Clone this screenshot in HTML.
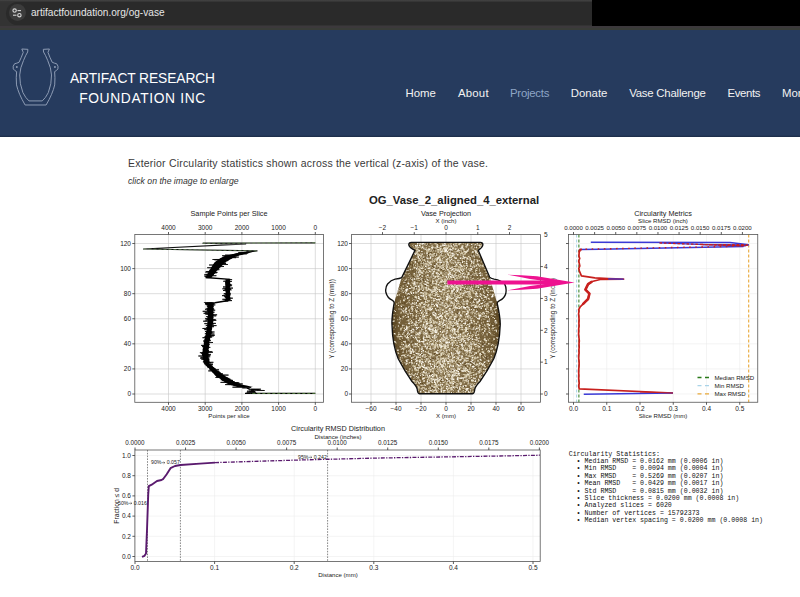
<!DOCTYPE html>
<html><head><meta charset="utf-8">
<style>
*{margin:0;padding:0;box-sizing:border-box}
html,body{width:800px;height:597px;overflow:hidden;background:#fff;font-family:"Liberation Sans",sans-serif}
.abs{position:absolute}
#bar{left:0;top:0;width:800px;height:30px;background:#3c393c}
#bar .top{left:0;top:0;width:592px;height:25.5px;background:linear-gradient(#444 0,#363636 1.5px,#333 3px)}
#bar .grn{left:0;top:27.5px;width:800px;height:2.5px;background:#393c37}
#bar .blk{left:592px;top:0;width:208px;height:25.5px;background:#000}
#bar .pill{left:6px;top:2px;width:600px;height:23px;border-radius:11.5px;background:#2a2a2a}
#bar .ic{left:8.5px;top:3.8px;width:17.2px;height:17.2px;border-radius:50%;background:#3c3c3c}
#bar .url{left:31px;top:7px;font-size:10.1px;color:#e6e6e6;letter-spacing:0px}
#hdr{left:0;top:30px;width:800px;height:107px;background:#263b5e}
#hdr .shade{left:0;top:104.5px;width:800px;height:2.5px;background:linear-gradient(#263b5e,#1b2a45)}
.nav{top:86.8px;font-size:11.4px;color:#f2f2f2;white-space:nowrap}
.brand{left:40px;width:205px;text-align:center;color:#fff;font-size:13.8px;line-height:20.2px;top:69px}
.intro{left:128px;top:157px;font-size:10.5px;letter-spacing:0.2px;color:#3a3a3a;white-space:nowrap}
.click{left:128px;top:176px;font-size:8.7px;color:#333;font-style:italic;white-space:nowrap}
.fig{position:absolute;left:0;top:0}
</style></head><body>
<div id="bar" class="abs">
 <div class="abs top"></div>
 <div class="abs grn"></div>
 <div class="abs pill"></div>
 <div class="abs blk"></div>
 <div class="abs ic"></div>
 <svg class="abs" style="left:10px;top:6.3px" width="14" height="14" viewBox="0 0 14 14">
  <circle cx="4.6" cy="4.6" r="1.7" fill="none" stroke="#d8d8d8" stroke-width="1.1"/>
  <line x1="7.5" y1="4.6" x2="11" y2="4.6" stroke="#d8d8d8" stroke-width="1.1"/>
  <circle cx="9.4" cy="9.2" r="1.7" fill="none" stroke="#d8d8d8" stroke-width="1.1"/>
  <line x1="3" y1="9.2" x2="6.5" y2="9.2" stroke="#d8d8d8" stroke-width="1.1"/>
 </svg>
 <div class="abs url">artifactfoundation.org/og-vase</div>
</div>
<div id="hdr" class="abs">
 <div class="abs shade"></div>
</div>
<svg class="abs" style="left:8px;top:44px" width="55" height="66" viewBox="0 0 498 597">
 <g fill="none" stroke="#8e9cb4" stroke-width="9" stroke-linejoin="round">
 <path d="M125,45 L180,48 L178,72 Q160,100 140,150 Q110,215 106,280 Q104,360 135,440 Q160,490 190,515 L310,515 Q340,490 365,440 Q396,360 394,280 Q390,215 360,150 Q340,100 322,72 L320,48 L375,45 L362,75 Q378,120 400,165 Q420,175 440,178 Q460,200 452,225 Q440,242 422,250 Q428,300 423,370 Q405,450 345,552 L155,552 Q95,450 77,370 Q72,300 78,250 Q60,242 48,225 Q40,200 60,178 Q80,175 100,165 Q122,120 138,75 Z"/>
 </g>
 <circle cx="80" cy="208" r="9" fill="#8e9cb4"/>
 <circle cx="425" cy="208" r="9" fill="#8e9cb4"/>
</svg>
<div class="abs brand"><span style="letter-spacing:-0.1px">ARTIFACT RESEARCH</span><br><span style="letter-spacing:0.64px">FOUNDATION INC</span></div>
<div class="abs nav" style="left:405.5px">Home</div>
<div class="abs nav" style="left:458px;letter-spacing:0.2px">About</div>
<div class="abs nav" style="left:510px;color:#8ea6c6;letter-spacing:-0.25px">Projects</div>
<div class="abs nav" style="left:570.7px">Donate</div>
<div class="abs nav" style="left:629.2px;letter-spacing:-0.22px">Vase Challenge</div>
<div class="abs nav" style="left:727.5px;letter-spacing:-0.38px">Events</div>
<div class="abs nav" style="left:782px">More</div>
<div class="abs intro">Exterior Circularity statistics shown across the vertical (z-axis) of the vase.</div>
<div class="abs click">click on the image to enlarge</div>
<svg class="fig" width="800" height="597" viewBox="0 0 800 597" font-family="Liberation Sans, sans-serif"><line x1="315.30" y1="234.5" x2="315.30" y2="402.3" stroke="#c6c6c6" stroke-width="0.6"/><line x1="278.60" y1="234.5" x2="278.60" y2="402.3" stroke="#c6c6c6" stroke-width="0.6"/><line x1="241.90" y1="234.5" x2="241.90" y2="402.3" stroke="#c6c6c6" stroke-width="0.6"/><line x1="205.20" y1="234.5" x2="205.20" y2="402.3" stroke="#c6c6c6" stroke-width="0.6"/><line x1="168.50" y1="234.5" x2="168.50" y2="402.3" stroke="#c6c6c6" stroke-width="0.6"/><line x1="134.8" y1="394.00" x2="323.5" y2="394.00" stroke="#c6c6c6" stroke-width="0.6"/><line x1="134.8" y1="368.92" x2="323.5" y2="368.92" stroke="#c6c6c6" stroke-width="0.6"/><line x1="134.8" y1="343.84" x2="323.5" y2="343.84" stroke="#c6c6c6" stroke-width="0.6"/><line x1="134.8" y1="318.76" x2="323.5" y2="318.76" stroke="#c6c6c6" stroke-width="0.6"/><line x1="134.8" y1="293.68" x2="323.5" y2="293.68" stroke="#c6c6c6" stroke-width="0.6"/><line x1="134.8" y1="268.60" x2="323.5" y2="268.60" stroke="#c6c6c6" stroke-width="0.6"/><line x1="134.8" y1="243.52" x2="323.5" y2="243.52" stroke="#c6c6c6" stroke-width="0.6"/><polyline points="203.9,302.5 208.3,302.7 212.3,302.9 205.0,303.2 214.5,303.4 211.3,303.6 212.2,303.8 205.0,304.0 213.4,304.3 209.0,304.5 206.0,304.7 215.3,304.9 211.6,305.1 209.2,305.4 211.1,305.6 211.9,305.8 206.8,306.0 210.1,306.2 207.4,306.5 212.1,306.7 208.2,306.9 208.9,307.1 213.1,307.3 209.6,307.6 210.4,307.8 212.7,308.0 211.6,308.2 206.5,308.4 207.8,308.7 214.1,308.9 206.9,309.1 205.0,309.3 213.2,309.5 207.8,309.8 208.9,310.0 215.2,310.2 206.8,310.4 210.4,310.6 207.9,310.9 210.7,311.1 202.7,311.3 208.1,311.5 209.8,311.7 210.2,312.0 214.5,312.2 208.3,312.4 205.5,312.6 204.9,312.8 210.6,313.1 203.6,313.3 212.7,313.5 210.9,313.7 212.3,313.9 205.4,314.2 213.0,314.4 211.2,314.6 217.1,314.8 212.3,315.0 212.7,315.3 211.3,315.5 214.5,315.7 216.2,315.9 211.0,316.1 210.2,316.4 206.2,316.6 210.2,316.8 212.4,317.0 209.0,317.2 208.4,317.5 207.3,317.7 210.6,317.9 212.0,318.1 211.2,318.3 205.2,318.6 208.7,318.8 211.2,319.0 211.7,319.2 206.6,319.4 215.6,319.7 210.4,319.9 205.4,320.1 216.3,320.3 207.9,320.5 209.8,320.8 211.4,321.0 203.2,321.2 213.3,321.4 208.8,321.6 209.7,321.9 210.2,322.1 207.6,322.3 213.0,322.5 212.0,322.7 208.2,323.0 210.8,323.2 215.9,323.4 204.4,323.6 207.8,323.8 213.7,324.1 211.9,324.3 207.7,324.5 211.7,324.7 210.8,324.9 210.7,325.2 205.8,325.4 216.5,325.6 209.3,325.8 206.9,326.0 210.3,326.3 207.8,326.5 214.0,326.7 208.4,326.9 209.1,327.1 211.3,327.4 206.2,327.6 211.2,327.8 210.0,328.0 208.5,328.2 202.5,328.5 211.5,328.7 209.7,328.9 208.7,329.1 208.0,329.3 204.3,329.6 208.9,329.8 210.6,330.0 207.2,330.2 210.1,330.4 209.8,330.7 210.3,330.9 210.6,331.1 207.2,331.3 205.0,331.5 209.7,331.8 214.5,332.0 206.2,332.2 212.3,332.4 207.1,332.6 206.6,332.9 212.2,333.1 209.6,333.3 207.0,333.5 204.9,333.7 214.4,334.0 210.7,334.2 206.7,334.4 206.8,334.6 209.2,334.8 209.6,335.1 214.8,335.3 208.7,335.5 206.1,335.7 213.9,335.9 208.1,336.2 209.7,336.4 211.4,336.6 204.5,336.8 212.2,337.0 210.8,337.3 209.0,337.5 202.5,337.7 208.9,337.9 205.7,338.1 205.9,338.4 209.4,338.6 207.3,338.8 207.2,339.0 206.4,339.2 206.6,339.5 205.8,339.7 207.8,339.9 207.1,340.1 208.2,340.3 210.8,340.6 205.4,340.8 203.1,341.0 206.0,341.2 209.0,341.4 204.8,341.7 204.3,341.9 207.6,342.1 210.1,342.3 213.0,342.5 206.6,342.8 207.8,343.0 207.1,343.2 207.7,343.4 205.1,343.6 204.5,343.9 208.8,344.1 209.3,344.3 209.6,344.5 206.1,344.7 207.9,345.0 206.4,345.2 201.1,345.4 207.7,345.6 207.8,345.8 207.8,346.1 202.0,346.3 203.2,346.5 204.1,346.7 202.6,346.9 208.6,347.2 210.3,347.4 205.2,347.6 208.1,347.8 207.0,348.0 208.4,348.3 204.2,348.5 204.8,348.7 208.3,348.9 206.4,349.1 206.8,349.4 205.6,349.6 205.4,349.8 202.8,350.0 203.7,350.2 204.4,350.5 207.1,350.7 206.1,350.9 203.1,351.1 207.1,351.3 206.5,351.6 211.9,351.8 207.4,352.0 213.0,352.2 204.0,352.4 199.9,352.7 204.5,352.9 203.1,353.1 203.4,353.3 201.3,353.5 205.9,353.8 202.2,354.0 203.1,354.2 210.9,354.4 205.0,354.6 204.6,354.9 205.3,355.1 210.1,355.3 210.4,355.5 207.7,355.7 198.4,356.0 205.8,356.2 206.3,356.4 203.0,356.6 210.2,356.8 204.8,357.1 200.6,357.3 205.5,357.5 205.8,357.7 203.9,357.9 200.2,358.2 201.1,358.4 207.0,358.6 204.0,358.8 209.4,359.0 201.4,359.3 205.4,359.5 206.9,359.7 204.9,359.9 207.0,360.1 208.6,360.4 205.4,360.6 208.4,360.8 205.9,361.0 209.6,361.2 205.2,361.5 207.2,361.7 202.9,361.9 203.9,362.1 213.4,362.3 206.9,362.6 211.0,362.8 208.0,363.0 206.1,363.2 206.3,363.4 204.7,363.7 204.6,363.9 212.9,364.1 206.7,364.3 209.0,364.5 212.8,364.8 211.0,365.0 206.4,365.2 208.1,365.4 205.9,365.6 208.5,365.9 207.2,366.1 207.9,366.3 212.7,366.5 211.6,366.7 209.4,367.0 211.1,367.2 207.7,367.4 208.8,367.6 211.5,367.8 212.5,368.1 214.6,368.3 213.7,368.5 215.5,368.7 209.2,368.9 209.7,369.2 212.0,369.4 214.8,369.6 219.0,369.8 213.9,370.0 212.7,370.3 216.0,370.5 211.3,370.7 208.3,370.9 217.4,371.1 219.4,371.4 212.9,371.6 216.3,371.8 216.3,372.0 213.8,372.2 217.7,372.5 214.8,372.7 214.6,372.9 221.0,373.1 214.8,373.3 214.3,373.6 222.9,373.8 216.2,374.0 215.1,374.2 219.6,374.4 219.0,374.7 220.4,374.9 228.5,375.1 217.1,375.3 218.4,375.5 220.1,375.8 221.5,376.0 216.1,376.2 221.2,376.4 222.1,376.6 223.6,376.9 224.4,377.1 216.8,377.3 215.5,377.5 227.7,377.7 226.2,378.0 221.6,378.2 229.2,378.4 222.2,378.6 227.5,378.8 230.3,379.1 229.6,379.3 221.2,379.5 220.8,379.7 227.3,379.9 226.6,380.2 233.0,380.4 227.8,380.6 228.9,380.8 227.0,381.0 224.8,381.3 230.6,381.5 234.4,381.7 231.1,381.9 228.4,382.1 220.5,382.4 238.6,382.6 229.9,382.8 234.1,383.0 239.6,383.2 235.4,383.5 228.1,383.7 242.7,383.9 233.9,384.1 236.2,384.3 225.1,384.6 232.0,384.8 239.3,385.0 236.6,385.2 236.8,385.4 239.3,385.7 241.6,385.9 237.3,386.1 237.3,386.3 237.8,386.5 245.3,386.8 245.0,387.0 232.5,387.2 251.2,387.4 248.5,387.6 242.3,387.9 247.6,388.1 249.4,388.3 246.9,388.5 249.2,388.7 248.2,389.0 260.9,389.2 251.2,389.4 259.5,389.6 249.0,389.8 257.9,390.1 257.5,390.3 264.6,390.5 250.9,390.7 254.1,390.9 247.0,391.2 252.1,391.4 255.2,391.6 249.5,391.8 255.2,392.0 246.7,392.3 256.2,392.5" fill="none" stroke="#000" stroke-width="0.75"/><polygon points="207.0,302.5 206.9,303.0 207.6,303.5 207.3,304.0 207.0,304.5 207.1,305.0 207.6,305.5 207.6,306.0 207.7,306.5 207.7,307.0 207.5,307.5 207.0,308.0 207.9,308.5 207.4,309.0 207.0,309.5 207.9,310.0 207.9,310.5 207.5,311.0 207.4,311.5 208.0,312.0 207.8,312.5 207.6,313.0 207.9,313.5 207.6,314.0 207.4,314.5 208.0,315.0 207.7,315.5 208.3,316.0 208.1,316.5 207.7,317.0 208.4,317.5 208.0,318.0 208.1,318.5 207.9,319.0 208.2,319.5 208.0,320.0 208.1,320.5 207.8,321.0 208.0,321.5 207.8,322.0 207.5,322.5 207.5,323.0 207.8,323.5 207.5,324.0 207.1,324.5 207.8,325.0 207.0,325.5 207.5,326.0 207.6,326.5 206.6,327.0 207.1,327.5 207.2,328.0 206.7,328.5 207.2,329.0 206.8,329.5 206.9,330.0 206.2,330.5 206.6,331.0 206.5,331.5 206.2,332.0 205.9,332.5 206.2,333.0 205.7,333.5 206.1,334.0 205.7,334.5 205.6,335.0 205.4,335.5 204.9,336.0 204.9,336.5 205.0,337.0 204.7,337.5 205.0,338.0 204.5,338.5 205.1,339.0 204.1,339.5 204.0,340.0 204.3,340.5 204.3,341.0 204.2,341.5 203.5,342.0 203.8,342.5 204.2,343.0 203.5,343.5 203.9,344.0 203.7,344.5 203.8,345.0 203.6,345.5 203.0,346.0 202.8,346.5 203.6,347.0 203.1,347.5 202.8,348.0 203.1,348.5 202.3,349.0 202.8,349.5 202.9,350.0 202.8,350.5 202.4,351.0 202.7,351.5 202.2,352.0 202.4,352.5 201.7,353.0 202.3,353.5 201.8,354.0 202.0,354.5 201.8,355.0 202.2,355.5 202.2,356.0 202.6,356.5 202.9,357.0 203.1,357.5 203.1,358.0 202.7,358.5 202.6,359.0 203.3,359.5 202.9,360.0 203.8,360.5 203.1,361.0 203.3,361.5 203.6,362.0 203.9,362.5 204.0,363.0 203.7,363.5 204.7,364.0 204.4,364.5 205.8,365.0 205.4,365.5 206.4,366.0 207.0,366.5 206.9,367.0 208.0,367.5 208.7,368.0 209.2,368.5 209.5,369.0 209.8,369.5 210.4,370.0 210.2,370.5 211.5,371.0 211.5,371.5 212.0,372.0 212.3,372.5 212.9,373.0 213.4,373.5 214.1,374.0 214.3,374.5 214.6,375.0 215.2,375.5 215.6,376.0 216.6,376.5 216.9,377.0 217.4,377.5 218.9,378.0 219.7,378.5 220.5,379.0 221.1,379.5 221.4,380.0 221.8,380.5 222.5,381.0 224.0,381.5 224.5,382.0 225.0,382.5 225.9,383.0 227.0,383.5 227.8,384.0 228.9,384.5 230.5,385.0 232.7,385.5 233.9,386.0 236.0,386.5 237.0,387.0 253.2,387.0 250.5,386.5 248.6,386.0 246.6,385.5 243.8,385.0 241.9,384.5 239.8,384.0 237.2,383.5 236.6,383.0 235.9,382.5 234.8,382.0 234.7,381.5 232.9,381.0 232.8,380.5 232.1,380.0 231.0,379.5 229.7,379.0 228.6,378.5 227.8,378.0 227.0,377.5 226.8,377.0 225.7,376.5 225.3,376.0 224.6,375.5 223.7,375.0 222.7,374.5 222.3,374.0 221.4,373.5 220.8,373.0 220.1,372.5 219.6,372.0 218.6,371.5 218.2,371.0 217.4,370.5 216.5,370.0 215.8,369.5 215.8,369.0 214.7,368.5 214.2,368.0 214.2,367.5 213.6,367.0 212.4,366.5 212.4,366.0 211.9,365.5 211.4,365.0 210.5,364.5 209.7,364.0 209.2,363.5 209.3,363.0 209.3,362.5 209.1,362.0 209.2,361.5 209.3,361.0 209.3,360.5 209.0,360.0 209.5,359.5 209.1,359.0 208.8,358.5 208.5,358.0 208.9,357.5 208.5,357.0 208.7,356.5 208.6,356.0 208.5,355.5 208.7,355.0 208.8,354.5 208.4,354.0 208.5,353.5 208.9,353.0 208.6,352.5 209.0,352.0 208.6,351.5 208.9,351.0 209.2,350.5 208.7,350.0 208.6,349.5 208.4,349.0 208.8,348.5 208.8,348.0 208.7,347.5 209.0,347.0 209.0,346.5 209.3,346.0 209.4,345.5 208.8,345.0 209.5,344.5 209.2,344.0 209.3,343.5 209.4,343.0 209.6,342.5 209.7,342.0 209.4,341.5 209.2,341.0 210.0,340.5 210.2,340.0 210.2,339.5 210.2,339.0 210.2,338.5 210.1,338.0 210.4,337.5 210.8,337.0 210.4,336.5 211.1,336.0 210.8,335.5 211.3,335.0 210.6,334.5 211.4,334.0 211.3,333.5 210.9,333.0 211.0,332.5 211.5,332.0 211.9,331.5 211.9,331.0 211.3,330.5 212.2,330.0 211.9,329.5 211.9,329.0 212.1,328.5 212.4,328.0 211.7,327.5 212.7,327.0 212.4,326.5 211.8,326.0 212.2,325.5 212.2,325.0 212.9,324.5 212.3,324.0 213.1,323.5 213.2,323.0 213.2,322.5 212.6,322.0 212.8,321.5 213.1,321.0 212.8,320.5 213.3,320.0 213.2,319.5 213.5,319.0 213.2,318.5 213.4,318.0 213.7,317.5 213.5,317.0 213.5,316.5 213.2,316.0 213.7,315.5 213.4,315.0 213.7,314.5 214.0,314.0 213.0,313.5 213.5,313.0 213.4,312.5 213.8,312.0 213.1,311.5 213.2,311.0 213.3,310.5 213.4,310.0 213.9,309.5 213.1,309.0 213.9,308.5 213.0,308.0 213.4,307.5 213.7,307.0 213.8,306.5 213.9,306.0 213.4,305.5 213.7,305.0 213.6,304.5 213.8,304.0 213.4,303.5 213.1,303.0 213.7,302.5" fill="#000"/><polyline points="227.9,279.3 230.3,279.5 232.1,279.7 227.2,280.0 230.1,280.2 227.7,280.4 227.0,280.6 226.8,280.8 224.4,281.1 223.3,281.3 231.8,281.5 228.5,281.7 230.1,281.9 225.5,282.2 228.5,282.4 225.6,282.6 228.7,282.8 228.4,283.0 225.1,283.3 228.9,283.5 226.3,283.7 229.0,283.9 230.3,284.1 226.0,284.4 230.8,284.6 227.6,284.8 232.1,285.0 226.8,285.2 228.7,285.5 231.5,285.7 231.5,285.9 229.3,286.1 228.4,286.3 225.7,286.6 223.1,286.8 223.6,287.0 223.3,287.2 226.3,287.4 228.0,287.7 227.8,287.9 233.0,288.1 226.0,288.3 225.6,288.5 222.4,288.8 230.4,289.0 230.9,289.2 224.6,289.4 230.5,289.6 231.5,289.9 227.1,290.1 226.7,290.3 223.0,290.5 227.1,290.7 229.5,291.0 227.0,291.2 229.6,291.4 226.5,291.6 226.4,291.8 226.5,292.1 226.7,292.3 228.2,292.5 227.6,292.7 226.9,292.9 230.4,293.2 228.0,293.4 223.8,293.6 230.7,293.8 230.1,294.0 229.4,294.3 229.5,294.5 226.3,294.7 230.5,294.9 223.7,295.1 224.8,295.4 222.0,295.6 222.9,295.8 227.9,296.0 228.8,296.2 229.1,296.5 224.1,296.7 228.8,296.9 225.0,297.1 228.9,297.3 229.0,297.6 226.5,297.8 229.5,298.0 232.8,298.2 227.2,298.4 227.6,298.7 227.2,298.9 227.7,299.1 222.4,299.3 230.4,299.5 224.6,299.8 227.8,300.0 228.1,300.2 228.5,300.4 232.0,300.6 227.5,300.9 227.8,301.1 222.8,301.3" fill="none" stroke="#000" stroke-width="0.75"/><polygon points="225.6,279.3 225.3,279.8 225.7,280.3 225.7,280.8 225.2,281.3 225.4,281.8 225.6,282.3 225.1,282.8 225.8,283.3 225.7,283.8 225.2,284.3 225.1,284.8 225.0,285.3 225.6,285.8 225.4,286.3 225.3,286.8 225.5,287.3 225.5,287.8 225.1,288.3 225.0,288.8 225.4,289.3 225.7,289.8 225.4,290.3 225.6,290.8 225.6,291.3 225.3,291.8 225.7,292.3 225.6,292.8 225.6,293.3 225.7,293.8 225.0,294.3 225.2,294.8 225.8,295.3 225.2,295.8 225.3,296.3 225.5,296.8 225.1,297.3 225.6,297.8 225.5,298.3 225.7,298.8 225.3,299.3 225.6,299.8 225.1,300.3 225.0,300.8 224.7,301.3 227.8,301.3 228.9,300.8 229.7,300.3 230.2,299.8 230.3,299.3 230.5,298.8 230.3,298.3 230.4,297.8 230.3,297.3 230.4,296.8 229.8,296.3 230.4,295.8 229.8,295.3 230.4,294.8 230.0,294.3 230.2,293.8 230.0,293.3 229.9,292.8 230.1,292.3 230.0,291.8 230.1,291.3 230.1,290.8 229.8,290.3 230.2,289.8 230.3,289.3 230.3,288.8 230.3,288.3 229.8,287.8 230.0,287.3 230.0,286.8 230.3,286.3 230.4,285.8 230.3,285.3 230.3,284.8 230.3,284.3 230.4,283.8 229.9,283.3 230.2,282.8 230.0,282.3 229.9,281.8 229.8,281.3 229.9,280.8 229.9,280.3 230.4,279.8 230.2,279.3" fill="#000"/><polyline points="254.1,251.0 254.0,251.2 254.2,251.4 251.9,251.5 249.9,251.7 246.4,251.9 248.3,252.1 247.9,252.3 248.6,252.4 238.4,252.6 241.8,252.8 248.2,253.0 243.6,253.2 240.5,253.3 238.5,253.5 240.1,253.7 246.8,253.9 235.6,254.1 242.4,254.2 234.6,254.4 232.5,254.6 235.7,254.8 237.0,255.0 225.1,255.1 238.7,255.3 233.0,255.5 222.1,255.7 236.5,255.9 232.7,256.0 234.2,256.2 230.7,256.4 232.6,256.6 228.0,256.8 233.9,256.9 238.8,257.1 226.7,257.3 234.0,257.5 236.1,257.7 230.4,257.8 231.6,258.0 225.8,258.2 224.8,258.4 225.1,258.6 228.5,258.7 222.0,258.9 223.4,259.1 229.2,259.3 212.5,259.5 226.4,259.6 214.4,259.8 228.6,260.0 222.3,260.2 222.5,260.4 223.5,260.5 227.8,260.7 221.9,260.9 217.7,261.1 223.0,261.3 218.8,261.4 217.7,261.6 223.2,261.8 220.9,262.0 217.6,262.2 221.3,262.3 219.1,262.5 221.3,262.7 215.4,262.9 226.1,263.1 220.9,263.2 226.0,263.4 216.3,263.6 223.1,263.8 220.3,264.0 214.6,264.1 217.4,264.3 227.9,264.5 217.5,264.7 217.0,264.9 209.1,265.0 216.6,265.2 214.1,265.4 217.9,265.6 217.6,265.8 218.8,265.9 212.4,266.1 220.1,266.3 224.0,266.5 219.0,266.7 218.0,266.8 212.4,267.0 214.8,267.2 216.3,267.4 213.4,267.6 207.2,267.7 214.9,267.9 215.2,268.1 218.4,268.3 216.9,268.5 213.9,268.6 216.7,268.8 215.7,269.0 215.2,269.2 211.0,269.4 213.8,269.5 219.4,269.7 216.2,269.9 215.2,270.1 210.9,270.3 214.6,270.4 211.9,270.6 211.1,270.8 215.9,271.0 215.2,271.2 212.7,271.3 206.2,271.5 209.3,271.7 212.5,271.9 205.3,272.1 209.7,272.2 217.5,272.4 209.9,272.6 216.8,272.8 210.2,273.0 211.9,273.1 210.5,273.3 210.0,273.5 211.7,273.7 209.4,273.9 208.7,274.0 209.6,274.2 205.6,274.4 213.9,274.6 204.2,274.8 212.1,274.9 212.1,275.1 211.2,275.3 212.9,275.5 216.4,275.7 214.6,275.8 212.1,276.0 204.4,276.2 210.0,276.4 206.8,276.6 205.4,276.7 209.2,276.9 211.5,277.1 208.8,277.3 206.2,277.5 209.5,277.6 206.4,277.8" fill="none" stroke="#000" stroke-width="0.7"/><polygon points="251.4,251.0 247.1,251.5 243.3,252.0 239.1,252.5 237.3,253.0 235.2,253.5 233.3,254.0 230.8,254.5 229.1,255.0 226.8,255.5 224.8,256.0 223.3,256.5 222.5,257.0 221.8,257.5 220.5,258.0 219.8,258.5 219.2,259.0 218.4,259.5 217.7,260.0 217.2,260.5 216.1,261.0 215.7,261.5 215.0,262.0 214.5,262.5 214.0,263.0 213.9,263.5 213.3,264.0 213.1,264.5 212.8,265.0 212.5,265.5 212.2,266.0 211.8,266.5 211.5,267.0 211.0,267.5 211.1,268.0 210.4,268.5 210.5,269.0 209.6,269.5 209.6,270.0 209.0,270.5 209.0,271.0 208.6,271.5 208.5,272.0 208.4,272.5 207.5,273.0 207.7,273.5 207.4,274.0 207.3,274.5 206.9,275.0 206.2,275.5 206.4,276.0 205.9,276.5 206.0,277.0 206.2,277.5 205.9,278.0 211.0,278.0 211.4,277.5 211.7,277.0 212.2,276.5 212.9,276.0 213.1,275.5 213.4,275.0 213.8,274.5 214.3,274.0 215.1,273.5 215.3,273.0 215.5,272.5 215.9,272.0 216.4,271.5 216.6,271.0 217.1,270.5 217.8,270.0 218.2,269.5 218.9,269.0 219.3,268.5 219.5,268.0 220.5,267.5 220.6,267.0 221.0,266.5 221.7,266.0 222.2,265.5 222.8,265.0 222.9,264.5 223.4,264.0 223.9,263.5 224.4,263.0 224.9,262.5 225.8,262.0 226.5,261.5 227.4,261.0 228.1,260.5 229.3,260.0 229.9,259.5 231.3,259.0 231.9,258.5 232.8,258.0 233.6,257.5 234.6,257.0 235.7,256.5 237.4,256.0 239.1,255.5 241.4,255.0 243.0,254.5 244.9,254.0 247.1,253.5 249.0,253.0 250.9,252.5 252.7,252.0 255.1,251.5 256.9,251.0" fill="#000"/><polyline points="205.6,277.5 230.2,279.3" fill="none" stroke="#000" stroke-width="1.3"/><polyline points="228.5,300.5 215,302.8 205,303.5" fill="none" stroke="#000" stroke-width="1.5"/><polyline points="315.3,393.4 245,393.4" fill="none" stroke="#000" stroke-width="1.4"/><polyline points="315.3,393.4 250,393.4" fill="none" stroke="#6aa84f" stroke-width="0.7" stroke-dasharray="3,2"/><polyline points="315.3,242.8 203,243.2 245.6,243.9 143.5,249 257.5,250.9" fill="none" stroke="#111" stroke-width="1.2" stroke-linejoin="round"/><polyline points="315.3,242.8 203,243.2" fill="none" stroke="#7fb86a" stroke-width="0.6" stroke-dasharray="3,2"/><polyline points="143.5,249 257.5,250.9" fill="none" stroke="#7fb86a" stroke-width="0.5" stroke-dasharray="3,2"/><rect x="134.8" y="234.5" width="188.7" height="167.8" fill="none" stroke="#555" stroke-width="0.8"/><line x1="315.30" y1="234.5" x2="315.30" y2="232.0" stroke="#333" stroke-width="0.8"/><line x1="278.60" y1="234.5" x2="278.60" y2="232.0" stroke="#333" stroke-width="0.8"/><line x1="241.90" y1="234.5" x2="241.90" y2="232.0" stroke="#333" stroke-width="0.8"/><line x1="205.20" y1="234.5" x2="205.20" y2="232.0" stroke="#333" stroke-width="0.8"/><line x1="168.50" y1="234.5" x2="168.50" y2="232.0" stroke="#333" stroke-width="0.8"/><line x1="315.30" y1="402.3" x2="315.30" y2="404.8" stroke="#333" stroke-width="0.8"/><line x1="278.60" y1="402.3" x2="278.60" y2="404.8" stroke="#333" stroke-width="0.8"/><line x1="241.90" y1="402.3" x2="241.90" y2="404.8" stroke="#333" stroke-width="0.8"/><line x1="205.20" y1="402.3" x2="205.20" y2="404.8" stroke="#333" stroke-width="0.8"/><line x1="168.50" y1="402.3" x2="168.50" y2="404.8" stroke="#333" stroke-width="0.8"/><line x1="134.8" y1="394.00" x2="132.3" y2="394.00" stroke="#333" stroke-width="0.8"/><line x1="134.8" y1="368.92" x2="132.3" y2="368.92" stroke="#333" stroke-width="0.8"/><line x1="134.8" y1="343.84" x2="132.3" y2="343.84" stroke="#333" stroke-width="0.8"/><line x1="134.8" y1="318.76" x2="132.3" y2="318.76" stroke="#333" stroke-width="0.8"/><line x1="134.8" y1="293.68" x2="132.3" y2="293.68" stroke="#333" stroke-width="0.8"/><line x1="134.8" y1="268.60" x2="132.3" y2="268.60" stroke="#333" stroke-width="0.8"/><line x1="134.8" y1="243.52" x2="132.3" y2="243.52" stroke="#333" stroke-width="0.8"/><text x="315.30" y="229.70" font-size="6.5" text-anchor="middle" fill="#222" >0</text><text x="315.30" y="411.00" font-size="6.5" text-anchor="middle" fill="#222" >0</text><text x="278.60" y="229.70" font-size="6.5" text-anchor="middle" fill="#222" >1000</text><text x="278.60" y="411.00" font-size="6.5" text-anchor="middle" fill="#222" >1000</text><text x="241.90" y="229.70" font-size="6.5" text-anchor="middle" fill="#222" >2000</text><text x="241.90" y="411.00" font-size="6.5" text-anchor="middle" fill="#222" >2000</text><text x="205.20" y="229.70" font-size="6.5" text-anchor="middle" fill="#222" >3000</text><text x="205.20" y="411.00" font-size="6.5" text-anchor="middle" fill="#222" >3000</text><text x="168.50" y="229.70" font-size="6.5" text-anchor="middle" fill="#222" >4000</text><text x="168.50" y="411.00" font-size="6.5" text-anchor="middle" fill="#222" >4000</text><text x="131.00" y="396.20" font-size="6.5" text-anchor="end" fill="#222" >0</text><text x="131.00" y="371.12" font-size="6.5" text-anchor="end" fill="#222" >20</text><text x="131.00" y="346.04" font-size="6.5" text-anchor="end" fill="#222" >40</text><text x="131.00" y="320.96" font-size="6.5" text-anchor="end" fill="#222" >60</text><text x="131.00" y="295.88" font-size="6.5" text-anchor="end" fill="#222" >80</text><text x="131.00" y="270.80" font-size="6.5" text-anchor="end" fill="#222" >100</text><text x="131.00" y="245.72" font-size="6.5" text-anchor="end" fill="#222" >120</text><text x="229.00" y="216.00" font-size="7.25" text-anchor="middle" fill="#222" >Sample Points per Slice</text><text x="229.00" y="417.60" font-size="6.1" text-anchor="middle" fill="#222" >Points per slice</text><line x1="371.00" y1="234.6" x2="371.00" y2="402.25" stroke="#c6c6c6" stroke-width="0.6"/><line x1="396.00" y1="234.6" x2="396.00" y2="402.25" stroke="#c6c6c6" stroke-width="0.6"/><line x1="421.00" y1="234.6" x2="421.00" y2="402.25" stroke="#c6c6c6" stroke-width="0.6"/><line x1="446.00" y1="234.6" x2="446.00" y2="402.25" stroke="#c6c6c6" stroke-width="0.6"/><line x1="471.00" y1="234.6" x2="471.00" y2="402.25" stroke="#c6c6c6" stroke-width="0.6"/><line x1="496.00" y1="234.6" x2="496.00" y2="402.25" stroke="#c6c6c6" stroke-width="0.6"/><line x1="521.00" y1="234.6" x2="521.00" y2="402.25" stroke="#c6c6c6" stroke-width="0.6"/><line x1="351.5" y1="394.00" x2="540.4" y2="394.00" stroke="#c6c6c6" stroke-width="0.6"/><line x1="351.5" y1="368.92" x2="540.4" y2="368.92" stroke="#c6c6c6" stroke-width="0.6"/><line x1="351.5" y1="343.84" x2="540.4" y2="343.84" stroke="#c6c6c6" stroke-width="0.6"/><line x1="351.5" y1="318.76" x2="540.4" y2="318.76" stroke="#c6c6c6" stroke-width="0.6"/><line x1="351.5" y1="293.68" x2="540.4" y2="293.68" stroke="#c6c6c6" stroke-width="0.6"/><line x1="351.5" y1="268.60" x2="540.4" y2="268.60" stroke="#c6c6c6" stroke-width="0.6"/><line x1="351.5" y1="243.52" x2="540.4" y2="243.52" stroke="#c6c6c6" stroke-width="0.6"/><defs><clipPath id="vc"><path d="M446,242.3 L480.3,242.3 Q482.9,242.3 482.9,244.8 Q482.6,247.6 478.3,250.4 L489.6,277.1 L497.2,303.3 Q500.5,318 500.2,325 Q499.5,345 493.8,358.8 Q487.5,371 480,381.5 Q475.5,386 474.8,389 Q474.5,393.7 472.5,393.7 L419.5,393.7 Q417.5,393.7 417.2,389 Q416.5,386 412,381.5 Q404.5,371 398.2,358.8 Q392.5,345 392,325 Q391.5,318 394.1,303.3 L401.7,277.6 L415,250.4 Q409.2,247.6 408.8,244.8 Q408.8,242.3 411.4,242.3 Z"/></clipPath><linearGradient id="vg" x1="0" x2="1" y1="0" y2="0"><stop offset="0" stop-color="#56421f"/><stop offset="0.07" stop-color="#735e38"/><stop offset="0.5" stop-color="#8a7650"/><stop offset="0.93" stop-color="#735e38"/><stop offset="1" stop-color="#56421f"/></linearGradient></defs><path d="M446,242.3 L480.3,242.3 Q482.9,242.3 482.9,244.8 Q482.6,247.6 478.3,250.4 L489.6,277.1 L497.2,303.3 Q500.5,318 500.2,325 Q499.5,345 493.8,358.8 Q487.5,371 480,381.5 Q475.5,386 474.8,389 Q474.5,393.7 472.5,393.7 L419.5,393.7 Q417.5,393.7 417.2,389 Q416.5,386 412,381.5 Q404.5,371 398.2,358.8 Q392.5,345 392,325 Q391.5,318 394.1,303.3 L401.7,277.6 L415,250.4 Q409.2,247.6 408.8,244.8 Q408.8,242.3 411.4,242.3 Z" fill="url(#vg)"/><g clip-path="url(#vc)"><path fill="#faf7ee" d="M478.8 256.3h1.1v1.1h-1.1zM440.7 354.3h1.3v1.3h-1.3zM446.0 342.7h1.0v1.0h-1.0zM451.7 383.6h0.9v0.9h-0.9zM415.7 285.9h1.0v1.0h-1.0zM403.2 279.5h1.0v1.0h-1.0zM418.9 359.4h0.9v0.9h-0.9zM437.2 257.8h0.8v0.8h-0.8zM393.8 333.0h1.3v1.3h-1.3zM425.7 393.9h1.3v1.3h-1.3zM454.2 337.0h1.1v1.1h-1.1zM439.3 369.4h0.9v0.9h-0.9zM425.4 262.7h1.2v1.2h-1.2zM425.9 368.0h1.2v1.2h-1.2zM461.8 303.6h0.8v0.8h-0.8zM441.9 341.0h0.8v0.8h-0.8zM424.1 263.5h1.1v1.1h-1.1zM445.9 318.0h1.2v1.2h-1.2zM430.0 366.8h1.1v1.1h-1.1zM466.8 270.7h0.6v0.6h-0.6zM411.4 330.9h0.9v0.9h-0.9zM435.4 351.8h0.9v0.9h-0.9zM414.2 303.7h1.0v1.0h-1.0zM450.5 305.2h1.2v1.2h-1.2zM445.4 285.2h0.9v0.9h-0.9zM443.5 389.9h1.4v1.4h-1.4zM486.4 296.2h1.0v1.0h-1.0zM473.3 365.9h1.3v1.3h-1.3zM459.8 257.6h1.3v1.3h-1.3zM492.2 266.5h1.0v1.0h-1.0zM476.1 274.4h1.0v1.0h-1.0zM444.3 346.2h0.7v0.7h-0.7zM413.9 342.6h1.0v1.0h-1.0zM433.6 322.4h1.0v1.0h-1.0zM474.4 244.6h0.9v0.9h-0.9zM442.9 319.3h1.0v1.0h-1.0zM433.1 322.2h1.3v1.3h-1.3zM407.6 265.9h1.4v1.4h-1.4zM483.2 289.3h1.1v1.1h-1.1zM501.7 343.4h1.2v1.2h-1.2zM443.2 286.6h1.4v1.4h-1.4zM400.1 276.4h1.0v1.0h-1.0zM425.6 361.9h0.8v0.8h-0.8zM412.9 292.6h1.2v1.2h-1.2zM440.7 352.9h1.1v1.1h-1.1zM410.8 325.3h1.0v1.0h-1.0zM453.6 292.5h1.2v1.2h-1.2zM435.8 308.0h1.1v1.1h-1.1zM438.4 379.5h0.9v0.9h-0.9zM459.0 307.8h1.3v1.3h-1.3zM424.1 332.2h1.4v1.4h-1.4zM429.9 331.0h1.0v1.0h-1.0zM470.7 318.2h0.9v0.9h-0.9zM449.5 248.9h1.1v1.1h-1.1zM494.1 318.0h0.9v0.9h-0.9zM450.9 371.6h0.6v0.6h-0.6zM471.0 372.2h1.4v1.4h-1.4zM406.4 289.3h1.3v1.3h-1.3zM493.4 275.2h1.3v1.3h-1.3zM412.9 300.2h0.9v0.9h-0.9zM420.7 244.8h1.1v1.1h-1.1zM453.5 340.7h0.9v0.9h-0.9zM437.5 324.7h0.9v0.9h-0.9zM449.9 310.3h0.8v0.8h-0.8zM422.7 294.4h1.4v1.4h-1.4zM473.7 315.4h1.2v1.2h-1.2zM432.9 291.9h0.8v0.8h-0.8zM480.1 314.7h1.2v1.2h-1.2zM432.2 370.7h1.4v1.4h-1.4zM467.4 363.1h1.4v1.4h-1.4zM445.0 327.7h0.9v0.9h-0.9zM433.9 350.8h0.8v0.8h-0.8zM466.1 263.1h1.4v1.4h-1.4zM421.7 373.7h1.1v1.1h-1.1zM453.7 283.6h0.8v0.8h-0.8zM444.0 297.6h0.7v0.7h-0.7zM436.4 364.7h0.8v0.8h-0.8zM465.6 283.2h0.7v0.7h-0.7zM442.2 376.7h0.6v0.6h-0.6zM430.8 339.0h0.7v0.7h-0.7zM409.9 258.1h0.8v0.8h-0.8zM392.5 302.8h0.9v0.9h-0.9zM426.1 269.9h0.7v0.7h-0.7zM447.3 393.0h1.2v1.2h-1.2zM418.1 364.7h1.4v1.4h-1.4zM407.0 297.6h1.4v1.4h-1.4zM444.8 255.4h1.4v1.4h-1.4zM455.0 248.3h1.4v1.4h-1.4zM458.3 296.3h1.2v1.2h-1.2zM421.3 262.3h0.9v0.9h-0.9zM440.2 251.8h1.1v1.1h-1.1zM478.5 244.5h1.5v1.5h-1.5zM414.4 392.4h1.3v1.3h-1.3zM407.4 298.4h0.7v0.7h-0.7zM409.1 257.9h1.3v1.3h-1.3zM469.8 265.8h1.0v1.0h-1.0zM445.3 380.6h1.0v1.0h-1.0zM423.5 354.4h0.7v0.7h-0.7zM434.8 275.8h0.6v0.6h-0.6zM431.8 332.2h1.5v1.5h-1.5zM431.0 332.9h0.8v0.8h-0.8zM475.4 250.5h1.1v1.1h-1.1zM474.4 250.1h1.1v1.1h-1.1zM500.2 381.3h1.0v1.0h-1.0zM402.8 373.9h1.1v1.1h-1.1zM415.9 356.5h1.1v1.1h-1.1zM471.4 282.2h0.8v0.8h-0.8zM398.6 322.1h1.2v1.2h-1.2zM452.9 262.5h0.8v0.8h-0.8zM475.9 344.0h0.7v0.7h-0.7zM455.6 322.0h1.0v1.0h-1.0zM454.3 329.2h0.8v0.8h-0.8zM395.0 326.7h0.7v0.7h-0.7zM471.4 386.3h1.3v1.3h-1.3zM471.3 344.8h0.8v0.8h-0.8zM408.6 389.7h1.2v1.2h-1.2zM421.4 309.3h0.8v0.8h-0.8zM482.9 363.3h1.0v1.0h-1.0zM462.1 344.7h1.5v1.5h-1.5zM461.6 316.8h0.6v0.6h-0.6zM466.8 357.9h1.1v1.1h-1.1zM470.6 352.5h1.2v1.2h-1.2zM472.8 374.2h1.3v1.3h-1.3zM438.7 274.1h1.2v1.2h-1.2zM451.0 392.0h1.3v1.3h-1.3zM482.8 299.8h1.1v1.1h-1.1zM409.9 259.9h1.3v1.3h-1.3zM439.5 365.5h0.8v0.8h-0.8zM414.9 336.2h1.3v1.3h-1.3zM395.3 347.7h0.7v0.7h-0.7zM486.6 251.5h1.4v1.4h-1.4zM426.1 313.1h0.9v0.9h-0.9zM430.3 279.8h0.6v0.6h-0.6zM480.0 370.4h0.9v0.9h-0.9zM437.8 326.5h1.1v1.1h-1.1zM473.1 290.6h1.4v1.4h-1.4zM410.9 278.1h1.5v1.5h-1.5zM465.0 337.4h1.0v1.0h-1.0zM453.3 278.3h0.7v0.7h-0.7zM438.8 299.1h1.3v1.3h-1.3zM432.4 355.6h1.0v1.0h-1.0zM488.7 382.5h0.8v0.8h-0.8zM486.9 293.9h1.3v1.3h-1.3zM465.5 389.1h1.4v1.4h-1.4zM405.6 344.8h1.1v1.1h-1.1zM485.9 298.6h1.0v1.0h-1.0zM457.6 367.3h0.9v0.9h-0.9zM465.8 390.2h1.2v1.2h-1.2zM442.5 243.6h1.0v1.0h-1.0zM430.3 297.5h0.7v0.7h-0.7zM466.4 371.9h0.6v0.6h-0.6zM401.0 277.0h0.9v0.9h-0.9zM406.1 360.6h1.5v1.5h-1.5zM451.8 290.3h1.3v1.3h-1.3zM462.6 298.9h0.7v0.7h-0.7zM467.1 265.4h0.8v0.8h-0.8zM417.1 313.0h0.6v0.6h-0.6zM425.5 287.0h1.3v1.3h-1.3zM482.4 256.0h1.4v1.4h-1.4zM448.3 272.9h0.7v0.7h-0.7zM403.5 267.0h1.4v1.4h-1.4zM432.8 268.8h1.0v1.0h-1.0zM444.8 255.5h1.4v1.4h-1.4zM476.8 288.7h1.0v1.0h-1.0zM453.3 286.2h0.9v0.9h-0.9zM445.0 299.4h0.6v0.6h-0.6zM441.7 323.1h1.3v1.3h-1.3zM441.7 383.4h0.6v0.6h-0.6zM403.9 309.7h0.8v0.8h-0.8zM429.2 392.7h0.7v0.7h-0.7zM463.7 257.2h1.4v1.4h-1.4zM447.0 283.2h1.3v1.3h-1.3zM458.6 297.2h1.2v1.2h-1.2zM473.3 255.9h1.3v1.3h-1.3zM428.0 390.6h0.8v0.8h-0.8zM444.7 321.6h0.7v0.7h-0.7zM459.9 333.9h1.1v1.1h-1.1zM420.1 391.1h1.3v1.3h-1.3zM447.4 346.7h1.3v1.3h-1.3zM462.8 242.6h0.9v0.9h-0.9zM469.1 292.8h0.8v0.8h-0.8zM431.3 380.3h1.2v1.2h-1.2zM412.3 315.2h1.1v1.1h-1.1zM428.5 372.8h1.4v1.4h-1.4zM479.7 367.7h1.0v1.0h-1.0zM482.9 364.5h0.8v0.8h-0.8zM488.8 382.4h1.5v1.5h-1.5zM435.7 264.1h0.7v0.7h-0.7zM447.0 341.4h1.3v1.3h-1.3zM451.0 245.4h1.4v1.4h-1.4zM494.2 273.4h1.0v1.0h-1.0zM418.8 340.3h1.3v1.3h-1.3zM405.9 356.7h1.4v1.4h-1.4zM455.2 291.2h0.8v0.8h-0.8zM451.3 320.7h1.2v1.2h-1.2zM452.5 326.0h1.1v1.1h-1.1zM420.2 356.6h0.9v0.9h-0.9zM483.8 344.1h0.7v0.7h-0.7zM433.9 336.3h1.4v1.4h-1.4zM496.4 354.9h0.6v0.6h-0.6zM492.0 344.3h0.9v0.9h-0.9zM445.1 364.4h0.7v0.7h-0.7zM447.1 269.0h1.4v1.4h-1.4zM402.3 248.6h1.3v1.3h-1.3zM415.0 336.9h1.4v1.4h-1.4zM476.1 316.8h1.0v1.0h-1.0zM476.5 291.6h1.1v1.1h-1.1zM450.6 321.1h1.0v1.0h-1.0zM484.7 356.0h0.9v0.9h-0.9zM425.1 310.1h1.3v1.3h-1.3zM440.0 341.0h1.0v1.0h-1.0zM452.4 321.0h1.3v1.3h-1.3zM453.7 374.8h1.3v1.3h-1.3zM448.0 262.6h0.8v0.8h-0.8zM435.1 379.1h0.9v0.9h-0.9zM430.5 266.4h0.9v0.9h-0.9zM436.3 332.1h1.1v1.1h-1.1zM465.0 385.0h1.2v1.2h-1.2zM422.1 360.8h0.9v0.9h-0.9zM479.1 337.4h1.0v1.0h-1.0zM419.9 270.3h1.4v1.4h-1.4zM483.7 361.5h1.5v1.5h-1.5zM430.2 308.3h1.0v1.0h-1.0zM446.6 299.2h1.3v1.3h-1.3zM417.1 299.9h1.0v1.0h-1.0zM424.4 326.9h0.9v0.9h-0.9zM442.1 267.8h0.7v0.7h-0.7zM453.4 268.0h1.0v1.0h-1.0zM456.6 330.9h1.3v1.3h-1.3zM459.6 271.9h1.3v1.3h-1.3zM456.8 263.9h0.7v0.7h-0.7zM485.8 274.3h1.1v1.1h-1.1zM416.2 278.2h0.9v0.9h-0.9zM442.3 340.3h0.7v0.7h-0.7zM429.4 268.3h0.9v0.9h-0.9zM456.6 342.4h1.4v1.4h-1.4zM423.6 270.9h0.8v0.8h-0.8zM434.4 345.4h1.4v1.4h-1.4zM490.1 382.4h0.9v0.9h-0.9zM458.8 356.5h0.9v0.9h-0.9zM424.2 283.8h0.9v0.9h-0.9zM449.9 365.2h0.7v0.7h-0.7zM457.1 254.1h1.4v1.4h-1.4zM440.1 371.5h1.1v1.1h-1.1zM416.8 361.7h0.8v0.8h-0.8zM455.1 280.8h0.7v0.7h-0.7zM440.9 280.4h0.6v0.6h-0.6zM428.5 300.2h1.2v1.2h-1.2zM486.3 244.6h0.8v0.8h-0.8zM461.2 276.5h1.0v1.0h-1.0zM455.7 271.8h1.0v1.0h-1.0zM439.9 384.1h0.9v0.9h-0.9zM405.3 289.3h1.4v1.4h-1.4zM474.3 380.9h0.8v0.8h-0.8zM461.0 307.4h0.7v0.7h-0.7zM491.5 250.4h1.3v1.3h-1.3zM460.6 294.1h0.7v0.7h-0.7zM457.2 384.8h1.4v1.4h-1.4zM420.8 286.3h0.7v0.7h-0.7zM464.9 354.7h0.6v0.6h-0.6zM448.2 246.9h0.6v0.6h-0.6zM468.6 374.2h1.0v1.0h-1.0zM485.0 243.9h0.8v0.8h-0.8zM482.2 348.9h0.7v0.7h-0.7zM439.7 304.6h0.9v0.9h-0.9zM466.3 271.4h0.8v0.8h-0.8zM476.4 302.9h0.7v0.7h-0.7zM432.5 330.8h0.9v0.9h-0.9zM420.1 382.1h1.0v1.0h-1.0zM465.8 308.7h1.1v1.1h-1.1zM421.1 272.1h1.4v1.4h-1.4zM501.0 289.5h0.7v0.7h-0.7zM431.4 386.9h0.7v0.7h-0.7zM454.3 274.2h1.2v1.2h-1.2zM410.6 333.9h0.7v0.7h-0.7zM472.2 380.2h1.1v1.1h-1.1zM447.0 287.9h0.7v0.7h-0.7zM449.9 297.2h1.4v1.4h-1.4zM490.3 357.8h1.3v1.3h-1.3zM433.1 332.1h1.2v1.2h-1.2zM419.5 339.7h0.8v0.8h-0.8zM453.8 251.5h0.8v0.8h-0.8zM427.7 376.6h1.1v1.1h-1.1zM481.2 391.7h1.3v1.3h-1.3zM440.7 346.4h0.8v0.8h-0.8zM472.9 347.7h1.0v1.0h-1.0zM492.4 266.5h1.3v1.3h-1.3zM419.9 245.6h0.9v0.9h-0.9zM431.8 290.7h0.8v0.8h-0.8zM403.1 344.0h0.9v0.9h-0.9zM407.8 339.5h1.1v1.1h-1.1zM426.9 255.2h1.1v1.1h-1.1zM427.5 264.8h0.8v0.8h-0.8zM446.7 251.1h0.7v0.7h-0.7zM443.7 361.2h1.3v1.3h-1.3zM407.3 268.9h1.1v1.1h-1.1zM435.8 272.2h1.2v1.2h-1.2zM414.5 368.4h0.8v0.8h-0.8zM413.6 345.7h1.1v1.1h-1.1zM442.4 322.9h1.0v1.0h-1.0zM442.8 321.2h1.5v1.5h-1.5zM496.8 337.4h1.4v1.4h-1.4zM417.9 381.5h1.0v1.0h-1.0zM415.9 353.4h0.8v0.8h-0.8zM449.7 322.0h1.5v1.5h-1.5zM439.0 339.8h1.3v1.3h-1.3zM427.1 274.4h1.5v1.5h-1.5zM406.2 258.9h0.9v0.9h-0.9zM410.2 375.9h1.3v1.3h-1.3zM404.7 391.5h0.6v0.6h-0.6zM422.3 315.9h1.2v1.2h-1.2zM436.9 258.4h1.1v1.1h-1.1zM429.7 319.4h1.3v1.3h-1.3zM425.3 290.3h0.9v0.9h-0.9zM424.6 327.5h1.5v1.5h-1.5zM423.5 305.0h0.7v0.7h-0.7zM421.1 348.8h1.2v1.2h-1.2zM477.2 326.2h0.8v0.8h-0.8zM469.9 374.7h1.0v1.0h-1.0zM481.1 248.7h1.2v1.2h-1.2zM427.6 352.1h0.9v0.9h-0.9zM479.4 325.1h1.2v1.2h-1.2zM390.0 260.3h0.7v0.7h-0.7zM444.3 282.3h1.4v1.4h-1.4zM423.8 387.2h0.8v0.8h-0.8zM434.8 339.8h1.2v1.2h-1.2zM440.8 279.1h0.7v0.7h-0.7zM420.2 252.9h0.7v0.7h-0.7zM465.1 326.9h1.2v1.2h-1.2zM472.4 378.4h1.1v1.1h-1.1zM451.8 274.5h0.6v0.6h-0.6zM463.8 297.6h0.9v0.9h-0.9zM453.1 337.0h1.4v1.4h-1.4zM478.5 380.3h1.4v1.4h-1.4zM409.5 355.3h1.2v1.2h-1.2zM409.8 313.0h1.1v1.1h-1.1zM464.5 324.2h0.8v0.8h-0.8zM446.0 386.0h0.8v0.8h-0.8zM421.1 351.1h1.0v1.0h-1.0zM483.2 388.2h1.0v1.0h-1.0zM483.1 372.9h1.0v1.0h-1.0zM415.1 253.9h1.1v1.1h-1.1zM458.6 283.2h1.4v1.4h-1.4zM426.4 270.9h0.8v0.8h-0.8zM450.1 335.3h1.2v1.2h-1.2zM412.6 356.5h1.2v1.2h-1.2zM425.8 371.7h1.0v1.0h-1.0zM415.9 338.4h1.3v1.3h-1.3zM416.4 248.4h0.9v0.9h-0.9zM427.2 355.0h0.6v0.6h-0.6zM448.8 312.0h0.7v0.7h-0.7zM492.7 390.4h0.8v0.8h-0.8zM476.3 302.3h1.1v1.1h-1.1zM495.8 272.8h1.1v1.1h-1.1zM473.1 305.0h0.9v0.9h-0.9zM418.5 368.0h1.1v1.1h-1.1zM439.3 251.2h1.2v1.2h-1.2zM451.8 293.7h0.7v0.7h-0.7zM475.3 339.3h1.2v1.2h-1.2zM436.2 330.4h1.4v1.4h-1.4zM407.5 282.4h1.5v1.5h-1.5zM453.6 270.6h1.3v1.3h-1.3zM421.1 256.5h0.7v0.7h-0.7zM488.2 284.6h1.5v1.5h-1.5zM476.4 314.0h0.8v0.8h-0.8zM442.8 328.6h1.2v1.2h-1.2zM458.8 268.7h1.3v1.3h-1.3zM476.4 383.7h1.1v1.1h-1.1zM465.5 357.4h1.4v1.4h-1.4zM473.5 386.5h1.0v1.0h-1.0zM411.4 322.4h1.4v1.4h-1.4zM436.0 242.2h0.8v0.8h-0.8zM457.1 384.7h0.8v0.8h-0.8zM426.1 297.3h1.2v1.2h-1.2zM419.3 331.6h1.3v1.3h-1.3zM453.9 388.2h0.7v0.7h-0.7zM475.7 336.8h1.2v1.2h-1.2zM467.9 370.9h1.3v1.3h-1.3zM445.0 347.8h1.1v1.1h-1.1zM419.4 271.6h0.8v0.8h-0.8zM423.5 283.2h0.9v0.9h-0.9zM423.2 336.3h1.5v1.5h-1.5zM452.5 336.5h1.2v1.2h-1.2zM449.0 283.0h1.3v1.3h-1.3zM479.3 315.6h1.0v1.0h-1.0zM466.7 344.7h0.7v0.7h-0.7zM491.1 301.2h1.2v1.2h-1.2zM439.4 258.2h1.0v1.0h-1.0zM440.5 369.6h0.9v0.9h-0.9zM446.2 260.6h0.7v0.7h-0.7zM475.3 282.6h0.9v0.9h-0.9zM470.4 332.9h1.0v1.0h-1.0zM475.1 334.7h1.4v1.4h-1.4zM474.2 306.8h1.1v1.1h-1.1zM451.7 374.4h1.5v1.5h-1.5zM460.3 358.9h1.3v1.3h-1.3zM428.7 255.3h0.9v0.9h-0.9zM443.9 319.7h1.2v1.2h-1.2zM436.5 379.0h1.0v1.0h-1.0zM462.1 246.4h1.2v1.2h-1.2zM418.2 341.8h0.7v0.7h-0.7zM458.8 269.2h1.2v1.2h-1.2zM427.9 391.8h1.3v1.3h-1.3zM405.1 308.5h1.4v1.4h-1.4zM413.2 351.7h1.4v1.4h-1.4zM416.2 369.7h1.3v1.3h-1.3zM481.8 274.9h0.8v0.8h-0.8zM467.4 296.5h1.1v1.1h-1.1zM468.3 294.9h0.9v0.9h-0.9zM476.8 297.2h1.2v1.2h-1.2zM488.8 331.6h1.5v1.5h-1.5zM439.5 252.2h0.7v0.7h-0.7zM447.1 380.9h1.4v1.4h-1.4zM471.0 311.8h0.6v0.6h-0.6zM394.3 289.3h0.7v0.7h-0.7zM433.8 365.0h1.3v1.3h-1.3zM433.3 271.3h0.7v0.7h-0.7zM447.8 339.0h0.7v0.7h-0.7zM493.2 304.1h0.6v0.6h-0.6zM416.3 305.2h0.8v0.8h-0.8zM419.0 357.3h0.8v0.8h-0.8zM435.4 280.1h1.1v1.1h-1.1zM432.7 270.8h0.9v0.9h-0.9zM431.8 307.9h1.1v1.1h-1.1zM442.7 267.1h1.1v1.1h-1.1zM459.4 250.5h0.8v0.8h-0.8zM445.8 307.1h1.3v1.3h-1.3zM466.2 314.1h1.2v1.2h-1.2zM445.3 333.4h1.2v1.2h-1.2zM463.5 361.4h1.2v1.2h-1.2zM447.1 253.2h1.3v1.3h-1.3zM402.2 324.8h1.3v1.3h-1.3zM458.7 318.6h1.3v1.3h-1.3zM412.1 268.7h0.8v0.8h-0.8zM428.4 259.8h0.8v0.8h-0.8zM422.3 318.3h0.9v0.9h-0.9zM434.9 347.6h0.9v0.9h-0.9zM425.3 248.8h1.2v1.2h-1.2zM444.2 242.8h1.4v1.4h-1.4zM416.8 291.4h0.8v0.8h-0.8zM486.7 320.6h1.3v1.3h-1.3zM447.8 283.9h0.8v0.8h-0.8zM408.6 320.5h0.9v0.9h-0.9zM453.8 253.8h1.2v1.2h-1.2zM466.6 307.2h1.1v1.1h-1.1zM446.2 268.0h0.9v0.9h-0.9zM432.9 385.8h0.7v0.7h-0.7zM430.0 258.2h0.9v0.9h-0.9zM439.5 296.1h0.8v0.8h-0.8zM462.9 284.8h1.2v1.2h-1.2zM442.7 325.1h1.2v1.2h-1.2zM482.4 325.9h0.9v0.9h-0.9zM493.2 314.2h0.7v0.7h-0.7zM440.3 358.7h1.3v1.3h-1.3zM451.3 376.4h1.4v1.4h-1.4zM459.5 385.9h1.1v1.1h-1.1zM464.9 342.0h1.3v1.3h-1.3zM414.7 358.8h1.0v1.0h-1.0zM409.0 311.6h0.9v0.9h-0.9zM435.1 307.9h1.5v1.5h-1.5zM451.6 361.5h1.2v1.2h-1.2zM451.9 371.4h0.8v0.8h-0.8zM441.1 262.0h0.9v0.9h-0.9zM457.6 371.1h1.4v1.4h-1.4zM454.2 382.3h0.8v0.8h-0.8zM459.0 368.9h1.1v1.1h-1.1zM454.8 265.7h1.0v1.0h-1.0zM438.7 370.4h0.6v0.6h-0.6zM490.5 256.6h1.4v1.4h-1.4zM434.7 334.6h1.0v1.0h-1.0zM442.1 360.6h1.0v1.0h-1.0zM457.0 368.5h1.3v1.3h-1.3zM434.8 294.8h0.9v0.9h-0.9zM468.9 259.5h0.6v0.6h-0.6zM491.6 245.4h1.5v1.5h-1.5zM424.3 311.6h1.1v1.1h-1.1zM439.2 282.3h1.2v1.2h-1.2zM398.2 377.8h0.8v0.8h-0.8zM449.8 272.2h1.3v1.3h-1.3zM443.1 393.7h0.8v0.8h-0.8zM454.1 292.4h1.0v1.0h-1.0zM427.7 267.3h1.5v1.5h-1.5zM422.8 262.0h1.1v1.1h-1.1zM441.9 309.4h1.4v1.4h-1.4zM445.7 249.6h1.4v1.4h-1.4zM404.1 375.5h0.8v0.8h-0.8zM457.5 249.3h1.2v1.2h-1.2zM407.3 293.3h1.4v1.4h-1.4zM485.7 263.7h1.2v1.2h-1.2zM405.3 291.9h1.3v1.3h-1.3zM394.0 387.4h0.9v0.9h-0.9zM446.2 352.0h0.7v0.7h-0.7zM462.9 368.1h1.2v1.2h-1.2zM456.0 320.9h1.2v1.2h-1.2zM409.8 251.0h1.2v1.2h-1.2zM460.0 296.3h1.1v1.1h-1.1zM465.3 328.5h1.5v1.5h-1.5zM432.7 391.7h0.8v0.8h-0.8zM466.7 244.3h1.4v1.4h-1.4zM458.8 372.8h1.1v1.1h-1.1zM457.8 379.6h0.9v0.9h-0.9zM476.1 268.3h0.7v0.7h-0.7zM458.7 354.7h1.0v1.0h-1.0zM492.3 329.7h0.9v0.9h-0.9zM448.8 376.2h1.0v1.0h-1.0zM486.6 258.9h1.3v1.3h-1.3zM448.7 251.5h0.8v0.8h-0.8zM425.3 391.8h1.2v1.2h-1.2zM472.7 360.4h0.7v0.7h-0.7zM428.7 248.6h1.4v1.4h-1.4zM421.4 244.6h0.7v0.7h-0.7zM454.2 331.9h0.8v0.8h-0.8zM430.7 355.5h0.8v0.8h-0.8zM409.6 386.4h1.0v1.0h-1.0zM405.8 345.8h1.4v1.4h-1.4zM445.3 342.1h1.4v1.4h-1.4zM469.7 383.1h0.7v0.7h-0.7zM475.7 332.3h1.1v1.1h-1.1zM488.4 249.8h0.7v0.7h-0.7zM443.0 354.1h0.7v0.7h-0.7zM463.4 322.9h1.2v1.2h-1.2zM446.7 247.5h1.4v1.4h-1.4zM456.9 308.3h0.8v0.8h-0.8zM463.1 307.0h1.5v1.5h-1.5zM414.2 297.8h1.5v1.5h-1.5zM476.1 293.1h1.4v1.4h-1.4zM463.1 349.2h0.7v0.7h-0.7zM436.7 306.1h1.3v1.3h-1.3zM463.4 303.7h1.3v1.3h-1.3zM466.5 251.0h0.7v0.7h-0.7zM450.4 247.7h1.0v1.0h-1.0zM455.6 297.8h1.4v1.4h-1.4zM418.5 332.3h0.9v0.9h-0.9zM451.3 347.3h1.3v1.3h-1.3zM405.4 263.7h0.7v0.7h-0.7zM458.6 327.0h1.2v1.2h-1.2zM417.7 385.7h0.6v0.6h-0.6zM486.2 246.5h0.8v0.8h-0.8zM440.8 390.5h0.9v0.9h-0.9zM478.4 251.0h1.2v1.2h-1.2zM476.0 327.8h1.3v1.3h-1.3zM450.9 258.9h1.1v1.1h-1.1zM415.5 361.1h1.0v1.0h-1.0zM437.9 249.0h1.3v1.3h-1.3zM465.1 250.9h1.3v1.3h-1.3zM429.1 327.8h1.4v1.4h-1.4zM425.8 391.9h0.9v0.9h-0.9zM428.7 344.2h1.1v1.1h-1.1zM435.5 289.6h1.1v1.1h-1.1zM474.8 381.0h1.3v1.3h-1.3zM487.6 295.2h0.9v0.9h-0.9zM413.5 286.9h1.2v1.2h-1.2zM437.6 381.2h0.9v0.9h-0.9zM468.4 337.1h1.4v1.4h-1.4zM447.9 323.1h0.7v0.7h-0.7zM456.3 285.0h1.1v1.1h-1.1zM425.0 265.6h1.5v1.5h-1.5zM457.0 291.0h0.9v0.9h-0.9zM476.1 374.6h0.7v0.7h-0.7zM474.1 302.3h0.7v0.7h-0.7zM465.4 354.7h0.9v0.9h-0.9zM435.7 272.8h1.1v1.1h-1.1zM435.7 331.5h0.9v0.9h-0.9zM496.9 359.4h1.3v1.3h-1.3zM495.5 306.0h1.0v1.0h-1.0zM449.3 283.9h1.5v1.5h-1.5zM408.7 371.2h1.0v1.0h-1.0zM457.7 302.8h0.9v0.9h-0.9zM426.0 372.6h0.6v0.6h-0.6zM402.6 316.1h1.2v1.2h-1.2zM409.6 352.6h1.2v1.2h-1.2zM421.2 251.1h0.8v0.8h-0.8zM447.1 330.1h1.1v1.1h-1.1zM472.1 333.9h0.7v0.7h-0.7zM429.8 242.3h1.3v1.3h-1.3zM455.5 370.3h1.3v1.3h-1.3zM480.0 285.4h0.7v0.7h-0.7zM465.8 262.5h1.5v1.5h-1.5zM417.3 334.5h0.7v0.7h-0.7zM451.1 269.8h1.1v1.1h-1.1zM407.8 374.9h1.1v1.1h-1.1zM452.5 374.0h0.9v0.9h-0.9zM456.8 297.2h1.4v1.4h-1.4zM458.4 268.8h0.8v0.8h-0.8zM441.3 364.3h1.5v1.5h-1.5zM481.8 251.2h1.4v1.4h-1.4zM484.8 264.1h0.8v0.8h-0.8zM430.4 392.9h1.1v1.1h-1.1zM461.2 344.3h1.4v1.4h-1.4zM456.3 276.8h0.8v0.8h-0.8zM433.6 311.9h0.6v0.6h-0.6zM404.5 371.9h0.9v0.9h-0.9zM469.9 288.3h0.8v0.8h-0.8zM447.9 355.6h1.4v1.4h-1.4zM484.9 328.6h1.4v1.4h-1.4zM424.5 384.7h1.3v1.3h-1.3zM431.5 385.4h1.3v1.3h-1.3zM425.7 358.6h0.8v0.8h-0.8zM467.7 249.6h1.0v1.0h-1.0zM461.0 350.0h1.2v1.2h-1.2zM441.0 390.1h0.7v0.7h-0.7zM472.6 334.6h0.9v0.9h-0.9zM413.4 346.6h0.8v0.8h-0.8zM497.5 285.5h1.1v1.1h-1.1zM436.7 246.6h1.3v1.3h-1.3zM472.6 291.1h0.7v0.7h-0.7zM461.1 301.6h0.6v0.6h-0.6zM500.3 303.8h1.4v1.4h-1.4zM451.8 282.0h1.3v1.3h-1.3zM454.5 316.4h1.0v1.0h-1.0zM395.1 389.7h1.1v1.1h-1.1zM411.6 290.4h0.8v0.8h-0.8zM421.3 242.3h1.4v1.4h-1.4zM401.8 296.4h0.8v0.8h-0.8zM415.4 292.1h1.1v1.1h-1.1zM440.9 280.5h0.9v0.9h-0.9zM482.6 283.0h0.9v0.9h-0.9zM425.7 326.9h1.0v1.0h-1.0zM415.2 286.2h1.0v1.0h-1.0zM449.5 360.7h1.2v1.2h-1.2zM467.0 268.1h1.5v1.5h-1.5zM480.4 288.0h0.9v0.9h-0.9zM485.9 274.0h1.2v1.2h-1.2zM448.5 248.9h0.8v0.8h-0.8zM471.6 257.4h0.9v0.9h-0.9zM478.6 264.8h0.9v0.9h-0.9zM409.0 293.9h1.1v1.1h-1.1zM476.6 253.1h1.3v1.3h-1.3zM443.1 281.1h0.8v0.8h-0.8zM407.4 359.0h1.3v1.3h-1.3zM414.8 377.5h0.7v0.7h-0.7zM450.8 312.4h1.1v1.1h-1.1zM425.7 394.0h0.8v0.8h-0.8zM476.1 327.7h1.5v1.5h-1.5zM416.6 306.8h1.4v1.4h-1.4zM445.5 361.0h0.7v0.7h-0.7zM488.5 360.4h1.1v1.1h-1.1zM448.6 386.8h0.8v0.8h-0.8zM500.3 334.3h1.3v1.3h-1.3zM426.7 242.2h0.8v0.8h-0.8zM399.6 320.7h0.9v0.9h-0.9zM460.8 382.5h1.3v1.3h-1.3zM412.1 386.6h1.3v1.3h-1.3zM436.6 389.8h0.8v0.8h-0.8zM448.5 286.0h1.1v1.1h-1.1zM391.2 296.9h1.2v1.2h-1.2zM394.7 387.4h1.1v1.1h-1.1zM493.8 267.1h1.4v1.4h-1.4zM485.4 316.5h1.3v1.3h-1.3zM471.2 304.3h1.1v1.1h-1.1zM467.1 312.9h1.2v1.2h-1.2zM410.3 383.5h1.1v1.1h-1.1zM455.2 273.1h0.7v0.7h-0.7zM475.3 283.0h1.2v1.2h-1.2zM413.3 388.6h1.0v1.0h-1.0zM449.1 374.0h1.4v1.4h-1.4zM469.5 389.2h1.4v1.4h-1.4zM410.3 374.3h0.9v0.9h-0.9zM458.3 345.9h1.0v1.0h-1.0zM460.1 347.9h0.7v0.7h-0.7zM476.5 382.8h0.9v0.9h-0.9zM476.1 383.7h1.3v1.3h-1.3zM435.0 327.0h1.0v1.0h-1.0zM434.5 287.8h0.9v0.9h-0.9zM437.2 349.8h1.2v1.2h-1.2zM430.6 253.9h0.9v0.9h-0.9zM444.8 344.6h1.2v1.2h-1.2zM466.4 257.9h1.5v1.5h-1.5zM421.1 288.4h1.0v1.0h-1.0zM418.3 271.2h1.0v1.0h-1.0zM411.4 312.8h1.2v1.2h-1.2zM408.0 345.1h1.2v1.2h-1.2zM421.0 244.8h1.1v1.1h-1.1zM449.1 273.1h1.3v1.3h-1.3zM498.4 248.6h1.4v1.4h-1.4zM460.5 363.7h1.0v1.0h-1.0zM473.0 300.7h1.1v1.1h-1.1zM422.7 375.0h1.2v1.2h-1.2zM462.1 283.5h1.4v1.4h-1.4zM408.0 378.5h0.7v0.7h-0.7zM405.4 293.0h0.7v0.7h-0.7zM441.2 346.8h1.3v1.3h-1.3zM459.5 335.8h1.3v1.3h-1.3zM456.2 323.6h1.2v1.2h-1.2zM420.4 295.1h1.2v1.2h-1.2zM421.9 267.1h0.9v0.9h-0.9zM432.4 355.0h1.1v1.1h-1.1zM459.9 382.0h0.8v0.8h-0.8zM391.7 327.0h1.2v1.2h-1.2zM431.1 302.5h0.8v0.8h-0.8zM429.5 370.6h0.7v0.7h-0.7zM396.0 295.4h1.1v1.1h-1.1zM414.2 324.2h1.1v1.1h-1.1zM451.8 385.4h1.2v1.2h-1.2zM408.4 279.4h0.9v0.9h-0.9zM431.6 381.5h1.1v1.1h-1.1zM497.6 281.5h1.2v1.2h-1.2zM462.7 249.6h0.7v0.7h-0.7zM432.7 245.7h1.0v1.0h-1.0zM425.3 284.3h1.3v1.3h-1.3zM467.3 291.0h1.0v1.0h-1.0zM472.4 282.6h1.2v1.2h-1.2zM466.0 310.3h0.8v0.8h-0.8zM492.4 273.5h0.9v0.9h-0.9zM436.3 269.0h0.9v0.9h-0.9zM431.2 303.8h1.3v1.3h-1.3zM495.8 388.4h0.7v0.7h-0.7zM461.4 246.5h1.4v1.4h-1.4zM448.6 384.9h1.2v1.2h-1.2zM430.5 377.9h1.5v1.5h-1.5zM485.0 315.0h1.1v1.1h-1.1zM481.6 273.5h0.9v0.9h-0.9zM461.4 377.3h1.4v1.4h-1.4zM454.9 305.7h0.8v0.8h-0.8zM473.7 266.3h1.3v1.3h-1.3zM434.9 329.7h1.4v1.4h-1.4zM445.1 339.3h0.8v0.8h-0.8zM405.2 272.7h0.7v0.7h-0.7zM451.9 371.2h0.8v0.8h-0.8zM446.1 310.8h1.5v1.5h-1.5zM429.1 329.2h1.4v1.4h-1.4zM416.5 357.5h0.8v0.8h-0.8zM451.4 302.3h1.0v1.0h-1.0zM391.0 340.8h0.8v0.8h-0.8zM443.3 261.8h1.2v1.2h-1.2zM479.7 327.5h0.8v0.8h-0.8zM451.4 370.0h1.2v1.2h-1.2zM423.8 315.5h1.4v1.4h-1.4zM407.3 313.2h1.4v1.4h-1.4zM482.0 288.2h1.2v1.2h-1.2zM426.3 266.8h0.7v0.7h-0.7zM451.7 271.9h0.7v0.7h-0.7zM480.9 281.2h0.6v0.6h-0.6zM456.7 352.4h1.2v1.2h-1.2zM439.4 361.5h1.1v1.1h-1.1zM438.2 323.7h1.0v1.0h-1.0zM446.4 368.4h0.7v0.7h-0.7zM436.8 259.6h1.2v1.2h-1.2zM445.8 371.0h0.9v0.9h-0.9zM428.5 327.8h1.2v1.2h-1.2zM456.3 350.7h1.5v1.5h-1.5zM444.4 280.3h1.4v1.4h-1.4zM480.8 261.4h0.6v0.6h-0.6zM420.3 320.7h1.5v1.5h-1.5zM446.9 304.5h1.2v1.2h-1.2zM401.4 389.3h1.4v1.4h-1.4zM408.2 293.0h1.2v1.2h-1.2zM438.1 384.3h1.2v1.2h-1.2zM477.7 286.9h1.4v1.4h-1.4zM471.7 303.5h0.7v0.7h-0.7zM459.5 290.4h1.4v1.4h-1.4zM419.7 354.0h1.3v1.3h-1.3zM494.7 289.2h0.6v0.6h-0.6zM487.7 265.5h0.8v0.8h-0.8zM482.2 379.6h1.4v1.4h-1.4zM441.1 264.9h0.9v0.9h-0.9zM401.0 375.3h1.3v1.3h-1.3zM405.8 326.3h1.4v1.4h-1.4zM427.8 339.3h1.4v1.4h-1.4zM464.6 307.3h0.9v0.9h-0.9zM481.9 364.7h1.0v1.0h-1.0zM468.9 350.1h0.9v0.9h-0.9zM495.5 257.8h0.8v0.8h-0.8zM500.7 376.8h0.8v0.8h-0.8zM452.5 319.1h0.7v0.7h-0.7zM403.5 304.7h0.7v0.7h-0.7zM423.4 380.8h1.0v1.0h-1.0zM431.0 324.1h1.0v1.0h-1.0zM479.2 268.8h0.8v0.8h-0.8zM415.9 349.3h0.7v0.7h-0.7zM452.0 291.2h1.1v1.1h-1.1zM421.9 353.6h0.7v0.7h-0.7zM420.3 315.1h0.8v0.8h-0.8zM451.3 305.4h0.8v0.8h-0.8zM481.7 305.5h1.3v1.3h-1.3zM480.5 302.9h1.4v1.4h-1.4zM464.7 285.9h1.3v1.3h-1.3zM453.1 372.7h0.9v0.9h-0.9zM446.8 296.3h1.2v1.2h-1.2zM484.5 296.0h1.3v1.3h-1.3zM399.6 263.9h1.2v1.2h-1.2zM427.5 252.8h1.2v1.2h-1.2zM461.7 325.6h1.0v1.0h-1.0zM406.3 381.8h1.2v1.2h-1.2zM489.8 383.3h0.9v0.9h-0.9zM435.4 328.0h0.8v0.8h-0.8zM436.7 305.1h1.0v1.0h-1.0zM416.5 287.8h0.8v0.8h-0.8zM449.0 304.7h0.9v0.9h-0.9zM489.7 377.3h1.2v1.2h-1.2zM488.2 374.6h1.1v1.1h-1.1zM411.3 257.8h0.9v0.9h-0.9zM407.3 332.8h0.9v0.9h-0.9zM411.6 309.3h1.2v1.2h-1.2zM456.2 358.2h0.8v0.8h-0.8zM464.1 340.1h1.4v1.4h-1.4zM498.7 283.0h1.4v1.4h-1.4zM440.0 358.4h0.6v0.6h-0.6zM443.4 331.5h0.8v0.8h-0.8zM484.6 387.4h0.9v0.9h-0.9zM450.9 393.5h1.5v1.5h-1.5zM454.7 394.0h0.8v0.8h-0.8zM417.8 290.7h1.3v1.3h-1.3zM422.9 341.1h1.1v1.1h-1.1zM462.2 392.9h1.2v1.2h-1.2zM455.4 386.4h1.4v1.4h-1.4zM466.9 334.0h1.3v1.3h-1.3zM427.0 380.3h0.8v0.8h-0.8zM481.5 251.5h0.9v0.9h-0.9zM419.0 244.8h1.1v1.1h-1.1zM435.8 263.3h1.5v1.5h-1.5zM449.4 317.8h0.8v0.8h-0.8zM487.4 357.3h0.9v0.9h-0.9zM479.8 375.8h0.6v0.6h-0.6zM445.3 365.4h0.8v0.8h-0.8zM407.6 316.1h1.3v1.3h-1.3zM423.1 304.3h0.9v0.9h-0.9zM470.7 274.7h0.7v0.7h-0.7zM405.6 359.4h1.3v1.3h-1.3zM433.9 305.0h1.0v1.0h-1.0zM465.8 360.6h1.0v1.0h-1.0zM441.8 360.9h1.5v1.5h-1.5zM468.9 309.1h1.0v1.0h-1.0zM455.0 334.1h0.7v0.7h-0.7zM498.6 385.5h1.0v1.0h-1.0zM484.0 313.1h1.1v1.1h-1.1zM415.3 321.3h1.3v1.3h-1.3zM457.4 288.6h1.3v1.3h-1.3zM407.0 288.4h1.3v1.3h-1.3zM427.0 242.7h0.8v0.8h-0.8zM475.8 379.5h1.2v1.2h-1.2zM444.9 310.6h0.8v0.8h-0.8zM435.1 316.5h1.1v1.1h-1.1zM495.2 271.9h1.0v1.0h-1.0zM446.7 278.8h1.0v1.0h-1.0zM483.0 248.6h1.2v1.2h-1.2zM458.1 295.1h1.4v1.4h-1.4zM487.5 316.2h1.3v1.3h-1.3zM414.4 374.4h0.8v0.8h-0.8zM414.9 358.3h1.5v1.5h-1.5zM433.0 311.8h1.0v1.0h-1.0zM403.1 299.4h1.5v1.5h-1.5zM442.0 250.0h0.8v0.8h-0.8zM454.3 245.4h1.0v1.0h-1.0zM413.9 383.0h1.4v1.4h-1.4zM460.3 286.3h0.7v0.7h-0.7zM461.8 352.6h0.6v0.6h-0.6zM484.7 301.0h0.8v0.8h-0.8zM437.1 247.6h0.7v0.7h-0.7zM464.7 322.3h1.0v1.0h-1.0zM406.2 360.7h1.2v1.2h-1.2zM432.7 267.2h1.0v1.0h-1.0zM483.1 281.9h1.5v1.5h-1.5zM477.9 283.3h1.2v1.2h-1.2zM402.6 291.4h1.4v1.4h-1.4zM438.6 299.3h0.9v0.9h-0.9zM478.7 388.4h1.5v1.5h-1.5zM439.4 342.5h0.7v0.7h-0.7zM495.5 329.8h1.4v1.4h-1.4zM420.1 375.3h0.8v0.8h-0.8zM397.4 252.7h1.4v1.4h-1.4zM423.0 289.3h1.0v1.0h-1.0zM462.9 276.2h1.0v1.0h-1.0zM480.4 359.6h1.2v1.2h-1.2zM401.2 250.0h0.8v0.8h-0.8zM466.0 262.9h1.3v1.3h-1.3zM423.2 270.8h0.9v0.9h-0.9zM439.0 321.1h1.2v1.2h-1.2zM434.5 247.3h1.2v1.2h-1.2zM488.8 273.2h0.7v0.7h-0.7zM410.8 329.8h1.2v1.2h-1.2zM494.2 295.2h1.1v1.1h-1.1zM415.2 367.3h1.2v1.2h-1.2zM428.2 272.0h0.7v0.7h-0.7zM466.1 313.0h0.9v0.9h-0.9zM453.5 256.7h0.9v0.9h-0.9zM414.1 282.6h1.4v1.4h-1.4zM480.4 320.2h0.6v0.6h-0.6zM425.5 326.1h0.7v0.7h-0.7zM498.0 377.0h0.9v0.9h-0.9zM454.8 275.1h1.3v1.3h-1.3zM424.9 367.9h0.8v0.8h-0.8zM477.1 295.8h0.8v0.8h-0.8zM472.6 354.8h0.9v0.9h-0.9zM447.3 391.9h0.9v0.9h-0.9zM484.7 370.5h1.0v1.0h-1.0zM456.3 251.2h0.9v0.9h-0.9zM455.0 332.5h0.7v0.7h-0.7zM418.7 274.6h1.2v1.2h-1.2zM427.1 346.3h0.7v0.7h-0.7zM475.4 344.1h0.9v0.9h-0.9zM436.6 259.6h0.7v0.7h-0.7zM432.6 256.1h0.9v0.9h-0.9zM406.3 289.9h1.0v1.0h-1.0zM440.3 373.7h0.9v0.9h-0.9zM429.4 375.8h1.1v1.1h-1.1zM439.3 360.3h1.4v1.4h-1.4zM439.6 327.4h0.6v0.6h-0.6zM418.0 297.7h1.2v1.2h-1.2zM478.1 378.8h1.1v1.1h-1.1zM437.1 261.5h1.5v1.5h-1.5zM484.8 343.8h1.1v1.1h-1.1zM482.4 348.7h0.6v0.6h-0.6zM453.9 287.8h1.1v1.1h-1.1zM438.3 334.0h0.7v0.7h-0.7zM435.7 351.2h1.5v1.5h-1.5zM444.7 305.2h1.1v1.1h-1.1zM449.3 390.4h0.9v0.9h-0.9zM450.4 387.3h1.0v1.0h-1.0zM409.6 252.0h1.4v1.4h-1.4zM444.4 312.0h0.8v0.8h-0.8zM493.0 337.6h0.7v0.7h-0.7zM450.4 244.0h1.4v1.4h-1.4zM476.1 292.3h1.0v1.0h-1.0zM437.5 352.6h1.1v1.1h-1.1zM478.6 298.7h1.4v1.4h-1.4zM488.3 261.8h0.9v0.9h-0.9zM454.3 245.8h1.0v1.0h-1.0zM487.8 308.3h1.2v1.2h-1.2zM431.0 260.2h0.9v0.9h-0.9zM459.0 243.4h1.2v1.2h-1.2zM459.1 337.4h1.0v1.0h-1.0zM428.2 264.4h1.4v1.4h-1.4zM455.8 300.7h1.4v1.4h-1.4zM496.8 378.3h1.1v1.1h-1.1zM410.9 362.3h1.4v1.4h-1.4zM461.6 245.4h1.1v1.1h-1.1zM458.8 262.0h1.5v1.5h-1.5zM419.6 298.5h1.3v1.3h-1.3zM424.4 244.0h0.9v0.9h-0.9zM452.5 392.4h0.9v0.9h-0.9zM443.9 351.5h1.2v1.2h-1.2zM411.9 316.7h0.7v0.7h-0.7zM445.9 332.3h0.9v0.9h-0.9zM462.0 285.0h1.1v1.1h-1.1zM481.7 391.9h0.9v0.9h-0.9zM445.9 330.6h1.0v1.0h-1.0zM483.4 375.0h0.7v0.7h-0.7zM439.4 261.5h1.4v1.4h-1.4zM413.5 374.4h1.1v1.1h-1.1zM439.5 355.2h0.8v0.8h-0.8zM487.8 381.1h0.9v0.9h-0.9zM416.6 327.7h1.3v1.3h-1.3zM440.7 390.2h1.1v1.1h-1.1zM422.8 337.8h1.4v1.4h-1.4zM436.8 286.5h0.6v0.6h-0.6zM409.5 346.6h1.2v1.2h-1.2zM488.0 312.4h0.9v0.9h-0.9zM429.2 295.2h1.2v1.2h-1.2zM476.9 295.8h1.4v1.4h-1.4zM417.1 356.2h1.1v1.1h-1.1zM473.2 362.5h1.5v1.5h-1.5zM440.1 376.7h0.8v0.8h-0.8zM418.9 287.4h0.7v0.7h-0.7zM424.1 249.4h0.7v0.7h-0.7zM450.0 355.4h1.0v1.0h-1.0zM435.9 299.0h0.7v0.7h-0.7zM431.5 328.3h1.5v1.5h-1.5zM479.4 299.9h1.0v1.0h-1.0zM480.3 393.3h0.9v0.9h-0.9zM413.0 264.4h1.0v1.0h-1.0zM434.5 386.7h1.0v1.0h-1.0zM447.5 267.3h0.7v0.7h-0.7zM449.9 270.2h0.6v0.6h-0.6zM418.9 340.8h0.7v0.7h-0.7zM404.4 309.5h1.1v1.1h-1.1zM472.7 384.7h1.1v1.1h-1.1zM458.7 243.1h0.8v0.8h-0.8zM450.4 336.5h1.2v1.2h-1.2zM423.1 354.1h1.5v1.5h-1.5zM454.0 266.3h0.7v0.7h-0.7zM465.7 367.4h1.0v1.0h-1.0zM434.0 283.5h0.6v0.6h-0.6zM452.1 378.1h0.7v0.7h-0.7zM400.8 336.1h0.7v0.7h-0.7zM478.5 382.0h0.7v0.7h-0.7zM450.7 277.1h1.2v1.2h-1.2zM455.8 263.8h1.3v1.3h-1.3zM438.4 319.0h1.2v1.2h-1.2zM448.1 297.3h0.7v0.7h-0.7zM405.0 315.1h0.8v0.8h-0.8zM454.1 329.6h1.3v1.3h-1.3zM411.2 340.7h1.3v1.3h-1.3zM410.6 337.2h1.2v1.2h-1.2zM442.4 269.0h0.7v0.7h-0.7zM457.0 323.1h1.5v1.5h-1.5zM480.5 356.2h0.6v0.6h-0.6zM445.0 251.0h1.2v1.2h-1.2zM465.5 309.6h0.7v0.7h-0.7zM400.9 273.7h0.8v0.8h-0.8zM436.4 293.9h1.2v1.2h-1.2zM415.0 281.0h1.1v1.1h-1.1zM475.6 374.0h1.1v1.1h-1.1zM423.0 306.5h0.9v0.9h-0.9zM439.5 265.8h1.3v1.3h-1.3zM403.3 341.0h1.1v1.1h-1.1zM451.5 326.6h1.0v1.0h-1.0zM397.5 352.7h1.2v1.2h-1.2zM474.8 385.0h0.9v0.9h-0.9zM453.1 287.8h1.3v1.3h-1.3zM398.4 290.1h1.0v1.0h-1.0zM470.5 268.1h1.3v1.3h-1.3zM431.7 368.4h0.9v0.9h-0.9zM432.2 389.3h0.9v0.9h-0.9zM403.1 275.3h1.4v1.4h-1.4zM432.2 337.2h0.9v0.9h-0.9zM446.6 326.5h1.5v1.5h-1.5zM441.5 371.4h1.0v1.0h-1.0zM430.2 363.1h0.7v0.7h-0.7zM413.8 342.6h1.0v1.0h-1.0zM423.1 385.5h0.7v0.7h-0.7zM488.6 327.7h1.2v1.2h-1.2zM434.3 288.5h1.2v1.2h-1.2zM462.3 270.3h0.7v0.7h-0.7zM460.2 242.7h1.0v1.0h-1.0zM439.0 268.6h1.2v1.2h-1.2zM417.1 366.9h1.3v1.3h-1.3zM406.7 286.0h1.3v1.3h-1.3zM474.9 293.3h1.4v1.4h-1.4zM452.7 378.5h1.0v1.0h-1.0zM435.5 243.3h1.0v1.0h-1.0zM465.9 374.6h1.4v1.4h-1.4zM465.3 331.5h1.0v1.0h-1.0zM458.7 262.3h0.8v0.8h-0.8zM470.3 302.1h0.7v0.7h-0.7zM436.1 301.5h0.7v0.7h-0.7zM445.1 376.7h0.9v0.9h-0.9zM427.0 300.2h1.0v1.0h-1.0zM464.8 307.5h1.4v1.4h-1.4zM451.8 355.3h1.3v1.3h-1.3zM413.4 329.3h1.3v1.3h-1.3zM418.3 386.4h1.3v1.3h-1.3zM436.6 335.3h1.0v1.0h-1.0zM491.7 390.7h0.6v0.6h-0.6zM458.6 337.9h1.3v1.3h-1.3zM437.3 356.0h0.6v0.6h-0.6zM422.7 295.7h1.3v1.3h-1.3zM436.9 245.2h1.3v1.3h-1.3zM443.5 359.9h1.4v1.4h-1.4zM435.9 379.0h0.8v0.8h-0.8zM453.3 256.2h0.7v0.7h-0.7zM420.0 310.0h1.2v1.2h-1.2zM433.2 314.8h0.6v0.6h-0.6zM474.2 377.7h1.5v1.5h-1.5zM411.1 351.1h1.4v1.4h-1.4zM442.4 245.0h1.0v1.0h-1.0zM459.3 351.3h1.2v1.2h-1.2zM432.1 246.7h1.3v1.3h-1.3zM488.7 350.8h1.3v1.3h-1.3zM482.9 368.7h1.4v1.4h-1.4zM417.1 300.6h1.4v1.4h-1.4zM453.2 348.1h1.5v1.5h-1.5zM446.0 320.4h1.1v1.1h-1.1zM435.3 265.2h1.0v1.0h-1.0zM454.4 328.7h1.2v1.2h-1.2zM456.9 387.9h0.9v0.9h-0.9zM446.6 313.1h1.4v1.4h-1.4zM403.6 370.4h0.9v0.9h-0.9zM420.4 254.9h1.3v1.3h-1.3zM448.4 309.5h0.8v0.8h-0.8zM463.2 338.9h0.9v0.9h-0.9zM460.7 247.5h0.8v0.8h-0.8zM416.6 267.2h1.0v1.0h-1.0zM430.9 289.5h0.8v0.8h-0.8zM475.7 305.6h1.3v1.3h-1.3zM413.7 278.3h1.4v1.4h-1.4zM394.8 248.7h1.4v1.4h-1.4zM423.8 388.2h0.8v0.8h-0.8zM411.1 372.9h1.2v1.2h-1.2zM442.1 289.3h1.4v1.4h-1.4zM454.6 284.0h1.2v1.2h-1.2zM419.7 310.3h0.7v0.7h-0.7zM449.4 356.9h0.9v0.9h-0.9zM463.4 380.3h1.0v1.0h-1.0zM406.9 289.5h0.7v0.7h-0.7zM447.7 274.0h1.4v1.4h-1.4zM421.8 302.2h1.2v1.2h-1.2zM486.7 384.4h0.8v0.8h-0.8zM476.8 371.5h1.2v1.2h-1.2zM420.5 278.7h1.0v1.0h-1.0zM447.3 305.4h1.5v1.5h-1.5zM392.9 383.4h1.1v1.1h-1.1zM446.5 333.0h0.7v0.7h-0.7zM439.1 362.1h1.3v1.3h-1.3zM442.1 312.8h1.2v1.2h-1.2zM406.7 326.1h0.6v0.6h-0.6zM438.8 256.3h1.2v1.2h-1.2zM436.1 269.1h1.3v1.3h-1.3zM444.6 273.8h0.6v0.6h-0.6zM442.6 386.5h0.9v0.9h-0.9zM435.7 279.3h0.7v0.7h-0.7zM435.5 382.6h0.6v0.6h-0.6zM439.6 328.3h1.2v1.2h-1.2zM445.7 250.0h1.4v1.4h-1.4zM400.2 386.6h1.1v1.1h-1.1zM435.0 277.2h0.7v0.7h-0.7zM473.6 266.2h1.3v1.3h-1.3zM452.5 349.2h0.7v0.7h-0.7zM418.4 258.0h1.3v1.3h-1.3zM396.7 279.2h0.7v0.7h-0.7zM480.4 249.0h1.2v1.2h-1.2zM411.8 369.4h1.0v1.0h-1.0zM407.2 336.8h1.1v1.1h-1.1zM448.7 284.4h1.4v1.4h-1.4zM456.6 245.4h1.0v1.0h-1.0zM491.2 296.1h1.5v1.5h-1.5zM424.9 310.1h1.4v1.4h-1.4zM489.6 378.3h1.1v1.1h-1.1zM422.1 365.6h0.9v0.9h-0.9zM459.1 393.2h0.9v0.9h-0.9zM424.7 300.9h1.3v1.3h-1.3zM463.7 370.2h0.7v0.7h-0.7zM428.4 285.2h0.9v0.9h-0.9zM470.3 268.0h1.3v1.3h-1.3zM422.7 372.0h1.0v1.0h-1.0zM464.9 392.4h0.6v0.6h-0.6zM440.7 371.9h1.2v1.2h-1.2zM413.2 379.9h1.4v1.4h-1.4zM397.7 263.9h0.7v0.7h-0.7zM461.2 320.7h1.4v1.4h-1.4zM432.0 282.8h1.5v1.5h-1.5zM454.5 278.5h1.2v1.2h-1.2zM479.6 352.9h1.3v1.3h-1.3zM454.4 373.1h1.3v1.3h-1.3zM427.1 392.8h1.4v1.4h-1.4zM477.1 318.1h0.8v0.8h-0.8zM444.0 336.0h0.9v0.9h-0.9zM492.2 295.9h1.2v1.2h-1.2zM457.2 376.9h1.4v1.4h-1.4zM453.4 260.4h0.7v0.7h-0.7zM440.4 314.4h1.4v1.4h-1.4zM492.4 311.7h1.1v1.1h-1.1zM459.6 342.0h1.1v1.1h-1.1zM429.5 368.3h0.9v0.9h-0.9zM447.2 313.0h1.3v1.3h-1.3zM457.0 329.6h0.9v0.9h-0.9zM455.9 363.5h1.0v1.0h-1.0zM456.9 330.7h0.6v0.6h-0.6zM420.9 352.7h1.2v1.2h-1.2zM470.0 331.8h0.9v0.9h-0.9zM433.1 301.3h0.7v0.7h-0.7zM463.0 393.9h1.0v1.0h-1.0zM401.5 261.5h1.2v1.2h-1.2zM449.3 334.8h1.5v1.5h-1.5zM455.4 328.7h0.7v0.7h-0.7zM441.3 281.4h0.9v0.9h-0.9zM478.7 304.0h1.3v1.3h-1.3zM464.0 290.4h1.5v1.5h-1.5zM422.3 359.2h0.8v0.8h-0.8zM469.0 298.7h0.7v0.7h-0.7zM473.3 261.2h1.2v1.2h-1.2zM479.2 270.4h0.8v0.8h-0.8zM439.3 344.4h1.5v1.5h-1.5zM437.0 256.6h0.8v0.8h-0.8zM467.3 347.8h0.9v0.9h-0.9zM476.8 301.6h1.5v1.5h-1.5zM445.5 337.6h1.1v1.1h-1.1zM429.0 375.0h1.2v1.2h-1.2zM454.1 317.8h1.1v1.1h-1.1zM425.1 345.4h1.1v1.1h-1.1zM462.9 300.8h0.8v0.8h-0.8zM456.3 345.0h1.1v1.1h-1.1zM434.8 314.9h1.4v1.4h-1.4zM421.3 280.3h0.9v0.9h-0.9zM483.3 291.6h0.9v0.9h-0.9zM418.8 319.2h1.1v1.1h-1.1zM451.2 291.9h1.3v1.3h-1.3zM402.4 262.6h1.4v1.4h-1.4zM425.7 313.0h1.2v1.2h-1.2zM479.6 293.3h1.3v1.3h-1.3zM456.4 268.5h1.2v1.2h-1.2zM448.9 371.7h0.7v0.7h-0.7zM458.0 388.5h0.9v0.9h-0.9zM452.4 366.1h1.2v1.2h-1.2zM468.4 349.6h0.6v0.6h-0.6zM430.9 321.6h1.3v1.3h-1.3zM468.7 371.5h0.9v0.9h-0.9zM469.9 384.9h0.7v0.7h-0.7zM407.4 269.6h1.5v1.5h-1.5zM417.8 353.3h1.3v1.3h-1.3zM432.0 313.3h0.7v0.7h-0.7zM419.6 360.2h1.2v1.2h-1.2zM417.0 266.6h0.9v0.9h-0.9zM481.3 297.7h1.2v1.2h-1.2zM485.3 371.3h1.5v1.5h-1.5zM413.4 329.2h0.7v0.7h-0.7zM442.2 379.5h1.4v1.4h-1.4zM499.1 382.4h1.5v1.5h-1.5zM458.6 327.8h1.0v1.0h-1.0zM428.5 378.3h0.6v0.6h-0.6zM418.5 296.9h0.8v0.8h-0.8zM478.5 361.6h0.9v0.9h-0.9zM458.4 295.6h0.8v0.8h-0.8zM406.1 288.6h1.1v1.1h-1.1zM497.6 377.8h1.4v1.4h-1.4zM476.5 391.6h1.2v1.2h-1.2zM471.6 242.4h0.8v0.8h-0.8zM419.7 361.9h0.8v0.8h-0.8zM482.3 323.9h0.7v0.7h-0.7zM482.3 345.6h1.3v1.3h-1.3zM494.5 242.2h1.1v1.1h-1.1zM397.5 264.8h1.2v1.2h-1.2zM475.9 286.3h0.8v0.8h-0.8zM413.6 273.1h1.3v1.3h-1.3zM465.8 376.2h1.4v1.4h-1.4zM479.6 274.5h1.2v1.2h-1.2zM460.2 341.9h0.6v0.6h-0.6zM469.4 364.0h0.7v0.7h-0.7zM463.8 292.2h1.2v1.2h-1.2zM429.5 323.6h1.3v1.3h-1.3zM409.3 376.6h1.0v1.0h-1.0zM412.8 336.9h1.1v1.1h-1.1zM422.6 346.2h0.7v0.7h-0.7zM431.0 352.8h0.6v0.6h-0.6zM454.0 355.2h1.3v1.3h-1.3zM400.4 244.6h1.1v1.1h-1.1zM466.0 388.1h0.8v0.8h-0.8zM494.6 260.8h1.0v1.0h-1.0zM447.6 345.1h1.1v1.1h-1.1zM444.5 311.5h0.6v0.6h-0.6zM446.1 359.4h1.0v1.0h-1.0zM480.6 380.4h0.7v0.7h-0.7zM428.1 279.9h1.0v1.0h-1.0zM479.4 353.3h1.2v1.2h-1.2zM443.9 292.5h0.9v0.9h-0.9zM485.1 368.8h1.1v1.1h-1.1zM469.3 373.2h0.8v0.8h-0.8zM449.3 246.1h0.6v0.6h-0.6zM452.8 288.8h0.6v0.6h-0.6zM466.3 349.2h1.5v1.5h-1.5zM447.5 287.4h1.1v1.1h-1.1zM455.9 315.9h0.8v0.8h-0.8zM404.2 342.0h1.2v1.2h-1.2zM496.9 294.5h1.4v1.4h-1.4zM408.6 296.4h1.0v1.0h-1.0zM417.2 388.6h0.8v0.8h-0.8zM418.7 358.7h0.9v0.9h-0.9zM434.6 325.0h1.1v1.1h-1.1zM471.1 319.8h1.1v1.1h-1.1zM454.1 280.6h0.8v0.8h-0.8zM479.6 358.8h1.2v1.2h-1.2zM454.1 332.9h0.9v0.9h-0.9zM477.7 390.6h1.3v1.3h-1.3zM470.7 283.3h1.2v1.2h-1.2zM461.9 274.2h1.0v1.0h-1.0zM463.3 311.5h0.6v0.6h-0.6zM465.8 349.9h1.5v1.5h-1.5zM459.2 280.7h1.0v1.0h-1.0zM473.5 255.4h0.9v0.9h-0.9zM418.1 382.4h0.8v0.8h-0.8zM399.7 273.5h1.0v1.0h-1.0zM427.8 351.4h0.8v0.8h-0.8zM407.8 332.1h1.2v1.2h-1.2zM466.9 388.1h1.4v1.4h-1.4zM442.5 365.7h1.0v1.0h-1.0zM424.5 243.9h1.4v1.4h-1.4zM440.5 276.2h1.1v1.1h-1.1zM472.0 310.8h0.7v0.7h-0.7zM421.2 311.9h1.3v1.3h-1.3zM493.2 325.2h0.7v0.7h-0.7zM461.9 343.4h0.9v0.9h-0.9zM436.5 340.9h1.0v1.0h-1.0zM432.4 280.3h0.7v0.7h-0.7zM483.6 372.9h0.8v0.8h-0.8zM473.1 331.8h1.0v1.0h-1.0zM439.4 346.6h0.9v0.9h-0.9zM490.4 278.9h0.8v0.8h-0.8zM468.4 333.2h0.6v0.6h-0.6zM447.0 334.6h1.2v1.2h-1.2zM446.2 345.4h1.1v1.1h-1.1zM468.3 306.9h0.9v0.9h-0.9zM489.5 301.2h1.3v1.3h-1.3zM430.0 262.2h1.1v1.1h-1.1zM434.8 290.3h1.3v1.3h-1.3zM401.6 347.7h0.8v0.8h-0.8zM412.4 365.8h0.7v0.7h-0.7zM459.4 292.2h0.8v0.8h-0.8zM446.8 285.1h1.0v1.0h-1.0zM426.3 331.7h0.8v0.8h-0.8zM422.6 319.1h0.6v0.6h-0.6zM432.0 292.4h0.9v0.9h-0.9zM446.9 242.2h0.7v0.7h-0.7zM439.9 280.9h0.7v0.7h-0.7zM466.3 327.8h1.0v1.0h-1.0zM406.9 355.3h1.3v1.3h-1.3zM453.3 328.0h1.4v1.4h-1.4zM461.7 373.9h0.7v0.7h-0.7zM443.5 257.1h1.0v1.0h-1.0zM429.6 387.5h1.2v1.2h-1.2zM439.3 346.8h1.4v1.4h-1.4zM427.5 366.4h1.0v1.0h-1.0zM464.2 349.9h1.4v1.4h-1.4zM463.7 276.2h1.5v1.5h-1.5zM436.0 386.0h1.3v1.3h-1.3zM498.1 374.1h0.8v0.8h-0.8zM480.5 242.1h1.0v1.0h-1.0zM440.0 280.8h1.4v1.4h-1.4zM448.9 313.9h0.6v0.6h-0.6zM496.1 242.3h1.5v1.5h-1.5zM442.5 330.5h0.7v0.7h-0.7zM412.2 374.6h0.7v0.7h-0.7zM436.4 304.3h1.0v1.0h-1.0zM404.1 296.3h1.0v1.0h-1.0zM415.8 288.5h1.0v1.0h-1.0zM445.4 295.6h1.0v1.0h-1.0zM478.3 361.5h1.0v1.0h-1.0zM452.3 368.6h1.4v1.4h-1.4zM489.6 391.1h0.9v0.9h-0.9zM417.7 327.0h1.1v1.1h-1.1zM414.0 297.2h0.7v0.7h-0.7zM478.9 325.3h1.1v1.1h-1.1zM406.9 249.8h0.7v0.7h-0.7zM412.1 280.2h1.1v1.1h-1.1zM428.5 250.0h0.7v0.7h-0.7zM490.4 276.8h1.0v1.0h-1.0zM491.9 294.4h1.5v1.5h-1.5zM431.2 255.5h1.1v1.1h-1.1zM446.7 378.9h1.3v1.3h-1.3zM424.5 325.5h1.4v1.4h-1.4zM439.3 318.4h0.9v0.9h-0.9zM401.3 365.5h0.9v0.9h-0.9zM435.2 295.2h1.0v1.0h-1.0zM419.1 383.8h0.7v0.7h-0.7zM410.7 247.2h0.6v0.6h-0.6zM480.0 275.0h1.2v1.2h-1.2zM421.5 341.1h1.0v1.0h-1.0zM432.6 281.0h1.1v1.1h-1.1zM418.9 254.9h1.2v1.2h-1.2zM483.4 373.2h1.3v1.3h-1.3zM450.8 249.3h1.1v1.1h-1.1zM422.7 255.8h0.8v0.8h-0.8zM497.0 250.1h1.1v1.1h-1.1zM457.4 387.7h0.6v0.6h-0.6zM441.2 253.0h1.2v1.2h-1.2zM466.2 329.2h1.4v1.4h-1.4zM482.4 334.6h0.6v0.6h-0.6zM415.5 245.5h1.2v1.2h-1.2zM439.8 315.2h0.9v0.9h-0.9zM470.1 386.5h1.3v1.3h-1.3zM420.2 282.8h1.0v1.0h-1.0zM411.2 306.8h1.2v1.2h-1.2zM417.6 272.1h1.4v1.4h-1.4zM451.1 316.2h0.9v0.9h-0.9zM411.4 305.7h1.3v1.3h-1.3zM462.9 378.3h1.1v1.1h-1.1zM446.5 342.2h1.2v1.2h-1.2zM418.8 355.2h0.9v0.9h-0.9zM419.4 332.5h1.3v1.3h-1.3zM454.0 284.4h1.2v1.2h-1.2zM415.4 299.4h1.0v1.0h-1.0zM471.5 247.0h0.6v0.6h-0.6zM468.3 291.6h1.0v1.0h-1.0zM468.8 314.9h0.8v0.8h-0.8zM468.4 392.4h0.8v0.8h-0.8zM391.4 390.3h1.1v1.1h-1.1zM446.5 323.4h0.7v0.7h-0.7zM408.0 264.9h0.9v0.9h-0.9zM479.1 272.8h1.1v1.1h-1.1zM450.4 274.1h1.0v1.0h-1.0zM436.8 246.8h1.1v1.1h-1.1zM495.5 367.1h0.7v0.7h-0.7zM429.4 347.9h1.5v1.5h-1.5zM412.1 258.9h1.2v1.2h-1.2zM418.5 250.0h1.5v1.5h-1.5zM472.0 307.2h1.1v1.1h-1.1zM430.5 348.7h1.1v1.1h-1.1zM466.3 319.9h1.4v1.4h-1.4zM440.6 353.3h1.5v1.5h-1.5zM464.4 259.2h0.8v0.8h-0.8zM487.3 291.5h1.1v1.1h-1.1zM464.8 256.8h1.1v1.1h-1.1zM425.7 295.7h1.2v1.2h-1.2zM424.4 339.0h1.3v1.3h-1.3zM492.5 251.4h0.6v0.6h-0.6zM468.2 311.6h1.0v1.0h-1.0zM417.7 372.2h0.9v0.9h-0.9zM457.1 368.6h0.7v0.7h-0.7zM458.8 270.9h1.4v1.4h-1.4zM476.1 310.4h1.5v1.5h-1.5zM455.0 361.5h0.9v0.9h-0.9zM456.1 290.3h0.8v0.8h-0.8zM436.2 292.6h0.6v0.6h-0.6zM423.9 252.7h0.8v0.8h-0.8zM398.0 289.4h0.7v0.7h-0.7zM438.3 268.7h0.7v0.7h-0.7zM449.4 370.8h1.2v1.2h-1.2zM447.2 262.4h1.0v1.0h-1.0zM478.1 285.7h0.9v0.9h-0.9zM475.6 265.1h1.3v1.3h-1.3zM390.5 282.3h1.4v1.4h-1.4zM447.9 358.5h0.8v0.8h-0.8zM452.9 378.6h1.5v1.5h-1.5zM451.1 352.7h1.3v1.3h-1.3zM425.9 287.7h1.0v1.0h-1.0zM465.0 265.0h1.3v1.3h-1.3zM393.2 283.2h0.8v0.8h-0.8zM423.2 366.3h1.4v1.4h-1.4zM402.5 289.5h1.2v1.2h-1.2zM444.1 371.5h1.2v1.2h-1.2zM451.9 379.2h1.0v1.0h-1.0zM470.5 385.6h1.3v1.3h-1.3zM428.9 353.2h1.2v1.2h-1.2zM490.0 242.6h1.4v1.4h-1.4zM479.3 251.1h1.1v1.1h-1.1zM417.9 294.3h0.7v0.7h-0.7zM419.2 273.8h1.5v1.5h-1.5zM492.0 348.3h1.0v1.0h-1.0zM451.5 338.8h1.4v1.4h-1.4zM474.6 328.6h1.0v1.0h-1.0zM482.2 242.2h1.2v1.2h-1.2zM474.8 356.6h1.0v1.0h-1.0zM448.0 263.9h0.9v0.9h-0.9zM436.0 389.8h1.0v1.0h-1.0zM484.6 350.4h1.1v1.1h-1.1zM453.3 253.1h0.7v0.7h-0.7zM404.1 371.8h1.4v1.4h-1.4zM418.3 322.6h0.9v0.9h-0.9zM435.4 258.7h1.1v1.1h-1.1zM426.4 315.0h1.0v1.0h-1.0zM447.2 281.7h0.8v0.8h-0.8zM475.0 369.6h1.3v1.3h-1.3zM462.7 367.6h0.8v0.8h-0.8zM498.0 264.9h1.0v1.0h-1.0zM431.6 343.1h1.4v1.4h-1.4zM415.7 252.5h1.5v1.5h-1.5zM491.4 347.6h0.6v0.6h-0.6zM439.8 259.4h1.4v1.4h-1.4zM431.1 247.0h1.0v1.0h-1.0zM461.6 365.2h0.7v0.7h-0.7zM471.3 322.2h1.3v1.3h-1.3zM487.9 361.1h0.9v0.9h-0.9zM425.4 272.7h0.8v0.8h-0.8zM428.3 260.2h1.1v1.1h-1.1zM476.0 353.1h0.8v0.8h-0.8zM475.7 284.1h1.3v1.3h-1.3zM472.2 253.9h1.2v1.2h-1.2zM465.4 335.9h0.7v0.7h-0.7zM465.7 314.0h1.3v1.3h-1.3zM457.4 357.7h1.5v1.5h-1.5zM465.9 368.1h0.8v0.8h-0.8zM496.9 378.1h1.3v1.3h-1.3zM466.3 265.0h1.1v1.1h-1.1zM471.7 357.0h1.4v1.4h-1.4zM407.0 335.6h1.3v1.3h-1.3zM480.0 277.9h0.7v0.7h-0.7zM441.2 379.9h0.8v0.8h-0.8zM483.9 259.1h1.4v1.4h-1.4zM470.6 346.7h1.2v1.2h-1.2zM446.5 252.2h1.0v1.0h-1.0zM456.8 296.6h0.7v0.7h-0.7zM459.7 293.1h1.1v1.1h-1.1zM472.7 284.2h1.3v1.3h-1.3zM424.8 304.8h1.0v1.0h-1.0zM413.6 308.8h1.3v1.3h-1.3zM457.4 247.7h0.6v0.6h-0.6zM455.3 349.7h1.0v1.0h-1.0zM438.1 266.6h1.3v1.3h-1.3zM465.3 306.3h1.4v1.4h-1.4zM428.9 391.6h0.9v0.9h-0.9zM476.9 331.2h1.0v1.0h-1.0zM495.7 351.5h0.7v0.7h-0.7zM452.0 311.5h1.1v1.1h-1.1zM460.0 288.5h1.5v1.5h-1.5zM485.2 246.1h1.1v1.1h-1.1zM402.5 310.1h1.3v1.3h-1.3zM488.0 324.2h1.0v1.0h-1.0zM409.6 387.4h1.4v1.4h-1.4zM451.7 331.3h1.2v1.2h-1.2zM481.9 278.3h0.7v0.7h-0.7zM451.6 378.9h1.4v1.4h-1.4zM429.8 271.1h0.9v0.9h-0.9zM443.9 282.8h1.3v1.3h-1.3zM410.1 349.6h0.7v0.7h-0.7zM406.0 350.1h0.6v0.6h-0.6zM430.4 329.2h1.1v1.1h-1.1zM483.3 373.2h0.9v0.9h-0.9zM461.1 315.2h1.3v1.3h-1.3zM439.4 307.3h1.1v1.1h-1.1zM416.6 373.4h1.4v1.4h-1.4zM424.8 375.3h0.9v0.9h-0.9zM463.5 306.5h1.2v1.2h-1.2zM453.2 305.0h1.2v1.2h-1.2zM448.1 317.9h1.5v1.5h-1.5zM460.0 294.0h0.7v0.7h-0.7zM408.7 287.9h1.1v1.1h-1.1zM400.1 300.7h0.9v0.9h-0.9zM390.1 354.5h0.6v0.6h-0.6zM420.4 389.1h1.2v1.2h-1.2zM456.5 263.5h0.7v0.7h-0.7zM493.7 358.8h0.7v0.7h-0.7zM421.1 346.6h0.7v0.7h-0.7zM404.8 383.7h1.0v1.0h-1.0zM483.8 391.6h1.5v1.5h-1.5zM452.1 354.5h0.7v0.7h-0.7zM471.0 305.2h1.3v1.3h-1.3zM415.7 268.1h1.3v1.3h-1.3zM488.5 247.8h1.4v1.4h-1.4zM441.5 251.2h1.0v1.0h-1.0zM457.3 356.6h1.2v1.2h-1.2zM472.5 273.8h1.2v1.2h-1.2zM446.0 359.7h1.4v1.4h-1.4zM427.1 257.7h1.5v1.5h-1.5zM462.6 385.6h1.3v1.3h-1.3zM464.1 250.9h1.4v1.4h-1.4zM469.2 347.3h0.8v0.8h-0.8zM458.2 250.1h1.2v1.2h-1.2zM427.8 328.1h1.5v1.5h-1.5zM407.0 255.9h0.7v0.7h-0.7zM470.3 312.6h0.6v0.6h-0.6zM431.8 374.0h1.2v1.2h-1.2zM421.5 347.4h1.3v1.3h-1.3zM460.0 384.1h1.4v1.4h-1.4zM461.4 355.6h1.5v1.5h-1.5zM449.0 392.9h1.2v1.2h-1.2zM433.0 299.7h1.0v1.0h-1.0zM464.7 342.3h1.2v1.2h-1.2zM424.4 368.3h1.3v1.3h-1.3zM423.0 341.5h1.1v1.1h-1.1zM409.4 335.9h0.9v0.9h-0.9zM402.8 344.8h0.7v0.7h-0.7zM464.3 354.7h0.8v0.8h-0.8zM404.4 377.3h1.5v1.5h-1.5zM414.0 266.8h1.5v1.5h-1.5zM396.3 254.1h0.7v0.7h-0.7zM434.6 331.8h1.1v1.1h-1.1zM423.4 381.4h0.9v0.9h-0.9zM404.1 362.3h1.1v1.1h-1.1zM439.9 265.9h0.9v0.9h-0.9zM475.8 369.1h0.7v0.7h-0.7zM433.4 275.2h1.4v1.4h-1.4zM468.4 273.9h1.1v1.1h-1.1zM405.7 289.7h1.0v1.0h-1.0zM450.9 342.8h0.7v0.7h-0.7zM470.8 254.7h0.7v0.7h-0.7zM447.2 257.4h1.3v1.3h-1.3zM460.8 344.3h1.3v1.3h-1.3zM456.4 289.3h0.6v0.6h-0.6zM472.4 328.7h1.0v1.0h-1.0zM430.2 354.2h0.8v0.8h-0.8zM468.4 293.3h1.1v1.1h-1.1zM472.3 351.1h1.1v1.1h-1.1zM479.0 370.3h1.3v1.3h-1.3zM417.4 254.7h0.9v0.9h-0.9zM428.6 324.9h1.0v1.0h-1.0zM449.1 382.0h1.0v1.0h-1.0zM480.1 295.8h1.3v1.3h-1.3zM455.2 322.2h1.3v1.3h-1.3zM487.3 287.7h1.3v1.3h-1.3zM458.0 336.4h0.9v0.9h-0.9zM443.1 361.6h0.7v0.7h-0.7zM426.5 374.0h0.6v0.6h-0.6zM424.3 356.5h1.3v1.3h-1.3zM485.2 380.3h1.0v1.0h-1.0zM488.2 370.2h0.7v0.7h-0.7zM487.8 297.9h1.1v1.1h-1.1zM453.8 309.5h1.2v1.2h-1.2zM430.8 374.7h1.2v1.2h-1.2zM494.4 388.4h1.2v1.2h-1.2zM425.0 268.3h0.6v0.6h-0.6zM425.1 301.6h1.1v1.1h-1.1zM480.0 272.3h1.1v1.1h-1.1zM464.6 280.8h1.0v1.0h-1.0zM397.0 388.4h1.0v1.0h-1.0zM401.7 273.9h1.4v1.4h-1.4zM454.0 302.2h0.7v0.7h-0.7zM453.6 370.0h1.4v1.4h-1.4zM410.8 379.9h0.7v0.7h-0.7zM439.6 369.5h0.7v0.7h-0.7zM416.6 360.2h1.1v1.1h-1.1zM446.5 261.1h1.4v1.4h-1.4zM500.5 291.6h1.0v1.0h-1.0zM452.5 324.7h1.3v1.3h-1.3zM444.8 303.2h1.0v1.0h-1.0zM448.0 341.9h0.7v0.7h-0.7zM414.5 297.8h1.0v1.0h-1.0zM483.1 368.5h0.6v0.6h-0.6zM456.6 298.0h1.2v1.2h-1.2zM415.2 324.6h1.3v1.3h-1.3zM402.1 243.4h1.2v1.2h-1.2zM422.6 366.5h1.4v1.4h-1.4zM436.7 376.9h0.8v0.8h-0.8zM460.1 262.9h0.7v0.7h-0.7zM442.8 349.8h1.1v1.1h-1.1zM430.4 316.6h0.7v0.7h-0.7zM461.8 344.9h1.2v1.2h-1.2zM453.5 386.3h1.1v1.1h-1.1zM417.6 299.9h0.9v0.9h-0.9zM415.7 259.0h0.7v0.7h-0.7zM446.0 264.4h1.1v1.1h-1.1zM403.1 386.0h1.0v1.0h-1.0zM422.4 362.2h1.1v1.1h-1.1zM451.7 360.3h1.3v1.3h-1.3zM431.9 377.7h0.9v0.9h-0.9zM499.8 267.6h1.2v1.2h-1.2zM444.7 324.0h1.4v1.4h-1.4zM432.7 303.7h1.1v1.1h-1.1zM434.8 316.3h0.6v0.6h-0.6zM436.9 279.9h0.7v0.7h-0.7zM466.9 330.8h1.2v1.2h-1.2zM437.6 346.7h1.1v1.1h-1.1zM473.0 328.7h0.9v0.9h-0.9zM422.5 290.2h0.8v0.8h-0.8zM415.4 303.0h1.3v1.3h-1.3zM483.2 250.7h1.0v1.0h-1.0zM416.0 271.4h1.0v1.0h-1.0zM433.4 286.6h1.5v1.5h-1.5zM460.1 275.8h0.9v0.9h-0.9zM468.8 245.1h0.6v0.6h-0.6zM427.7 268.2h1.0v1.0h-1.0zM394.8 353.6h1.2v1.2h-1.2zM457.9 328.6h1.1v1.1h-1.1zM438.1 309.4h1.4v1.4h-1.4zM425.0 332.9h1.3v1.3h-1.3zM478.3 340.3h0.9v0.9h-0.9zM493.8 337.9h0.7v0.7h-0.7zM471.3 358.9h0.8v0.8h-0.8zM477.0 357.0h1.3v1.3h-1.3zM408.9 288.4h0.7v0.7h-0.7zM406.7 264.4h1.0v1.0h-1.0zM451.7 342.0h1.3v1.3h-1.3zM470.6 348.0h1.3v1.3h-1.3zM430.2 368.9h1.1v1.1h-1.1zM401.9 348.0h1.0v1.0h-1.0zM473.4 264.7h1.1v1.1h-1.1zM495.3 344.5h1.2v1.2h-1.2zM425.6 257.3h1.3v1.3h-1.3zM424.7 344.2h0.7v0.7h-0.7zM440.5 350.0h1.1v1.1h-1.1zM474.8 316.1h0.7v0.7h-0.7zM466.8 353.2h0.7v0.7h-0.7zM440.6 338.8h1.2v1.2h-1.2zM434.4 287.9h1.2v1.2h-1.2zM423.6 380.2h1.3v1.3h-1.3zM443.7 304.7h0.9v0.9h-0.9zM444.0 287.6h0.7v0.7h-0.7zM438.5 289.1h1.4v1.4h-1.4zM407.3 379.5h1.1v1.1h-1.1zM447.2 326.4h0.8v0.8h-0.8zM416.9 389.4h1.5v1.5h-1.5zM451.6 256.0h1.3v1.3h-1.3zM456.3 340.6h0.8v0.8h-0.8zM444.2 269.9h0.7v0.7h-0.7zM435.0 314.8h1.3v1.3h-1.3zM431.5 345.0h0.8v0.8h-0.8zM446.8 306.9h0.8v0.8h-0.8zM428.4 393.6h1.0v1.0h-1.0zM437.1 295.6h1.3v1.3h-1.3zM421.0 267.9h1.1v1.1h-1.1zM456.5 287.1h1.3v1.3h-1.3zM440.7 391.3h1.3v1.3h-1.3zM454.6 295.9h1.3v1.3h-1.3zM412.7 335.1h0.6v0.6h-0.6zM462.9 294.3h0.8v0.8h-0.8zM449.9 258.9h1.3v1.3h-1.3zM445.7 245.2h1.1v1.1h-1.1zM449.9 251.6h0.8v0.8h-0.8zM459.2 374.9h1.1v1.1h-1.1zM413.7 362.5h1.2v1.2h-1.2zM443.5 352.7h1.0v1.0h-1.0zM439.3 284.8h1.2v1.2h-1.2zM440.7 389.3h1.1v1.1h-1.1zM476.4 301.1h0.7v0.7h-0.7zM440.5 301.1h0.7v0.7h-0.7zM443.8 244.7h1.4v1.4h-1.4zM472.6 364.7h0.8v0.8h-0.8zM437.8 372.4h1.2v1.2h-1.2zM404.5 311.7h1.2v1.2h-1.2zM448.3 393.6h1.3v1.3h-1.3zM422.0 290.0h0.9v0.9h-0.9zM470.4 277.2h0.8v0.8h-0.8zM472.0 338.9h1.2v1.2h-1.2zM450.5 317.1h0.8v0.8h-0.8zM434.0 382.0h1.1v1.1h-1.1zM440.3 298.2h1.0v1.0h-1.0zM451.1 351.9h1.0v1.0h-1.0zM477.1 263.6h1.0v1.0h-1.0zM496.4 299.0h1.2v1.2h-1.2zM421.2 286.9h1.2v1.2h-1.2zM427.1 323.6h1.0v1.0h-1.0zM436.2 281.1h1.2v1.2h-1.2zM480.8 328.9h0.6v0.6h-0.6zM411.4 367.0h1.3v1.3h-1.3zM434.3 365.7h1.2v1.2h-1.2zM447.5 295.3h1.2v1.2h-1.2zM405.7 369.6h1.2v1.2h-1.2zM410.9 292.8h1.2v1.2h-1.2zM416.8 244.7h1.3v1.3h-1.3zM416.9 324.4h1.1v1.1h-1.1zM419.7 260.0h1.0v1.0h-1.0zM484.3 339.4h0.7v0.7h-0.7zM469.0 286.6h0.9v0.9h-0.9zM431.3 291.6h0.7v0.7h-0.7zM457.6 283.1h1.4v1.4h-1.4zM438.7 388.4h0.8v0.8h-0.8zM445.9 387.7h1.3v1.3h-1.3zM478.8 256.5h0.7v0.7h-0.7zM421.8 285.8h1.4v1.4h-1.4zM399.1 317.5h0.8v0.8h-0.8zM459.5 337.4h0.7v0.7h-0.7zM453.2 380.7h1.3v1.3h-1.3zM427.2 333.4h1.2v1.2h-1.2zM448.1 318.6h1.2v1.2h-1.2zM441.5 266.7h0.8v0.8h-0.8zM420.4 302.1h1.3v1.3h-1.3zM447.8 355.2h0.9v0.9h-0.9zM435.5 383.7h1.2v1.2h-1.2zM484.0 305.5h1.3v1.3h-1.3zM433.9 277.8h0.7v0.7h-0.7zM430.7 291.4h0.7v0.7h-0.7zM424.7 319.2h1.3v1.3h-1.3zM451.0 247.0h0.8v0.8h-0.8zM421.0 275.3h1.0v1.0h-1.0zM424.1 279.0h0.8v0.8h-0.8zM434.7 344.2h0.8v0.8h-0.8zM393.6 305.5h1.0v1.0h-1.0zM431.7 324.8h1.0v1.0h-1.0zM443.2 363.1h1.2v1.2h-1.2zM468.1 248.5h1.0v1.0h-1.0zM416.5 352.9h1.2v1.2h-1.2zM476.6 340.1h0.7v0.7h-0.7zM442.6 281.1h1.0v1.0h-1.0zM436.4 358.2h1.4v1.4h-1.4zM434.3 258.7h1.0v1.0h-1.0zM423.1 389.9h1.2v1.2h-1.2zM433.7 254.5h1.1v1.1h-1.1zM478.7 300.1h1.5v1.5h-1.5zM469.5 353.9h0.8v0.8h-0.8zM469.6 257.9h0.7v0.7h-0.7zM415.3 346.1h1.1v1.1h-1.1zM427.7 305.5h0.9v0.9h-0.9zM412.8 292.0h1.0v1.0h-1.0zM426.2 285.5h1.1v1.1h-1.1zM441.2 320.0h0.6v0.6h-0.6zM451.8 284.7h1.1v1.1h-1.1zM449.1 271.8h1.0v1.0h-1.0zM449.2 329.5h0.7v0.7h-0.7zM433.0 390.6h0.8v0.8h-0.8zM434.2 280.5h0.8v0.8h-0.8zM463.9 278.6h0.7v0.7h-0.7zM416.1 329.1h0.7v0.7h-0.7zM481.2 392.0h0.6v0.6h-0.6zM402.7 354.6h1.1v1.1h-1.1zM445.6 248.9h1.4v1.4h-1.4zM460.0 363.0h1.3v1.3h-1.3zM442.7 381.9h1.0v1.0h-1.0zM414.2 286.7h0.7v0.7h-0.7zM433.5 289.5h1.2v1.2h-1.2zM448.9 371.8h1.3v1.3h-1.3zM399.3 368.7h1.3v1.3h-1.3zM443.0 369.1h0.7v0.7h-0.7zM487.9 326.7h0.9v0.9h-0.9zM478.2 342.9h0.6v0.6h-0.6zM486.1 379.5h1.2v1.2h-1.2zM475.9 251.5h1.1v1.1h-1.1zM490.1 249.5h0.7v0.7h-0.7zM470.9 296.8h1.2v1.2h-1.2zM423.9 305.8h1.2v1.2h-1.2zM502.0 352.3h1.2v1.2h-1.2zM447.8 380.5h1.5v1.5h-1.5zM492.5 338.9h1.5v1.5h-1.5zM399.3 316.2h1.0v1.0h-1.0zM457.0 290.1h1.4v1.4h-1.4zM437.8 303.3h0.9v0.9h-0.9zM466.2 276.8h1.2v1.2h-1.2zM483.7 301.8h0.9v0.9h-0.9zM453.9 298.9h0.9v0.9h-0.9zM440.3 298.2h1.4v1.4h-1.4zM444.7 315.3h1.3v1.3h-1.3zM492.8 303.8h0.8v0.8h-0.8zM460.5 324.7h1.3v1.3h-1.3zM455.5 365.6h1.0v1.0h-1.0zM410.9 331.9h1.3v1.3h-1.3zM411.0 310.5h0.8v0.8h-0.8zM449.9 308.3h1.2v1.2h-1.2zM439.4 328.8h0.9v0.9h-0.9zM439.1 290.7h1.4v1.4h-1.4zM478.2 338.0h0.7v0.7h-0.7zM433.3 372.7h0.9v0.9h-0.9zM423.2 324.8h1.0v1.0h-1.0zM439.6 276.1h1.4v1.4h-1.4zM447.7 276.4h1.3v1.3h-1.3zM491.6 313.0h1.4v1.4h-1.4zM448.9 373.4h1.3v1.3h-1.3zM419.4 246.7h0.9v0.9h-0.9zM455.2 337.6h1.2v1.2h-1.2zM428.9 386.1h1.3v1.3h-1.3zM435.8 374.6h1.4v1.4h-1.4zM487.2 278.3h0.6v0.6h-0.6zM480.8 362.1h1.1v1.1h-1.1zM487.6 331.4h1.2v1.2h-1.2zM404.9 340.8h1.1v1.1h-1.1zM434.2 268.1h1.3v1.3h-1.3zM450.7 284.1h1.4v1.4h-1.4zM401.5 246.2h0.6v0.6h-0.6zM439.4 254.3h1.2v1.2h-1.2zM467.6 380.3h1.5v1.5h-1.5zM448.4 321.3h0.8v0.8h-0.8zM409.8 287.9h1.0v1.0h-1.0zM439.4 315.7h1.4v1.4h-1.4zM464.0 262.9h0.8v0.8h-0.8zM457.2 337.0h0.8v0.8h-0.8zM471.6 360.0h1.3v1.3h-1.3zM419.7 344.3h1.2v1.2h-1.2zM445.8 258.9h1.1v1.1h-1.1zM458.3 323.6h0.6v0.6h-0.6zM438.8 316.1h0.9v0.9h-0.9zM441.5 261.4h1.1v1.1h-1.1zM470.6 384.3h1.1v1.1h-1.1zM483.8 389.0h1.3v1.3h-1.3zM478.6 362.8h1.4v1.4h-1.4zM406.7 386.1h0.7v0.7h-0.7zM456.2 303.5h1.1v1.1h-1.1zM473.6 391.6h1.4v1.4h-1.4zM467.5 291.4h1.0v1.0h-1.0zM461.4 249.4h1.5v1.5h-1.5zM456.1 286.5h1.4v1.4h-1.4zM456.7 330.9h1.3v1.3h-1.3zM471.1 303.4h1.2v1.2h-1.2zM414.2 382.6h0.7v0.7h-0.7zM464.2 307.5h0.7v0.7h-0.7zM461.2 265.8h0.7v0.7h-0.7zM436.0 304.8h1.2v1.2h-1.2zM468.6 286.5h1.1v1.1h-1.1zM490.3 308.2h1.5v1.5h-1.5zM480.1 288.1h1.1v1.1h-1.1zM457.4 373.0h1.4v1.4h-1.4zM445.6 272.3h0.9v0.9h-0.9zM419.8 384.5h0.8v0.8h-0.8zM470.4 289.7h0.6v0.6h-0.6zM444.6 390.1h1.0v1.0h-1.0zM453.0 276.1h1.5v1.5h-1.5zM404.0 324.9h0.7v0.7h-0.7zM452.9 349.5h0.8v0.8h-0.8zM497.5 365.4h1.2v1.2h-1.2zM422.4 361.7h1.3v1.3h-1.3zM471.0 309.0h0.9v0.9h-0.9zM466.6 275.8h0.9v0.9h-0.9zM444.0 373.0h1.2v1.2h-1.2zM457.9 302.3h1.1v1.1h-1.1zM462.8 370.4h1.4v1.4h-1.4zM393.7 384.1h1.3v1.3h-1.3zM440.3 272.1h1.1v1.1h-1.1zM458.9 313.2h1.1v1.1h-1.1zM470.3 363.4h1.3v1.3h-1.3zM500.0 308.9h0.7v0.7h-0.7zM469.5 391.7h0.7v0.7h-0.7zM441.2 281.2h0.7v0.7h-0.7zM491.5 389.7h1.3v1.3h-1.3zM424.7 303.6h0.6v0.6h-0.6zM487.7 359.7h1.1v1.1h-1.1zM429.5 253.8h0.8v0.8h-0.8zM420.1 292.3h1.0v1.0h-1.0zM442.4 276.9h0.8v0.8h-0.8zM449.6 286.7h0.9v0.9h-0.9zM438.0 273.0h0.6v0.6h-0.6zM432.6 368.4h0.7v0.7h-0.7zM449.0 252.2h1.4v1.4h-1.4zM488.5 371.8h0.8v0.8h-0.8zM427.9 280.6h0.7v0.7h-0.7zM439.3 351.4h1.2v1.2h-1.2zM452.8 365.8h1.2v1.2h-1.2zM444.8 244.8h0.8v0.8h-0.8zM456.2 290.5h0.9v0.9h-0.9zM406.1 376.8h1.3v1.3h-1.3zM468.7 338.6h1.2v1.2h-1.2zM456.7 378.2h1.3v1.3h-1.3zM431.1 276.4h1.1v1.1h-1.1zM442.0 250.5h0.9v0.9h-0.9zM480.0 249.8h1.3v1.3h-1.3zM415.6 296.9h1.5v1.5h-1.5zM452.6 325.8h0.6v0.6h-0.6zM421.9 369.0h1.1v1.1h-1.1zM478.7 255.1h0.7v0.7h-0.7zM429.1 303.9h0.6v0.6h-0.6zM408.4 244.1h1.1v1.1h-1.1zM410.1 347.9h1.3v1.3h-1.3zM461.9 261.5h1.4v1.4h-1.4zM421.0 292.8h1.5v1.5h-1.5zM467.6 278.4h0.9v0.9h-0.9zM451.5 261.7h1.0v1.0h-1.0zM433.2 327.4h1.3v1.3h-1.3zM456.0 332.8h0.9v0.9h-0.9zM450.2 284.3h0.9v0.9h-0.9zM474.0 358.3h1.0v1.0h-1.0zM447.8 373.9h1.2v1.2h-1.2zM420.3 374.8h0.7v0.7h-0.7zM467.2 324.1h0.6v0.6h-0.6zM465.7 291.4h1.4v1.4h-1.4zM457.5 335.8h1.3v1.3h-1.3zM457.9 345.1h0.7v0.7h-0.7zM433.6 380.2h1.3v1.3h-1.3zM425.8 321.1h1.5v1.5h-1.5zM474.4 257.4h0.7v0.7h-0.7zM443.1 366.2h0.8v0.8h-0.8zM404.2 335.3h1.1v1.1h-1.1zM436.7 316.6h1.5v1.5h-1.5zM447.7 299.3h0.9v0.9h-0.9zM444.2 377.0h1.2v1.2h-1.2zM450.1 302.8h1.1v1.1h-1.1zM453.0 277.8h1.0v1.0h-1.0zM473.1 309.0h1.5v1.5h-1.5zM490.2 379.6h1.0v1.0h-1.0zM431.8 254.3h0.7v0.7h-0.7zM470.7 321.6h1.2v1.2h-1.2zM494.8 311.6h1.4v1.4h-1.4zM434.9 330.9h0.9v0.9h-0.9zM427.9 382.5h0.7v0.7h-0.7zM484.3 264.9h0.7v0.7h-0.7zM458.3 337.8h0.9v0.9h-0.9zM483.7 315.8h0.8v0.8h-0.8zM423.7 371.4h1.2v1.2h-1.2zM464.7 322.6h1.4v1.4h-1.4zM403.3 252.5h1.2v1.2h-1.2zM414.6 368.1h1.3v1.3h-1.3zM420.0 326.9h0.8v0.8h-0.8zM437.9 298.8h1.5v1.5h-1.5zM459.2 341.9h0.9v0.9h-0.9zM405.6 290.3h1.4v1.4h-1.4zM438.9 259.5h1.1v1.1h-1.1zM461.7 343.4h1.0v1.0h-1.0zM424.1 384.2h0.8v0.8h-0.8zM399.1 332.7h0.6v0.6h-0.6zM483.9 293.3h0.9v0.9h-0.9zM405.6 307.3h1.1v1.1h-1.1zM454.0 323.0h0.9v0.9h-0.9zM490.4 264.8h0.9v0.9h-0.9zM460.4 254.8h0.7v0.7h-0.7zM436.0 310.3h1.3v1.3h-1.3zM412.3 328.5h1.4v1.4h-1.4zM473.4 248.9h0.7v0.7h-0.7zM427.1 373.1h1.4v1.4h-1.4zM461.9 362.3h1.4v1.4h-1.4zM472.2 277.3h0.8v0.8h-0.8zM443.2 293.7h1.0v1.0h-1.0zM425.8 323.3h0.9v0.9h-0.9zM432.3 273.0h1.4v1.4h-1.4zM459.3 341.7h0.8v0.8h-0.8zM415.1 329.1h1.2v1.2h-1.2zM424.8 345.8h1.1v1.1h-1.1zM415.0 245.1h1.2v1.2h-1.2zM463.7 359.5h1.3v1.3h-1.3zM475.5 364.6h1.1v1.1h-1.1zM463.3 256.5h1.0v1.0h-1.0zM395.2 355.5h1.5v1.5h-1.5zM444.8 330.9h0.6v0.6h-0.6zM464.8 306.6h1.1v1.1h-1.1zM482.1 364.1h1.2v1.2h-1.2zM470.0 338.3h0.7v0.7h-0.7zM410.9 360.0h1.4v1.4h-1.4zM438.5 256.7h1.0v1.0h-1.0zM471.1 316.8h0.7v0.7h-0.7zM431.5 327.6h0.7v0.7h-0.7zM454.3 307.0h1.1v1.1h-1.1zM428.9 260.7h0.9v0.9h-0.9zM398.3 334.0h1.3v1.3h-1.3zM403.1 263.4h1.2v1.2h-1.2zM474.6 361.0h0.8v0.8h-0.8zM464.3 370.9h0.7v0.7h-0.7zM442.6 322.3h0.7v0.7h-0.7zM418.6 359.0h1.0v1.0h-1.0zM466.6 310.7h1.0v1.0h-1.0zM454.8 339.9h1.2v1.2h-1.2zM418.2 315.5h0.8v0.8h-0.8zM414.7 393.8h1.2v1.2h-1.2zM471.8 366.1h1.5v1.5h-1.5zM439.5 263.4h1.4v1.4h-1.4zM469.0 350.1h1.5v1.5h-1.5zM414.9 285.5h0.9v0.9h-0.9zM400.3 271.7h1.3v1.3h-1.3zM409.0 273.3h0.8v0.8h-0.8zM465.3 281.6h0.6v0.6h-0.6zM483.6 304.7h0.7v0.7h-0.7zM446.0 360.3h0.6v0.6h-0.6zM430.3 263.8h1.5v1.5h-1.5zM466.0 260.7h1.2v1.2h-1.2zM418.9 383.1h0.7v0.7h-0.7zM470.9 392.7h1.0v1.0h-1.0zM454.4 275.2h1.5v1.5h-1.5zM450.9 252.8h1.0v1.0h-1.0zM479.6 326.0h1.2v1.2h-1.2zM485.2 268.9h1.0v1.0h-1.0zM488.2 320.2h1.5v1.5h-1.5zM452.9 244.1h0.8v0.8h-0.8zM496.4 337.1h0.8v0.8h-0.8zM401.9 270.1h1.2v1.2h-1.2zM400.5 273.9h1.2v1.2h-1.2zM416.6 339.0h0.8v0.8h-0.8zM406.9 288.0h0.9v0.9h-0.9zM452.4 356.8h1.1v1.1h-1.1zM470.6 361.0h1.2v1.2h-1.2zM408.5 322.6h1.4v1.4h-1.4zM464.5 253.6h0.7v0.7h-0.7zM459.7 314.8h1.1v1.1h-1.1zM457.7 389.8h1.1v1.1h-1.1zM425.1 330.3h0.8v0.8h-0.8zM425.8 334.8h1.0v1.0h-1.0zM406.9 326.9h1.4v1.4h-1.4zM403.5 330.7h0.8v0.8h-0.8zM492.5 248.0h1.0v1.0h-1.0zM479.0 307.3h0.8v0.8h-0.8zM459.2 291.7h0.9v0.9h-0.9zM442.7 305.5h1.5v1.5h-1.5zM431.0 325.8h1.5v1.5h-1.5zM408.0 306.3h1.5v1.5h-1.5zM450.0 267.9h1.2v1.2h-1.2zM431.4 393.5h1.1v1.1h-1.1zM440.9 338.4h0.8v0.8h-0.8zM456.1 245.2h1.1v1.1h-1.1zM456.4 307.1h1.3v1.3h-1.3zM466.8 304.4h0.7v0.7h-0.7zM406.6 320.4h1.1v1.1h-1.1zM445.0 375.3h1.5v1.5h-1.5zM442.5 385.1h0.9v0.9h-0.9zM430.9 245.7h0.6v0.6h-0.6zM429.3 257.8h0.7v0.7h-0.7zM448.5 376.6h0.9v0.9h-0.9zM432.5 275.6h0.9v0.9h-0.9zM452.3 382.7h0.9v0.9h-0.9zM490.0 371.0h0.8v0.8h-0.8zM462.0 345.7h1.2v1.2h-1.2zM434.4 379.4h1.4v1.4h-1.4zM464.6 283.7h0.6v0.6h-0.6zM412.5 331.3h1.2v1.2h-1.2zM437.6 257.2h1.5v1.5h-1.5zM411.8 391.6h1.0v1.0h-1.0zM457.6 281.8h0.7v0.7h-0.7zM420.8 294.8h0.9v0.9h-0.9zM501.3 390.7h1.2v1.2h-1.2zM411.0 287.1h1.5v1.5h-1.5zM424.7 390.6h0.8v0.8h-0.8zM498.2 293.6h1.3v1.3h-1.3zM462.4 292.7h1.4v1.4h-1.4zM413.3 283.2h1.0v1.0h-1.0zM466.6 378.7h0.7v0.7h-0.7zM475.0 380.2h1.1v1.1h-1.1zM467.9 270.5h0.7v0.7h-0.7zM400.5 360.5h1.2v1.2h-1.2zM466.9 369.1h1.0v1.0h-1.0zM446.3 373.6h0.6v0.6h-0.6zM500.3 340.9h1.5v1.5h-1.5zM450.0 283.2h1.1v1.1h-1.1zM431.4 297.2h0.9v0.9h-0.9zM412.7 284.6h1.2v1.2h-1.2zM474.9 305.3h1.3v1.3h-1.3zM407.7 297.1h0.7v0.7h-0.7zM493.1 350.4h1.0v1.0h-1.0zM470.4 316.5h1.3v1.3h-1.3zM477.5 365.6h1.1v1.1h-1.1zM401.2 372.9h0.9v0.9h-0.9zM460.4 364.9h0.8v0.8h-0.8zM461.5 326.0h0.8v0.8h-0.8zM428.5 327.2h1.5v1.5h-1.5zM474.9 273.4h0.7v0.7h-0.7zM457.7 390.9h1.5v1.5h-1.5zM413.5 282.2h0.6v0.6h-0.6zM439.6 262.3h0.6v0.6h-0.6zM407.9 322.9h0.8v0.8h-0.8zM430.0 257.8h1.1v1.1h-1.1zM426.0 336.1h0.9v0.9h-0.9zM444.9 370.1h0.8v0.8h-0.8zM418.6 340.9h1.4v1.4h-1.4zM478.5 383.1h1.5v1.5h-1.5zM410.3 278.1h0.7v0.7h-0.7zM431.0 390.4h1.2v1.2h-1.2zM446.2 337.6h1.5v1.5h-1.5zM416.5 267.3h0.8v0.8h-0.8zM422.8 257.0h1.2v1.2h-1.2zM451.1 337.0h1.1v1.1h-1.1zM422.8 256.9h1.0v1.0h-1.0zM463.2 340.5h1.3v1.3h-1.3zM425.1 283.9h1.1v1.1h-1.1zM459.3 354.9h0.9v0.9h-0.9zM465.6 351.8h0.7v0.7h-0.7zM457.7 261.4h1.0v1.0h-1.0zM481.8 388.6h0.8v0.8h-0.8zM445.3 287.8h1.3v1.3h-1.3zM432.9 368.7h0.9v0.9h-0.9zM432.0 340.3h0.7v0.7h-0.7zM398.6 301.9h1.0v1.0h-1.0zM421.6 267.9h1.0v1.0h-1.0zM441.6 365.6h0.7v0.7h-0.7zM423.5 334.5h1.1v1.1h-1.1zM458.0 319.4h1.1v1.1h-1.1zM451.5 275.1h1.3v1.3h-1.3zM407.1 247.0h1.3v1.3h-1.3zM495.9 331.3h1.1v1.1h-1.1zM443.4 369.4h1.0v1.0h-1.0zM460.5 327.0h1.1v1.1h-1.1zM407.1 373.7h1.1v1.1h-1.1zM460.9 290.5h0.6v0.6h-0.6zM442.7 368.1h0.7v0.7h-0.7zM467.1 333.4h0.7v0.7h-0.7zM431.7 244.7h0.8v0.8h-0.8zM498.5 378.5h1.4v1.4h-1.4zM426.9 279.2h1.3v1.3h-1.3zM448.9 321.9h0.7v0.7h-0.7zM401.4 309.2h1.0v1.0h-1.0zM418.6 340.2h1.2v1.2h-1.2zM455.2 374.7h0.8v0.8h-0.8zM479.1 248.8h1.0v1.0h-1.0zM430.3 276.5h0.7v0.7h-0.7zM424.9 375.6h1.1v1.1h-1.1zM488.6 274.0h1.4v1.4h-1.4zM461.4 343.4h0.8v0.8h-0.8zM409.3 390.9h0.8v0.8h-0.8zM481.1 322.6h1.0v1.0h-1.0zM478.4 315.1h0.9v0.9h-0.9zM424.9 339.8h1.1v1.1h-1.1zM441.1 277.0h0.7v0.7h-0.7zM449.7 340.0h0.8v0.8h-0.8zM424.9 392.0h1.1v1.1h-1.1zM440.3 250.4h1.3v1.3h-1.3zM429.1 367.0h0.9v0.9h-0.9zM419.8 259.3h0.9v0.9h-0.9zM458.7 260.3h1.0v1.0h-1.0zM411.0 384.7h1.0v1.0h-1.0zM425.0 268.9h1.0v1.0h-1.0zM491.8 369.9h1.4v1.4h-1.4zM399.5 359.0h1.1v1.1h-1.1zM439.7 301.8h0.9v0.9h-0.9zM470.3 343.5h1.4v1.4h-1.4zM473.4 274.1h1.1v1.1h-1.1zM433.2 374.4h1.4v1.4h-1.4zM460.7 242.3h1.0v1.0h-1.0zM480.7 315.7h1.4v1.4h-1.4zM471.5 362.1h1.2v1.2h-1.2zM419.9 268.8h0.6v0.6h-0.6zM451.3 288.5h0.8v0.8h-0.8zM470.5 278.7h0.9v0.9h-0.9zM429.3 309.0h1.3v1.3h-1.3zM449.8 254.4h1.2v1.2h-1.2zM425.4 292.6h1.1v1.1h-1.1zM434.7 312.5h1.5v1.5h-1.5zM467.7 390.7h1.2v1.2h-1.2zM411.2 391.0h0.7v0.7h-0.7zM456.4 317.1h0.6v0.6h-0.6zM471.8 266.4h0.8v0.8h-0.8zM445.5 275.7h1.4v1.4h-1.4zM461.3 345.4h0.9v0.9h-0.9zM453.1 289.5h1.2v1.2h-1.2zM432.5 288.8h0.9v0.9h-0.9zM402.5 362.5h0.6v0.6h-0.6zM448.0 254.5h1.3v1.3h-1.3zM449.4 348.5h1.0v1.0h-1.0zM421.7 246.6h1.3v1.3h-1.3zM477.8 347.2h0.9v0.9h-0.9zM401.2 354.9h1.3v1.3h-1.3zM448.9 351.7h1.3v1.3h-1.3zM472.0 289.7h1.1v1.1h-1.1zM415.9 360.1h1.4v1.4h-1.4zM447.4 357.4h1.4v1.4h-1.4zM396.8 392.8h1.3v1.3h-1.3zM421.4 280.3h1.0v1.0h-1.0zM468.3 272.1h0.9v0.9h-0.9zM467.4 323.9h1.2v1.2h-1.2zM454.6 257.6h1.3v1.3h-1.3zM467.7 253.6h0.7v0.7h-0.7zM435.1 332.2h0.7v0.7h-0.7zM430.7 329.4h0.6v0.6h-0.6zM428.5 322.7h1.0v1.0h-1.0zM450.1 257.0h0.7v0.7h-0.7zM405.4 359.5h1.1v1.1h-1.1zM467.7 269.0h0.9v0.9h-0.9zM414.8 381.7h0.6v0.6h-0.6zM448.7 265.0h0.6v0.6h-0.6zM428.8 295.0h1.1v1.1h-1.1zM443.0 304.8h1.1v1.1h-1.1zM438.6 367.4h1.0v1.0h-1.0zM425.5 309.3h0.9v0.9h-0.9zM430.1 321.9h1.4v1.4h-1.4zM488.6 324.5h1.4v1.4h-1.4zM405.7 270.2h1.3v1.3h-1.3zM446.2 297.9h0.9v0.9h-0.9zM478.1 300.8h1.3v1.3h-1.3zM485.0 308.6h1.3v1.3h-1.3zM397.2 246.8h0.8v0.8h-0.8zM390.3 242.3h1.2v1.2h-1.2zM453.7 384.9h0.7v0.7h-0.7zM483.6 392.7h1.3v1.3h-1.3zM468.6 288.0h1.2v1.2h-1.2zM427.3 322.8h0.9v0.9h-0.9zM480.9 244.7h0.9v0.9h-0.9zM445.8 245.5h0.6v0.6h-0.6zM436.1 380.5h0.8v0.8h-0.8zM482.3 312.2h1.4v1.4h-1.4zM426.2 253.3h1.0v1.0h-1.0zM430.4 259.7h0.9v0.9h-0.9zM467.1 311.3h1.2v1.2h-1.2zM403.0 275.1h1.4v1.4h-1.4zM429.8 380.4h1.4v1.4h-1.4zM400.3 273.2h1.2v1.2h-1.2zM473.6 374.5h1.0v1.0h-1.0zM431.9 376.7h1.2v1.2h-1.2zM442.7 303.3h0.7v0.7h-0.7zM460.9 357.2h1.4v1.4h-1.4zM479.3 375.0h0.7v0.7h-0.7zM479.1 316.4h1.3v1.3h-1.3zM462.1 250.6h0.9v0.9h-0.9zM452.3 343.4h0.9v0.9h-0.9zM447.2 344.9h0.7v0.7h-0.7zM455.0 279.9h0.8v0.8h-0.8zM400.8 305.8h1.3v1.3h-1.3zM418.9 303.8h0.7v0.7h-0.7zM457.3 295.1h0.6v0.6h-0.6zM471.9 283.2h1.0v1.0h-1.0zM432.1 270.1h1.0v1.0h-1.0zM461.6 391.0h0.8v0.8h-0.8zM465.6 388.2h0.8v0.8h-0.8zM452.9 243.7h0.9v0.9h-0.9zM433.2 272.2h0.7v0.7h-0.7zM391.1 389.1h1.0v1.0h-1.0zM402.7 311.4h1.1v1.1h-1.1zM411.2 310.5h1.3v1.3h-1.3zM397.1 336.6h0.7v0.7h-0.7zM426.7 252.1h1.1v1.1h-1.1zM413.6 282.1h1.2v1.2h-1.2zM448.0 339.4h0.6v0.6h-0.6zM404.1 327.0h0.8v0.8h-0.8zM451.1 359.4h1.0v1.0h-1.0zM434.2 252.9h1.2v1.2h-1.2zM400.0 275.5h0.9v0.9h-0.9zM445.0 254.1h0.7v0.7h-0.7zM460.4 264.9h1.4v1.4h-1.4zM443.0 349.7h1.0v1.0h-1.0zM433.4 361.2h1.0v1.0h-1.0zM457.9 281.7h1.1v1.1h-1.1zM410.6 303.6h1.1v1.1h-1.1zM404.5 281.7h1.3v1.3h-1.3zM460.7 370.3h1.1v1.1h-1.1zM443.2 289.3h1.1v1.1h-1.1zM419.1 318.3h0.8v0.8h-0.8zM435.9 352.3h0.9v0.9h-0.9zM401.1 272.5h0.7v0.7h-0.7zM462.2 284.8h0.7v0.7h-0.7zM391.1 360.0h1.2v1.2h-1.2zM478.3 289.2h0.8v0.8h-0.8zM460.8 307.6h0.7v0.7h-0.7zM438.3 278.1h1.0v1.0h-1.0zM466.7 370.2h0.7v0.7h-0.7zM488.9 389.4h0.8v0.8h-0.8zM461.9 245.2h0.8v0.8h-0.8zM471.1 286.3h1.2v1.2h-1.2zM419.5 284.6h1.0v1.0h-1.0zM441.9 300.0h0.8v0.8h-0.8zM467.1 338.1h1.3v1.3h-1.3zM461.6 286.9h1.1v1.1h-1.1zM469.2 381.1h0.8v0.8h-0.8zM488.5 369.2h0.7v0.7h-0.7zM483.5 372.3h1.5v1.5h-1.5zM400.3 247.2h0.7v0.7h-0.7zM467.0 293.7h0.8v0.8h-0.8zM458.3 365.3h1.3v1.3h-1.3zM435.1 315.4h0.7v0.7h-0.7zM435.0 329.0h1.2v1.2h-1.2zM465.5 246.2h1.0v1.0h-1.0zM437.5 302.0h1.1v1.1h-1.1zM473.1 348.9h0.8v0.8h-0.8zM391.0 278.6h0.9v0.9h-0.9zM472.1 266.8h1.0v1.0h-1.0zM443.5 330.2h0.7v0.7h-0.7zM458.6 283.3h0.6v0.6h-0.6zM448.9 366.4h1.3v1.3h-1.3zM472.4 366.6h0.7v0.7h-0.7zM492.8 339.4h0.8v0.8h-0.8zM405.0 329.0h1.2v1.2h-1.2zM426.6 381.1h1.4v1.4h-1.4zM403.5 282.0h0.8v0.8h-0.8zM392.2 320.6h1.5v1.5h-1.5zM410.4 388.0h1.1v1.1h-1.1zM455.5 313.6h0.6v0.6h-0.6zM421.8 278.1h0.6v0.6h-0.6zM409.6 276.4h0.7v0.7h-0.7zM481.9 251.3h1.1v1.1h-1.1zM427.1 368.6h1.1v1.1h-1.1zM484.6 339.3h1.0v1.0h-1.0zM468.4 388.3h0.7v0.7h-0.7zM441.5 316.1h1.4v1.4h-1.4zM458.0 280.5h0.7v0.7h-0.7zM408.0 252.5h1.3v1.3h-1.3zM496.2 276.5h1.3v1.3h-1.3zM443.3 344.2h1.3v1.3h-1.3zM446.5 377.9h1.4v1.4h-1.4zM415.9 375.9h1.1v1.1h-1.1zM418.8 386.9h0.8v0.8h-0.8zM445.7 288.7h0.7v0.7h-0.7zM446.8 305.2h0.8v0.8h-0.8zM462.1 266.1h0.8v0.8h-0.8zM455.3 353.1h0.8v0.8h-0.8zM425.4 283.4h1.4v1.4h-1.4zM450.9 296.2h1.4v1.4h-1.4zM414.3 283.8h1.3v1.3h-1.3zM460.8 319.2h0.8v0.8h-0.8zM425.3 334.9h0.6v0.6h-0.6zM426.4 359.6h0.8v0.8h-0.8zM444.3 250.1h1.4v1.4h-1.4zM406.0 327.9h1.3v1.3h-1.3zM431.5 261.4h1.2v1.2h-1.2zM403.8 253.6h0.9v0.9h-0.9zM390.1 362.8h1.1v1.1h-1.1zM411.8 249.0h0.7v0.7h-0.7zM455.7 257.2h0.8v0.8h-0.8zM418.7 305.6h1.0v1.0h-1.0zM446.3 285.4h1.3v1.3h-1.3zM427.5 262.7h0.9v0.9h-0.9zM436.5 366.0h1.4v1.4h-1.4zM418.0 295.9h1.2v1.2h-1.2zM451.8 329.8h1.1v1.1h-1.1zM405.6 260.6h0.8v0.8h-0.8zM438.2 313.9h1.2v1.2h-1.2zM425.8 281.7h1.0v1.0h-1.0zM457.6 365.0h1.4v1.4h-1.4zM489.8 307.0h0.8v0.8h-0.8zM420.7 265.6h1.0v1.0h-1.0zM412.2 322.4h1.1v1.1h-1.1zM451.8 391.7h0.8v0.8h-0.8zM422.6 312.8h0.6v0.6h-0.6zM468.8 307.4h1.0v1.0h-1.0zM465.2 334.8h1.3v1.3h-1.3zM431.0 390.4h1.0v1.0h-1.0zM458.6 361.5h1.4v1.4h-1.4zM410.7 390.2h1.4v1.4h-1.4zM422.5 350.0h1.5v1.5h-1.5zM415.8 326.8h1.4v1.4h-1.4zM418.6 366.9h0.7v0.7h-0.7zM457.7 357.6h0.9v0.9h-0.9zM417.3 377.0h1.1v1.1h-1.1zM477.2 275.1h0.8v0.8h-0.8zM462.0 338.3h1.5v1.5h-1.5zM448.5 361.2h0.7v0.7h-0.7zM437.5 378.9h0.6v0.6h-0.6zM498.9 257.3h1.2v1.2h-1.2zM437.0 273.6h0.8v0.8h-0.8zM447.2 383.7h0.9v0.9h-0.9zM470.1 342.3h1.4v1.4h-1.4zM478.4 393.9h0.8v0.8h-0.8zM448.7 256.7h1.3v1.3h-1.3zM429.2 309.1h1.0v1.0h-1.0zM420.9 361.3h0.9v0.9h-0.9zM422.4 268.1h1.2v1.2h-1.2zM444.5 357.8h0.8v0.8h-0.8zM485.2 263.0h0.8v0.8h-0.8zM421.4 292.2h0.9v0.9h-0.9zM459.4 383.2h1.3v1.3h-1.3zM431.7 376.1h1.5v1.5h-1.5zM444.2 315.8h0.8v0.8h-0.8zM416.2 357.7h1.1v1.1h-1.1zM445.2 289.0h0.7v0.7h-0.7zM479.1 376.3h1.5v1.5h-1.5zM447.8 339.0h1.0v1.0h-1.0zM476.2 306.4h1.5v1.5h-1.5zM419.4 317.0h1.1v1.1h-1.1zM417.8 276.1h0.8v0.8h-0.8zM453.5 289.0h1.5v1.5h-1.5zM478.4 281.2h0.7v0.7h-0.7zM434.5 314.6h1.2v1.2h-1.2zM447.0 291.0h0.8v0.8h-0.8zM468.3 391.8h1.2v1.2h-1.2zM404.7 391.8h0.6v0.6h-0.6zM472.4 277.5h1.2v1.2h-1.2zM420.0 277.3h0.6v0.6h-0.6zM435.2 388.5h1.2v1.2h-1.2zM453.9 393.5h1.0v1.0h-1.0zM466.7 315.9h1.4v1.4h-1.4zM488.2 253.6h0.6v0.6h-0.6zM467.4 373.7h1.3v1.3h-1.3zM478.7 318.0h1.3v1.3h-1.3zM479.4 246.5h1.4v1.4h-1.4zM473.6 259.6h0.9v0.9h-0.9zM445.4 369.1h1.4v1.4h-1.4zM451.3 250.3h0.8v0.8h-0.8zM423.3 377.5h1.4v1.4h-1.4zM401.6 336.2h1.0v1.0h-1.0zM459.2 264.0h1.3v1.3h-1.3zM418.6 290.1h0.9v0.9h-0.9zM451.1 297.8h1.3v1.3h-1.3zM409.1 376.6h1.5v1.5h-1.5zM482.1 382.4h1.4v1.4h-1.4zM400.9 365.8h1.1v1.1h-1.1zM393.8 310.2h1.0v1.0h-1.0zM432.9 250.2h1.0v1.0h-1.0zM482.7 331.9h1.1v1.1h-1.1zM428.0 304.3h1.2v1.2h-1.2zM436.6 336.2h0.6v0.6h-0.6zM447.2 298.1h0.8v0.8h-0.8zM456.8 378.7h1.2v1.2h-1.2zM406.8 308.1h0.7v0.7h-0.7zM418.7 297.8h1.4v1.4h-1.4zM430.9 308.9h1.3v1.3h-1.3zM484.4 358.3h1.0v1.0h-1.0zM430.4 358.8h0.9v0.9h-0.9zM484.0 330.3h1.4v1.4h-1.4zM450.4 338.1h0.8v0.8h-0.8zM456.8 250.6h1.2v1.2h-1.2zM455.1 382.1h0.7v0.7h-0.7zM435.7 364.0h0.8v0.8h-0.8zM469.3 256.4h1.3v1.3h-1.3zM456.1 370.1h1.5v1.5h-1.5zM421.7 253.5h1.2v1.2h-1.2zM432.5 367.7h1.2v1.2h-1.2zM449.6 333.7h1.1v1.1h-1.1zM463.5 291.3h0.6v0.6h-0.6zM437.1 276.1h1.3v1.3h-1.3zM450.5 322.9h0.6v0.6h-0.6zM448.8 359.4h1.4v1.4h-1.4zM481.0 256.6h0.9v0.9h-0.9zM423.1 247.6h1.3v1.3h-1.3zM455.5 242.4h1.1v1.1h-1.1zM435.2 350.8h0.7v0.7h-0.7zM414.8 261.1h1.4v1.4h-1.4zM501.0 320.2h0.9v0.9h-0.9zM479.1 342.9h1.3v1.3h-1.3zM476.1 299.2h0.7v0.7h-0.7zM447.8 269.3h0.8v0.8h-0.8zM421.0 282.4h0.9v0.9h-0.9zM454.5 316.1h1.4v1.4h-1.4zM479.9 362.0h1.1v1.1h-1.1zM466.9 244.1h1.0v1.0h-1.0zM478.4 242.1h0.9v0.9h-0.9zM453.5 328.4h1.3v1.3h-1.3zM475.9 351.9h0.9v0.9h-0.9zM429.9 357.6h1.0v1.0h-1.0zM488.3 282.3h0.8v0.8h-0.8zM434.3 283.3h1.4v1.4h-1.4zM429.6 310.1h1.0v1.0h-1.0zM480.2 391.1h0.7v0.7h-0.7zM433.3 370.0h0.6v0.6h-0.6zM466.2 350.2h1.3v1.3h-1.3zM474.2 354.0h0.9v0.9h-0.9zM472.2 338.1h1.2v1.2h-1.2zM454.3 356.9h0.9v0.9h-0.9zM439.1 376.7h1.0v1.0h-1.0zM410.0 291.4h0.8v0.8h-0.8zM437.9 388.0h0.9v0.9h-0.9zM402.2 249.6h0.9v0.9h-0.9zM448.9 296.7h0.9v0.9h-0.9zM453.2 376.3h0.9v0.9h-0.9zM450.1 248.9h1.5v1.5h-1.5zM435.3 250.4h1.0v1.0h-1.0zM445.7 378.1h0.8v0.8h-0.8zM412.2 349.7h1.3v1.3h-1.3zM427.3 245.7h1.0v1.0h-1.0zM446.6 283.1h0.9v0.9h-0.9zM464.1 339.9h1.4v1.4h-1.4zM461.1 247.5h1.3v1.3h-1.3zM423.7 303.8h1.2v1.2h-1.2zM488.7 380.4h0.6v0.6h-0.6zM451.4 266.8h0.9v0.9h-0.9zM431.7 247.5h1.3v1.3h-1.3zM467.4 356.3h0.9v0.9h-0.9zM464.5 283.8h1.3v1.3h-1.3zM459.3 365.5h1.0v1.0h-1.0zM435.2 334.4h0.9v0.9h-0.9zM486.0 309.5h0.7v0.7h-0.7zM450.6 242.6h0.7v0.7h-0.7zM474.2 246.6h1.1v1.1h-1.1zM422.2 377.9h1.4v1.4h-1.4zM476.4 343.8h0.8v0.8h-0.8zM414.4 343.1h1.4v1.4h-1.4zM410.5 352.6h1.3v1.3h-1.3zM413.5 378.0h0.7v0.7h-0.7zM447.5 297.4h1.0v1.0h-1.0zM456.5 297.7h1.4v1.4h-1.4zM446.7 386.1h1.2v1.2h-1.2zM416.6 275.7h1.0v1.0h-1.0zM494.8 320.1h1.5v1.5h-1.5zM459.8 320.6h0.8v0.8h-0.8zM404.0 268.5h0.7v0.7h-0.7zM429.2 288.9h1.3v1.3h-1.3zM458.8 344.3h0.7v0.7h-0.7zM451.6 377.7h1.3v1.3h-1.3zM463.5 275.7h1.4v1.4h-1.4zM433.9 334.7h1.3v1.3h-1.3zM408.3 283.7h0.8v0.8h-0.8zM420.0 343.6h0.7v0.7h-0.7zM447.0 371.0h0.8v0.8h-0.8zM404.8 345.4h0.9v0.9h-0.9zM392.9 368.7h1.4v1.4h-1.4zM440.2 245.6h1.3v1.3h-1.3zM431.8 258.9h0.9v0.9h-0.9zM422.6 306.2h1.2v1.2h-1.2zM496.0 347.6h0.7v0.7h-0.7zM403.8 242.7h1.1v1.1h-1.1zM492.2 304.7h0.7v0.7h-0.7zM495.6 351.0h1.4v1.4h-1.4zM464.6 369.6h1.4v1.4h-1.4zM418.7 326.7h0.9v0.9h-0.9zM443.2 339.0h1.1v1.1h-1.1zM423.3 248.8h0.8v0.8h-0.8zM468.4 345.9h1.2v1.2h-1.2zM483.3 294.7h1.4v1.4h-1.4zM408.8 256.9h1.1v1.1h-1.1zM492.3 282.5h0.9v0.9h-0.9zM463.3 361.3h1.0v1.0h-1.0zM440.0 378.7h0.8v0.8h-0.8zM486.9 357.1h0.7v0.7h-0.7zM432.1 336.7h1.3v1.3h-1.3zM414.1 367.6h1.2v1.2h-1.2zM435.0 331.9h1.2v1.2h-1.2zM433.3 278.3h0.8v0.8h-0.8zM393.0 243.0h0.7v0.7h-0.7zM426.3 278.4h1.2v1.2h-1.2zM473.5 393.3h1.5v1.5h-1.5zM475.8 389.5h1.0v1.0h-1.0zM474.3 387.8h1.1v1.1h-1.1zM465.3 376.1h1.2v1.2h-1.2zM443.8 312.0h0.8v0.8h-0.8zM460.2 262.1h1.0v1.0h-1.0zM466.5 389.4h0.8v0.8h-0.8zM434.8 288.9h1.2v1.2h-1.2zM449.2 386.4h0.8v0.8h-0.8zM449.6 363.7h1.1v1.1h-1.1zM439.3 370.9h0.7v0.7h-0.7zM427.0 336.4h1.4v1.4h-1.4zM484.0 328.0h0.9v0.9h-0.9zM464.2 306.4h0.6v0.6h-0.6zM401.8 318.1h1.2v1.2h-1.2zM463.6 337.8h1.0v1.0h-1.0zM393.5 363.3h0.9v0.9h-0.9zM485.9 255.8h0.8v0.8h-0.8zM408.4 261.9h1.1v1.1h-1.1zM467.6 339.7h1.3v1.3h-1.3zM429.7 363.0h1.4v1.4h-1.4zM403.6 354.7h1.3v1.3h-1.3zM421.3 363.9h1.3v1.3h-1.3zM439.2 260.0h0.8v0.8h-0.8zM462.9 392.3h0.6v0.6h-0.6zM484.1 299.0h0.6v0.6h-0.6zM452.8 385.3h1.0v1.0h-1.0zM489.2 273.5h1.2v1.2h-1.2zM430.4 390.0h1.2v1.2h-1.2zM452.1 268.8h1.4v1.4h-1.4zM421.4 253.6h0.8v0.8h-0.8zM487.6 245.8h1.5v1.5h-1.5zM391.1 294.8h1.3v1.3h-1.3zM500.1 388.3h1.1v1.1h-1.1zM433.3 286.4h0.9v0.9h-0.9zM447.2 344.2h0.6v0.6h-0.6zM458.9 393.7h1.3v1.3h-1.3zM437.1 352.7h1.3v1.3h-1.3zM427.6 328.4h1.1v1.1h-1.1zM417.2 250.7h1.1v1.1h-1.1zM441.3 265.3h1.0v1.0h-1.0zM395.5 393.9h1.1v1.1h-1.1zM458.4 339.9h1.1v1.1h-1.1zM444.5 279.8h0.9v0.9h-0.9zM445.1 363.7h0.8v0.8h-0.8zM437.0 384.9h0.7v0.7h-0.7zM443.1 391.5h1.3v1.3h-1.3zM451.4 372.4h0.8v0.8h-0.8zM472.4 255.7h1.1v1.1h-1.1zM435.5 392.9h1.2v1.2h-1.2zM433.6 252.9h1.1v1.1h-1.1zM466.0 267.0h1.0v1.0h-1.0zM452.3 287.2h0.9v0.9h-0.9zM467.1 342.6h1.1v1.1h-1.1zM435.5 303.8h1.3v1.3h-1.3zM447.1 266.6h0.7v0.7h-0.7zM464.5 374.7h0.9v0.9h-0.9zM411.0 357.2h1.5v1.5h-1.5zM428.1 264.4h1.2v1.2h-1.2zM423.2 268.1h0.6v0.6h-0.6zM469.5 327.8h0.9v0.9h-0.9zM472.3 244.3h0.9v0.9h-0.9zM448.4 294.2h0.9v0.9h-0.9zM458.2 285.0h1.5v1.5h-1.5zM442.3 275.0h1.0v1.0h-1.0zM451.7 242.1h1.3v1.3h-1.3zM479.1 346.1h1.4v1.4h-1.4zM460.0 314.3h1.4v1.4h-1.4zM417.6 251.6h0.6v0.6h-0.6zM482.6 265.3h0.9v0.9h-0.9zM458.5 352.9h1.2v1.2h-1.2zM466.2 301.0h0.7v0.7h-0.7zM487.6 364.8h0.8v0.8h-0.8zM486.8 376.9h1.0v1.0h-1.0zM422.4 352.4h1.0v1.0h-1.0zM414.2 323.3h1.5v1.5h-1.5zM404.8 298.6h0.8v0.8h-0.8zM410.6 250.0h1.4v1.4h-1.4zM452.4 312.3h0.9v0.9h-0.9zM403.8 373.5h1.0v1.0h-1.0zM422.0 325.3h1.3v1.3h-1.3zM430.7 297.1h1.4v1.4h-1.4zM451.0 286.1h1.2v1.2h-1.2zM430.7 354.0h1.0v1.0h-1.0zM413.7 287.1h0.9v0.9h-0.9zM439.7 350.4h0.7v0.7h-0.7zM463.5 369.5h1.2v1.2h-1.2zM420.1 344.3h0.7v0.7h-0.7zM452.5 302.8h1.2v1.2h-1.2zM425.5 256.8h0.9v0.9h-0.9zM493.2 361.4h0.8v0.8h-0.8zM446.7 293.8h0.6v0.6h-0.6zM413.4 305.9h0.9v0.9h-0.9zM415.9 310.7h1.1v1.1h-1.1zM485.7 292.7h0.6v0.6h-0.6zM414.5 326.7h0.7v0.7h-0.7zM426.0 244.9h0.8v0.8h-0.8zM405.5 363.3h1.4v1.4h-1.4zM418.0 285.6h1.5v1.5h-1.5zM492.6 314.0h0.6v0.6h-0.6zM421.9 302.0h0.8v0.8h-0.8zM465.9 338.8h0.6v0.6h-0.6zM397.2 349.5h1.4v1.4h-1.4zM464.2 288.0h0.6v0.6h-0.6zM424.5 344.2h1.0v1.0h-1.0zM408.8 302.3h0.9v0.9h-0.9zM419.2 333.1h1.3v1.3h-1.3zM481.8 302.5h1.2v1.2h-1.2zM417.5 255.9h1.4v1.4h-1.4zM478.4 251.7h0.7v0.7h-0.7zM464.2 329.3h0.7v0.7h-0.7zM472.4 256.2h1.1v1.1h-1.1zM398.6 264.4h0.9v0.9h-0.9zM442.1 244.7h1.2v1.2h-1.2zM406.5 362.4h1.2v1.2h-1.2zM500.3 292.7h1.4v1.4h-1.4zM430.0 256.2h0.9v0.9h-0.9zM440.6 323.5h1.5v1.5h-1.5zM404.4 345.4h1.3v1.3h-1.3zM419.4 379.5h0.9v0.9h-0.9zM452.0 272.3h1.0v1.0h-1.0zM484.0 324.5h1.0v1.0h-1.0zM424.3 344.2h1.0v1.0h-1.0zM404.2 341.6h1.5v1.5h-1.5zM487.2 302.7h1.1v1.1h-1.1zM477.2 280.7h1.0v1.0h-1.0zM415.8 302.1h1.3v1.3h-1.3zM485.7 340.1h1.2v1.2h-1.2zM469.1 361.5h1.5v1.5h-1.5zM480.1 314.6h1.2v1.2h-1.2zM417.0 308.1h1.3v1.3h-1.3zM434.6 276.1h1.3v1.3h-1.3zM487.5 302.8h1.2v1.2h-1.2zM400.5 308.5h1.0v1.0h-1.0zM462.0 289.7h0.9v0.9h-0.9zM434.1 265.1h1.3v1.3h-1.3zM437.3 279.3h1.1v1.1h-1.1zM411.2 364.3h0.9v0.9h-0.9zM450.9 321.4h0.9v0.9h-0.9zM435.4 331.6h1.5v1.5h-1.5zM459.8 333.5h1.0v1.0h-1.0zM426.8 342.8h1.4v1.4h-1.4zM437.3 306.1h0.9v0.9h-0.9zM402.4 389.4h0.6v0.6h-0.6zM419.1 308.7h0.6v0.6h-0.6zM458.4 308.0h0.9v0.9h-0.9zM415.3 334.2h1.4v1.4h-1.4zM440.6 291.0h1.3v1.3h-1.3zM453.0 316.8h0.7v0.7h-0.7zM440.8 391.0h1.2v1.2h-1.2zM480.3 387.4h1.3v1.3h-1.3zM436.7 335.5h1.3v1.3h-1.3zM454.5 369.2h1.1v1.1h-1.1zM422.2 251.1h0.7v0.7h-0.7zM461.4 286.9h1.1v1.1h-1.1zM416.1 274.3h1.3v1.3h-1.3zM409.8 386.3h0.7v0.7h-0.7zM438.9 344.1h1.4v1.4h-1.4zM424.7 280.8h1.3v1.3h-1.3zM415.5 355.6h0.7v0.7h-0.7zM435.6 336.6h1.2v1.2h-1.2zM464.5 265.6h0.8v0.8h-0.8zM472.8 327.7h0.9v0.9h-0.9zM437.8 306.8h0.8v0.8h-0.8zM482.7 351.6h1.2v1.2h-1.2zM439.7 385.0h1.0v1.0h-1.0zM485.1 361.0h0.6v0.6h-0.6zM436.0 254.4h1.3v1.3h-1.3zM426.2 322.9h1.2v1.2h-1.2zM487.3 277.6h0.6v0.6h-0.6zM465.2 380.1h1.5v1.5h-1.5zM486.8 334.3h1.1v1.1h-1.1zM411.9 348.8h1.3v1.3h-1.3zM498.8 348.4h0.9v0.9h-0.9zM411.4 282.4h0.8v0.8h-0.8zM429.6 297.2h0.6v0.6h-0.6zM437.4 250.5h1.0v1.0h-1.0zM462.0 290.8h1.0v1.0h-1.0zM447.1 390.6h0.8v0.8h-0.8zM406.7 290.9h0.7v0.7h-0.7zM435.0 266.3h1.3v1.3h-1.3zM451.6 274.6h1.3v1.3h-1.3zM426.0 330.3h0.8v0.8h-0.8zM469.9 364.0h1.1v1.1h-1.1zM459.4 336.6h1.2v1.2h-1.2zM450.5 301.2h1.4v1.4h-1.4zM408.7 390.2h1.4v1.4h-1.4zM429.0 267.2h1.4v1.4h-1.4zM457.8 321.0h0.9v0.9h-0.9zM452.5 381.3h0.6v0.6h-0.6zM440.7 268.3h1.2v1.2h-1.2zM494.2 327.0h0.7v0.7h-0.7zM430.0 257.1h1.2v1.2h-1.2zM441.7 302.3h1.4v1.4h-1.4zM492.6 255.8h1.0v1.0h-1.0zM464.6 308.7h0.7v0.7h-0.7zM442.1 342.8h0.8v0.8h-0.8zM427.0 382.9h1.4v1.4h-1.4zM448.6 341.6h1.4v1.4h-1.4zM412.6 294.4h1.0v1.0h-1.0zM421.3 329.0h1.4v1.4h-1.4zM445.4 310.8h1.4v1.4h-1.4zM442.1 289.0h1.5v1.5h-1.5zM454.5 375.6h0.6v0.6h-0.6zM472.4 251.8h1.1v1.1h-1.1zM485.6 310.7h1.0v1.0h-1.0zM400.8 383.6h0.7v0.7h-0.7zM426.7 308.5h0.8v0.8h-0.8zM442.9 361.6h0.8v0.8h-0.8zM455.3 269.6h1.3v1.3h-1.3zM483.1 332.2h0.7v0.7h-0.7zM420.8 291.9h0.8v0.8h-0.8zM420.9 389.8h1.0v1.0h-1.0zM406.3 242.3h1.0v1.0h-1.0zM432.3 329.8h0.8v0.8h-0.8zM475.1 294.9h1.5v1.5h-1.5zM397.9 325.5h1.1v1.1h-1.1zM422.7 331.4h1.2v1.2h-1.2zM429.4 336.7h1.0v1.0h-1.0zM461.5 337.8h1.1v1.1h-1.1zM470.5 265.6h0.9v0.9h-0.9zM441.4 361.5h0.7v0.7h-0.7zM476.3 331.0h0.8v0.8h-0.8zM421.5 389.2h0.8v0.8h-0.8zM441.0 391.4h1.1v1.1h-1.1zM407.6 371.5h0.7v0.7h-0.7zM421.4 361.8h0.9v0.9h-0.9zM449.9 355.6h0.8v0.8h-0.8zM474.5 251.5h1.5v1.5h-1.5zM438.4 247.2h0.7v0.7h-0.7zM476.6 242.9h1.4v1.4h-1.4zM432.0 359.1h0.8v0.8h-0.8zM452.6 260.3h0.7v0.7h-0.7zM440.3 248.5h0.9v0.9h-0.9zM448.3 323.5h0.7v0.7h-0.7zM444.8 275.0h0.6v0.6h-0.6zM433.3 386.7h1.2v1.2h-1.2zM428.4 366.9h0.8v0.8h-0.8zM469.8 371.4h1.2v1.2h-1.2zM400.1 335.7h1.3v1.3h-1.3zM426.1 275.7h0.8v0.8h-0.8zM452.6 254.6h1.5v1.5h-1.5zM414.3 252.9h1.3v1.3h-1.3zM446.9 294.4h0.7v0.7h-0.7zM462.2 371.0h0.9v0.9h-0.9zM407.9 274.5h0.6v0.6h-0.6zM421.1 389.6h0.9v0.9h-0.9zM446.9 250.9h1.2v1.2h-1.2zM432.5 313.8h1.4v1.4h-1.4zM423.2 267.7h1.0v1.0h-1.0zM397.0 354.8h0.7v0.7h-0.7zM423.0 340.4h1.5v1.5h-1.5zM477.3 364.3h0.7v0.7h-0.7zM450.7 297.9h1.4v1.4h-1.4zM475.6 311.5h1.0v1.0h-1.0zM423.1 289.7h0.8v0.8h-0.8zM457.4 259.7h1.4v1.4h-1.4zM424.0 319.1h0.6v0.6h-0.6zM455.6 298.7h0.8v0.8h-0.8zM475.9 246.8h1.4v1.4h-1.4zM438.3 364.9h0.8v0.8h-0.8zM449.6 365.1h1.1v1.1h-1.1zM408.6 323.4h0.7v0.7h-0.7zM466.4 363.6h0.7v0.7h-0.7zM447.8 390.7h0.6v0.6h-0.6zM426.3 358.3h1.2v1.2h-1.2zM439.9 282.5h0.9v0.9h-0.9zM412.6 336.0h0.6v0.6h-0.6zM447.1 293.2h1.1v1.1h-1.1zM424.7 360.7h1.4v1.4h-1.4zM459.2 387.1h0.9v0.9h-0.9zM424.1 291.5h0.9v0.9h-0.9zM436.9 344.2h1.3v1.3h-1.3zM443.3 339.8h1.4v1.4h-1.4zM453.8 318.6h1.4v1.4h-1.4zM486.7 304.2h1.1v1.1h-1.1zM426.7 260.5h1.4v1.4h-1.4zM430.7 366.0h1.4v1.4h-1.4zM451.7 256.3h0.7v0.7h-0.7zM458.2 332.2h0.7v0.7h-0.7zM434.5 311.6h1.3v1.3h-1.3zM436.3 322.3h1.2v1.2h-1.2zM431.0 343.8h1.0v1.0h-1.0zM443.2 385.5h1.0v1.0h-1.0zM471.8 298.9h1.2v1.2h-1.2zM479.1 259.6h0.9v0.9h-0.9zM412.0 372.3h0.7v0.7h-0.7zM486.1 265.4h1.4v1.4h-1.4zM452.2 250.2h0.8v0.8h-0.8zM496.8 261.4h1.3v1.3h-1.3zM465.2 320.8h1.1v1.1h-1.1zM498.6 330.5h1.1v1.1h-1.1zM489.7 388.0h1.1v1.1h-1.1zM450.3 383.1h0.9v0.9h-0.9zM499.5 244.4h1.3v1.3h-1.3zM434.4 298.0h0.9v0.9h-0.9zM396.0 245.3h1.3v1.3h-1.3zM428.1 392.8h1.3v1.3h-1.3zM406.5 307.9h0.9v0.9h-0.9zM459.6 273.9h0.7v0.7h-0.7zM484.4 279.6h1.1v1.1h-1.1zM424.3 375.5h1.0v1.0h-1.0zM416.7 343.8h0.9v0.9h-0.9zM475.1 329.5h0.7v0.7h-0.7zM416.1 277.4h0.6v0.6h-0.6zM444.8 337.5h1.2v1.2h-1.2zM444.3 369.7h0.7v0.7h-0.7zM445.1 278.9h1.1v1.1h-1.1zM400.7 327.6h0.9v0.9h-0.9zM434.7 384.2h0.7v0.7h-0.7zM478.8 314.6h1.3v1.3h-1.3zM484.3 249.5h1.1v1.1h-1.1zM486.2 303.4h0.9v0.9h-0.9zM462.0 271.0h1.1v1.1h-1.1zM499.5 381.7h1.3v1.3h-1.3zM409.9 351.2h1.0v1.0h-1.0zM438.1 246.9h0.7v0.7h-0.7zM462.3 332.0h0.6v0.6h-0.6zM411.4 286.9h0.9v0.9h-0.9zM429.1 270.7h1.3v1.3h-1.3zM452.4 295.7h1.0v1.0h-1.0zM427.5 392.5h0.7v0.7h-0.7zM408.6 334.4h1.4v1.4h-1.4zM471.0 269.1h1.1v1.1h-1.1zM456.1 359.9h1.1v1.1h-1.1zM458.0 268.9h0.7v0.7h-0.7zM451.8 247.6h1.4v1.4h-1.4zM478.0 385.3h1.1v1.1h-1.1zM433.0 340.8h0.7v0.7h-0.7zM443.0 327.1h1.1v1.1h-1.1zM451.5 254.6h1.2v1.2h-1.2zM462.9 392.3h0.7v0.7h-0.7zM487.3 246.0h1.3v1.3h-1.3zM433.5 322.6h1.2v1.2h-1.2zM434.2 260.7h0.8v0.8h-0.8zM441.0 322.4h0.7v0.7h-0.7zM471.0 379.5h1.4v1.4h-1.4zM421.5 295.6h1.0v1.0h-1.0zM421.9 366.2h0.9v0.9h-0.9zM425.4 346.4h1.0v1.0h-1.0zM418.2 353.0h1.3v1.3h-1.3zM446.2 289.0h0.8v0.8h-0.8zM450.1 388.1h0.9v0.9h-0.9zM457.8 312.8h1.3v1.3h-1.3zM478.0 251.2h1.2v1.2h-1.2zM486.7 373.4h0.6v0.6h-0.6zM453.9 325.4h1.2v1.2h-1.2zM450.1 244.3h1.3v1.3h-1.3zM425.4 284.4h1.2v1.2h-1.2zM449.2 350.0h0.8v0.8h-0.8zM451.1 388.8h1.5v1.5h-1.5zM475.6 254.5h1.1v1.1h-1.1zM466.8 250.3h1.5v1.5h-1.5zM396.4 246.8h0.9v0.9h-0.9zM478.0 379.4h1.0v1.0h-1.0zM430.4 242.6h1.0v1.0h-1.0zM442.1 258.3h1.0v1.0h-1.0zM470.5 363.2h0.9v0.9h-0.9zM430.0 325.4h1.4v1.4h-1.4zM465.5 388.7h0.8v0.8h-0.8zM485.1 253.4h0.7v0.7h-0.7zM413.5 319.2h0.9v0.9h-0.9zM439.3 378.7h1.3v1.3h-1.3zM451.4 311.0h1.0v1.0h-1.0zM426.3 335.6h0.8v0.8h-0.8zM488.5 297.7h0.8v0.8h-0.8zM445.3 354.1h0.6v0.6h-0.6zM451.5 342.7h0.7v0.7h-0.7zM417.5 292.4h0.9v0.9h-0.9zM440.8 365.8h1.4v1.4h-1.4zM446.9 373.9h0.7v0.7h-0.7zM446.0 298.6h1.4v1.4h-1.4zM440.1 358.6h1.4v1.4h-1.4zM450.8 381.9h0.9v0.9h-0.9zM415.4 352.5h0.9v0.9h-0.9zM470.3 333.2h0.7v0.7h-0.7zM425.8 366.8h1.1v1.1h-1.1zM448.9 365.7h1.1v1.1h-1.1zM466.9 307.6h1.2v1.2h-1.2zM446.5 360.5h0.8v0.8h-0.8zM428.0 255.1h1.0v1.0h-1.0zM434.1 347.0h1.4v1.4h-1.4zM490.4 381.9h0.7v0.7h-0.7zM411.5 384.3h1.2v1.2h-1.2zM439.6 312.8h1.3v1.3h-1.3zM441.7 388.4h0.9v0.9h-0.9zM448.8 270.0h0.6v0.6h-0.6zM418.8 361.1h1.3v1.3h-1.3zM453.8 286.8h1.0v1.0h-1.0zM405.3 392.8h1.5v1.5h-1.5zM390.2 305.1h1.4v1.4h-1.4zM421.6 247.3h0.9v0.9h-0.9zM448.5 270.9h1.0v1.0h-1.0zM419.4 341.8h0.9v0.9h-0.9zM460.0 333.7h1.1v1.1h-1.1zM452.1 242.4h0.9v0.9h-0.9zM440.5 322.7h1.2v1.2h-1.2zM456.0 336.6h0.8v0.8h-0.8zM429.9 360.0h0.8v0.8h-0.8zM437.7 269.8h1.3v1.3h-1.3zM408.7 259.1h0.6v0.6h-0.6zM473.8 304.0h0.8v0.8h-0.8zM446.5 342.1h1.5v1.5h-1.5zM415.6 292.4h1.3v1.3h-1.3zM451.7 266.4h1.1v1.1h-1.1zM453.9 256.9h0.9v0.9h-0.9zM454.8 265.5h1.2v1.2h-1.2zM395.1 353.9h0.6v0.6h-0.6zM430.1 340.8h1.2v1.2h-1.2zM443.7 359.3h1.1v1.1h-1.1zM441.4 364.4h1.2v1.2h-1.2zM445.7 313.0h0.7v0.7h-0.7zM460.7 257.6h0.9v0.9h-0.9zM495.8 274.9h1.5v1.5h-1.5zM414.2 366.0h1.1v1.1h-1.1zM494.8 285.8h0.7v0.7h-0.7zM472.2 252.3h0.6v0.6h-0.6zM457.3 270.1h1.3v1.3h-1.3zM429.2 307.5h0.7v0.7h-0.7zM447.1 360.4h1.5v1.5h-1.5zM456.8 309.1h0.6v0.6h-0.6zM481.2 246.7h0.7v0.7h-0.7zM436.6 370.4h0.8v0.8h-0.8zM459.0 387.9h1.0v1.0h-1.0zM460.9 293.7h0.6v0.6h-0.6zM473.8 298.6h1.4v1.4h-1.4zM490.9 373.6h0.7v0.7h-0.7zM406.3 373.9h0.6v0.6h-0.6zM432.2 363.8h1.2v1.2h-1.2zM478.5 260.5h1.1v1.1h-1.1zM406.5 328.5h1.1v1.1h-1.1zM429.9 324.7h0.9v0.9h-0.9zM476.5 337.6h1.1v1.1h-1.1zM419.1 258.3h0.9v0.9h-0.9zM437.0 258.0h1.4v1.4h-1.4zM458.9 393.5h1.4v1.4h-1.4zM475.7 357.5h1.1v1.1h-1.1zM420.4 384.7h1.0v1.0h-1.0zM439.2 325.2h0.9v0.9h-0.9zM440.7 345.3h1.4v1.4h-1.4zM482.9 312.5h0.8v0.8h-0.8zM406.0 267.3h0.8v0.8h-0.8zM414.7 331.4h0.8v0.8h-0.8zM413.3 247.7h0.7v0.7h-0.7zM489.2 246.1h0.6v0.6h-0.6zM470.1 391.6h1.0v1.0h-1.0zM496.3 306.7h0.8v0.8h-0.8zM396.8 291.1h1.5v1.5h-1.5zM443.3 349.7h0.9v0.9h-0.9zM472.3 390.6h1.0v1.0h-1.0zM465.0 330.4h1.0v1.0h-1.0zM484.4 286.9h1.0v1.0h-1.0zM488.1 350.1h0.8v0.8h-0.8zM484.5 335.7h0.7v0.7h-0.7zM411.6 321.6h1.1v1.1h-1.1zM437.8 284.1h1.3v1.3h-1.3zM403.3 290.6h1.4v1.4h-1.4zM434.7 392.5h1.5v1.5h-1.5zM460.0 335.4h1.3v1.3h-1.3zM412.7 311.7h0.6v0.6h-0.6zM495.4 358.5h1.2v1.2h-1.2zM408.1 375.8h1.3v1.3h-1.3zM449.9 276.1h1.4v1.4h-1.4zM409.9 274.4h0.8v0.8h-0.8zM474.5 259.0h1.0v1.0h-1.0zM448.2 343.6h1.0v1.0h-1.0zM443.8 324.1h1.2v1.2h-1.2zM452.8 308.4h0.6v0.6h-0.6zM455.2 307.2h1.4v1.4h-1.4zM434.8 314.4h0.9v0.9h-0.9zM430.9 292.2h1.1v1.1h-1.1zM451.4 375.9h1.3v1.3h-1.3zM414.3 383.1h1.0v1.0h-1.0zM444.8 249.9h1.4v1.4h-1.4zM393.4 372.8h1.2v1.2h-1.2zM437.7 273.0h1.1v1.1h-1.1zM440.7 273.6h0.8v0.8h-0.8zM460.4 268.8h1.2v1.2h-1.2zM468.6 325.5h1.5v1.5h-1.5zM477.8 318.3h1.2v1.2h-1.2zM467.8 243.0h1.3v1.3h-1.3zM492.7 309.8h1.0v1.0h-1.0zM470.7 385.1h1.4v1.4h-1.4zM409.1 246.3h1.3v1.3h-1.3zM391.4 326.9h1.2v1.2h-1.2zM461.1 382.5h0.8v0.8h-0.8zM437.1 288.8h0.9v0.9h-0.9zM445.5 392.0h0.6v0.6h-0.6zM415.4 349.8h1.0v1.0h-1.0zM457.8 379.4h1.1v1.1h-1.1zM459.4 296.3h1.1v1.1h-1.1zM424.6 388.8h1.1v1.1h-1.1zM423.0 371.1h1.3v1.3h-1.3zM440.0 385.7h0.7v0.7h-0.7zM448.9 352.4h1.2v1.2h-1.2zM444.9 373.5h1.3v1.3h-1.3zM471.8 271.0h0.7v0.7h-0.7zM453.9 274.7h1.0v1.0h-1.0zM469.3 377.5h1.2v1.2h-1.2zM396.9 385.2h1.5v1.5h-1.5zM443.7 345.8h1.0v1.0h-1.0zM444.6 246.8h1.1v1.1h-1.1zM466.8 296.5h0.7v0.7h-0.7zM452.5 328.3h0.6v0.6h-0.6zM457.4 322.2h0.8v0.8h-0.8zM399.3 322.7h0.9v0.9h-0.9zM426.0 393.8h1.2v1.2h-1.2zM446.3 351.2h1.0v1.0h-1.0zM488.7 319.6h1.3v1.3h-1.3zM483.8 269.4h0.7v0.7h-0.7zM476.0 346.1h0.7v0.7h-0.7zM460.0 301.0h0.7v0.7h-0.7zM440.6 298.0h0.8v0.8h-0.8zM474.1 343.6h1.3v1.3h-1.3zM484.5 350.5h0.8v0.8h-0.8zM399.2 319.6h1.2v1.2h-1.2zM407.8 269.5h1.1v1.1h-1.1zM416.0 363.0h1.4v1.4h-1.4zM426.5 326.2h1.1v1.1h-1.1zM449.4 258.7h0.8v0.8h-0.8zM484.6 296.6h1.2v1.2h-1.2zM414.9 392.3h1.5v1.5h-1.5zM465.3 337.3h0.8v0.8h-0.8zM435.1 297.9h0.9v0.9h-0.9zM470.3 259.1h1.1v1.1h-1.1zM428.2 327.7h1.2v1.2h-1.2zM426.3 347.5h1.1v1.1h-1.1zM467.9 332.8h1.3v1.3h-1.3zM437.2 377.7h1.3v1.3h-1.3zM418.9 289.2h1.2v1.2h-1.2zM477.9 343.1h0.7v0.7h-0.7zM468.1 273.5h1.3v1.3h-1.3zM440.5 377.8h1.0v1.0h-1.0zM460.8 266.3h0.9v0.9h-0.9zM453.1 245.0h0.8v0.8h-0.8zM491.7 249.9h1.3v1.3h-1.3zM447.4 332.1h0.7v0.7h-0.7zM445.8 266.7h1.0v1.0h-1.0zM437.2 298.9h1.5v1.5h-1.5zM463.8 366.5h1.1v1.1h-1.1zM483.2 316.4h0.7v0.7h-0.7zM436.1 370.6h0.8v0.8h-0.8zM469.9 348.9h1.4v1.4h-1.4zM477.7 345.4h1.2v1.2h-1.2zM475.6 298.9h0.8v0.8h-0.8zM463.0 279.5h1.0v1.0h-1.0zM453.0 386.8h1.2v1.2h-1.2zM395.0 311.0h0.9v0.9h-0.9zM447.6 362.7h1.4v1.4h-1.4zM470.8 260.5h1.4v1.4h-1.4zM398.7 287.8h0.9v0.9h-0.9zM423.6 296.4h1.1v1.1h-1.1zM437.6 251.7h1.0v1.0h-1.0zM439.8 331.1h1.2v1.2h-1.2zM480.8 373.9h1.1v1.1h-1.1zM462.0 245.6h1.0v1.0h-1.0zM454.9 393.7h1.4v1.4h-1.4zM474.5 391.8h1.1v1.1h-1.1zM425.7 292.7h1.3v1.3h-1.3zM431.6 335.6h0.9v0.9h-0.9zM420.3 373.0h0.8v0.8h-0.8zM453.7 356.9h1.0v1.0h-1.0zM472.4 281.4h1.4v1.4h-1.4zM404.4 280.1h1.5v1.5h-1.5zM465.8 312.9h0.9v0.9h-0.9zM464.5 276.2h1.0v1.0h-1.0zM447.2 372.4h1.0v1.0h-1.0zM493.9 321.7h1.4v1.4h-1.4zM412.8 265.7h0.8v0.8h-0.8zM457.3 279.0h0.6v0.6h-0.6zM418.7 366.6h0.9v0.9h-0.9zM454.7 262.1h1.1v1.1h-1.1zM446.3 249.9h0.7v0.7h-0.7zM476.1 372.2h1.4v1.4h-1.4zM398.3 369.9h0.9v0.9h-0.9zM408.7 373.5h0.9v0.9h-0.9zM462.6 255.4h1.3v1.3h-1.3zM436.1 385.2h1.2v1.2h-1.2zM412.2 344.2h1.2v1.2h-1.2zM422.4 355.6h0.8v0.8h-0.8zM439.7 363.9h1.2v1.2h-1.2zM475.1 300.4h0.6v0.6h-0.6zM441.1 271.9h0.9v0.9h-0.9zM422.2 244.2h0.7v0.7h-0.7zM468.0 318.8h0.8v0.8h-0.8zM480.0 370.4h0.6v0.6h-0.6zM432.3 347.8h0.8v0.8h-0.8zM441.9 331.9h1.0v1.0h-1.0zM444.5 347.3h1.4v1.4h-1.4zM435.6 287.1h0.7v0.7h-0.7zM445.4 340.6h1.2v1.2h-1.2zM471.6 367.9h0.8v0.8h-0.8zM425.8 359.1h0.7v0.7h-0.7zM489.9 284.5h1.3v1.3h-1.3zM417.9 376.2h0.8v0.8h-0.8zM403.1 373.0h1.1v1.1h-1.1zM418.2 359.0h1.4v1.4h-1.4zM432.9 378.7h1.3v1.3h-1.3zM471.0 244.1h0.9v0.9h-0.9zM491.5 290.0h1.3v1.3h-1.3zM415.5 315.6h1.4v1.4h-1.4zM495.7 308.0h1.2v1.2h-1.2zM396.8 376.7h1.1v1.1h-1.1zM444.1 359.3h1.2v1.2h-1.2zM438.7 380.4h1.0v1.0h-1.0zM480.5 306.8h0.6v0.6h-0.6zM455.0 332.9h1.3v1.3h-1.3zM478.6 284.9h0.7v0.7h-0.7zM444.8 289.2h1.1v1.1h-1.1zM459.4 359.5h1.2v1.2h-1.2zM429.3 307.9h1.2v1.2h-1.2zM421.0 285.1h0.7v0.7h-0.7zM417.8 392.4h1.0v1.0h-1.0zM477.4 285.4h1.0v1.0h-1.0zM465.0 343.1h0.6v0.6h-0.6zM453.3 390.2h0.8v0.8h-0.8zM484.7 278.8h0.7v0.7h-0.7zM484.1 338.6h1.4v1.4h-1.4zM469.9 263.8h0.8v0.8h-0.8zM437.7 317.3h1.4v1.4h-1.4zM432.9 371.7h0.8v0.8h-0.8zM413.1 375.6h1.2v1.2h-1.2zM492.3 327.5h1.4v1.4h-1.4zM421.1 307.6h0.6v0.6h-0.6zM421.9 275.6h1.2v1.2h-1.2zM438.4 393.4h0.8v0.8h-0.8zM454.2 367.7h0.8v0.8h-0.8zM479.7 289.3h0.8v0.8h-0.8zM499.7 253.6h1.2v1.2h-1.2zM456.4 383.2h0.7v0.7h-0.7zM437.0 370.2h1.2v1.2h-1.2zM494.4 326.3h0.6v0.6h-0.6zM416.8 339.9h1.4v1.4h-1.4zM417.0 332.7h1.3v1.3h-1.3zM454.5 375.1h0.7v0.7h-0.7zM426.5 332.0h0.6v0.6h-0.6zM451.8 309.4h0.8v0.8h-0.8zM454.3 300.4h0.8v0.8h-0.8zM401.3 258.8h0.9v0.9h-0.9zM442.7 272.6h0.6v0.6h-0.6zM490.3 379.3h1.3v1.3h-1.3zM423.3 343.3h1.2v1.2h-1.2zM463.4 336.5h0.9v0.9h-0.9zM408.0 257.0h0.7v0.7h-0.7zM449.7 260.2h1.1v1.1h-1.1zM440.7 273.8h0.7v0.7h-0.7zM442.2 367.1h0.8v0.8h-0.8zM459.2 388.8h1.5v1.5h-1.5zM463.7 361.9h0.6v0.6h-0.6zM442.9 304.8h1.5v1.5h-1.5zM437.3 340.2h0.9v0.9h-0.9zM438.6 295.1h0.8v0.8h-0.8zM463.6 374.1h1.0v1.0h-1.0zM422.2 378.5h1.2v1.2h-1.2zM453.2 275.5h1.2v1.2h-1.2zM443.2 247.4h1.2v1.2h-1.2zM471.9 341.1h0.8v0.8h-0.8zM450.5 266.9h0.6v0.6h-0.6zM443.7 289.4h1.3v1.3h-1.3zM434.0 366.6h1.3v1.3h-1.3zM435.4 332.2h1.1v1.1h-1.1zM449.3 260.9h0.7v0.7h-0.7zM449.2 308.2h1.3v1.3h-1.3zM437.6 340.7h0.8v0.8h-0.8zM446.3 295.9h1.3v1.3h-1.3zM483.0 261.9h1.4v1.4h-1.4zM434.2 330.3h1.4v1.4h-1.4zM464.2 286.3h1.0v1.0h-1.0zM461.2 381.1h1.0v1.0h-1.0zM429.8 389.8h1.0v1.0h-1.0zM459.0 311.8h1.0v1.0h-1.0zM481.2 279.8h1.3v1.3h-1.3zM431.7 246.9h0.8v0.8h-0.8zM481.5 252.3h1.1v1.1h-1.1zM453.3 277.0h1.2v1.2h-1.2zM393.6 328.8h0.8v0.8h-0.8zM458.7 248.6h0.6v0.6h-0.6zM460.1 377.5h1.5v1.5h-1.5zM414.6 262.3h1.4v1.4h-1.4zM415.7 330.1h1.1v1.1h-1.1zM416.2 304.9h1.1v1.1h-1.1zM435.6 291.8h1.4v1.4h-1.4zM488.0 393.0h1.2v1.2h-1.2zM446.0 330.4h0.6v0.6h-0.6zM467.9 382.5h1.1v1.1h-1.1zM453.4 371.2h1.3v1.3h-1.3zM443.9 325.9h0.8v0.8h-0.8zM441.7 304.4h1.4v1.4h-1.4zM405.6 335.4h0.7v0.7h-0.7zM451.1 386.8h1.4v1.4h-1.4zM457.9 374.6h0.7v0.7h-0.7zM433.2 355.2h0.6v0.6h-0.6zM451.2 290.0h1.0v1.0h-1.0zM431.4 324.9h0.8v0.8h-0.8zM478.1 340.8h1.0v1.0h-1.0zM422.8 265.5h0.9v0.9h-0.9zM463.2 251.5h0.6v0.6h-0.6zM448.5 348.9h0.9v0.9h-0.9zM400.6 268.3h0.9v0.9h-0.9zM402.4 351.5h1.3v1.3h-1.3zM478.5 279.8h1.3v1.3h-1.3zM470.4 350.8h0.8v0.8h-0.8zM409.8 330.3h0.7v0.7h-0.7zM424.4 367.1h0.8v0.8h-0.8zM468.7 338.4h0.9v0.9h-0.9zM488.4 390.4h0.9v0.9h-0.9zM451.9 252.8h1.2v1.2h-1.2zM482.8 352.1h1.1v1.1h-1.1zM451.2 257.4h0.9v0.9h-0.9zM427.4 346.6h1.3v1.3h-1.3zM470.8 383.9h0.9v0.9h-0.9zM493.7 335.3h0.6v0.6h-0.6zM429.3 277.5h0.8v0.8h-0.8zM435.9 299.1h1.1v1.1h-1.1zM417.6 257.1h1.3v1.3h-1.3zM495.1 270.0h0.7v0.7h-0.7zM423.6 364.5h1.4v1.4h-1.4zM492.8 303.1h0.9v0.9h-0.9zM461.3 328.8h0.7v0.7h-0.7zM487.6 273.1h1.5v1.5h-1.5zM492.3 273.1h0.9v0.9h-0.9zM460.3 264.5h1.5v1.5h-1.5zM447.8 339.1h0.7v0.7h-0.7zM487.4 268.0h0.7v0.7h-0.7zM461.5 272.9h1.2v1.2h-1.2zM459.1 320.6h0.8v0.8h-0.8zM450.6 283.2h1.0v1.0h-1.0zM500.1 248.8h1.0v1.0h-1.0zM426.1 312.2h1.5v1.5h-1.5zM443.8 248.6h1.2v1.2h-1.2zM391.2 244.4h1.0v1.0h-1.0zM471.8 357.8h0.6v0.6h-0.6zM450.7 378.6h1.0v1.0h-1.0zM458.0 368.7h1.0v1.0h-1.0zM490.4 306.7h1.3v1.3h-1.3zM466.9 388.6h1.1v1.1h-1.1zM403.6 330.1h1.3v1.3h-1.3zM390.0 324.3h1.3v1.3h-1.3zM422.9 314.1h1.0v1.0h-1.0zM451.5 268.4h1.0v1.0h-1.0zM436.6 367.2h0.7v0.7h-0.7zM437.0 382.2h1.1v1.1h-1.1zM435.9 391.1h1.3v1.3h-1.3zM447.2 360.3h0.7v0.7h-0.7zM446.6 285.9h1.4v1.4h-1.4zM437.7 295.3h1.4v1.4h-1.4zM491.3 367.2h0.7v0.7h-0.7zM480.4 386.2h0.9v0.9h-0.9zM472.8 364.7h1.0v1.0h-1.0zM432.8 359.5h1.0v1.0h-1.0zM453.5 360.2h1.3v1.3h-1.3zM464.2 314.7h0.9v0.9h-0.9zM460.5 282.1h1.4v1.4h-1.4zM433.9 381.6h1.5v1.5h-1.5zM454.2 274.4h1.1v1.1h-1.1zM425.1 392.1h0.6v0.6h-0.6zM405.8 327.6h0.6v0.6h-0.6zM457.5 352.4h1.3v1.3h-1.3zM440.3 314.9h1.5v1.5h-1.5zM439.1 367.3h1.3v1.3h-1.3zM466.2 288.1h1.2v1.2h-1.2zM461.4 325.3h1.3v1.3h-1.3zM433.6 314.6h1.5v1.5h-1.5zM402.8 371.5h1.5v1.5h-1.5zM487.0 387.5h1.1v1.1h-1.1zM478.5 290.6h1.2v1.2h-1.2zM446.6 265.4h1.1v1.1h-1.1zM458.0 334.1h1.1v1.1h-1.1zM479.1 270.5h0.7v0.7h-0.7zM402.7 290.2h1.4v1.4h-1.4zM474.7 298.8h1.5v1.5h-1.5zM480.2 374.9h0.8v0.8h-0.8zM477.7 264.1h1.1v1.1h-1.1zM462.8 269.2h1.5v1.5h-1.5zM438.6 265.3h0.6v0.6h-0.6zM391.8 325.3h1.2v1.2h-1.2zM408.7 343.8h1.4v1.4h-1.4zM441.3 271.7h0.8v0.8h-0.8zM440.9 314.6h1.1v1.1h-1.1zM391.3 290.0h1.0v1.0h-1.0zM476.2 339.2h1.3v1.3h-1.3zM452.2 329.2h1.2v1.2h-1.2zM440.4 285.7h1.2v1.2h-1.2zM422.9 323.8h1.3v1.3h-1.3zM426.0 333.0h1.2v1.2h-1.2zM462.9 323.5h1.1v1.1h-1.1zM445.7 335.9h0.8v0.8h-0.8zM411.8 323.8h1.1v1.1h-1.1zM469.1 360.5h0.9v0.9h-0.9zM452.7 383.1h1.3v1.3h-1.3zM485.7 283.8h0.8v0.8h-0.8zM444.9 307.7h0.7v0.7h-0.7zM480.8 284.7h1.0v1.0h-1.0zM444.9 248.3h1.4v1.4h-1.4zM449.5 320.9h1.3v1.3h-1.3zM422.6 263.4h1.2v1.2h-1.2zM460.9 340.4h1.3v1.3h-1.3zM425.6 318.9h0.9v0.9h-0.9zM459.7 290.5h0.7v0.7h-0.7zM423.1 287.4h0.9v0.9h-0.9zM422.5 242.9h1.4v1.4h-1.4zM426.7 375.1h1.1v1.1h-1.1zM432.1 381.1h1.2v1.2h-1.2zM392.6 280.3h1.4v1.4h-1.4zM446.5 378.6h1.0v1.0h-1.0zM463.0 332.3h1.2v1.2h-1.2zM430.3 289.7h1.3v1.3h-1.3zM415.6 343.5h1.3v1.3h-1.3zM456.3 275.1h1.0v1.0h-1.0zM476.0 332.0h0.8v0.8h-0.8zM432.5 361.1h0.8v0.8h-0.8zM456.8 284.9h1.0v1.0h-1.0zM397.9 374.9h1.4v1.4h-1.4zM436.8 352.0h0.7v0.7h-0.7zM413.6 276.0h0.7v0.7h-0.7zM436.5 304.4h1.5v1.5h-1.5zM408.3 350.2h1.4v1.4h-1.4zM466.3 303.1h1.5v1.5h-1.5zM423.5 328.9h0.7v0.7h-0.7zM436.4 321.4h0.8v0.8h-0.8zM473.4 367.4h0.6v0.6h-0.6zM465.7 301.1h1.2v1.2h-1.2zM455.1 299.6h1.4v1.4h-1.4zM455.5 285.7h1.5v1.5h-1.5zM454.2 294.4h1.4v1.4h-1.4zM420.6 341.1h0.8v0.8h-0.8zM433.1 347.7h0.9v0.9h-0.9zM420.3 314.9h0.8v0.8h-0.8zM432.2 379.0h1.4v1.4h-1.4zM448.9 308.0h1.1v1.1h-1.1zM480.8 296.5h1.3v1.3h-1.3zM488.0 315.7h0.9v0.9h-0.9zM463.7 344.7h1.0v1.0h-1.0zM492.2 384.7h1.1v1.1h-1.1zM409.5 332.5h0.9v0.9h-0.9zM439.3 389.4h1.2v1.2h-1.2zM427.4 308.5h1.4v1.4h-1.4zM451.8 345.2h1.1v1.1h-1.1zM410.7 334.7h1.5v1.5h-1.5zM469.3 269.6h1.4v1.4h-1.4zM434.9 383.1h1.1v1.1h-1.1zM442.9 244.8h1.0v1.0h-1.0zM443.5 336.2h1.5v1.5h-1.5zM449.1 295.6h1.0v1.0h-1.0zM436.3 356.6h1.2v1.2h-1.2zM412.1 302.7h1.5v1.5h-1.5zM476.2 376.2h1.0v1.0h-1.0zM441.9 384.1h1.2v1.2h-1.2zM434.3 295.6h0.8v0.8h-0.8zM459.9 320.0h1.0v1.0h-1.0zM420.5 319.2h1.0v1.0h-1.0zM404.9 336.3h0.7v0.7h-0.7zM411.3 372.7h1.0v1.0h-1.0zM481.9 285.2h0.7v0.7h-0.7zM428.9 389.8h0.7v0.7h-0.7zM482.7 277.6h1.2v1.2h-1.2zM446.2 308.1h1.0v1.0h-1.0zM480.6 307.6h1.4v1.4h-1.4zM438.7 323.1h1.5v1.5h-1.5zM459.2 337.3h1.2v1.2h-1.2zM477.7 273.6h0.8v0.8h-0.8zM488.3 304.4h0.7v0.7h-0.7zM443.4 268.9h1.4v1.4h-1.4zM489.8 271.1h1.1v1.1h-1.1zM467.5 351.3h0.9v0.9h-0.9zM444.0 270.9h0.9v0.9h-0.9zM393.9 341.0h1.4v1.4h-1.4zM478.8 346.0h0.7v0.7h-0.7zM495.8 322.0h1.5v1.5h-1.5zM441.0 387.8h0.8v0.8h-0.8zM460.6 355.4h0.8v0.8h-0.8zM484.3 365.9h1.4v1.4h-1.4zM418.9 322.3h0.8v0.8h-0.8zM432.0 283.3h1.1v1.1h-1.1zM421.0 278.6h0.9v0.9h-0.9zM452.0 344.6h1.0v1.0h-1.0zM446.2 277.1h0.8v0.8h-0.8zM426.6 383.7h1.1v1.1h-1.1zM459.0 351.3h1.5v1.5h-1.5zM411.8 362.5h1.1v1.1h-1.1zM407.5 263.0h0.9v0.9h-0.9zM449.9 254.8h0.9v0.9h-0.9zM428.6 382.3h1.3v1.3h-1.3zM437.0 362.3h0.7v0.7h-0.7zM452.0 277.0h0.7v0.7h-0.7zM421.9 341.1h1.2v1.2h-1.2zM461.9 347.8h1.5v1.5h-1.5zM474.4 367.9h1.4v1.4h-1.4zM428.9 262.6h1.3v1.3h-1.3zM432.4 257.9h0.8v0.8h-0.8zM460.6 303.9h1.3v1.3h-1.3zM465.7 300.1h0.7v0.7h-0.7zM457.3 344.4h1.0v1.0h-1.0zM472.8 254.7h0.7v0.7h-0.7zM448.5 378.4h0.8v0.8h-0.8zM488.0 348.6h0.8v0.8h-0.8zM427.0 244.2h0.8v0.8h-0.8zM426.6 268.4h0.7v0.7h-0.7zM400.7 288.3h1.1v1.1h-1.1zM425.5 298.9h1.1v1.1h-1.1zM478.0 371.2h1.2v1.2h-1.2zM454.6 305.8h1.3v1.3h-1.3zM408.4 317.5h0.6v0.6h-0.6zM415.1 281.3h0.9v0.9h-0.9zM453.1 244.8h0.9v0.9h-0.9zM490.9 284.8h1.1v1.1h-1.1zM437.3 266.5h0.7v0.7h-0.7zM440.3 261.6h1.0v1.0h-1.0zM481.5 302.5h1.3v1.3h-1.3zM418.6 312.9h0.7v0.7h-0.7zM460.7 355.6h1.1v1.1h-1.1zM463.0 248.5h1.1v1.1h-1.1zM454.3 333.2h1.0v1.0h-1.0zM480.6 353.7h1.3v1.3h-1.3zM479.3 330.2h1.3v1.3h-1.3zM404.0 391.3h1.1v1.1h-1.1zM416.9 322.3h0.6v0.6h-0.6zM481.9 393.2h1.3v1.3h-1.3zM496.5 365.2h1.3v1.3h-1.3zM492.1 317.2h0.6v0.6h-0.6zM416.3 334.2h0.9v0.9h-0.9zM442.8 244.8h0.7v0.7h-0.7zM467.4 360.0h1.2v1.2h-1.2zM430.1 364.6h1.0v1.0h-1.0zM442.6 390.2h0.9v0.9h-0.9zM451.3 324.7h1.5v1.5h-1.5zM489.0 268.8h0.9v0.9h-0.9zM422.0 272.6h1.3v1.3h-1.3zM441.4 379.2h1.1v1.1h-1.1zM453.2 353.5h1.2v1.2h-1.2zM398.5 308.6h1.0v1.0h-1.0zM444.7 285.6h1.1v1.1h-1.1zM406.7 353.7h0.7v0.7h-0.7zM472.5 305.1h1.1v1.1h-1.1zM419.5 366.6h1.4v1.4h-1.4zM467.3 342.9h0.7v0.7h-0.7zM463.5 301.5h1.0v1.0h-1.0zM489.4 279.1h1.2v1.2h-1.2zM415.9 353.0h0.7v0.7h-0.7zM463.7 385.6h1.0v1.0h-1.0zM472.4 380.0h1.4v1.4h-1.4zM433.8 283.5h0.7v0.7h-0.7zM435.1 283.6h1.2v1.2h-1.2zM462.9 305.8h0.9v0.9h-0.9zM418.0 320.1h1.0v1.0h-1.0zM431.6 273.6h1.0v1.0h-1.0zM474.3 341.8h0.8v0.8h-0.8zM470.8 268.7h1.4v1.4h-1.4zM412.3 318.4h1.2v1.2h-1.2zM463.1 366.8h1.3v1.3h-1.3zM474.0 313.4h0.8v0.8h-0.8zM457.0 363.5h1.4v1.4h-1.4zM484.5 352.8h1.1v1.1h-1.1zM405.5 311.0h1.4v1.4h-1.4zM415.1 367.2h1.0v1.0h-1.0zM421.7 355.2h1.5v1.5h-1.5zM448.7 380.3h1.3v1.3h-1.3zM490.1 254.5h1.0v1.0h-1.0zM465.2 349.8h0.6v0.6h-0.6zM469.2 259.8h0.9v0.9h-0.9zM457.1 325.6h1.5v1.5h-1.5zM431.3 317.9h0.6v0.6h-0.6zM472.0 251.2h0.9v0.9h-0.9zM465.9 376.4h0.9v0.9h-0.9zM467.1 306.0h1.2v1.2h-1.2zM483.6 384.4h1.0v1.0h-1.0zM442.5 335.7h1.0v1.0h-1.0zM476.8 260.2h0.9v0.9h-0.9zM448.6 297.3h1.0v1.0h-1.0zM467.2 373.4h1.3v1.3h-1.3zM413.2 387.3h1.2v1.2h-1.2zM430.8 249.9h1.2v1.2h-1.2zM440.4 339.1h1.0v1.0h-1.0zM425.4 315.1h0.7v0.7h-0.7zM447.5 293.5h1.3v1.3h-1.3zM431.9 311.9h0.8v0.8h-0.8zM491.1 249.0h0.8v0.8h-0.8zM474.5 306.4h1.5v1.5h-1.5zM398.0 379.3h1.2v1.2h-1.2zM469.6 317.8h0.8v0.8h-0.8zM496.3 385.4h1.1v1.1h-1.1zM407.1 333.1h1.2v1.2h-1.2zM450.2 283.3h1.2v1.2h-1.2zM464.4 273.6h1.2v1.2h-1.2zM450.8 257.3h1.0v1.0h-1.0zM425.9 289.0h1.4v1.4h-1.4zM431.4 269.1h1.3v1.3h-1.3zM494.5 315.1h0.8v0.8h-0.8zM469.0 323.3h1.3v1.3h-1.3zM448.0 384.3h0.8v0.8h-0.8zM417.1 242.7h1.3v1.3h-1.3zM420.2 380.8h0.8v0.8h-0.8zM471.4 261.5h1.2v1.2h-1.2zM457.8 367.8h0.9v0.9h-0.9zM415.7 320.6h0.8v0.8h-0.8zM421.0 362.9h1.2v1.2h-1.2zM406.3 337.2h1.3v1.3h-1.3zM465.5 378.6h0.8v0.8h-0.8zM416.1 267.9h1.2v1.2h-1.2zM414.8 344.4h0.7v0.7h-0.7zM490.6 313.9h0.9v0.9h-0.9zM398.0 286.0h0.8v0.8h-0.8zM405.6 284.6h1.0v1.0h-1.0z"/><path fill="#e8dfc6" d="M499.8 302.4h1.3v1.3h-1.3zM444.5 345.7h1.5v1.5h-1.5zM457.4 329.7h0.8v0.8h-0.8zM440.8 387.8h1.4v1.4h-1.4zM463.2 335.6h1.4v1.4h-1.4zM474.5 272.4h1.1v1.1h-1.1zM466.7 272.3h1.2v1.2h-1.2zM474.6 323.3h0.8v0.8h-0.8zM428.7 348.0h1.0v1.0h-1.0zM427.5 361.8h1.5v1.5h-1.5zM411.2 259.5h1.5v1.5h-1.5zM440.8 354.4h1.1v1.1h-1.1zM418.7 303.0h1.2v1.2h-1.2zM470.3 287.0h1.1v1.1h-1.1zM460.0 296.6h1.2v1.2h-1.2zM474.4 270.9h1.4v1.4h-1.4zM429.7 293.4h1.4v1.4h-1.4zM421.5 245.4h1.1v1.1h-1.1zM479.9 306.1h0.8v0.8h-0.8zM471.8 288.1h1.4v1.4h-1.4zM447.8 250.0h0.6v0.6h-0.6zM429.5 318.1h1.5v1.5h-1.5zM429.7 313.8h1.1v1.1h-1.1zM409.0 373.0h0.8v0.8h-0.8zM464.1 376.4h1.5v1.5h-1.5zM490.3 269.4h1.2v1.2h-1.2zM437.4 328.4h0.8v0.8h-0.8zM421.3 325.3h1.5v1.5h-1.5zM444.2 246.9h1.1v1.1h-1.1zM456.8 350.6h0.9v0.9h-0.9zM462.8 319.6h0.7v0.7h-0.7zM441.0 355.2h1.0v1.0h-1.0zM472.2 276.9h1.0v1.0h-1.0zM432.4 249.5h0.8v0.8h-0.8zM451.5 266.9h1.1v1.1h-1.1zM475.1 313.8h1.4v1.4h-1.4zM407.2 384.4h1.3v1.3h-1.3zM448.2 250.3h1.0v1.0h-1.0zM411.0 320.1h0.9v0.9h-0.9zM445.4 313.9h0.8v0.8h-0.8zM404.1 354.5h0.7v0.7h-0.7zM432.2 343.7h1.5v1.5h-1.5zM459.1 367.7h1.4v1.4h-1.4zM471.2 268.7h1.1v1.1h-1.1zM463.2 332.3h1.3v1.3h-1.3zM450.2 386.7h0.9v0.9h-0.9zM417.6 304.9h1.1v1.1h-1.1zM446.4 263.9h1.0v1.0h-1.0zM483.1 291.9h1.3v1.3h-1.3zM493.9 339.1h1.1v1.1h-1.1zM406.8 393.0h1.1v1.1h-1.1zM489.6 343.5h0.8v0.8h-0.8zM443.9 346.3h1.4v1.4h-1.4zM446.6 328.0h0.7v0.7h-0.7zM411.9 297.8h0.7v0.7h-0.7zM464.6 252.3h1.5v1.5h-1.5zM493.6 375.7h1.0v1.0h-1.0zM427.6 294.7h0.8v0.8h-0.8zM416.3 376.0h0.8v0.8h-0.8zM478.5 324.1h1.0v1.0h-1.0zM445.9 341.2h0.9v0.9h-0.9zM418.1 354.9h1.4v1.4h-1.4zM425.8 339.2h1.5v1.5h-1.5zM425.4 343.2h1.2v1.2h-1.2zM467.2 309.8h1.2v1.2h-1.2zM409.7 365.8h0.6v0.6h-0.6zM400.8 349.2h0.9v0.9h-0.9zM437.0 243.9h1.3v1.3h-1.3zM439.0 261.4h1.0v1.0h-1.0zM457.0 393.5h1.2v1.2h-1.2zM475.0 253.5h1.2v1.2h-1.2zM489.3 268.7h1.0v1.0h-1.0zM458.8 326.2h1.2v1.2h-1.2zM430.8 305.3h0.7v0.7h-0.7zM454.7 338.0h1.2v1.2h-1.2zM395.8 367.4h1.2v1.2h-1.2zM425.0 354.7h1.4v1.4h-1.4zM463.4 387.7h1.2v1.2h-1.2zM437.2 370.4h1.1v1.1h-1.1zM462.8 298.4h1.4v1.4h-1.4zM441.9 260.0h0.8v0.8h-0.8zM437.2 370.7h0.9v0.9h-0.9zM423.9 299.5h1.5v1.5h-1.5zM461.5 364.0h0.6v0.6h-0.6zM463.5 318.6h0.9v0.9h-0.9zM497.8 360.3h1.0v1.0h-1.0zM489.0 252.5h1.0v1.0h-1.0zM443.1 261.4h0.9v0.9h-0.9zM415.1 295.3h0.9v0.9h-0.9zM417.5 353.2h1.0v1.0h-1.0zM472.2 246.3h0.6v0.6h-0.6zM428.5 356.2h1.2v1.2h-1.2zM457.1 262.2h1.4v1.4h-1.4zM433.1 320.3h1.1v1.1h-1.1zM469.1 268.4h0.9v0.9h-0.9zM500.9 311.9h1.4v1.4h-1.4zM500.0 331.5h1.4v1.4h-1.4zM451.4 375.9h1.1v1.1h-1.1zM483.3 352.5h1.1v1.1h-1.1zM415.3 296.6h1.0v1.0h-1.0zM434.8 321.3h1.2v1.2h-1.2zM439.9 311.7h0.9v0.9h-0.9zM458.3 373.8h1.3v1.3h-1.3zM429.3 294.2h1.4v1.4h-1.4zM455.2 279.7h1.3v1.3h-1.3zM409.8 350.3h1.5v1.5h-1.5zM399.9 372.6h1.4v1.4h-1.4zM440.2 338.9h1.4v1.4h-1.4zM466.7 301.5h1.1v1.1h-1.1zM470.7 305.0h0.8v0.8h-0.8zM456.0 291.8h1.0v1.0h-1.0zM417.8 360.6h0.7v0.7h-0.7zM446.9 363.7h0.8v0.8h-0.8zM409.3 379.1h0.9v0.9h-0.9zM477.9 282.1h1.4v1.4h-1.4zM459.7 337.4h0.8v0.8h-0.8zM422.1 259.4h1.2v1.2h-1.2zM465.7 367.3h1.1v1.1h-1.1zM402.2 373.2h0.7v0.7h-0.7zM399.6 346.2h1.3v1.3h-1.3zM476.1 373.3h1.0v1.0h-1.0zM484.2 354.4h1.3v1.3h-1.3zM439.2 255.2h1.1v1.1h-1.1zM411.6 308.1h1.4v1.4h-1.4zM429.9 290.0h1.0v1.0h-1.0zM460.6 329.2h0.8v0.8h-0.8zM492.5 293.7h1.3v1.3h-1.3zM431.0 317.4h1.2v1.2h-1.2zM455.6 243.3h1.1v1.1h-1.1zM437.0 329.5h1.1v1.1h-1.1zM437.1 369.1h1.0v1.0h-1.0zM425.4 356.1h1.2v1.2h-1.2zM500.3 335.1h1.2v1.2h-1.2zM449.4 362.9h0.9v0.9h-0.9zM462.1 348.2h1.4v1.4h-1.4zM427.6 363.7h1.0v1.0h-1.0zM479.8 247.4h0.6v0.6h-0.6zM484.1 372.7h1.3v1.3h-1.3zM422.9 377.2h1.1v1.1h-1.1zM433.6 275.4h0.9v0.9h-0.9zM395.6 295.2h1.3v1.3h-1.3zM430.3 309.9h0.8v0.8h-0.8zM492.7 306.4h1.2v1.2h-1.2zM453.2 314.2h0.9v0.9h-0.9zM440.1 247.8h1.4v1.4h-1.4zM428.3 335.0h1.5v1.5h-1.5zM432.7 254.5h1.0v1.0h-1.0zM458.4 296.1h1.4v1.4h-1.4zM479.0 370.2h0.7v0.7h-0.7zM440.3 297.2h1.3v1.3h-1.3zM492.3 245.0h1.3v1.3h-1.3zM484.8 388.7h0.8v0.8h-0.8zM402.5 308.3h1.4v1.4h-1.4zM412.8 283.1h1.5v1.5h-1.5zM409.8 391.7h1.0v1.0h-1.0zM397.3 281.0h1.3v1.3h-1.3zM460.5 253.6h0.9v0.9h-0.9zM433.7 299.9h0.9v0.9h-0.9zM442.6 265.0h1.0v1.0h-1.0zM408.0 354.4h1.0v1.0h-1.0zM419.4 288.5h1.2v1.2h-1.2zM453.1 263.2h0.8v0.8h-0.8zM481.0 319.5h0.7v0.7h-0.7zM489.1 318.2h0.8v0.8h-0.8zM449.8 323.9h0.9v0.9h-0.9zM445.8 383.3h1.4v1.4h-1.4zM433.7 340.9h0.8v0.8h-0.8zM464.9 327.8h0.9v0.9h-0.9zM476.5 267.9h1.1v1.1h-1.1zM492.6 378.5h1.3v1.3h-1.3zM488.8 350.4h0.8v0.8h-0.8zM499.9 258.6h1.4v1.4h-1.4zM502.0 354.2h0.8v0.8h-0.8zM411.1 352.3h0.7v0.7h-0.7zM475.9 269.7h1.4v1.4h-1.4zM476.7 260.8h1.4v1.4h-1.4zM427.6 288.0h1.4v1.4h-1.4zM404.7 348.0h0.7v0.7h-0.7zM474.6 269.5h1.3v1.3h-1.3zM412.7 289.5h1.4v1.4h-1.4zM408.4 291.9h0.9v0.9h-0.9zM417.5 333.5h1.5v1.5h-1.5zM463.8 323.8h0.8v0.8h-0.8zM451.5 292.2h1.3v1.3h-1.3zM478.0 327.2h1.4v1.4h-1.4zM474.1 260.2h0.7v0.7h-0.7zM479.0 283.6h0.7v0.7h-0.7zM460.2 284.7h1.4v1.4h-1.4zM486.0 367.9h0.8v0.8h-0.8zM423.3 242.1h1.0v1.0h-1.0zM441.8 318.1h0.8v0.8h-0.8zM458.0 381.5h1.1v1.1h-1.1zM494.4 330.1h0.8v0.8h-0.8zM403.5 300.0h1.2v1.2h-1.2zM396.1 303.6h1.3v1.3h-1.3zM412.5 350.8h0.9v0.9h-0.9zM501.7 389.2h0.8v0.8h-0.8zM411.1 262.6h0.9v0.9h-0.9zM416.9 357.0h0.7v0.7h-0.7zM435.6 311.2h1.4v1.4h-1.4zM483.9 260.0h0.9v0.9h-0.9zM441.4 322.5h1.0v1.0h-1.0zM437.6 380.3h1.3v1.3h-1.3zM454.0 332.6h0.7v0.7h-0.7zM470.9 376.7h1.2v1.2h-1.2zM460.2 385.5h1.2v1.2h-1.2zM488.5 301.4h0.8v0.8h-0.8zM435.4 345.0h0.8v0.8h-0.8zM405.4 242.1h1.0v1.0h-1.0zM469.9 269.0h1.1v1.1h-1.1zM500.7 351.8h1.3v1.3h-1.3zM447.3 260.7h0.7v0.7h-0.7zM441.1 386.5h0.8v0.8h-0.8zM432.0 290.5h1.2v1.2h-1.2zM441.3 281.6h1.1v1.1h-1.1zM423.0 339.1h0.9v0.9h-0.9zM465.9 295.9h0.9v0.9h-0.9zM412.7 306.3h0.9v0.9h-0.9zM422.4 314.1h1.5v1.5h-1.5zM421.2 387.8h1.4v1.4h-1.4zM441.5 352.0h1.3v1.3h-1.3zM428.3 378.3h0.8v0.8h-0.8zM395.4 352.3h1.0v1.0h-1.0zM401.5 254.5h0.9v0.9h-0.9zM420.9 316.7h0.7v0.7h-0.7zM426.1 288.8h0.9v0.9h-0.9zM405.5 279.2h1.1v1.1h-1.1zM418.0 357.0h1.1v1.1h-1.1zM419.9 303.6h1.3v1.3h-1.3zM478.7 242.3h0.8v0.8h-0.8zM457.8 276.1h0.8v0.8h-0.8zM413.1 351.0h0.9v0.9h-0.9zM442.9 301.5h0.9v0.9h-0.9zM452.6 301.7h1.4v1.4h-1.4zM491.0 293.9h0.6v0.6h-0.6zM473.9 274.3h1.3v1.3h-1.3zM482.7 340.7h0.8v0.8h-0.8zM460.1 263.6h0.8v0.8h-0.8zM457.7 314.5h1.0v1.0h-1.0zM407.7 262.7h1.1v1.1h-1.1zM419.7 269.9h0.6v0.6h-0.6zM428.9 254.2h1.0v1.0h-1.0zM484.0 278.2h1.3v1.3h-1.3zM419.3 348.0h1.0v1.0h-1.0zM489.2 389.5h1.1v1.1h-1.1zM497.8 253.3h0.8v0.8h-0.8zM495.1 323.5h0.7v0.7h-0.7zM423.0 248.3h0.8v0.8h-0.8zM443.4 341.2h0.7v0.7h-0.7zM437.7 332.7h1.3v1.3h-1.3zM434.5 360.6h0.8v0.8h-0.8zM460.6 269.4h1.5v1.5h-1.5zM474.0 364.1h0.9v0.9h-0.9zM438.3 274.9h0.8v0.8h-0.8zM461.0 305.8h1.5v1.5h-1.5zM417.1 253.4h0.8v0.8h-0.8zM424.4 366.9h1.1v1.1h-1.1zM430.1 370.8h1.2v1.2h-1.2zM403.4 252.9h0.9v0.9h-0.9zM413.1 359.6h1.4v1.4h-1.4zM470.1 289.1h1.1v1.1h-1.1zM467.4 316.5h1.3v1.3h-1.3zM451.3 255.8h0.6v0.6h-0.6zM418.9 334.8h0.9v0.9h-0.9zM455.3 333.5h0.8v0.8h-0.8zM440.9 322.9h0.7v0.7h-0.7zM411.1 343.8h1.2v1.2h-1.2zM455.5 285.8h0.8v0.8h-0.8zM444.7 347.6h1.3v1.3h-1.3zM430.7 354.6h0.7v0.7h-0.7zM463.8 287.9h1.3v1.3h-1.3zM438.2 358.6h1.1v1.1h-1.1zM457.8 286.7h0.7v0.7h-0.7zM500.1 384.4h1.4v1.4h-1.4zM399.9 387.2h1.4v1.4h-1.4zM429.2 359.4h1.1v1.1h-1.1zM466.8 365.6h1.2v1.2h-1.2zM439.5 344.2h0.9v0.9h-0.9zM447.7 387.7h1.2v1.2h-1.2zM466.8 351.1h1.4v1.4h-1.4zM480.7 340.4h0.8v0.8h-0.8zM479.9 279.2h1.4v1.4h-1.4zM434.7 243.2h1.0v1.0h-1.0zM456.6 385.6h0.9v0.9h-0.9zM471.7 311.7h1.1v1.1h-1.1zM450.9 290.7h1.1v1.1h-1.1zM456.3 320.1h0.9v0.9h-0.9zM469.7 349.0h1.4v1.4h-1.4zM449.3 336.5h0.7v0.7h-0.7zM464.7 295.7h0.7v0.7h-0.7zM454.7 268.3h1.4v1.4h-1.4zM472.8 278.5h1.1v1.1h-1.1zM427.1 302.2h1.1v1.1h-1.1zM399.6 287.9h0.8v0.8h-0.8zM439.4 303.8h1.3v1.3h-1.3zM414.0 273.5h0.6v0.6h-0.6zM453.4 344.3h0.8v0.8h-0.8zM475.3 286.7h1.4v1.4h-1.4zM423.4 342.1h0.8v0.8h-0.8zM407.2 378.6h0.8v0.8h-0.8zM411.1 258.8h1.2v1.2h-1.2zM438.6 352.4h0.7v0.7h-0.7zM435.6 253.3h1.3v1.3h-1.3zM426.6 281.6h1.4v1.4h-1.4zM473.8 345.1h0.8v0.8h-0.8zM449.5 324.6h1.1v1.1h-1.1zM421.2 306.7h1.5v1.5h-1.5zM479.6 356.4h0.7v0.7h-0.7zM449.2 361.5h0.7v0.7h-0.7zM457.0 315.8h0.6v0.6h-0.6zM469.2 344.9h1.1v1.1h-1.1zM447.0 321.7h0.8v0.8h-0.8zM467.8 350.0h0.9v0.9h-0.9zM497.7 297.3h1.0v1.0h-1.0zM423.0 292.6h1.4v1.4h-1.4zM483.9 372.1h1.5v1.5h-1.5zM436.4 247.9h1.2v1.2h-1.2zM485.5 325.9h0.6v0.6h-0.6zM469.4 336.3h1.1v1.1h-1.1zM475.5 363.9h1.3v1.3h-1.3zM457.1 381.0h1.1v1.1h-1.1zM486.9 251.5h1.1v1.1h-1.1zM468.8 384.8h0.8v0.8h-0.8zM461.7 320.3h0.8v0.8h-0.8zM398.3 381.2h0.8v0.8h-0.8zM396.5 383.6h1.0v1.0h-1.0zM428.2 360.8h1.1v1.1h-1.1zM456.9 352.7h0.9v0.9h-0.9zM483.4 338.9h0.6v0.6h-0.6zM408.9 258.8h1.4v1.4h-1.4zM469.1 316.4h1.1v1.1h-1.1zM442.7 334.9h1.4v1.4h-1.4zM480.3 293.7h1.2v1.2h-1.2zM473.8 319.5h0.7v0.7h-0.7zM479.7 353.7h1.0v1.0h-1.0zM474.3 339.1h1.0v1.0h-1.0zM407.5 319.9h1.4v1.4h-1.4zM460.4 253.1h0.7v0.7h-0.7zM440.6 342.3h1.4v1.4h-1.4zM416.4 339.5h0.6v0.6h-0.6zM445.5 303.8h1.1v1.1h-1.1zM449.8 271.7h0.8v0.8h-0.8zM435.4 368.2h0.8v0.8h-0.8zM429.5 325.7h1.4v1.4h-1.4zM401.5 340.4h0.6v0.6h-0.6zM416.5 378.1h0.8v0.8h-0.8zM435.5 385.0h1.4v1.4h-1.4zM443.5 285.8h1.0v1.0h-1.0zM459.1 295.6h0.9v0.9h-0.9zM421.4 332.8h0.8v0.8h-0.8zM456.7 366.9h0.7v0.7h-0.7zM447.8 375.3h0.8v0.8h-0.8zM449.7 326.0h0.8v0.8h-0.8zM483.7 364.6h1.3v1.3h-1.3zM464.4 290.0h1.0v1.0h-1.0zM496.6 388.6h1.0v1.0h-1.0zM403.1 253.2h1.2v1.2h-1.2zM402.9 287.9h1.4v1.4h-1.4zM453.5 248.5h1.1v1.1h-1.1zM407.5 388.7h1.4v1.4h-1.4zM418.4 277.8h1.3v1.3h-1.3zM446.1 346.4h0.9v0.9h-0.9zM410.5 330.7h1.1v1.1h-1.1zM477.3 359.8h1.4v1.4h-1.4zM407.6 362.4h0.6v0.6h-0.6zM404.8 370.6h0.8v0.8h-0.8zM464.9 371.0h1.1v1.1h-1.1zM430.7 321.3h1.4v1.4h-1.4zM485.9 310.7h1.4v1.4h-1.4zM425.1 340.6h0.7v0.7h-0.7zM483.5 277.2h0.8v0.8h-0.8zM418.6 269.2h1.4v1.4h-1.4zM432.0 281.8h1.1v1.1h-1.1zM426.6 287.1h0.7v0.7h-0.7zM435.0 291.8h0.6v0.6h-0.6zM500.9 383.8h1.5v1.5h-1.5zM450.4 248.7h0.8v0.8h-0.8zM463.7 267.4h1.4v1.4h-1.4zM405.2 309.3h1.1v1.1h-1.1zM479.7 279.1h1.0v1.0h-1.0zM395.0 357.4h1.3v1.3h-1.3zM415.3 348.7h0.7v0.7h-0.7zM448.7 353.7h1.1v1.1h-1.1zM447.0 334.6h0.7v0.7h-0.7zM433.9 275.0h0.6v0.6h-0.6zM471.4 289.8h1.0v1.0h-1.0zM463.4 261.1h0.6v0.6h-0.6zM485.9 271.6h1.0v1.0h-1.0zM468.5 355.2h1.3v1.3h-1.3zM447.2 340.7h0.7v0.7h-0.7zM469.2 255.7h1.2v1.2h-1.2zM396.6 335.8h0.9v0.9h-0.9zM446.7 273.8h0.7v0.7h-0.7zM431.0 384.8h1.0v1.0h-1.0zM493.6 313.3h0.8v0.8h-0.8zM410.1 284.8h1.2v1.2h-1.2zM469.1 352.5h1.1v1.1h-1.1zM410.5 342.2h1.3v1.3h-1.3zM454.3 393.7h1.2v1.2h-1.2zM440.3 267.1h1.0v1.0h-1.0zM425.9 352.2h0.8v0.8h-0.8zM424.1 346.5h0.9v0.9h-0.9zM471.1 372.5h1.1v1.1h-1.1zM431.0 274.8h0.8v0.8h-0.8zM465.5 268.7h0.9v0.9h-0.9zM469.6 270.7h0.9v0.9h-0.9zM481.8 264.9h1.0v1.0h-1.0zM450.5 382.0h0.7v0.7h-0.7zM461.3 348.6h0.9v0.9h-0.9zM449.5 393.8h1.1v1.1h-1.1zM416.8 263.3h1.2v1.2h-1.2zM479.8 341.0h1.4v1.4h-1.4zM477.3 242.7h0.7v0.7h-0.7zM412.3 278.7h0.8v0.8h-0.8zM432.4 294.0h1.5v1.5h-1.5zM477.3 391.1h0.8v0.8h-0.8zM448.8 327.6h1.5v1.5h-1.5zM437.5 295.8h1.1v1.1h-1.1zM478.3 254.2h1.4v1.4h-1.4zM478.7 306.1h1.0v1.0h-1.0zM442.9 364.5h1.2v1.2h-1.2zM466.5 273.7h1.3v1.3h-1.3zM462.3 310.9h1.0v1.0h-1.0zM393.9 372.9h1.0v1.0h-1.0zM469.5 294.0h1.0v1.0h-1.0zM461.9 245.9h0.7v0.7h-0.7zM426.8 285.0h1.3v1.3h-1.3zM441.9 249.7h1.4v1.4h-1.4zM496.9 290.5h1.1v1.1h-1.1zM462.3 280.0h1.1v1.1h-1.1zM457.0 269.8h1.4v1.4h-1.4zM403.8 327.8h1.2v1.2h-1.2zM420.5 393.7h1.3v1.3h-1.3zM439.5 259.6h1.1v1.1h-1.1zM420.0 321.6h0.6v0.6h-0.6zM477.5 383.1h0.8v0.8h-0.8zM458.8 277.1h0.8v0.8h-0.8zM452.8 256.5h0.8v0.8h-0.8zM489.8 358.3h0.6v0.6h-0.6zM418.7 258.4h0.6v0.6h-0.6zM413.5 267.0h1.5v1.5h-1.5zM434.8 314.8h1.3v1.3h-1.3zM463.1 341.7h1.0v1.0h-1.0zM435.8 359.7h1.4v1.4h-1.4zM402.9 244.8h1.0v1.0h-1.0zM439.7 296.4h0.6v0.6h-0.6zM480.8 262.2h0.7v0.7h-0.7zM418.7 266.0h0.9v0.9h-0.9zM479.7 284.0h1.1v1.1h-1.1zM409.2 333.5h1.2v1.2h-1.2zM490.8 317.1h0.8v0.8h-0.8zM435.3 388.2h1.3v1.3h-1.3zM433.7 321.4h1.0v1.0h-1.0zM488.0 386.9h1.1v1.1h-1.1zM417.3 352.8h1.3v1.3h-1.3zM443.8 250.9h1.2v1.2h-1.2zM411.9 302.3h1.0v1.0h-1.0zM443.4 331.1h1.2v1.2h-1.2zM462.8 263.9h0.7v0.7h-0.7zM418.2 249.6h1.3v1.3h-1.3zM436.3 281.8h1.0v1.0h-1.0zM405.8 294.7h0.8v0.8h-0.8zM443.6 375.6h1.1v1.1h-1.1zM456.1 285.6h1.2v1.2h-1.2zM472.3 343.5h1.2v1.2h-1.2zM395.5 372.5h0.9v0.9h-0.9zM482.2 313.6h1.3v1.3h-1.3zM402.1 333.2h1.3v1.3h-1.3zM432.4 390.8h1.1v1.1h-1.1zM473.1 371.6h1.1v1.1h-1.1zM415.3 391.4h1.3v1.3h-1.3zM410.9 387.7h0.8v0.8h-0.8zM483.6 244.4h1.4v1.4h-1.4zM439.2 247.9h0.6v0.6h-0.6zM464.1 354.4h0.7v0.7h-0.7zM450.7 333.9h1.0v1.0h-1.0zM436.0 287.9h1.0v1.0h-1.0zM442.9 281.1h1.1v1.1h-1.1zM447.9 370.2h0.9v0.9h-0.9zM491.1 367.3h1.0v1.0h-1.0zM467.3 383.4h1.2v1.2h-1.2zM446.6 299.8h0.9v0.9h-0.9zM478.9 328.8h1.1v1.1h-1.1zM416.5 282.3h1.3v1.3h-1.3zM493.7 245.9h1.1v1.1h-1.1zM430.3 260.8h1.1v1.1h-1.1zM452.7 351.3h0.6v0.6h-0.6zM404.9 249.3h1.0v1.0h-1.0zM466.7 350.8h1.0v1.0h-1.0zM464.8 357.4h0.7v0.7h-0.7zM419.9 367.1h1.1v1.1h-1.1zM444.8 284.5h1.1v1.1h-1.1zM397.7 337.4h0.8v0.8h-0.8zM491.2 351.4h0.8v0.8h-0.8zM447.5 253.8h1.4v1.4h-1.4zM443.0 310.2h0.7v0.7h-0.7zM452.5 297.4h1.3v1.3h-1.3zM446.7 313.3h1.2v1.2h-1.2zM391.1 298.8h0.8v0.8h-0.8zM422.2 386.4h1.4v1.4h-1.4zM448.2 392.2h1.5v1.5h-1.5zM447.4 290.6h1.3v1.3h-1.3zM419.6 330.0h0.8v0.8h-0.8zM476.8 255.2h1.0v1.0h-1.0zM440.9 390.1h0.7v0.7h-0.7zM399.8 357.3h1.3v1.3h-1.3zM439.3 299.8h0.6v0.6h-0.6zM482.5 248.3h1.4v1.4h-1.4zM471.3 355.1h1.4v1.4h-1.4zM494.9 347.3h1.2v1.2h-1.2zM474.7 358.2h0.7v0.7h-0.7zM433.6 351.4h1.4v1.4h-1.4zM479.0 319.1h0.7v0.7h-0.7zM425.3 317.2h0.6v0.6h-0.6zM426.9 309.8h0.7v0.7h-0.7zM452.7 252.5h0.6v0.6h-0.6zM450.4 368.0h0.8v0.8h-0.8zM493.4 368.0h0.7v0.7h-0.7zM398.3 332.0h0.8v0.8h-0.8zM418.1 377.3h1.2v1.2h-1.2zM454.2 260.4h1.2v1.2h-1.2zM479.3 253.4h0.7v0.7h-0.7zM472.6 377.7h1.2v1.2h-1.2zM468.0 279.5h1.4v1.4h-1.4zM475.6 382.2h0.9v0.9h-0.9zM401.3 290.7h1.4v1.4h-1.4zM466.7 370.4h1.2v1.2h-1.2zM461.5 309.7h0.8v0.8h-0.8zM495.5 352.4h0.8v0.8h-0.8zM456.3 265.2h1.4v1.4h-1.4zM453.6 331.6h1.2v1.2h-1.2zM419.7 317.6h1.3v1.3h-1.3zM474.4 312.6h1.1v1.1h-1.1zM463.1 353.7h0.7v0.7h-0.7zM434.9 308.3h0.8v0.8h-0.8zM434.4 280.4h0.7v0.7h-0.7zM404.6 289.3h0.8v0.8h-0.8zM451.5 319.3h1.1v1.1h-1.1zM460.2 339.2h1.5v1.5h-1.5zM440.9 318.0h1.3v1.3h-1.3zM437.0 275.6h0.9v0.9h-0.9zM421.6 292.3h1.1v1.1h-1.1zM454.1 315.7h1.4v1.4h-1.4zM429.8 308.8h0.9v0.9h-0.9zM479.8 353.7h1.4v1.4h-1.4zM426.5 305.5h1.2v1.2h-1.2zM485.5 296.7h1.3v1.3h-1.3zM446.7 294.4h0.8v0.8h-0.8zM449.7 312.2h1.1v1.1h-1.1zM426.3 263.9h1.3v1.3h-1.3zM470.2 337.6h1.2v1.2h-1.2zM403.9 246.0h0.7v0.7h-0.7zM442.7 334.1h0.7v0.7h-0.7zM471.6 336.1h1.3v1.3h-1.3zM446.4 242.2h0.8v0.8h-0.8zM474.0 273.0h0.7v0.7h-0.7zM419.1 332.7h0.9v0.9h-0.9zM427.1 314.8h1.2v1.2h-1.2zM417.4 393.4h1.3v1.3h-1.3zM441.2 269.9h0.9v0.9h-0.9zM424.1 259.7h1.2v1.2h-1.2zM432.7 253.6h0.8v0.8h-0.8zM421.1 302.6h1.0v1.0h-1.0zM451.1 291.7h1.4v1.4h-1.4zM447.2 258.8h1.0v1.0h-1.0zM423.4 384.3h0.9v0.9h-0.9zM409.6 344.3h1.0v1.0h-1.0zM411.6 371.4h1.1v1.1h-1.1zM481.2 294.5h1.2v1.2h-1.2zM467.7 365.9h1.4v1.4h-1.4zM482.4 347.9h0.8v0.8h-0.8zM468.9 345.3h1.3v1.3h-1.3zM432.8 298.0h1.3v1.3h-1.3zM461.6 297.1h0.9v0.9h-0.9zM473.2 281.8h1.0v1.0h-1.0zM485.3 303.4h0.9v0.9h-0.9zM450.9 246.4h1.2v1.2h-1.2zM474.3 352.3h1.4v1.4h-1.4zM448.3 320.2h0.9v0.9h-0.9zM426.0 305.0h1.2v1.2h-1.2zM470.3 345.9h1.3v1.3h-1.3zM435.5 293.2h1.0v1.0h-1.0zM467.4 283.0h1.4v1.4h-1.4zM450.3 287.4h1.4v1.4h-1.4zM491.9 269.0h1.1v1.1h-1.1zM450.6 279.6h0.9v0.9h-0.9zM461.6 365.6h0.6v0.6h-0.6zM450.6 329.7h0.7v0.7h-0.7zM445.0 273.9h0.7v0.7h-0.7zM398.0 304.9h1.0v1.0h-1.0zM411.4 278.3h1.3v1.3h-1.3zM437.9 316.8h1.5v1.5h-1.5zM400.5 277.2h1.1v1.1h-1.1zM490.7 355.1h1.1v1.1h-1.1zM476.0 342.8h0.6v0.6h-0.6zM476.9 363.7h1.3v1.3h-1.3zM451.3 309.8h0.8v0.8h-0.8zM459.2 275.8h0.7v0.7h-0.7zM492.0 325.0h1.2v1.2h-1.2zM439.6 335.4h1.0v1.0h-1.0zM436.2 246.3h1.2v1.2h-1.2zM412.0 245.2h0.7v0.7h-0.7zM429.9 296.5h1.1v1.1h-1.1zM448.0 275.7h0.8v0.8h-0.8zM427.9 286.5h1.0v1.0h-1.0zM486.3 377.5h1.5v1.5h-1.5zM434.2 386.2h1.4v1.4h-1.4zM477.2 321.3h1.4v1.4h-1.4zM396.4 354.7h0.9v0.9h-0.9zM443.0 297.4h0.9v0.9h-0.9zM439.5 344.9h1.1v1.1h-1.1zM418.7 346.5h1.0v1.0h-1.0zM444.2 347.5h1.5v1.5h-1.5zM452.9 333.6h1.1v1.1h-1.1zM490.2 250.8h0.6v0.6h-0.6zM400.2 374.8h0.8v0.8h-0.8zM404.4 341.2h0.7v0.7h-0.7zM440.1 382.0h1.0v1.0h-1.0zM455.8 375.0h1.4v1.4h-1.4zM455.0 333.4h1.3v1.3h-1.3zM443.0 282.8h1.0v1.0h-1.0zM432.6 272.3h1.2v1.2h-1.2zM439.8 362.7h1.2v1.2h-1.2zM413.3 255.0h0.6v0.6h-0.6zM471.5 345.7h0.7v0.7h-0.7zM405.5 337.1h0.7v0.7h-0.7zM441.3 364.0h0.7v0.7h-0.7zM450.7 293.8h0.9v0.9h-0.9zM412.0 393.6h0.7v0.7h-0.7zM414.6 296.9h1.4v1.4h-1.4zM469.8 302.2h0.7v0.7h-0.7zM467.8 268.0h1.0v1.0h-1.0zM462.8 376.9h1.0v1.0h-1.0zM479.1 275.2h0.6v0.6h-0.6zM467.9 256.1h1.1v1.1h-1.1zM444.2 251.4h1.0v1.0h-1.0zM451.2 366.2h0.9v0.9h-0.9zM448.7 295.8h1.1v1.1h-1.1zM435.2 389.8h1.2v1.2h-1.2zM462.1 326.9h1.0v1.0h-1.0zM420.8 312.8h1.2v1.2h-1.2zM418.4 287.2h1.4v1.4h-1.4zM441.5 283.9h0.6v0.6h-0.6zM470.5 275.5h0.8v0.8h-0.8zM411.3 374.5h0.8v0.8h-0.8zM457.8 354.2h1.1v1.1h-1.1zM404.7 387.1h0.9v0.9h-0.9zM468.0 269.0h1.2v1.2h-1.2zM453.7 303.8h1.3v1.3h-1.3zM441.3 318.4h1.0v1.0h-1.0zM409.5 267.4h0.7v0.7h-0.7zM457.0 375.2h1.0v1.0h-1.0zM424.8 350.9h1.4v1.4h-1.4zM484.7 338.1h0.7v0.7h-0.7zM456.3 392.9h1.0v1.0h-1.0zM465.8 329.5h1.2v1.2h-1.2zM482.9 291.3h1.5v1.5h-1.5zM458.9 306.3h1.2v1.2h-1.2zM428.9 322.5h0.6v0.6h-0.6zM465.0 316.8h0.8v0.8h-0.8zM401.2 287.6h1.5v1.5h-1.5zM454.2 289.7h0.6v0.6h-0.6zM412.4 279.2h0.7v0.7h-0.7zM415.7 296.6h1.4v1.4h-1.4zM467.6 392.4h1.2v1.2h-1.2zM446.8 257.0h1.0v1.0h-1.0zM410.1 268.7h1.0v1.0h-1.0zM451.3 364.8h1.2v1.2h-1.2zM465.4 298.2h0.6v0.6h-0.6zM465.2 359.4h1.3v1.3h-1.3zM457.1 387.0h0.9v0.9h-0.9zM465.7 329.7h1.1v1.1h-1.1zM455.9 372.5h1.5v1.5h-1.5zM465.6 303.6h0.6v0.6h-0.6zM477.6 384.6h1.2v1.2h-1.2zM499.2 347.6h0.6v0.6h-0.6zM476.6 327.6h0.9v0.9h-0.9zM465.3 343.6h1.2v1.2h-1.2zM390.5 288.5h0.8v0.8h-0.8zM457.2 346.9h1.2v1.2h-1.2zM440.5 369.9h1.2v1.2h-1.2zM460.4 291.9h1.1v1.1h-1.1zM428.3 369.6h0.6v0.6h-0.6zM427.5 358.3h1.3v1.3h-1.3zM455.7 334.1h1.4v1.4h-1.4zM490.2 332.8h1.4v1.4h-1.4zM450.6 372.1h0.9v0.9h-0.9zM405.7 317.4h1.0v1.0h-1.0zM434.0 286.5h1.5v1.5h-1.5zM435.1 368.9h0.9v0.9h-0.9zM462.9 286.8h1.0v1.0h-1.0zM491.8 367.1h0.8v0.8h-0.8zM499.8 282.3h1.0v1.0h-1.0zM420.2 257.0h0.7v0.7h-0.7zM431.6 326.5h0.7v0.7h-0.7zM393.6 320.5h1.3v1.3h-1.3zM437.5 274.6h0.6v0.6h-0.6zM425.2 321.3h1.0v1.0h-1.0zM424.2 307.3h0.9v0.9h-0.9zM405.1 310.7h0.8v0.8h-0.8zM495.0 245.9h0.9v0.9h-0.9zM391.8 339.5h1.4v1.4h-1.4zM458.4 377.8h1.3v1.3h-1.3zM416.6 251.4h1.3v1.3h-1.3zM432.6 260.2h1.0v1.0h-1.0zM419.3 298.2h0.7v0.7h-0.7zM455.9 381.3h0.6v0.6h-0.6zM479.7 245.2h1.4v1.4h-1.4zM498.2 265.1h1.3v1.3h-1.3zM406.1 292.5h0.7v0.7h-0.7zM438.6 300.7h1.1v1.1h-1.1zM460.5 376.5h0.8v0.8h-0.8zM467.2 300.6h1.5v1.5h-1.5zM482.9 368.4h1.0v1.0h-1.0zM417.6 289.8h1.0v1.0h-1.0zM449.2 303.0h1.2v1.2h-1.2zM429.9 345.7h1.0v1.0h-1.0zM436.6 271.7h1.2v1.2h-1.2zM435.1 284.2h0.6v0.6h-0.6zM441.1 365.7h1.5v1.5h-1.5zM468.1 377.7h0.9v0.9h-0.9zM450.5 261.0h0.6v0.6h-0.6zM474.2 362.4h1.0v1.0h-1.0zM473.2 327.1h1.2v1.2h-1.2zM443.1 247.9h1.3v1.3h-1.3zM396.4 360.0h0.7v0.7h-0.7zM462.1 257.8h1.4v1.4h-1.4zM446.6 330.2h0.8v0.8h-0.8zM412.1 373.4h0.9v0.9h-0.9zM479.1 371.7h1.3v1.3h-1.3zM414.9 348.9h0.8v0.8h-0.8zM488.8 298.6h1.0v1.0h-1.0zM470.1 393.0h1.5v1.5h-1.5zM457.0 280.5h1.2v1.2h-1.2zM426.8 376.2h1.4v1.4h-1.4zM465.6 385.6h1.1v1.1h-1.1zM402.0 326.4h1.0v1.0h-1.0zM415.8 369.3h1.3v1.3h-1.3zM402.6 285.1h0.9v0.9h-0.9zM410.1 380.8h0.7v0.7h-0.7zM458.6 385.6h0.9v0.9h-0.9zM461.3 306.8h0.6v0.6h-0.6zM438.3 275.9h1.1v1.1h-1.1zM449.7 326.1h1.0v1.0h-1.0zM432.1 329.7h1.5v1.5h-1.5zM451.0 343.7h0.7v0.7h-0.7zM480.5 265.5h0.8v0.8h-0.8zM432.4 254.9h0.7v0.7h-0.7zM422.3 310.7h1.0v1.0h-1.0zM450.4 246.0h1.1v1.1h-1.1zM442.1 331.0h1.1v1.1h-1.1zM443.5 335.0h0.6v0.6h-0.6zM409.1 362.0h1.3v1.3h-1.3zM428.6 361.1h1.2v1.2h-1.2zM429.4 376.0h0.8v0.8h-0.8zM435.2 255.6h0.8v0.8h-0.8zM481.5 351.6h1.3v1.3h-1.3zM404.6 386.7h1.2v1.2h-1.2zM488.1 317.0h0.9v0.9h-0.9zM495.6 370.8h0.6v0.6h-0.6zM425.5 336.8h1.3v1.3h-1.3zM407.5 337.0h1.5v1.5h-1.5zM431.5 319.6h1.1v1.1h-1.1zM461.3 252.3h1.4v1.4h-1.4zM430.3 369.2h0.9v0.9h-0.9zM392.2 382.9h1.0v1.0h-1.0zM444.2 281.0h1.1v1.1h-1.1zM403.2 341.3h0.8v0.8h-0.8zM425.8 271.4h1.2v1.2h-1.2zM493.1 351.0h1.4v1.4h-1.4zM429.5 337.9h1.2v1.2h-1.2zM471.4 247.9h0.7v0.7h-0.7zM401.4 344.0h1.0v1.0h-1.0zM445.0 316.6h1.3v1.3h-1.3zM404.6 257.7h1.2v1.2h-1.2zM402.2 334.0h1.3v1.3h-1.3zM441.1 254.6h1.1v1.1h-1.1zM476.5 272.8h0.7v0.7h-0.7zM428.0 289.5h0.8v0.8h-0.8zM436.5 344.5h1.3v1.3h-1.3zM430.1 353.2h1.2v1.2h-1.2zM433.7 299.7h1.5v1.5h-1.5zM463.0 311.1h0.7v0.7h-0.7zM434.6 299.4h0.8v0.8h-0.8zM401.9 357.2h1.0v1.0h-1.0zM416.7 283.7h0.7v0.7h-0.7zM426.9 260.7h0.9v0.9h-0.9zM418.6 367.0h0.8v0.8h-0.8zM414.0 386.9h1.1v1.1h-1.1zM496.7 350.7h0.8v0.8h-0.8zM437.2 346.0h1.2v1.2h-1.2zM447.2 353.8h1.0v1.0h-1.0zM465.2 330.6h1.3v1.3h-1.3zM439.7 348.6h0.7v0.7h-0.7zM496.6 289.2h1.0v1.0h-1.0zM444.9 368.1h1.2v1.2h-1.2zM403.8 349.7h1.1v1.1h-1.1zM451.6 301.7h1.0v1.0h-1.0zM462.5 299.5h1.3v1.3h-1.3zM457.3 364.5h0.6v0.6h-0.6zM445.5 291.8h1.1v1.1h-1.1zM434.4 288.4h0.6v0.6h-0.6zM449.9 343.4h1.0v1.0h-1.0zM467.9 357.7h0.9v0.9h-0.9zM408.5 276.9h0.9v0.9h-0.9zM416.3 246.1h1.2v1.2h-1.2zM412.8 354.1h0.7v0.7h-0.7zM452.5 303.2h1.1v1.1h-1.1zM390.8 390.1h0.8v0.8h-0.8zM480.2 264.6h1.1v1.1h-1.1zM482.4 243.6h1.2v1.2h-1.2zM419.6 298.7h1.4v1.4h-1.4zM476.9 302.0h1.5v1.5h-1.5zM469.6 356.0h0.9v0.9h-0.9zM482.9 315.6h1.0v1.0h-1.0zM433.7 389.8h1.3v1.3h-1.3zM465.1 318.7h1.4v1.4h-1.4zM416.0 382.2h0.9v0.9h-0.9zM494.7 381.9h1.2v1.2h-1.2zM436.7 360.3h0.9v0.9h-0.9zM459.4 303.1h1.2v1.2h-1.2zM481.0 391.6h0.8v0.8h-0.8zM420.9 261.7h1.1v1.1h-1.1zM445.7 370.9h1.4v1.4h-1.4zM408.6 290.0h0.6v0.6h-0.6zM480.7 329.6h0.8v0.8h-0.8zM449.7 253.5h0.9v0.9h-0.9zM467.8 314.6h1.0v1.0h-1.0zM458.6 278.1h0.9v0.9h-0.9zM398.7 373.7h1.0v1.0h-1.0zM447.9 245.0h1.5v1.5h-1.5zM433.1 375.8h1.3v1.3h-1.3zM489.8 254.0h1.1v1.1h-1.1zM447.2 335.2h0.6v0.6h-0.6zM409.2 374.0h1.0v1.0h-1.0zM446.4 347.9h0.8v0.8h-0.8zM425.3 388.6h1.2v1.2h-1.2zM488.0 305.2h1.3v1.3h-1.3zM401.8 277.2h1.0v1.0h-1.0zM449.5 388.3h0.7v0.7h-0.7zM478.9 350.3h0.9v0.9h-0.9zM463.3 257.4h1.1v1.1h-1.1zM440.6 270.9h1.2v1.2h-1.2zM487.1 243.0h0.8v0.8h-0.8zM436.2 282.7h1.0v1.0h-1.0zM456.0 321.3h1.2v1.2h-1.2zM425.3 333.3h1.3v1.3h-1.3zM461.9 253.8h1.3v1.3h-1.3zM469.0 374.7h1.4v1.4h-1.4zM453.1 290.9h0.9v0.9h-0.9zM470.4 295.4h1.1v1.1h-1.1zM496.9 340.5h0.8v0.8h-0.8zM477.8 302.8h1.3v1.3h-1.3zM443.4 299.8h1.3v1.3h-1.3zM437.3 379.8h0.6v0.6h-0.6zM405.5 312.1h1.5v1.5h-1.5zM435.5 317.6h1.4v1.4h-1.4zM477.6 306.1h0.8v0.8h-0.8zM427.8 282.4h1.3v1.3h-1.3zM473.3 385.2h1.5v1.5h-1.5zM437.6 249.1h0.9v0.9h-0.9zM449.9 337.9h1.1v1.1h-1.1zM419.9 355.1h0.7v0.7h-0.7zM446.2 303.0h1.0v1.0h-1.0zM454.4 278.2h0.8v0.8h-0.8zM461.3 265.6h0.9v0.9h-0.9zM451.4 382.1h1.2v1.2h-1.2zM459.3 270.3h0.8v0.8h-0.8zM399.0 338.6h1.0v1.0h-1.0zM492.8 317.1h0.9v0.9h-0.9zM496.4 379.0h1.2v1.2h-1.2zM457.5 249.1h1.3v1.3h-1.3zM453.0 340.5h1.2v1.2h-1.2zM418.2 382.0h1.4v1.4h-1.4zM432.5 346.0h0.6v0.6h-0.6zM435.9 352.9h1.2v1.2h-1.2zM468.2 340.9h0.6v0.6h-0.6zM466.4 247.4h0.7v0.7h-0.7zM474.5 389.1h1.4v1.4h-1.4zM467.8 287.0h0.7v0.7h-0.7zM486.7 345.1h0.7v0.7h-0.7zM440.9 278.6h0.6v0.6h-0.6zM478.2 331.8h0.7v0.7h-0.7zM460.9 339.1h1.5v1.5h-1.5zM493.8 309.3h1.3v1.3h-1.3zM452.7 381.7h0.8v0.8h-0.8zM443.0 385.2h1.4v1.4h-1.4zM457.3 286.9h1.1v1.1h-1.1zM433.1 379.8h0.8v0.8h-0.8zM478.1 379.9h1.1v1.1h-1.1zM472.8 384.2h0.9v0.9h-0.9zM414.2 251.4h1.3v1.3h-1.3zM413.3 318.6h0.8v0.8h-0.8zM466.3 330.7h0.8v0.8h-0.8zM448.7 275.5h0.9v0.9h-0.9zM468.6 291.1h0.8v0.8h-0.8zM406.1 351.3h1.2v1.2h-1.2zM475.8 388.9h1.1v1.1h-1.1zM436.8 380.5h1.4v1.4h-1.4zM469.2 392.8h1.2v1.2h-1.2zM447.2 362.2h1.3v1.3h-1.3zM424.0 259.1h1.3v1.3h-1.3zM478.8 367.8h0.7v0.7h-0.7zM432.9 321.7h1.2v1.2h-1.2zM458.1 301.1h1.0v1.0h-1.0zM483.5 257.4h0.9v0.9h-0.9zM467.6 302.2h0.7v0.7h-0.7zM463.9 301.2h0.9v0.9h-0.9zM478.9 389.4h0.9v0.9h-0.9zM435.2 354.2h0.7v0.7h-0.7zM436.5 377.7h0.8v0.8h-0.8zM448.9 391.8h0.8v0.8h-0.8zM444.9 382.4h0.6v0.6h-0.6zM410.3 291.4h1.5v1.5h-1.5zM399.9 318.0h1.0v1.0h-1.0zM461.8 333.3h1.0v1.0h-1.0zM424.9 260.8h1.1v1.1h-1.1zM419.9 255.6h1.0v1.0h-1.0zM416.1 369.7h1.4v1.4h-1.4zM411.8 363.3h0.8v0.8h-0.8zM432.6 328.8h1.1v1.1h-1.1zM419.4 357.0h1.3v1.3h-1.3zM467.5 315.6h1.1v1.1h-1.1zM455.8 306.8h0.9v0.9h-0.9zM419.4 344.6h0.9v0.9h-0.9zM450.4 359.3h1.3v1.3h-1.3zM477.8 333.7h1.4v1.4h-1.4zM425.9 382.6h1.0v1.0h-1.0zM435.5 366.8h1.4v1.4h-1.4zM463.8 358.4h1.0v1.0h-1.0zM453.2 370.8h1.2v1.2h-1.2zM449.1 266.4h1.1v1.1h-1.1zM431.4 381.7h1.5v1.5h-1.5zM443.0 319.8h1.3v1.3h-1.3zM434.2 300.0h0.6v0.6h-0.6zM415.6 365.2h1.0v1.0h-1.0zM471.1 348.0h1.0v1.0h-1.0zM464.7 390.9h1.3v1.3h-1.3zM400.2 255.5h0.7v0.7h-0.7zM455.6 315.2h1.2v1.2h-1.2zM478.3 312.5h1.0v1.0h-1.0zM450.3 293.1h1.2v1.2h-1.2zM482.8 375.6h1.0v1.0h-1.0zM416.5 250.6h1.2v1.2h-1.2zM427.2 282.3h1.4v1.4h-1.4zM475.3 272.5h1.2v1.2h-1.2zM470.9 280.7h1.3v1.3h-1.3zM484.1 297.1h1.2v1.2h-1.2zM477.9 264.5h0.9v0.9h-0.9zM451.0 328.8h1.0v1.0h-1.0zM455.5 319.8h0.7v0.7h-0.7zM478.5 364.5h1.2v1.2h-1.2zM490.2 259.1h1.3v1.3h-1.3zM417.5 253.3h1.1v1.1h-1.1zM445.7 349.5h1.2v1.2h-1.2zM498.5 394.0h0.8v0.8h-0.8zM439.2 259.3h0.9v0.9h-0.9zM497.5 302.0h1.3v1.3h-1.3zM495.0 392.3h0.8v0.8h-0.8zM426.4 368.1h0.6v0.6h-0.6zM458.3 273.8h0.8v0.8h-0.8zM433.7 338.1h0.7v0.7h-0.7zM490.6 261.4h0.7v0.7h-0.7zM439.6 249.1h1.2v1.2h-1.2zM394.7 333.4h1.1v1.1h-1.1zM435.9 362.5h1.3v1.3h-1.3zM427.6 366.6h0.6v0.6h-0.6zM439.4 249.2h1.4v1.4h-1.4zM393.6 317.2h1.4v1.4h-1.4zM437.9 349.1h1.3v1.3h-1.3zM418.7 379.5h1.5v1.5h-1.5zM430.3 369.2h1.3v1.3h-1.3zM440.3 334.1h1.1v1.1h-1.1zM421.6 349.2h1.0v1.0h-1.0zM408.8 254.3h0.8v0.8h-0.8zM487.9 264.0h1.2v1.2h-1.2zM484.7 356.4h0.6v0.6h-0.6zM441.4 260.3h0.7v0.7h-0.7zM470.2 319.5h1.4v1.4h-1.4zM419.4 360.3h0.7v0.7h-0.7zM437.6 360.8h1.4v1.4h-1.4zM433.4 290.7h1.5v1.5h-1.5zM493.3 338.4h1.2v1.2h-1.2zM443.1 295.6h0.9v0.9h-0.9zM478.4 262.6h0.8v0.8h-0.8zM426.9 308.9h0.8v0.8h-0.8zM476.1 322.9h1.0v1.0h-1.0zM462.8 390.0h1.2v1.2h-1.2zM408.1 264.8h0.7v0.7h-0.7zM427.6 266.4h1.2v1.2h-1.2zM465.2 343.9h0.7v0.7h-0.7zM405.5 286.6h1.1v1.1h-1.1zM422.6 346.3h0.8v0.8h-0.8zM451.1 388.2h1.1v1.1h-1.1zM451.4 247.4h1.1v1.1h-1.1zM464.8 369.5h1.5v1.5h-1.5zM394.2 372.5h0.9v0.9h-0.9zM440.1 258.6h0.8v0.8h-0.8zM408.5 325.9h1.4v1.4h-1.4zM428.5 294.5h0.9v0.9h-0.9zM415.4 309.7h1.1v1.1h-1.1zM490.1 359.4h1.5v1.5h-1.5zM402.7 348.3h1.1v1.1h-1.1zM425.3 373.2h1.3v1.3h-1.3zM449.4 321.9h0.7v0.7h-0.7zM449.9 330.2h1.2v1.2h-1.2zM469.8 365.2h1.2v1.2h-1.2zM448.1 287.1h0.6v0.6h-0.6zM477.5 300.9h0.9v0.9h-0.9zM435.3 383.5h0.7v0.7h-0.7zM473.1 312.3h0.8v0.8h-0.8zM482.9 333.2h1.0v1.0h-1.0zM424.0 303.8h0.7v0.7h-0.7zM424.1 334.4h1.0v1.0h-1.0zM415.5 382.9h1.1v1.1h-1.1zM416.7 342.9h1.3v1.3h-1.3zM451.9 358.0h1.4v1.4h-1.4zM426.5 311.0h0.8v0.8h-0.8zM424.4 256.7h0.7v0.7h-0.7zM424.7 269.4h1.0v1.0h-1.0zM479.1 328.7h0.9v0.9h-0.9zM466.0 327.1h1.2v1.2h-1.2zM424.7 299.3h1.1v1.1h-1.1zM450.4 378.3h0.7v0.7h-0.7zM426.5 299.6h0.7v0.7h-0.7zM458.4 262.0h1.5v1.5h-1.5zM471.3 283.9h1.5v1.5h-1.5zM417.0 248.6h1.2v1.2h-1.2zM406.3 337.1h0.9v0.9h-0.9zM462.6 272.5h1.4v1.4h-1.4zM479.5 283.9h1.3v1.3h-1.3zM408.9 274.6h1.0v1.0h-1.0zM452.1 334.9h0.6v0.6h-0.6zM423.4 321.5h1.4v1.4h-1.4zM402.8 317.2h0.7v0.7h-0.7zM475.1 244.1h1.0v1.0h-1.0zM460.3 253.4h0.6v0.6h-0.6zM426.3 392.8h1.1v1.1h-1.1zM410.0 276.8h1.2v1.2h-1.2zM437.8 269.0h1.1v1.1h-1.1zM465.8 246.6h0.7v0.7h-0.7zM446.9 278.1h0.9v0.9h-0.9zM470.8 336.4h1.4v1.4h-1.4zM436.1 313.8h0.9v0.9h-0.9zM480.6 360.2h0.8v0.8h-0.8zM444.2 381.9h1.0v1.0h-1.0zM474.2 259.0h0.8v0.8h-0.8zM488.1 374.2h1.1v1.1h-1.1zM443.8 305.7h1.4v1.4h-1.4zM455.4 331.0h1.2v1.2h-1.2zM490.1 293.7h0.7v0.7h-0.7zM483.4 252.4h1.1v1.1h-1.1zM399.0 359.8h0.8v0.8h-0.8zM460.0 301.9h0.7v0.7h-0.7zM478.4 383.3h1.2v1.2h-1.2zM415.7 309.8h1.1v1.1h-1.1zM409.1 349.3h0.6v0.6h-0.6zM466.2 251.4h1.5v1.5h-1.5zM439.4 310.9h0.7v0.7h-0.7zM403.8 372.8h0.9v0.9h-0.9zM481.2 366.5h1.0v1.0h-1.0zM441.2 316.3h1.4v1.4h-1.4zM440.6 281.5h0.9v0.9h-0.9zM471.1 263.4h0.8v0.8h-0.8zM467.3 311.7h1.5v1.5h-1.5zM455.0 248.0h1.0v1.0h-1.0zM442.1 276.5h1.1v1.1h-1.1zM460.5 366.7h1.0v1.0h-1.0zM420.3 267.8h0.7v0.7h-0.7zM438.4 287.0h0.8v0.8h-0.8zM402.4 274.4h1.5v1.5h-1.5zM464.2 377.7h0.6v0.6h-0.6zM449.1 381.4h1.2v1.2h-1.2zM488.2 323.3h1.3v1.3h-1.3zM460.4 301.4h1.0v1.0h-1.0zM464.3 349.2h0.9v0.9h-0.9zM457.1 242.4h0.8v0.8h-0.8zM461.3 275.2h0.9v0.9h-0.9zM470.2 247.7h0.6v0.6h-0.6zM478.4 316.3h1.3v1.3h-1.3zM443.5 266.0h1.0v1.0h-1.0zM448.4 309.6h1.4v1.4h-1.4zM433.6 343.9h0.7v0.7h-0.7zM460.1 277.2h0.8v0.8h-0.8zM434.9 382.1h1.2v1.2h-1.2zM498.7 332.6h1.0v1.0h-1.0zM492.0 305.2h1.5v1.5h-1.5zM435.4 258.1h1.1v1.1h-1.1zM440.5 310.7h0.7v0.7h-0.7zM491.2 374.1h1.4v1.4h-1.4zM441.4 357.7h1.5v1.5h-1.5zM416.4 298.3h0.9v0.9h-0.9zM418.0 368.9h0.8v0.8h-0.8zM445.2 269.3h1.1v1.1h-1.1zM486.7 323.1h0.6v0.6h-0.6zM427.7 362.5h0.6v0.6h-0.6zM429.7 253.0h1.5v1.5h-1.5zM457.9 375.4h0.6v0.6h-0.6zM474.1 383.0h1.3v1.3h-1.3zM470.1 255.5h1.5v1.5h-1.5zM429.9 316.3h0.8v0.8h-0.8zM465.5 363.0h1.4v1.4h-1.4zM471.7 313.6h0.8v0.8h-0.8zM450.7 299.6h0.7v0.7h-0.7zM441.9 345.5h1.4v1.4h-1.4zM424.1 371.6h1.4v1.4h-1.4zM444.3 358.9h0.8v0.8h-0.8zM413.6 281.0h1.2v1.2h-1.2zM453.7 330.5h1.2v1.2h-1.2zM408.3 300.7h0.9v0.9h-0.9zM496.3 383.8h1.2v1.2h-1.2zM425.0 330.3h1.5v1.5h-1.5zM485.3 244.8h1.1v1.1h-1.1zM461.0 321.6h0.8v0.8h-0.8zM451.4 313.7h1.5v1.5h-1.5zM449.8 281.9h1.5v1.5h-1.5zM421.1 284.2h1.1v1.1h-1.1zM498.5 258.6h0.8v0.8h-0.8zM480.7 363.0h1.2v1.2h-1.2zM418.6 367.9h0.7v0.7h-0.7zM433.8 330.7h0.9v0.9h-0.9zM424.0 242.0h1.4v1.4h-1.4zM467.2 313.1h0.8v0.8h-0.8zM446.5 259.5h1.2v1.2h-1.2zM403.8 387.9h1.0v1.0h-1.0zM459.0 244.0h0.6v0.6h-0.6zM415.5 282.6h1.4v1.4h-1.4zM452.8 372.1h0.7v0.7h-0.7zM485.1 325.6h0.8v0.8h-0.8zM437.3 284.0h0.9v0.9h-0.9zM396.6 294.5h1.5v1.5h-1.5zM406.2 261.6h1.2v1.2h-1.2zM475.1 384.0h1.1v1.1h-1.1zM469.5 295.9h1.3v1.3h-1.3zM483.9 338.7h1.1v1.1h-1.1zM429.5 306.8h1.4v1.4h-1.4zM404.3 334.2h0.9v0.9h-0.9zM453.1 266.7h0.8v0.8h-0.8zM429.4 383.0h1.0v1.0h-1.0zM448.7 358.7h0.9v0.9h-0.9zM415.3 291.2h0.8v0.8h-0.8zM424.2 311.2h0.7v0.7h-0.7zM468.5 369.1h0.6v0.6h-0.6zM438.2 278.0h1.4v1.4h-1.4zM457.7 288.1h1.4v1.4h-1.4zM424.9 269.6h0.9v0.9h-0.9zM413.7 330.1h0.6v0.6h-0.6zM424.2 370.2h0.7v0.7h-0.7zM425.0 287.4h1.1v1.1h-1.1zM489.0 368.8h1.1v1.1h-1.1zM428.8 341.4h1.3v1.3h-1.3zM488.0 343.1h1.3v1.3h-1.3zM414.5 308.8h1.5v1.5h-1.5zM449.2 381.5h1.4v1.4h-1.4zM413.6 299.1h1.2v1.2h-1.2zM488.1 292.1h1.0v1.0h-1.0zM422.0 368.9h0.8v0.8h-0.8zM425.6 247.5h1.1v1.1h-1.1zM417.7 345.9h1.3v1.3h-1.3zM488.4 361.3h0.6v0.6h-0.6zM427.8 352.8h1.1v1.1h-1.1zM472.6 301.7h1.2v1.2h-1.2zM484.1 393.1h0.9v0.9h-0.9zM457.7 340.2h1.0v1.0h-1.0zM469.7 257.7h1.1v1.1h-1.1zM446.3 349.7h1.4v1.4h-1.4zM425.6 324.1h1.4v1.4h-1.4zM403.4 372.2h1.4v1.4h-1.4zM480.6 363.4h1.0v1.0h-1.0zM463.0 347.2h1.1v1.1h-1.1zM476.0 382.2h0.7v0.7h-0.7zM420.7 365.3h1.4v1.4h-1.4zM422.2 315.3h0.7v0.7h-0.7zM417.0 333.1h1.2v1.2h-1.2zM439.6 369.4h1.1v1.1h-1.1zM483.8 315.8h0.8v0.8h-0.8zM435.2 342.3h1.4v1.4h-1.4zM487.6 252.0h1.0v1.0h-1.0zM460.1 306.9h1.0v1.0h-1.0zM475.3 368.9h1.2v1.2h-1.2zM470.9 274.8h0.8v0.8h-0.8zM428.5 270.1h0.9v0.9h-0.9zM462.1 336.0h1.0v1.0h-1.0zM441.9 244.8h1.1v1.1h-1.1zM457.2 338.0h1.1v1.1h-1.1zM449.3 316.3h1.3v1.3h-1.3zM471.6 363.3h0.7v0.7h-0.7zM465.7 369.4h1.4v1.4h-1.4zM403.3 373.9h0.9v0.9h-0.9zM461.7 369.9h1.3v1.3h-1.3zM458.9 252.1h0.8v0.8h-0.8zM455.2 372.0h1.1v1.1h-1.1zM450.1 291.7h0.7v0.7h-0.7zM434.0 260.8h0.9v0.9h-0.9zM453.2 343.9h1.1v1.1h-1.1zM467.6 344.6h1.1v1.1h-1.1zM455.3 347.0h0.6v0.6h-0.6zM457.5 297.8h1.0v1.0h-1.0zM428.9 363.2h0.8v0.8h-0.8zM425.6 325.8h0.9v0.9h-0.9zM421.8 371.8h0.8v0.8h-0.8zM418.0 260.3h1.2v1.2h-1.2zM469.6 373.4h0.9v0.9h-0.9zM422.4 316.9h1.0v1.0h-1.0zM467.4 287.9h0.9v0.9h-0.9zM465.7 245.4h1.4v1.4h-1.4zM437.1 259.8h1.0v1.0h-1.0zM421.2 384.8h1.3v1.3h-1.3zM458.4 335.0h1.2v1.2h-1.2zM427.7 261.8h1.1v1.1h-1.1zM469.2 309.4h1.3v1.3h-1.3zM486.2 305.4h1.2v1.2h-1.2zM429.2 360.4h1.5v1.5h-1.5zM427.3 360.5h1.1v1.1h-1.1zM429.6 319.3h0.8v0.8h-0.8zM482.6 381.6h1.2v1.2h-1.2zM466.0 325.1h0.8v0.8h-0.8zM442.7 333.9h1.4v1.4h-1.4zM478.0 385.4h0.8v0.8h-0.8zM414.4 335.4h0.6v0.6h-0.6zM421.4 246.3h0.9v0.9h-0.9zM495.3 346.0h1.5v1.5h-1.5zM451.8 361.0h1.0v1.0h-1.0zM448.5 326.7h0.9v0.9h-0.9zM452.9 364.8h1.1v1.1h-1.1zM462.8 247.9h0.7v0.7h-0.7zM476.4 341.6h1.2v1.2h-1.2zM422.4 356.4h1.2v1.2h-1.2zM440.4 342.6h1.0v1.0h-1.0zM425.8 348.0h0.8v0.8h-0.8zM432.9 329.6h1.1v1.1h-1.1zM452.4 297.2h1.4v1.4h-1.4zM417.1 359.7h1.1v1.1h-1.1zM494.6 358.3h0.8v0.8h-0.8zM439.0 255.2h1.3v1.3h-1.3zM454.7 308.8h0.7v0.7h-0.7zM408.5 265.5h0.7v0.7h-0.7zM444.6 374.2h1.0v1.0h-1.0zM478.9 380.6h1.2v1.2h-1.2zM405.2 330.9h0.7v0.7h-0.7zM437.6 389.6h0.8v0.8h-0.8zM406.8 346.3h1.3v1.3h-1.3zM404.3 247.4h1.0v1.0h-1.0zM427.2 249.2h1.5v1.5h-1.5zM487.6 339.2h1.4v1.4h-1.4zM451.1 242.2h1.0v1.0h-1.0zM441.6 340.9h0.8v0.8h-0.8zM411.4 327.7h0.6v0.6h-0.6zM407.1 335.3h0.9v0.9h-0.9zM427.2 378.9h1.3v1.3h-1.3zM413.6 300.7h0.8v0.8h-0.8zM420.3 324.8h1.4v1.4h-1.4zM430.5 324.6h0.8v0.8h-0.8zM462.2 302.4h0.6v0.6h-0.6zM437.4 346.8h0.8v0.8h-0.8zM451.5 285.7h1.3v1.3h-1.3zM417.3 356.4h0.9v0.9h-0.9zM486.0 315.6h1.1v1.1h-1.1zM457.6 351.5h1.4v1.4h-1.4zM411.2 287.4h1.2v1.2h-1.2zM432.1 377.0h0.6v0.6h-0.6zM479.7 356.9h0.9v0.9h-0.9zM416.3 393.6h1.4v1.4h-1.4zM435.5 323.4h0.7v0.7h-0.7zM458.1 262.8h0.7v0.7h-0.7zM470.8 346.9h0.9v0.9h-0.9zM430.3 333.1h0.7v0.7h-0.7zM416.0 292.2h0.8v0.8h-0.8zM485.2 305.5h1.1v1.1h-1.1zM424.1 359.1h0.7v0.7h-0.7zM440.9 302.5h0.9v0.9h-0.9zM438.0 276.0h0.9v0.9h-0.9zM450.3 333.9h0.9v0.9h-0.9zM478.9 284.3h0.7v0.7h-0.7zM466.6 257.0h0.9v0.9h-0.9zM440.3 273.0h1.3v1.3h-1.3zM441.8 279.6h1.3v1.3h-1.3zM471.0 375.1h0.8v0.8h-0.8zM400.3 292.3h1.0v1.0h-1.0zM461.8 328.8h1.5v1.5h-1.5zM447.0 365.7h1.1v1.1h-1.1zM444.8 358.1h1.1v1.1h-1.1zM428.6 336.5h1.3v1.3h-1.3zM476.3 384.1h1.4v1.4h-1.4zM451.3 298.1h1.0v1.0h-1.0zM445.3 339.6h0.9v0.9h-0.9zM445.7 357.2h0.6v0.6h-0.6zM465.9 250.8h0.8v0.8h-0.8zM426.4 263.7h0.9v0.9h-0.9zM496.1 250.1h1.2v1.2h-1.2zM432.1 367.7h1.1v1.1h-1.1zM433.4 269.2h0.9v0.9h-0.9zM422.1 373.8h1.4v1.4h-1.4zM446.7 325.2h1.2v1.2h-1.2zM487.4 310.9h1.4v1.4h-1.4zM442.7 357.8h1.4v1.4h-1.4zM433.0 339.8h0.8v0.8h-0.8zM417.4 354.2h1.0v1.0h-1.0zM434.2 338.0h1.3v1.3h-1.3zM449.0 297.6h1.0v1.0h-1.0zM445.7 242.2h0.6v0.6h-0.6zM444.1 287.4h1.5v1.5h-1.5zM423.7 317.5h1.2v1.2h-1.2zM408.4 347.6h0.9v0.9h-0.9zM455.2 261.6h0.9v0.9h-0.9zM423.8 339.6h0.7v0.7h-0.7zM413.9 288.3h1.1v1.1h-1.1zM457.2 349.2h1.4v1.4h-1.4zM497.2 289.6h1.1v1.1h-1.1zM459.2 377.5h0.8v0.8h-0.8zM426.8 367.6h0.8v0.8h-0.8zM441.8 274.9h1.4v1.4h-1.4zM422.3 310.4h1.4v1.4h-1.4zM432.1 280.8h1.1v1.1h-1.1zM468.3 339.3h1.1v1.1h-1.1zM440.2 358.7h0.9v0.9h-0.9zM449.4 321.1h1.5v1.5h-1.5zM417.3 253.9h1.5v1.5h-1.5zM435.6 292.0h0.6v0.6h-0.6zM408.3 309.7h1.4v1.4h-1.4zM450.8 347.2h0.7v0.7h-0.7zM490.3 348.2h1.5v1.5h-1.5zM436.9 392.1h1.3v1.3h-1.3zM401.4 363.7h1.2v1.2h-1.2zM463.9 265.5h1.4v1.4h-1.4zM473.2 369.6h1.2v1.2h-1.2zM485.7 249.4h1.1v1.1h-1.1zM463.6 302.7h1.2v1.2h-1.2zM481.6 253.5h1.3v1.3h-1.3zM471.0 262.1h1.3v1.3h-1.3zM440.5 248.7h0.6v0.6h-0.6zM480.3 288.4h0.8v0.8h-0.8zM473.4 340.9h0.8v0.8h-0.8zM478.2 392.1h0.7v0.7h-0.7zM434.3 378.5h1.4v1.4h-1.4zM475.9 391.6h0.9v0.9h-0.9zM419.4 243.0h1.5v1.5h-1.5zM483.4 265.9h1.3v1.3h-1.3zM435.5 303.5h1.4v1.4h-1.4zM419.8 307.4h0.8v0.8h-0.8zM451.9 285.7h1.0v1.0h-1.0zM418.0 334.8h0.6v0.6h-0.6zM409.2 368.3h1.4v1.4h-1.4zM404.6 356.1h1.2v1.2h-1.2zM417.5 246.8h1.3v1.3h-1.3zM442.5 385.3h1.3v1.3h-1.3zM394.3 370.6h1.4v1.4h-1.4zM427.4 344.0h0.8v0.8h-0.8zM446.7 389.0h1.3v1.3h-1.3zM475.4 352.3h1.4v1.4h-1.4zM401.5 376.4h1.2v1.2h-1.2zM441.3 337.6h1.3v1.3h-1.3zM406.3 334.0h1.1v1.1h-1.1zM475.1 306.2h1.2v1.2h-1.2zM488.3 377.5h1.1v1.1h-1.1zM456.1 350.5h1.3v1.3h-1.3zM482.3 380.0h1.1v1.1h-1.1zM452.8 374.5h1.2v1.2h-1.2zM416.9 269.6h0.9v0.9h-0.9zM420.3 388.5h0.7v0.7h-0.7zM441.5 264.5h1.2v1.2h-1.2zM403.4 311.8h1.4v1.4h-1.4zM486.7 250.4h0.8v0.8h-0.8zM445.2 280.1h1.3v1.3h-1.3zM432.3 277.8h0.6v0.6h-0.6zM437.3 349.2h1.4v1.4h-1.4zM458.0 381.3h1.1v1.1h-1.1zM444.4 362.9h1.2v1.2h-1.2zM405.5 260.7h1.3v1.3h-1.3zM414.2 258.8h1.1v1.1h-1.1zM429.6 316.1h1.2v1.2h-1.2zM416.0 285.4h1.4v1.4h-1.4zM433.2 320.1h0.6v0.6h-0.6zM438.3 328.7h0.9v0.9h-0.9zM403.4 347.2h1.2v1.2h-1.2zM418.8 270.5h1.1v1.1h-1.1zM428.3 319.8h0.9v0.9h-0.9zM407.5 251.9h1.2v1.2h-1.2zM426.2 298.1h0.9v0.9h-0.9zM456.9 382.7h0.6v0.6h-0.6zM461.5 308.3h0.9v0.9h-0.9zM477.2 259.7h1.1v1.1h-1.1zM455.8 253.3h0.9v0.9h-0.9zM477.4 330.6h1.0v1.0h-1.0zM481.7 306.3h0.9v0.9h-0.9zM486.0 289.2h1.2v1.2h-1.2zM495.5 329.2h0.9v0.9h-0.9zM435.3 268.7h1.1v1.1h-1.1zM430.2 280.9h0.6v0.6h-0.6zM459.3 358.9h1.5v1.5h-1.5zM434.4 347.2h0.8v0.8h-0.8zM441.3 338.1h1.5v1.5h-1.5zM429.2 319.7h0.6v0.6h-0.6zM476.1 252.1h1.2v1.2h-1.2zM418.6 351.6h0.6v0.6h-0.6zM448.2 355.6h1.0v1.0h-1.0zM438.2 379.7h1.4v1.4h-1.4zM488.6 249.8h1.2v1.2h-1.2zM436.0 376.0h1.1v1.1h-1.1zM394.8 341.5h1.2v1.2h-1.2zM465.1 329.9h1.0v1.0h-1.0zM453.1 360.5h1.0v1.0h-1.0zM416.2 308.3h0.9v0.9h-0.9zM490.9 344.7h1.5v1.5h-1.5zM418.3 269.0h1.1v1.1h-1.1zM415.4 366.1h1.1v1.1h-1.1zM467.0 389.5h1.3v1.3h-1.3zM445.8 260.9h1.0v1.0h-1.0zM403.3 332.1h1.1v1.1h-1.1zM451.9 323.2h1.2v1.2h-1.2zM437.0 361.6h1.5v1.5h-1.5zM424.3 297.1h0.9v0.9h-0.9zM484.8 296.3h0.7v0.7h-0.7zM419.9 360.2h1.2v1.2h-1.2zM439.5 345.8h1.2v1.2h-1.2zM459.8 247.9h1.2v1.2h-1.2zM449.5 305.7h0.7v0.7h-0.7zM441.6 274.0h0.7v0.7h-0.7zM472.7 379.9h1.1v1.1h-1.1zM436.7 249.3h1.0v1.0h-1.0zM457.7 330.5h1.3v1.3h-1.3zM433.5 268.3h0.7v0.7h-0.7zM404.1 264.6h1.4v1.4h-1.4zM418.7 259.7h0.8v0.8h-0.8zM443.3 263.4h1.3v1.3h-1.3zM401.9 376.3h1.3v1.3h-1.3zM396.4 314.2h0.9v0.9h-0.9zM448.5 246.6h0.6v0.6h-0.6zM466.0 335.5h1.0v1.0h-1.0zM433.5 305.9h1.2v1.2h-1.2zM443.4 305.4h0.9v0.9h-0.9zM414.6 296.2h1.1v1.1h-1.1zM435.0 294.2h1.3v1.3h-1.3zM467.2 274.7h0.9v0.9h-0.9zM450.2 322.3h1.3v1.3h-1.3zM433.3 336.1h0.7v0.7h-0.7zM459.2 319.4h1.1v1.1h-1.1zM435.2 283.0h1.5v1.5h-1.5zM469.3 369.1h0.7v0.7h-0.7zM442.7 268.9h1.2v1.2h-1.2zM460.5 285.7h0.8v0.8h-0.8zM463.4 254.0h0.8v0.8h-0.8zM473.0 262.6h1.3v1.3h-1.3zM433.6 374.1h1.0v1.0h-1.0zM481.2 363.3h1.4v1.4h-1.4zM442.5 323.0h1.0v1.0h-1.0zM446.4 354.9h1.0v1.0h-1.0zM446.8 296.6h1.3v1.3h-1.3zM447.6 346.8h1.3v1.3h-1.3zM455.7 257.6h1.3v1.3h-1.3zM465.0 336.1h0.8v0.8h-0.8zM483.1 321.6h0.8v0.8h-0.8zM483.4 255.7h1.0v1.0h-1.0zM462.0 357.4h1.4v1.4h-1.4zM469.0 334.9h1.0v1.0h-1.0zM435.1 310.8h1.3v1.3h-1.3zM480.9 376.4h1.5v1.5h-1.5zM453.8 344.3h1.5v1.5h-1.5zM435.7 330.2h1.4v1.4h-1.4zM425.3 295.4h0.8v0.8h-0.8zM441.1 377.4h1.5v1.5h-1.5zM479.5 354.3h1.1v1.1h-1.1zM435.8 258.9h1.5v1.5h-1.5zM424.6 287.6h1.4v1.4h-1.4zM485.2 251.5h1.2v1.2h-1.2zM392.4 380.9h0.8v0.8h-0.8zM435.8 286.6h1.3v1.3h-1.3zM424.2 372.3h1.1v1.1h-1.1zM405.5 377.8h1.0v1.0h-1.0zM397.1 352.7h1.2v1.2h-1.2zM453.8 293.4h0.6v0.6h-0.6zM486.8 262.9h1.1v1.1h-1.1zM413.7 353.9h1.1v1.1h-1.1zM417.7 386.5h1.2v1.2h-1.2zM406.1 329.2h1.3v1.3h-1.3zM424.4 307.6h1.0v1.0h-1.0zM464.4 367.4h1.5v1.5h-1.5zM451.3 381.8h0.6v0.6h-0.6zM457.2 303.6h1.2v1.2h-1.2zM484.2 316.2h0.7v0.7h-0.7zM438.8 340.2h1.3v1.3h-1.3zM477.0 356.5h1.5v1.5h-1.5zM470.7 392.8h1.4v1.4h-1.4zM436.8 276.5h0.8v0.8h-0.8zM468.1 272.6h1.3v1.3h-1.3zM467.0 370.0h1.3v1.3h-1.3zM462.9 252.0h0.8v0.8h-0.8zM468.7 290.9h1.4v1.4h-1.4zM473.1 321.3h0.7v0.7h-0.7zM494.7 255.2h1.3v1.3h-1.3zM412.4 330.8h0.6v0.6h-0.6zM441.5 263.9h0.7v0.7h-0.7zM440.1 356.4h1.1v1.1h-1.1zM407.5 330.8h1.0v1.0h-1.0zM459.4 311.5h1.1v1.1h-1.1zM426.0 376.9h1.1v1.1h-1.1zM466.6 379.0h1.0v1.0h-1.0zM409.7 268.9h1.4v1.4h-1.4zM414.6 336.0h0.7v0.7h-0.7zM446.1 248.2h1.3v1.3h-1.3zM440.8 278.5h0.9v0.9h-0.9zM452.8 248.0h0.9v0.9h-0.9zM448.7 278.3h1.1v1.1h-1.1zM423.1 245.8h0.8v0.8h-0.8zM469.7 372.3h1.5v1.5h-1.5zM434.6 286.4h0.6v0.6h-0.6zM457.3 280.4h1.1v1.1h-1.1zM403.7 375.5h0.8v0.8h-0.8zM430.1 355.0h0.6v0.6h-0.6zM483.5 254.6h0.6v0.6h-0.6zM465.5 251.4h1.3v1.3h-1.3zM444.4 345.6h1.3v1.3h-1.3zM490.1 333.0h1.1v1.1h-1.1zM403.5 356.6h0.9v0.9h-0.9zM411.2 370.0h1.1v1.1h-1.1zM415.8 311.8h1.3v1.3h-1.3zM448.4 269.9h0.9v0.9h-0.9zM453.4 362.7h0.7v0.7h-0.7zM463.5 324.6h1.1v1.1h-1.1zM458.3 324.4h0.8v0.8h-0.8zM483.1 264.2h0.8v0.8h-0.8zM428.1 288.3h1.4v1.4h-1.4zM436.3 284.0h1.2v1.2h-1.2zM426.1 388.2h1.4v1.4h-1.4zM465.2 359.9h1.1v1.1h-1.1zM484.5 339.7h1.3v1.3h-1.3zM443.5 339.1h0.8v0.8h-0.8zM433.9 269.2h1.2v1.2h-1.2zM450.3 283.0h0.7v0.7h-0.7zM462.9 311.4h1.0v1.0h-1.0zM402.0 337.8h0.9v0.9h-0.9zM436.8 291.0h1.2v1.2h-1.2zM465.5 327.6h0.7v0.7h-0.7zM425.0 367.1h1.2v1.2h-1.2zM488.8 256.0h0.8v0.8h-0.8zM431.7 302.0h0.8v0.8h-0.8zM460.1 323.1h1.2v1.2h-1.2zM499.4 325.0h1.4v1.4h-1.4zM427.5 323.8h0.6v0.6h-0.6zM408.7 393.2h1.3v1.3h-1.3zM452.7 285.7h1.3v1.3h-1.3zM420.2 263.0h1.3v1.3h-1.3zM489.5 294.0h0.6v0.6h-0.6zM415.7 337.4h1.0v1.0h-1.0zM469.2 351.8h1.4v1.4h-1.4zM466.6 299.6h1.3v1.3h-1.3zM441.3 297.9h0.8v0.8h-0.8zM460.4 392.3h0.7v0.7h-0.7zM469.6 344.3h0.7v0.7h-0.7zM445.9 262.5h1.2v1.2h-1.2zM498.6 348.7h1.3v1.3h-1.3zM478.5 372.8h1.0v1.0h-1.0zM414.4 369.2h1.0v1.0h-1.0zM464.3 381.9h1.1v1.1h-1.1zM471.4 337.1h1.1v1.1h-1.1zM433.1 293.4h0.7v0.7h-0.7zM437.0 288.5h1.2v1.2h-1.2zM461.6 248.0h1.1v1.1h-1.1zM397.2 277.1h1.0v1.0h-1.0zM451.6 279.3h1.0v1.0h-1.0zM458.8 281.2h1.3v1.3h-1.3zM491.1 283.7h1.2v1.2h-1.2zM489.3 383.0h1.2v1.2h-1.2zM414.8 372.9h1.2v1.2h-1.2zM428.2 248.3h1.1v1.1h-1.1zM465.7 375.2h1.4v1.4h-1.4zM423.6 317.4h0.7v0.7h-0.7zM464.4 366.8h0.7v0.7h-0.7zM442.4 365.7h1.0v1.0h-1.0zM465.8 354.3h1.3v1.3h-1.3zM396.5 257.4h0.8v0.8h-0.8zM448.3 312.9h0.7v0.7h-0.7zM409.1 341.6h1.2v1.2h-1.2zM414.4 302.5h0.6v0.6h-0.6zM434.0 271.0h1.3v1.3h-1.3zM486.9 323.6h1.5v1.5h-1.5zM441.2 273.5h1.2v1.2h-1.2zM410.6 388.7h0.9v0.9h-0.9zM426.8 331.6h1.2v1.2h-1.2zM461.5 365.8h0.8v0.8h-0.8zM456.0 392.0h0.7v0.7h-0.7zM469.8 281.7h1.5v1.5h-1.5zM406.8 265.8h1.4v1.4h-1.4zM418.4 382.3h0.7v0.7h-0.7zM464.7 258.8h0.6v0.6h-0.6zM431.4 368.1h0.9v0.9h-0.9zM426.2 251.5h1.0v1.0h-1.0zM456.6 262.2h0.9v0.9h-0.9zM494.8 271.9h0.9v0.9h-0.9zM426.5 290.1h1.3v1.3h-1.3zM418.8 297.9h1.2v1.2h-1.2zM415.8 322.1h1.4v1.4h-1.4zM417.3 265.4h1.0v1.0h-1.0zM447.7 317.6h1.1v1.1h-1.1zM410.1 268.7h1.1v1.1h-1.1zM441.3 333.6h0.6v0.6h-0.6zM448.7 274.9h0.9v0.9h-0.9zM412.4 380.1h1.5v1.5h-1.5zM489.8 275.9h1.0v1.0h-1.0zM462.0 294.7h1.4v1.4h-1.4zM426.2 348.1h1.4v1.4h-1.4zM434.8 344.2h1.4v1.4h-1.4zM475.4 288.5h1.0v1.0h-1.0zM408.8 299.7h1.1v1.1h-1.1zM498.1 270.1h0.7v0.7h-0.7zM434.1 286.2h1.2v1.2h-1.2zM432.1 290.8h1.4v1.4h-1.4zM423.8 297.7h1.4v1.4h-1.4zM430.3 371.6h0.6v0.6h-0.6zM476.2 284.7h1.3v1.3h-1.3zM444.3 273.8h1.1v1.1h-1.1zM401.8 360.2h0.9v0.9h-0.9zM466.4 260.8h0.7v0.7h-0.7zM417.3 277.6h1.4v1.4h-1.4zM492.9 344.8h1.4v1.4h-1.4zM424.1 294.6h0.9v0.9h-0.9zM436.4 259.8h1.3v1.3h-1.3zM470.1 364.6h0.7v0.7h-0.7zM468.2 258.4h0.9v0.9h-0.9zM479.3 346.3h0.7v0.7h-0.7zM438.5 298.7h1.1v1.1h-1.1zM484.9 250.0h1.3v1.3h-1.3zM492.7 377.7h1.4v1.4h-1.4zM481.5 348.4h1.5v1.5h-1.5zM483.2 311.7h1.2v1.2h-1.2zM401.2 264.6h1.2v1.2h-1.2zM452.3 242.8h0.8v0.8h-0.8zM427.4 337.1h1.0v1.0h-1.0zM425.8 339.9h0.7v0.7h-0.7zM486.5 360.2h1.0v1.0h-1.0zM439.2 256.6h1.2v1.2h-1.2zM398.7 294.3h1.2v1.2h-1.2zM422.6 287.8h0.9v0.9h-0.9zM412.2 299.7h1.4v1.4h-1.4zM437.7 281.7h0.8v0.8h-0.8zM456.2 278.4h0.7v0.7h-0.7zM414.4 355.0h0.8v0.8h-0.8zM432.3 354.8h1.3v1.3h-1.3zM475.4 264.5h1.5v1.5h-1.5zM433.9 362.4h1.3v1.3h-1.3zM428.3 249.2h1.2v1.2h-1.2zM452.4 328.0h1.5v1.5h-1.5zM481.0 252.0h1.2v1.2h-1.2zM413.4 365.5h1.5v1.5h-1.5zM491.0 316.6h0.9v0.9h-0.9zM460.8 368.4h0.6v0.6h-0.6zM414.9 262.6h1.1v1.1h-1.1zM466.8 373.8h1.5v1.5h-1.5zM484.0 304.6h0.8v0.8h-0.8zM446.3 307.6h0.7v0.7h-0.7zM416.4 380.5h1.4v1.4h-1.4zM461.2 286.6h1.0v1.0h-1.0zM463.4 260.9h1.5v1.5h-1.5zM459.1 244.6h0.7v0.7h-0.7zM444.2 315.5h1.2v1.2h-1.2zM406.1 372.2h0.7v0.7h-0.7zM403.7 327.9h1.3v1.3h-1.3zM476.1 291.8h0.7v0.7h-0.7zM449.1 290.7h0.8v0.8h-0.8zM432.1 377.4h1.4v1.4h-1.4zM461.5 260.5h1.5v1.5h-1.5zM431.1 305.6h0.6v0.6h-0.6zM414.1 302.3h1.1v1.1h-1.1zM434.9 282.9h1.0v1.0h-1.0zM471.3 376.9h0.7v0.7h-0.7zM434.2 345.9h1.4v1.4h-1.4zM481.7 261.0h0.7v0.7h-0.7zM426.0 321.4h0.8v0.8h-0.8zM446.4 335.1h1.4v1.4h-1.4zM432.0 287.4h0.6v0.6h-0.6zM432.3 378.9h1.0v1.0h-1.0zM421.0 286.1h1.3v1.3h-1.3zM429.0 261.9h1.2v1.2h-1.2zM446.3 266.5h1.1v1.1h-1.1zM455.0 318.3h0.7v0.7h-0.7zM404.2 251.0h1.4v1.4h-1.4zM395.8 357.6h1.2v1.2h-1.2zM482.2 376.6h1.1v1.1h-1.1zM415.0 259.4h0.6v0.6h-0.6zM467.6 358.0h1.3v1.3h-1.3zM402.7 285.9h0.9v0.9h-0.9zM434.2 266.6h0.7v0.7h-0.7zM412.6 249.4h1.1v1.1h-1.1zM448.8 242.2h0.6v0.6h-0.6zM477.4 361.0h0.8v0.8h-0.8zM391.1 312.8h0.6v0.6h-0.6zM417.6 355.9h1.4v1.4h-1.4zM455.7 348.3h0.7v0.7h-0.7zM478.9 295.4h1.2v1.2h-1.2zM473.8 321.1h1.2v1.2h-1.2z"/><path fill="#cfc2a0" d="M446.9 331.3h1.2v1.2h-1.2zM420.2 255.2h1.3v1.3h-1.3zM476.2 305.7h1.0v1.0h-1.0zM424.1 376.5h1.5v1.5h-1.5zM412.8 244.5h0.8v0.8h-0.8zM496.4 284.1h1.0v1.0h-1.0zM478.7 379.7h0.7v0.7h-0.7zM429.0 254.6h1.3v1.3h-1.3zM468.6 375.6h1.3v1.3h-1.3zM493.8 256.5h0.7v0.7h-0.7zM403.0 354.9h0.7v0.7h-0.7zM426.9 323.9h1.3v1.3h-1.3zM395.1 383.4h1.5v1.5h-1.5zM457.6 259.5h0.7v0.7h-0.7zM464.8 311.2h0.9v0.9h-0.9zM441.7 291.3h1.1v1.1h-1.1zM399.4 367.9h1.1v1.1h-1.1zM479.2 354.3h1.1v1.1h-1.1zM483.7 327.5h1.4v1.4h-1.4zM399.5 338.4h0.8v0.8h-0.8zM451.6 371.7h1.4v1.4h-1.4zM491.4 310.4h1.1v1.1h-1.1zM439.3 247.7h0.7v0.7h-0.7zM482.9 341.4h1.2v1.2h-1.2zM453.0 352.0h0.7v0.7h-0.7zM405.6 273.2h1.0v1.0h-1.0zM412.2 254.7h1.2v1.2h-1.2zM426.9 383.2h1.4v1.4h-1.4zM461.7 358.0h1.0v1.0h-1.0zM425.1 291.3h1.4v1.4h-1.4zM437.1 375.6h1.0v1.0h-1.0zM476.4 259.0h1.1v1.1h-1.1zM448.9 255.9h1.0v1.0h-1.0zM419.1 363.5h0.7v0.7h-0.7zM460.3 336.4h0.7v0.7h-0.7zM420.0 283.2h0.9v0.9h-0.9zM446.5 328.3h1.0v1.0h-1.0zM442.3 369.2h1.1v1.1h-1.1zM454.1 320.3h1.0v1.0h-1.0zM418.7 336.7h1.5v1.5h-1.5zM435.0 373.9h0.7v0.7h-0.7zM472.5 296.8h0.8v0.8h-0.8zM441.0 383.9h1.1v1.1h-1.1zM423.5 274.6h0.9v0.9h-0.9zM430.3 386.5h1.3v1.3h-1.3zM400.1 329.0h1.5v1.5h-1.5zM474.2 299.4h1.3v1.3h-1.3zM428.8 266.9h1.0v1.0h-1.0zM468.1 277.5h1.1v1.1h-1.1zM455.1 305.4h0.8v0.8h-0.8zM461.6 338.3h1.1v1.1h-1.1zM445.7 382.2h1.2v1.2h-1.2zM464.2 302.9h0.7v0.7h-0.7zM452.2 385.8h0.7v0.7h-0.7zM407.9 281.5h0.9v0.9h-0.9zM459.3 259.9h0.9v0.9h-0.9zM476.7 292.7h0.7v0.7h-0.7zM428.1 387.7h0.8v0.8h-0.8zM441.1 307.7h0.8v0.8h-0.8zM453.9 303.2h1.3v1.3h-1.3zM459.3 273.6h1.5v1.5h-1.5zM469.3 310.2h0.8v0.8h-0.8zM463.8 345.0h1.4v1.4h-1.4zM428.3 350.2h0.9v0.9h-0.9zM437.8 255.7h0.9v0.9h-0.9zM465.7 256.9h1.1v1.1h-1.1zM447.5 324.0h0.7v0.7h-0.7zM485.7 314.8h1.2v1.2h-1.2zM467.5 318.1h0.9v0.9h-0.9zM467.5 355.2h1.1v1.1h-1.1zM470.1 356.1h1.1v1.1h-1.1zM418.3 350.7h1.2v1.2h-1.2zM486.8 247.1h0.8v0.8h-0.8zM415.8 269.4h0.8v0.8h-0.8zM461.7 267.6h1.0v1.0h-1.0zM450.7 384.9h1.3v1.3h-1.3zM442.5 319.1h1.2v1.2h-1.2zM458.1 305.8h1.4v1.4h-1.4zM482.8 380.5h0.9v0.9h-0.9zM449.5 337.7h0.8v0.8h-0.8zM422.6 306.5h0.6v0.6h-0.6zM484.7 364.1h0.7v0.7h-0.7zM442.2 325.3h0.6v0.6h-0.6zM484.9 323.7h0.6v0.6h-0.6zM480.3 302.6h0.7v0.7h-0.7zM474.9 265.9h1.1v1.1h-1.1zM443.7 293.4h1.4v1.4h-1.4zM415.6 279.2h1.1v1.1h-1.1zM483.8 248.6h0.6v0.6h-0.6zM431.2 339.2h1.3v1.3h-1.3zM479.9 312.3h1.0v1.0h-1.0zM482.1 350.8h1.4v1.4h-1.4zM467.1 286.6h0.9v0.9h-0.9zM445.6 258.2h0.6v0.6h-0.6zM434.0 362.5h1.1v1.1h-1.1zM390.5 261.2h1.0v1.0h-1.0zM443.8 273.7h1.0v1.0h-1.0zM445.5 393.3h1.0v1.0h-1.0zM465.6 349.0h1.3v1.3h-1.3zM500.1 366.3h0.9v0.9h-0.9zM422.3 266.2h0.8v0.8h-0.8zM429.2 377.0h1.2v1.2h-1.2zM469.2 296.8h1.0v1.0h-1.0zM457.7 356.8h0.7v0.7h-0.7zM436.7 338.7h1.0v1.0h-1.0zM458.6 325.5h1.4v1.4h-1.4zM463.6 331.4h1.3v1.3h-1.3zM442.7 312.9h0.7v0.7h-0.7zM418.3 260.0h1.3v1.3h-1.3zM443.5 268.1h1.5v1.5h-1.5zM449.7 243.2h1.0v1.0h-1.0zM493.9 263.8h1.5v1.5h-1.5zM491.8 328.0h1.1v1.1h-1.1zM434.7 351.6h1.3v1.3h-1.3zM452.6 385.2h1.3v1.3h-1.3zM498.2 336.8h1.0v1.0h-1.0zM433.7 292.0h1.2v1.2h-1.2zM458.6 318.8h0.8v0.8h-0.8zM431.4 251.1h1.3v1.3h-1.3zM449.4 256.2h1.1v1.1h-1.1zM477.5 350.4h1.5v1.5h-1.5zM478.9 260.3h1.0v1.0h-1.0zM392.1 348.5h1.5v1.5h-1.5zM488.4 244.4h1.5v1.5h-1.5zM478.1 348.7h1.1v1.1h-1.1zM462.2 245.0h1.4v1.4h-1.4zM456.2 304.9h1.0v1.0h-1.0zM416.9 354.8h1.2v1.2h-1.2zM452.2 347.0h1.3v1.3h-1.3zM404.2 298.6h0.6v0.6h-0.6zM459.2 319.1h0.8v0.8h-0.8zM445.2 325.5h1.4v1.4h-1.4zM450.1 323.6h1.3v1.3h-1.3zM461.6 259.1h0.6v0.6h-0.6zM480.2 325.9h0.7v0.7h-0.7zM449.1 300.0h1.4v1.4h-1.4zM475.4 285.8h1.4v1.4h-1.4zM443.0 275.2h1.3v1.3h-1.3zM447.1 344.2h1.3v1.3h-1.3zM428.4 320.4h1.3v1.3h-1.3zM485.9 272.9h0.9v0.9h-0.9zM458.6 392.5h1.3v1.3h-1.3zM446.2 260.3h0.8v0.8h-0.8zM479.0 383.2h1.0v1.0h-1.0zM458.5 334.1h1.2v1.2h-1.2zM445.6 357.6h1.2v1.2h-1.2zM485.9 282.7h0.9v0.9h-0.9zM412.8 316.7h1.3v1.3h-1.3zM466.1 335.9h1.4v1.4h-1.4zM471.8 317.4h1.3v1.3h-1.3zM431.0 333.7h0.8v0.8h-0.8zM473.7 331.8h0.9v0.9h-0.9zM429.3 262.6h1.1v1.1h-1.1zM443.0 356.9h0.9v0.9h-0.9zM416.0 314.1h0.9v0.9h-0.9zM486.6 303.4h1.1v1.1h-1.1zM436.1 244.3h1.4v1.4h-1.4zM461.5 324.3h1.2v1.2h-1.2zM467.4 328.1h1.4v1.4h-1.4zM486.4 324.3h0.9v0.9h-0.9zM417.6 369.7h1.3v1.3h-1.3zM463.9 280.8h0.9v0.9h-0.9zM461.0 251.2h1.3v1.3h-1.3zM457.3 312.5h0.8v0.8h-0.8zM416.2 315.3h1.1v1.1h-1.1zM400.0 339.2h0.8v0.8h-0.8zM425.7 373.1h0.8v0.8h-0.8zM442.3 360.5h0.8v0.8h-0.8zM422.8 333.0h1.3v1.3h-1.3zM462.5 387.3h1.1v1.1h-1.1zM454.4 242.4h1.3v1.3h-1.3zM481.8 259.8h0.8v0.8h-0.8zM425.5 293.6h1.5v1.5h-1.5zM474.7 360.3h0.7v0.7h-0.7zM448.1 390.8h1.2v1.2h-1.2zM466.2 375.3h1.2v1.2h-1.2zM446.0 288.0h0.6v0.6h-0.6zM436.1 391.5h1.2v1.2h-1.2zM429.1 335.2h1.3v1.3h-1.3zM444.7 260.8h1.1v1.1h-1.1zM453.9 359.0h0.7v0.7h-0.7zM493.4 294.2h0.8v0.8h-0.8zM460.8 383.8h1.1v1.1h-1.1zM469.4 343.4h0.9v0.9h-0.9zM429.3 263.2h0.9v0.9h-0.9zM436.6 362.5h1.2v1.2h-1.2zM453.5 371.7h0.9v0.9h-0.9zM417.4 250.9h0.6v0.6h-0.6zM416.2 359.3h1.0v1.0h-1.0zM418.8 312.7h1.1v1.1h-1.1zM456.5 359.7h1.4v1.4h-1.4zM395.8 342.6h0.8v0.8h-0.8zM407.3 246.7h1.3v1.3h-1.3zM461.4 380.6h1.5v1.5h-1.5zM471.8 312.9h1.0v1.0h-1.0zM414.3 247.8h1.2v1.2h-1.2zM476.1 382.8h0.7v0.7h-0.7zM493.6 287.5h1.0v1.0h-1.0zM483.8 318.5h1.5v1.5h-1.5zM471.7 285.2h0.9v0.9h-0.9zM486.4 289.5h0.8v0.8h-0.8zM413.9 338.2h1.0v1.0h-1.0zM450.1 316.6h1.2v1.2h-1.2zM481.3 277.9h0.9v0.9h-0.9zM494.3 308.1h1.5v1.5h-1.5zM498.5 257.9h1.3v1.3h-1.3zM453.5 321.9h1.3v1.3h-1.3zM473.3 280.3h1.1v1.1h-1.1zM439.3 375.4h0.7v0.7h-0.7zM470.0 292.7h1.1v1.1h-1.1zM452.8 330.6h1.0v1.0h-1.0zM439.9 382.4h1.0v1.0h-1.0zM491.6 260.4h1.3v1.3h-1.3zM427.3 292.7h1.1v1.1h-1.1zM476.3 339.4h0.9v0.9h-0.9zM411.1 342.4h0.9v0.9h-0.9zM428.8 322.4h1.1v1.1h-1.1zM467.8 375.1h1.0v1.0h-1.0zM452.0 257.9h1.1v1.1h-1.1zM424.8 354.1h1.2v1.2h-1.2zM489.2 362.9h1.4v1.4h-1.4zM443.9 276.2h1.0v1.0h-1.0zM486.9 325.6h1.3v1.3h-1.3zM431.5 297.1h1.2v1.2h-1.2zM495.6 285.8h1.0v1.0h-1.0zM488.3 352.1h0.8v0.8h-0.8zM436.7 386.4h1.5v1.5h-1.5zM461.9 388.2h0.7v0.7h-0.7zM414.0 296.6h0.8v0.8h-0.8zM405.9 268.4h1.3v1.3h-1.3zM470.4 369.5h0.9v0.9h-0.9zM397.8 334.4h1.0v1.0h-1.0zM438.7 287.2h0.9v0.9h-0.9zM435.8 383.7h1.5v1.5h-1.5zM470.3 302.0h0.8v0.8h-0.8zM403.4 281.7h0.8v0.8h-0.8zM417.8 279.8h0.8v0.8h-0.8zM417.8 371.6h1.2v1.2h-1.2zM436.4 376.4h0.9v0.9h-0.9zM406.0 317.0h1.1v1.1h-1.1zM422.7 270.1h1.3v1.3h-1.3zM487.2 307.3h1.4v1.4h-1.4zM436.5 278.9h0.7v0.7h-0.7zM447.0 339.5h0.9v0.9h-0.9zM479.6 243.0h1.2v1.2h-1.2zM446.7 393.9h0.7v0.7h-0.7zM440.7 343.3h1.4v1.4h-1.4zM393.8 303.7h0.8v0.8h-0.8zM450.1 317.8h1.4v1.4h-1.4zM440.5 321.0h1.3v1.3h-1.3zM430.0 347.6h0.9v0.9h-0.9zM411.7 382.7h1.4v1.4h-1.4zM459.3 286.1h1.4v1.4h-1.4zM485.1 329.0h0.9v0.9h-0.9zM454.4 263.9h0.6v0.6h-0.6zM464.3 281.9h1.1v1.1h-1.1zM406.9 362.3h1.4v1.4h-1.4zM423.3 256.0h1.2v1.2h-1.2zM433.8 375.3h0.8v0.8h-0.8zM488.4 290.3h0.8v0.8h-0.8zM455.1 361.1h1.4v1.4h-1.4zM442.9 390.8h1.4v1.4h-1.4zM481.8 299.9h0.7v0.7h-0.7zM464.8 353.0h1.0v1.0h-1.0zM453.9 341.7h1.2v1.2h-1.2zM451.0 354.1h1.3v1.3h-1.3zM468.2 382.0h0.6v0.6h-0.6zM434.1 323.1h0.9v0.9h-0.9zM458.8 349.6h0.8v0.8h-0.8zM408.3 335.2h1.5v1.5h-1.5zM453.1 247.0h1.1v1.1h-1.1zM461.1 356.4h0.9v0.9h-0.9zM460.2 286.7h1.5v1.5h-1.5zM448.0 349.2h1.4v1.4h-1.4zM441.4 374.5h0.9v0.9h-0.9zM390.6 355.4h1.1v1.1h-1.1zM422.8 318.2h0.8v0.8h-0.8zM440.3 278.1h1.0v1.0h-1.0zM461.4 279.9h1.2v1.2h-1.2zM447.7 314.6h0.9v0.9h-0.9zM434.3 350.8h0.9v0.9h-0.9zM406.8 255.4h1.4v1.4h-1.4zM395.7 294.3h1.2v1.2h-1.2zM441.5 342.0h0.9v0.9h-0.9zM469.0 256.5h1.5v1.5h-1.5zM392.2 270.9h0.7v0.7h-0.7zM439.1 362.2h0.9v0.9h-0.9zM424.7 294.4h1.1v1.1h-1.1zM426.1 292.9h0.7v0.7h-0.7zM416.0 274.3h1.3v1.3h-1.3zM471.0 252.5h0.8v0.8h-0.8zM466.5 248.9h0.6v0.6h-0.6zM438.4 266.1h1.1v1.1h-1.1zM457.4 358.9h1.2v1.2h-1.2zM403.4 272.4h1.0v1.0h-1.0zM430.3 326.1h1.3v1.3h-1.3zM445.0 278.5h1.0v1.0h-1.0zM412.6 254.6h0.9v0.9h-0.9zM425.1 326.2h0.9v0.9h-0.9zM471.5 388.2h1.4v1.4h-1.4zM500.1 332.0h0.7v0.7h-0.7zM451.4 386.8h0.7v0.7h-0.7zM469.0 367.3h1.4v1.4h-1.4zM490.9 388.4h0.6v0.6h-0.6zM438.5 354.8h1.5v1.5h-1.5zM434.5 274.4h0.9v0.9h-0.9zM477.2 334.5h1.3v1.3h-1.3zM486.4 362.7h1.2v1.2h-1.2zM461.2 282.1h0.7v0.7h-0.7zM427.7 351.2h1.3v1.3h-1.3zM472.8 359.2h1.2v1.2h-1.2zM442.1 370.9h1.2v1.2h-1.2zM410.3 352.4h0.6v0.6h-0.6zM392.1 325.1h1.4v1.4h-1.4zM436.8 288.0h0.8v0.8h-0.8zM473.8 280.9h1.2v1.2h-1.2zM442.5 250.9h1.2v1.2h-1.2zM480.5 368.4h1.3v1.3h-1.3zM462.4 358.0h1.0v1.0h-1.0zM417.7 304.7h1.2v1.2h-1.2zM488.9 311.5h1.3v1.3h-1.3zM473.2 278.5h1.0v1.0h-1.0zM425.6 298.8h1.1v1.1h-1.1zM434.5 289.4h1.4v1.4h-1.4zM430.4 271.2h1.5v1.5h-1.5zM449.0 267.9h1.2v1.2h-1.2zM441.0 337.1h1.2v1.2h-1.2zM466.5 302.6h1.0v1.0h-1.0zM426.2 247.3h0.8v0.8h-0.8zM422.9 376.3h1.3v1.3h-1.3zM445.2 255.9h1.2v1.2h-1.2zM454.7 280.9h0.8v0.8h-0.8zM415.5 286.9h0.6v0.6h-0.6zM481.6 380.1h0.8v0.8h-0.8zM472.3 280.6h1.3v1.3h-1.3zM442.8 353.0h0.6v0.6h-0.6zM444.5 310.9h1.4v1.4h-1.4zM451.7 256.7h0.9v0.9h-0.9zM457.9 359.1h1.4v1.4h-1.4zM451.0 340.1h1.2v1.2h-1.2zM480.2 266.7h0.9v0.9h-0.9zM438.4 270.1h1.5v1.5h-1.5zM419.8 246.2h1.2v1.2h-1.2zM470.9 266.2h0.7v0.7h-0.7zM409.7 356.1h1.2v1.2h-1.2zM411.4 371.6h0.7v0.7h-0.7zM428.0 371.8h0.6v0.6h-0.6zM417.7 288.9h1.2v1.2h-1.2zM451.7 258.6h1.2v1.2h-1.2zM442.0 297.2h1.0v1.0h-1.0zM426.7 311.7h1.3v1.3h-1.3zM439.2 246.8h1.0v1.0h-1.0zM445.4 359.8h0.9v0.9h-0.9zM424.4 242.9h1.4v1.4h-1.4zM474.0 356.9h1.5v1.5h-1.5zM433.5 280.5h0.7v0.7h-0.7zM485.5 341.3h1.4v1.4h-1.4zM457.3 301.2h1.3v1.3h-1.3zM438.2 348.0h1.3v1.3h-1.3zM469.4 289.5h1.0v1.0h-1.0zM440.1 309.0h1.2v1.2h-1.2zM465.8 258.4h1.2v1.2h-1.2zM433.9 339.6h0.7v0.7h-0.7zM472.2 391.3h1.2v1.2h-1.2zM468.8 282.6h1.1v1.1h-1.1zM442.3 264.2h1.2v1.2h-1.2zM434.9 354.6h1.0v1.0h-1.0zM415.2 262.9h0.9v0.9h-0.9zM401.3 328.1h1.0v1.0h-1.0zM450.9 285.6h0.7v0.7h-0.7zM466.1 246.1h1.2v1.2h-1.2zM459.4 269.1h0.9v0.9h-0.9zM421.3 257.8h1.4v1.4h-1.4zM415.7 246.6h1.2v1.2h-1.2zM442.0 249.9h1.0v1.0h-1.0zM461.8 313.3h0.9v0.9h-0.9zM464.9 363.9h0.9v0.9h-0.9zM409.1 309.3h1.0v1.0h-1.0zM467.8 304.9h0.7v0.7h-0.7zM442.5 255.8h0.9v0.9h-0.9zM434.3 355.1h1.1v1.1h-1.1zM449.0 360.2h1.1v1.1h-1.1zM418.7 279.9h1.1v1.1h-1.1zM425.4 369.9h0.8v0.8h-0.8zM418.8 350.0h0.9v0.9h-0.9zM432.4 371.1h1.3v1.3h-1.3zM451.0 253.3h0.8v0.8h-0.8zM491.9 387.6h1.4v1.4h-1.4zM430.7 290.4h0.9v0.9h-0.9zM473.4 272.2h1.3v1.3h-1.3zM464.9 263.2h1.1v1.1h-1.1zM426.0 304.3h1.4v1.4h-1.4zM498.4 325.4h1.0v1.0h-1.0zM459.3 366.1h0.8v0.8h-0.8zM470.1 390.8h0.6v0.6h-0.6zM486.1 347.9h1.3v1.3h-1.3zM473.3 388.0h1.0v1.0h-1.0zM466.3 306.7h1.3v1.3h-1.3zM439.8 265.8h1.1v1.1h-1.1zM491.9 275.7h1.0v1.0h-1.0zM431.6 293.4h1.0v1.0h-1.0zM408.5 328.5h1.1v1.1h-1.1zM449.1 322.1h1.3v1.3h-1.3zM410.3 320.9h1.4v1.4h-1.4zM486.5 290.0h1.2v1.2h-1.2zM436.5 257.0h1.2v1.2h-1.2zM471.7 349.6h1.1v1.1h-1.1zM448.9 354.4h1.2v1.2h-1.2zM459.3 316.1h1.5v1.5h-1.5zM429.0 379.6h1.4v1.4h-1.4zM472.4 334.6h1.1v1.1h-1.1zM414.1 389.8h0.9v0.9h-0.9zM429.9 327.6h0.7v0.7h-0.7zM435.4 256.4h0.7v0.7h-0.7zM447.3 246.7h1.2v1.2h-1.2zM438.3 250.7h1.4v1.4h-1.4zM451.1 281.9h0.8v0.8h-0.8zM476.1 379.7h0.7v0.7h-0.7zM420.8 261.1h1.2v1.2h-1.2zM473.2 251.0h0.9v0.9h-0.9zM410.1 247.2h0.8v0.8h-0.8zM476.9 285.1h1.2v1.2h-1.2zM394.9 352.8h0.7v0.7h-0.7zM404.2 385.4h0.8v0.8h-0.8zM442.4 282.5h0.6v0.6h-0.6zM464.6 320.5h0.8v0.8h-0.8zM423.6 363.6h1.5v1.5h-1.5zM417.1 341.1h0.7v0.7h-0.7zM463.4 250.6h0.9v0.9h-0.9zM457.4 250.8h1.3v1.3h-1.3zM421.5 275.3h1.2v1.2h-1.2zM460.3 272.2h1.0v1.0h-1.0zM433.2 280.2h1.1v1.1h-1.1zM464.2 275.7h1.1v1.1h-1.1zM481.4 244.5h1.0v1.0h-1.0zM427.6 374.3h0.7v0.7h-0.7zM459.7 266.5h1.4v1.4h-1.4zM427.9 276.6h1.2v1.2h-1.2zM423.1 260.6h0.8v0.8h-0.8zM424.6 294.3h1.2v1.2h-1.2zM447.4 324.3h1.0v1.0h-1.0zM414.3 368.5h1.3v1.3h-1.3zM485.1 307.6h1.5v1.5h-1.5zM473.1 377.1h0.8v0.8h-0.8zM440.5 289.9h1.0v1.0h-1.0zM444.0 362.8h1.0v1.0h-1.0zM488.3 258.4h1.4v1.4h-1.4zM404.0 377.0h1.3v1.3h-1.3zM423.9 296.9h1.4v1.4h-1.4zM411.2 277.2h1.0v1.0h-1.0zM444.4 371.9h0.9v0.9h-0.9zM465.1 316.1h1.4v1.4h-1.4zM427.0 333.2h0.9v0.9h-0.9zM407.2 326.5h1.2v1.2h-1.2zM475.8 284.7h1.3v1.3h-1.3zM457.9 384.1h1.0v1.0h-1.0zM445.5 358.1h1.2v1.2h-1.2zM433.7 374.7h1.3v1.3h-1.3zM446.1 297.3h0.9v0.9h-0.9zM464.6 370.4h0.9v0.9h-0.9zM456.5 314.5h0.7v0.7h-0.7zM470.7 385.4h0.8v0.8h-0.8zM442.2 249.2h0.9v0.9h-0.9zM426.7 370.8h0.8v0.8h-0.8zM484.5 336.5h0.8v0.8h-0.8zM436.7 245.4h0.7v0.7h-0.7zM459.7 301.4h0.6v0.6h-0.6zM434.9 373.9h1.5v1.5h-1.5zM436.9 293.2h1.2v1.2h-1.2zM424.9 356.0h1.1v1.1h-1.1zM422.0 385.5h1.1v1.1h-1.1zM407.5 338.8h0.8v0.8h-0.8zM421.6 267.1h1.3v1.3h-1.3zM415.7 248.9h1.4v1.4h-1.4zM433.2 244.7h0.6v0.6h-0.6zM426.4 251.5h1.4v1.4h-1.4zM438.1 348.3h0.6v0.6h-0.6zM468.5 259.2h0.8v0.8h-0.8zM409.3 319.4h0.6v0.6h-0.6zM416.1 257.3h0.8v0.8h-0.8zM406.2 252.3h1.1v1.1h-1.1zM404.4 268.7h1.3v1.3h-1.3zM432.8 340.5h1.0v1.0h-1.0zM440.2 289.4h0.6v0.6h-0.6zM443.7 304.6h1.4v1.4h-1.4zM444.5 381.0h1.1v1.1h-1.1zM432.0 279.4h1.1v1.1h-1.1zM405.6 323.2h0.9v0.9h-0.9zM448.8 267.7h0.8v0.8h-0.8zM430.6 330.8h1.3v1.3h-1.3zM434.5 259.9h1.2v1.2h-1.2zM495.8 288.0h1.5v1.5h-1.5zM484.0 271.1h1.3v1.3h-1.3zM405.0 335.3h1.2v1.2h-1.2zM467.0 309.7h1.3v1.3h-1.3zM428.3 387.8h0.7v0.7h-0.7zM413.7 325.2h0.6v0.6h-0.6zM454.9 247.8h1.3v1.3h-1.3zM461.9 367.2h1.3v1.3h-1.3zM474.0 279.5h0.6v0.6h-0.6zM445.1 301.4h1.4v1.4h-1.4zM457.0 331.8h1.5v1.5h-1.5zM424.7 320.9h0.7v0.7h-0.7zM430.3 283.8h0.9v0.9h-0.9zM459.5 324.4h0.6v0.6h-0.6zM426.8 341.4h0.9v0.9h-0.9zM446.4 246.9h1.3v1.3h-1.3zM487.3 247.2h1.2v1.2h-1.2zM470.9 279.6h0.7v0.7h-0.7zM415.3 387.4h1.3v1.3h-1.3zM405.9 278.6h1.2v1.2h-1.2zM410.2 264.8h1.0v1.0h-1.0zM398.8 293.7h0.6v0.6h-0.6zM471.3 285.6h0.6v0.6h-0.6zM436.4 274.4h0.8v0.8h-0.8zM407.8 273.0h1.0v1.0h-1.0zM406.2 352.0h0.8v0.8h-0.8zM474.9 345.9h1.4v1.4h-1.4zM453.9 255.0h0.7v0.7h-0.7zM435.8 342.9h1.3v1.3h-1.3zM409.4 382.9h0.8v0.8h-0.8zM487.5 249.3h0.9v0.9h-0.9zM483.5 256.1h1.3v1.3h-1.3zM480.9 379.6h1.4v1.4h-1.4zM443.8 366.1h1.4v1.4h-1.4zM460.4 381.9h1.4v1.4h-1.4zM442.7 287.1h1.5v1.5h-1.5zM450.0 254.2h0.9v0.9h-0.9zM462.5 253.4h0.8v0.8h-0.8zM445.0 265.5h0.9v0.9h-0.9zM489.0 259.4h1.0v1.0h-1.0zM411.5 311.0h1.1v1.1h-1.1zM440.2 353.2h1.4v1.4h-1.4zM451.3 319.7h1.0v1.0h-1.0zM407.2 301.7h1.1v1.1h-1.1zM470.7 328.7h1.0v1.0h-1.0zM425.7 332.4h0.7v0.7h-0.7zM427.9 303.8h0.8v0.8h-0.8zM417.3 385.1h0.9v0.9h-0.9zM431.5 319.4h0.7v0.7h-0.7zM429.9 269.6h0.6v0.6h-0.6zM456.6 285.7h0.8v0.8h-0.8zM406.7 276.9h0.7v0.7h-0.7zM480.9 382.6h1.4v1.4h-1.4zM489.3 352.6h0.6v0.6h-0.6zM412.9 299.3h0.9v0.9h-0.9zM465.4 301.0h1.2v1.2h-1.2zM471.9 344.1h0.6v0.6h-0.6zM420.9 275.4h0.7v0.7h-0.7zM461.4 387.0h1.0v1.0h-1.0zM477.5 351.5h1.2v1.2h-1.2zM493.6 339.2h0.7v0.7h-0.7zM420.8 328.7h0.8v0.8h-0.8zM443.6 290.0h1.2v1.2h-1.2zM456.9 380.5h1.2v1.2h-1.2zM445.4 314.0h1.5v1.5h-1.5zM406.3 303.0h1.0v1.0h-1.0zM425.2 320.7h0.7v0.7h-0.7zM413.2 245.9h0.8v0.8h-0.8zM493.5 384.5h1.1v1.1h-1.1zM492.5 322.7h0.8v0.8h-0.8zM436.9 264.1h0.8v0.8h-0.8zM452.1 326.2h1.3v1.3h-1.3zM442.4 309.3h0.9v0.9h-0.9zM479.0 335.8h0.8v0.8h-0.8zM485.7 304.5h1.2v1.2h-1.2zM469.9 264.8h1.1v1.1h-1.1zM420.9 287.6h1.0v1.0h-1.0zM489.8 243.2h0.9v0.9h-0.9zM466.1 277.8h1.4v1.4h-1.4zM476.8 345.5h0.8v0.8h-0.8zM484.1 374.3h0.8v0.8h-0.8zM481.7 328.6h1.3v1.3h-1.3zM426.7 320.2h1.2v1.2h-1.2zM482.5 263.5h1.4v1.4h-1.4zM461.8 245.7h0.8v0.8h-0.8zM458.9 294.0h0.7v0.7h-0.7zM446.7 366.8h1.2v1.2h-1.2zM440.4 271.4h1.4v1.4h-1.4zM399.7 243.1h0.8v0.8h-0.8zM463.6 373.9h1.0v1.0h-1.0zM460.4 393.5h1.2v1.2h-1.2zM494.0 333.1h0.7v0.7h-0.7zM465.1 308.1h0.7v0.7h-0.7zM460.1 266.6h1.0v1.0h-1.0zM419.0 283.2h0.8v0.8h-0.8zM443.6 349.0h0.8v0.8h-0.8zM425.8 392.9h1.2v1.2h-1.2zM397.7 336.0h1.0v1.0h-1.0zM471.1 320.9h0.8v0.8h-0.8zM467.1 261.0h1.1v1.1h-1.1zM422.3 338.2h0.7v0.7h-0.7zM482.8 390.1h0.8v0.8h-0.8zM439.8 250.3h0.7v0.7h-0.7zM423.3 298.8h0.8v0.8h-0.8zM477.2 266.3h1.2v1.2h-1.2zM479.1 349.5h0.8v0.8h-0.8zM397.8 247.0h1.3v1.3h-1.3zM443.2 386.7h0.7v0.7h-0.7zM448.2 309.2h0.6v0.6h-0.6zM455.3 272.1h1.0v1.0h-1.0zM448.2 253.4h0.6v0.6h-0.6zM411.4 248.4h1.4v1.4h-1.4zM400.1 327.8h1.2v1.2h-1.2zM412.6 287.6h1.3v1.3h-1.3zM414.3 370.5h0.6v0.6h-0.6zM461.3 346.7h1.2v1.2h-1.2zM469.7 256.9h0.8v0.8h-0.8zM453.5 287.8h1.2v1.2h-1.2zM476.4 386.2h1.1v1.1h-1.1zM419.7 292.7h1.0v1.0h-1.0zM446.7 337.6h1.3v1.3h-1.3zM482.6 332.1h0.7v0.7h-0.7zM483.8 374.5h1.3v1.3h-1.3zM442.7 360.8h1.2v1.2h-1.2zM443.4 282.1h1.2v1.2h-1.2zM494.9 247.6h1.4v1.4h-1.4zM399.6 290.7h0.8v0.8h-0.8zM420.0 305.0h1.4v1.4h-1.4zM423.1 321.7h1.0v1.0h-1.0zM415.2 369.7h1.5v1.5h-1.5zM436.4 259.0h0.7v0.7h-0.7zM409.2 261.1h0.8v0.8h-0.8zM435.8 360.0h1.1v1.1h-1.1zM435.2 318.2h0.7v0.7h-0.7zM444.7 306.9h1.4v1.4h-1.4zM411.1 286.7h1.1v1.1h-1.1zM464.1 272.3h0.8v0.8h-0.8zM426.7 334.7h0.7v0.7h-0.7zM434.1 277.3h1.3v1.3h-1.3zM439.5 251.2h0.9v0.9h-0.9zM430.4 248.3h1.4v1.4h-1.4zM423.3 264.9h1.1v1.1h-1.1zM485.5 274.0h0.7v0.7h-0.7zM421.7 285.1h1.5v1.5h-1.5zM496.4 376.8h1.4v1.4h-1.4zM432.2 260.5h1.0v1.0h-1.0zM466.7 276.9h1.4v1.4h-1.4zM433.6 391.6h0.9v0.9h-0.9zM434.3 294.8h1.0v1.0h-1.0zM442.2 352.9h1.5v1.5h-1.5zM457.2 383.0h1.2v1.2h-1.2zM496.4 273.8h0.8v0.8h-0.8zM422.2 263.8h0.8v0.8h-0.8zM458.2 323.0h1.0v1.0h-1.0zM464.1 242.4h0.7v0.7h-0.7zM427.9 255.2h0.8v0.8h-0.8zM436.1 260.4h1.0v1.0h-1.0zM409.5 318.4h1.4v1.4h-1.4zM441.7 266.3h1.1v1.1h-1.1zM409.0 345.4h1.3v1.3h-1.3zM429.7 343.1h1.0v1.0h-1.0zM489.4 310.9h0.9v0.9h-0.9zM497.6 270.4h1.4v1.4h-1.4zM463.9 279.8h1.5v1.5h-1.5zM439.1 254.9h1.4v1.4h-1.4zM409.1 337.8h0.6v0.6h-0.6zM464.3 314.0h1.0v1.0h-1.0zM443.5 330.1h1.1v1.1h-1.1zM411.2 390.5h1.3v1.3h-1.3zM446.9 300.8h1.0v1.0h-1.0zM398.8 336.1h1.4v1.4h-1.4zM477.9 313.3h1.4v1.4h-1.4zM494.5 290.7h1.2v1.2h-1.2zM451.4 350.1h0.7v0.7h-0.7zM422.8 313.2h1.1v1.1h-1.1zM423.6 302.9h0.8v0.8h-0.8zM403.5 259.8h1.3v1.3h-1.3zM449.4 326.4h1.4v1.4h-1.4zM462.1 335.3h0.7v0.7h-0.7zM460.9 385.0h0.6v0.6h-0.6zM419.6 271.8h1.4v1.4h-1.4zM462.1 260.4h0.6v0.6h-0.6zM453.3 343.2h1.1v1.1h-1.1zM429.2 246.0h1.1v1.1h-1.1zM494.8 389.5h0.8v0.8h-0.8zM447.7 289.5h1.0v1.0h-1.0zM471.8 288.6h0.7v0.7h-0.7zM449.0 255.3h1.4v1.4h-1.4zM428.4 346.5h1.1v1.1h-1.1zM427.0 271.7h1.0v1.0h-1.0zM475.5 279.5h1.2v1.2h-1.2zM442.7 375.9h0.9v0.9h-0.9zM470.7 386.7h1.4v1.4h-1.4zM496.4 320.9h0.8v0.8h-0.8zM447.9 263.9h0.8v0.8h-0.8zM495.2 352.6h1.5v1.5h-1.5zM446.2 247.3h0.9v0.9h-0.9zM413.5 274.4h1.3v1.3h-1.3zM434.6 316.3h0.7v0.7h-0.7zM460.3 296.6h1.3v1.3h-1.3zM462.7 329.5h0.7v0.7h-0.7zM462.1 339.3h0.8v0.8h-0.8zM443.0 345.7h1.4v1.4h-1.4zM489.8 290.1h1.5v1.5h-1.5zM395.9 303.2h0.8v0.8h-0.8zM416.6 265.8h1.2v1.2h-1.2zM469.7 348.0h1.2v1.2h-1.2zM436.7 368.5h1.0v1.0h-1.0zM447.3 252.6h1.5v1.5h-1.5zM399.7 301.7h0.8v0.8h-0.8zM444.5 367.5h1.1v1.1h-1.1zM434.9 326.0h0.7v0.7h-0.7zM455.2 251.2h1.3v1.3h-1.3zM444.3 328.8h1.1v1.1h-1.1zM467.9 322.0h0.8v0.8h-0.8zM458.1 282.7h1.4v1.4h-1.4zM442.3 283.4h1.1v1.1h-1.1zM452.2 279.7h1.5v1.5h-1.5zM419.3 320.1h1.4v1.4h-1.4zM451.5 263.1h0.9v0.9h-0.9zM450.4 375.0h0.8v0.8h-0.8zM486.4 333.3h1.4v1.4h-1.4zM463.0 283.7h1.1v1.1h-1.1zM443.2 387.6h0.9v0.9h-0.9zM415.7 345.6h0.7v0.7h-0.7zM451.4 245.5h0.6v0.6h-0.6zM487.9 274.9h1.4v1.4h-1.4zM426.4 342.6h1.0v1.0h-1.0zM442.5 255.0h1.0v1.0h-1.0zM478.8 265.7h1.3v1.3h-1.3zM481.0 319.8h0.7v0.7h-0.7zM476.3 362.8h1.3v1.3h-1.3zM414.5 276.0h1.2v1.2h-1.2zM482.1 254.7h1.0v1.0h-1.0zM450.9 368.7h0.8v0.8h-0.8zM432.9 329.4h0.8v0.8h-0.8zM405.5 260.0h0.7v0.7h-0.7zM472.3 372.1h1.0v1.0h-1.0zM467.4 242.5h1.4v1.4h-1.4zM439.2 389.9h0.8v0.8h-0.8zM475.5 348.1h0.8v0.8h-0.8zM459.3 382.5h0.7v0.7h-0.7zM452.4 249.1h0.8v0.8h-0.8zM407.4 391.0h1.3v1.3h-1.3zM399.3 283.9h1.2v1.2h-1.2zM473.0 320.1h1.3v1.3h-1.3zM418.3 388.2h1.3v1.3h-1.3zM472.4 279.6h0.8v0.8h-0.8zM447.8 371.8h0.9v0.9h-0.9zM463.3 249.1h1.4v1.4h-1.4zM456.2 339.0h0.9v0.9h-0.9zM464.2 291.1h1.1v1.1h-1.1zM416.0 252.4h1.2v1.2h-1.2zM463.1 374.0h1.1v1.1h-1.1zM434.2 364.1h1.2v1.2h-1.2zM478.3 326.9h1.5v1.5h-1.5zM466.0 267.8h1.4v1.4h-1.4zM421.3 299.2h0.7v0.7h-0.7zM464.9 347.5h1.4v1.4h-1.4zM484.2 316.7h1.2v1.2h-1.2zM415.1 310.7h1.1v1.1h-1.1zM451.8 378.4h1.1v1.1h-1.1zM479.9 285.2h1.0v1.0h-1.0zM474.8 291.1h1.2v1.2h-1.2zM426.2 374.6h0.6v0.6h-0.6zM472.5 332.2h0.7v0.7h-0.7zM458.0 243.8h1.1v1.1h-1.1zM449.8 387.6h1.3v1.3h-1.3zM428.0 367.3h0.6v0.6h-0.6zM465.8 385.0h1.3v1.3h-1.3zM426.4 277.0h1.3v1.3h-1.3zM462.2 312.1h1.2v1.2h-1.2zM440.2 318.2h0.7v0.7h-0.7zM458.7 391.8h0.6v0.6h-0.6zM430.3 260.4h1.1v1.1h-1.1zM396.1 378.0h1.3v1.3h-1.3zM425.5 360.1h1.3v1.3h-1.3zM454.9 324.3h1.2v1.2h-1.2zM445.5 384.4h1.0v1.0h-1.0zM466.8 288.3h1.4v1.4h-1.4zM472.4 367.7h0.8v0.8h-0.8zM456.2 248.6h0.7v0.7h-0.7zM437.4 321.4h1.1v1.1h-1.1zM454.5 244.5h1.5v1.5h-1.5zM454.7 287.1h1.4v1.4h-1.4zM451.3 380.4h1.5v1.5h-1.5zM444.4 269.2h1.2v1.2h-1.2zM483.4 296.7h0.9v0.9h-0.9zM416.3 278.7h0.6v0.6h-0.6zM448.9 382.3h1.2v1.2h-1.2zM422.0 376.4h1.2v1.2h-1.2zM441.4 326.1h1.4v1.4h-1.4zM404.2 353.9h1.4v1.4h-1.4zM402.7 354.6h1.2v1.2h-1.2zM478.1 248.6h1.4v1.4h-1.4zM413.1 288.2h0.9v0.9h-0.9zM440.7 309.1h0.8v0.8h-0.8zM396.0 380.9h1.0v1.0h-1.0zM446.4 348.6h0.7v0.7h-0.7zM447.5 327.3h1.4v1.4h-1.4zM494.8 295.8h1.0v1.0h-1.0zM475.7 300.6h0.8v0.8h-0.8zM408.1 390.7h0.7v0.7h-0.7zM448.7 298.0h1.3v1.3h-1.3zM441.4 293.6h0.7v0.7h-0.7zM437.9 354.9h0.7v0.7h-0.7zM447.9 376.0h1.3v1.3h-1.3zM421.5 265.2h0.9v0.9h-0.9zM488.7 329.4h1.5v1.5h-1.5zM479.6 387.1h1.5v1.5h-1.5zM422.2 326.3h1.4v1.4h-1.4zM441.4 372.7h0.9v0.9h-0.9zM412.3 258.6h1.1v1.1h-1.1zM454.5 275.5h1.1v1.1h-1.1zM401.2 328.6h0.7v0.7h-0.7zM437.2 368.6h1.5v1.5h-1.5zM492.6 290.6h1.3v1.3h-1.3zM444.9 324.6h1.5v1.5h-1.5zM443.4 351.5h1.5v1.5h-1.5zM467.9 267.9h1.0v1.0h-1.0zM471.8 358.3h1.4v1.4h-1.4zM455.3 343.8h0.9v0.9h-0.9zM420.2 359.2h1.0v1.0h-1.0zM438.7 249.4h0.9v0.9h-0.9zM402.0 245.9h0.7v0.7h-0.7zM462.0 357.8h0.7v0.7h-0.7zM411.2 392.6h0.7v0.7h-0.7zM435.8 285.3h0.6v0.6h-0.6zM416.0 252.6h1.2v1.2h-1.2zM483.4 254.5h1.5v1.5h-1.5zM485.9 306.5h0.7v0.7h-0.7zM435.3 393.3h0.7v0.7h-0.7zM468.7 280.9h1.3v1.3h-1.3zM486.1 313.2h1.3v1.3h-1.3zM451.3 338.7h1.4v1.4h-1.4zM410.1 336.8h0.9v0.9h-0.9zM453.6 384.7h0.8v0.8h-0.8zM496.2 367.0h0.6v0.6h-0.6zM430.6 354.4h1.2v1.2h-1.2zM417.9 310.7h0.9v0.9h-0.9zM493.3 382.9h0.7v0.7h-0.7zM397.4 319.4h0.7v0.7h-0.7zM402.8 377.9h0.7v0.7h-0.7zM461.3 393.0h0.9v0.9h-0.9zM483.0 357.1h1.1v1.1h-1.1zM451.5 328.7h1.2v1.2h-1.2zM447.7 362.0h1.1v1.1h-1.1zM452.6 275.8h1.3v1.3h-1.3zM479.0 371.3h0.7v0.7h-0.7zM486.6 352.4h0.8v0.8h-0.8zM411.3 331.6h1.2v1.2h-1.2zM426.7 319.3h1.3v1.3h-1.3zM430.9 378.7h1.5v1.5h-1.5zM494.4 285.7h1.3v1.3h-1.3zM451.1 292.5h1.0v1.0h-1.0zM488.0 359.6h0.6v0.6h-0.6zM409.8 250.8h1.3v1.3h-1.3zM447.5 376.6h0.8v0.8h-0.8zM419.2 361.9h1.3v1.3h-1.3zM433.5 345.3h1.4v1.4h-1.4zM437.0 358.4h1.0v1.0h-1.0zM455.6 265.5h1.2v1.2h-1.2zM428.7 368.2h1.0v1.0h-1.0zM463.9 311.0h1.1v1.1h-1.1zM474.1 326.2h1.1v1.1h-1.1zM471.4 380.5h1.4v1.4h-1.4zM477.8 340.1h0.8v0.8h-0.8zM460.9 338.2h0.7v0.7h-0.7zM423.8 391.3h1.1v1.1h-1.1zM460.8 287.9h0.8v0.8h-0.8zM465.6 360.8h1.3v1.3h-1.3zM398.1 333.5h1.1v1.1h-1.1zM498.3 386.2h0.7v0.7h-0.7zM489.5 284.1h0.8v0.8h-0.8zM439.5 268.6h0.9v0.9h-0.9zM497.0 295.0h1.2v1.2h-1.2zM474.4 289.0h0.7v0.7h-0.7zM500.3 280.1h1.3v1.3h-1.3zM452.5 350.2h0.8v0.8h-0.8zM453.9 337.3h1.2v1.2h-1.2zM423.0 373.8h0.7v0.7h-0.7zM447.1 293.0h1.4v1.4h-1.4zM441.7 376.7h1.0v1.0h-1.0zM418.2 268.0h1.1v1.1h-1.1zM457.4 347.6h1.3v1.3h-1.3zM452.3 331.1h0.6v0.6h-0.6zM418.1 258.1h1.2v1.2h-1.2zM441.5 392.5h0.9v0.9h-0.9zM438.3 250.8h0.7v0.7h-0.7zM433.8 292.6h1.4v1.4h-1.4zM437.3 265.3h1.3v1.3h-1.3zM459.8 388.3h1.1v1.1h-1.1zM412.0 282.5h1.2v1.2h-1.2zM407.8 388.3h1.1v1.1h-1.1zM421.6 364.4h1.4v1.4h-1.4zM455.9 384.8h1.2v1.2h-1.2zM398.4 303.2h0.7v0.7h-0.7zM458.3 276.0h1.1v1.1h-1.1zM447.5 272.5h1.5v1.5h-1.5zM490.6 244.3h0.9v0.9h-0.9zM474.6 333.2h1.2v1.2h-1.2zM417.2 244.0h0.9v0.9h-0.9zM489.5 247.6h1.3v1.3h-1.3zM441.5 372.9h0.6v0.6h-0.6zM434.1 327.3h1.3v1.3h-1.3zM477.4 289.7h1.5v1.5h-1.5zM475.5 317.4h0.6v0.6h-0.6zM446.7 382.4h1.2v1.2h-1.2zM476.6 244.5h1.3v1.3h-1.3zM481.1 313.1h1.3v1.3h-1.3zM441.0 372.4h0.9v0.9h-0.9zM431.6 386.3h0.7v0.7h-0.7zM453.3 271.1h1.0v1.0h-1.0zM398.4 352.0h1.2v1.2h-1.2zM395.3 367.8h0.9v0.9h-0.9zM448.1 290.1h1.4v1.4h-1.4zM459.7 388.4h1.4v1.4h-1.4zM397.6 283.7h0.8v0.8h-0.8zM404.8 377.9h1.3v1.3h-1.3zM418.0 364.1h1.3v1.3h-1.3zM456.4 363.4h0.9v0.9h-0.9zM451.9 338.9h1.3v1.3h-1.3zM414.1 381.1h1.4v1.4h-1.4zM463.7 334.1h0.8v0.8h-0.8zM468.6 282.2h1.4v1.4h-1.4zM495.4 384.9h0.7v0.7h-0.7zM447.7 347.3h0.7v0.7h-0.7zM443.4 329.3h1.2v1.2h-1.2zM422.8 326.1h1.1v1.1h-1.1zM448.3 351.2h0.9v0.9h-0.9zM466.1 342.2h1.4v1.4h-1.4zM427.4 260.2h1.2v1.2h-1.2zM476.1 323.8h1.1v1.1h-1.1zM478.0 367.6h1.1v1.1h-1.1zM456.7 294.1h0.9v0.9h-0.9zM418.1 387.2h1.2v1.2h-1.2zM442.3 286.5h0.7v0.7h-0.7zM447.1 305.0h0.9v0.9h-0.9zM397.3 278.5h1.1v1.1h-1.1zM450.9 263.6h1.0v1.0h-1.0zM451.3 365.6h0.7v0.7h-0.7zM429.3 257.9h1.0v1.0h-1.0zM422.7 267.9h1.2v1.2h-1.2zM410.7 259.0h1.2v1.2h-1.2zM424.2 299.5h1.0v1.0h-1.0zM454.2 340.3h0.8v0.8h-0.8zM448.7 245.7h0.7v0.7h-0.7zM412.8 315.0h1.1v1.1h-1.1zM414.0 356.3h0.8v0.8h-0.8zM458.4 393.9h1.5v1.5h-1.5zM412.8 276.6h1.2v1.2h-1.2zM397.1 372.6h0.7v0.7h-0.7zM454.8 389.6h0.9v0.9h-0.9zM464.2 329.3h0.9v0.9h-0.9zM438.1 358.0h1.0v1.0h-1.0zM483.4 365.5h1.1v1.1h-1.1zM439.1 253.1h0.7v0.7h-0.7zM459.6 268.3h1.2v1.2h-1.2zM462.1 353.0h1.2v1.2h-1.2zM415.4 274.5h0.8v0.8h-0.8zM390.3 327.4h0.8v0.8h-0.8zM437.9 265.0h0.8v0.8h-0.8zM451.4 325.1h1.1v1.1h-1.1zM428.0 387.9h1.1v1.1h-1.1zM440.9 339.2h1.4v1.4h-1.4zM469.4 291.6h1.4v1.4h-1.4zM455.8 253.0h0.9v0.9h-0.9zM460.8 283.5h1.4v1.4h-1.4zM456.2 277.4h1.5v1.5h-1.5zM476.8 313.3h0.6v0.6h-0.6zM488.4 378.6h1.1v1.1h-1.1zM469.5 276.3h0.7v0.7h-0.7zM459.1 311.0h0.8v0.8h-0.8zM441.9 393.9h0.7v0.7h-0.7zM484.3 269.1h1.3v1.3h-1.3zM449.4 326.2h0.9v0.9h-0.9zM487.1 338.5h1.0v1.0h-1.0zM465.5 258.5h1.2v1.2h-1.2zM478.1 379.8h1.3v1.3h-1.3zM431.4 283.0h1.1v1.1h-1.1zM474.5 358.3h1.1v1.1h-1.1zM453.2 256.0h1.4v1.4h-1.4zM418.3 282.5h0.8v0.8h-0.8zM496.7 268.5h1.2v1.2h-1.2zM479.3 368.5h1.3v1.3h-1.3zM410.4 307.6h1.1v1.1h-1.1zM409.3 369.8h1.0v1.0h-1.0zM431.1 331.3h1.3v1.3h-1.3zM448.6 286.2h1.3v1.3h-1.3zM459.0 359.7h0.6v0.6h-0.6zM441.5 255.7h0.9v0.9h-0.9zM493.0 268.0h1.5v1.5h-1.5zM447.7 315.1h1.5v1.5h-1.5zM424.0 267.5h0.9v0.9h-0.9zM456.2 356.1h0.9v0.9h-0.9zM449.4 297.2h1.3v1.3h-1.3zM454.9 343.7h1.2v1.2h-1.2zM442.0 245.8h0.6v0.6h-0.6zM464.2 379.9h1.3v1.3h-1.3zM481.1 332.9h0.7v0.7h-0.7zM412.7 364.7h1.2v1.2h-1.2zM462.6 290.7h1.1v1.1h-1.1zM416.6 360.7h0.9v0.9h-0.9zM493.9 337.9h0.7v0.7h-0.7zM462.8 318.4h0.8v0.8h-0.8zM404.9 261.3h0.7v0.7h-0.7zM428.5 305.7h0.8v0.8h-0.8zM429.3 343.3h1.3v1.3h-1.3zM395.9 359.4h0.8v0.8h-0.8zM406.3 325.1h0.7v0.7h-0.7zM452.6 354.8h1.1v1.1h-1.1zM406.6 302.8h0.6v0.6h-0.6zM427.8 300.4h1.5v1.5h-1.5zM436.8 333.9h1.2v1.2h-1.2zM500.6 285.6h0.9v0.9h-0.9zM452.4 392.3h1.2v1.2h-1.2zM437.8 311.4h0.9v0.9h-0.9zM400.6 311.8h1.4v1.4h-1.4zM418.8 343.9h1.2v1.2h-1.2zM401.6 346.3h1.0v1.0h-1.0zM455.1 253.8h1.1v1.1h-1.1zM460.6 254.6h0.8v0.8h-0.8zM421.9 281.3h1.2v1.2h-1.2zM429.6 321.3h0.6v0.6h-0.6zM454.5 333.7h1.0v1.0h-1.0zM425.1 309.1h1.4v1.4h-1.4zM422.7 382.4h1.0v1.0h-1.0zM427.8 297.5h0.7v0.7h-0.7zM454.9 347.7h0.6v0.6h-0.6zM415.8 392.9h0.7v0.7h-0.7zM473.1 356.5h1.2v1.2h-1.2zM418.6 253.9h1.5v1.5h-1.5zM455.0 313.3h0.9v0.9h-0.9zM467.4 329.6h0.9v0.9h-0.9zM414.8 361.5h0.7v0.7h-0.7zM401.6 304.3h1.1v1.1h-1.1zM451.0 382.1h1.3v1.3h-1.3zM429.4 295.2h1.4v1.4h-1.4zM453.8 356.0h0.9v0.9h-0.9zM459.8 343.9h1.1v1.1h-1.1zM473.5 354.9h0.6v0.6h-0.6zM477.1 334.9h0.9v0.9h-0.9zM434.8 321.6h1.1v1.1h-1.1zM482.3 371.1h1.4v1.4h-1.4zM440.5 348.6h1.4v1.4h-1.4zM497.3 343.2h1.2v1.2h-1.2zM486.4 306.2h1.2v1.2h-1.2zM493.7 387.4h1.3v1.3h-1.3zM446.1 322.8h1.1v1.1h-1.1zM423.7 259.1h1.2v1.2h-1.2zM400.4 285.9h1.0v1.0h-1.0zM476.9 266.4h0.9v0.9h-0.9zM414.8 258.7h1.1v1.1h-1.1zM457.3 392.5h0.6v0.6h-0.6zM454.7 387.2h0.7v0.7h-0.7zM480.6 247.7h1.0v1.0h-1.0zM432.9 324.8h0.6v0.6h-0.6zM461.4 268.7h1.1v1.1h-1.1zM410.2 251.1h1.1v1.1h-1.1zM438.7 306.6h0.8v0.8h-0.8zM481.1 370.5h1.2v1.2h-1.2zM466.1 325.2h1.1v1.1h-1.1zM401.5 343.5h1.1v1.1h-1.1zM405.7 346.6h1.3v1.3h-1.3zM474.6 322.6h1.2v1.2h-1.2zM429.6 355.5h1.4v1.4h-1.4zM431.5 354.9h1.0v1.0h-1.0zM482.8 322.0h0.8v0.8h-0.8zM443.3 338.1h0.9v0.9h-0.9zM400.3 312.6h1.1v1.1h-1.1zM401.5 276.0h0.7v0.7h-0.7zM465.4 380.9h1.3v1.3h-1.3zM410.3 265.8h1.0v1.0h-1.0zM434.4 386.2h1.4v1.4h-1.4zM464.1 253.6h1.5v1.5h-1.5zM486.2 303.8h0.9v0.9h-0.9zM472.3 383.5h1.1v1.1h-1.1zM445.4 279.9h1.4v1.4h-1.4zM466.8 381.4h0.8v0.8h-0.8zM472.8 342.3h1.5v1.5h-1.5zM449.3 311.0h1.0v1.0h-1.0zM450.1 277.3h1.2v1.2h-1.2zM407.3 253.6h1.2v1.2h-1.2zM477.6 351.4h1.1v1.1h-1.1zM428.5 369.4h1.0v1.0h-1.0zM432.2 309.4h0.7v0.7h-0.7zM401.6 386.4h1.2v1.2h-1.2zM434.0 368.3h1.0v1.0h-1.0zM425.6 289.0h1.5v1.5h-1.5zM467.4 269.3h1.4v1.4h-1.4zM484.2 253.8h0.8v0.8h-0.8zM455.7 269.7h1.0v1.0h-1.0zM438.2 365.3h1.2v1.2h-1.2zM447.8 374.4h1.4v1.4h-1.4zM444.9 243.9h1.2v1.2h-1.2zM457.0 299.7h1.4v1.4h-1.4zM413.2 265.2h0.9v0.9h-0.9zM434.0 373.1h0.8v0.8h-0.8zM412.3 386.5h1.1v1.1h-1.1zM419.3 267.1h1.5v1.5h-1.5zM445.3 303.4h1.4v1.4h-1.4zM469.0 376.5h1.0v1.0h-1.0zM399.4 301.7h1.4v1.4h-1.4zM397.4 319.1h1.1v1.1h-1.1zM431.6 384.4h0.9v0.9h-0.9zM435.7 315.8h0.7v0.7h-0.7zM425.7 298.5h0.6v0.6h-0.6zM485.5 250.6h0.9v0.9h-0.9zM452.4 339.9h1.1v1.1h-1.1zM485.9 348.7h1.4v1.4h-1.4zM468.8 362.9h1.0v1.0h-1.0zM440.8 293.8h1.3v1.3h-1.3zM429.5 325.5h1.2v1.2h-1.2zM457.5 330.4h1.1v1.1h-1.1zM415.1 333.4h0.8v0.8h-0.8zM444.3 315.4h0.8v0.8h-0.8zM430.5 363.6h0.9v0.9h-0.9zM496.3 384.9h1.4v1.4h-1.4zM449.9 361.6h0.9v0.9h-0.9zM459.8 317.8h1.2v1.2h-1.2zM447.2 337.2h1.2v1.2h-1.2zM468.0 294.2h0.7v0.7h-0.7zM462.2 296.6h0.6v0.6h-0.6zM416.3 273.4h0.9v0.9h-0.9zM464.9 376.0h1.1v1.1h-1.1zM451.5 387.9h0.7v0.7h-0.7zM421.2 372.2h0.8v0.8h-0.8zM402.3 381.5h1.0v1.0h-1.0zM469.1 289.7h0.8v0.8h-0.8zM474.9 357.8h1.4v1.4h-1.4zM434.0 242.1h1.4v1.4h-1.4zM468.6 279.1h1.1v1.1h-1.1zM437.3 262.1h0.7v0.7h-0.7zM445.0 311.6h1.2v1.2h-1.2zM479.2 244.6h0.7v0.7h-0.7zM481.9 252.7h1.4v1.4h-1.4zM437.4 301.4h1.2v1.2h-1.2zM436.0 326.6h1.4v1.4h-1.4zM454.2 375.6h0.6v0.6h-0.6zM442.5 347.7h1.2v1.2h-1.2zM442.2 314.0h1.0v1.0h-1.0zM468.6 341.1h1.2v1.2h-1.2zM495.2 347.0h1.2v1.2h-1.2zM474.4 373.8h1.2v1.2h-1.2zM427.7 345.3h1.1v1.1h-1.1zM404.7 388.5h0.8v0.8h-0.8zM408.0 346.3h1.5v1.5h-1.5zM482.8 251.2h0.8v0.8h-0.8zM444.6 373.9h1.1v1.1h-1.1zM463.4 341.5h0.7v0.7h-0.7zM461.3 334.4h1.2v1.2h-1.2zM454.3 340.0h0.9v0.9h-0.9zM405.2 343.5h1.1v1.1h-1.1zM433.2 310.8h0.7v0.7h-0.7zM423.0 288.4h1.4v1.4h-1.4zM459.2 302.3h0.8v0.8h-0.8zM481.6 246.3h1.4v1.4h-1.4zM460.2 314.4h0.7v0.7h-0.7zM448.4 390.8h0.6v0.6h-0.6zM431.7 378.8h0.7v0.7h-0.7zM418.7 309.7h0.8v0.8h-0.8zM431.7 318.9h0.7v0.7h-0.7zM422.0 341.7h0.7v0.7h-0.7zM433.1 247.2h0.7v0.7h-0.7zM448.2 244.2h0.9v0.9h-0.9zM469.1 375.1h1.2v1.2h-1.2zM426.6 308.3h0.7v0.7h-0.7zM417.0 310.5h1.0v1.0h-1.0zM456.9 296.1h1.2v1.2h-1.2zM405.8 344.5h0.9v0.9h-0.9zM471.7 248.5h1.1v1.1h-1.1zM437.5 359.8h1.4v1.4h-1.4zM481.8 388.4h1.3v1.3h-1.3zM399.7 275.7h1.4v1.4h-1.4zM417.7 264.4h0.7v0.7h-0.7zM449.5 316.1h1.1v1.1h-1.1zM398.3 247.2h0.7v0.7h-0.7zM480.0 378.2h0.8v0.8h-0.8zM483.5 257.7h1.2v1.2h-1.2zM402.4 392.0h0.7v0.7h-0.7zM395.9 308.7h0.8v0.8h-0.8zM454.5 307.8h1.2v1.2h-1.2zM451.8 272.3h1.0v1.0h-1.0zM428.9 366.9h1.3v1.3h-1.3zM483.9 371.7h1.0v1.0h-1.0zM430.4 263.3h0.7v0.7h-0.7zM411.8 362.2h1.0v1.0h-1.0zM427.7 293.4h1.1v1.1h-1.1zM424.9 329.0h0.9v0.9h-0.9zM440.2 355.1h1.3v1.3h-1.3zM417.7 341.1h1.2v1.2h-1.2zM408.9 330.1h0.9v0.9h-0.9zM444.2 287.8h1.5v1.5h-1.5zM500.0 281.5h1.2v1.2h-1.2zM404.2 381.3h1.0v1.0h-1.0zM457.9 274.9h1.1v1.1h-1.1zM422.1 353.0h0.8v0.8h-0.8zM422.9 382.7h0.8v0.8h-0.8zM431.0 305.9h1.5v1.5h-1.5zM414.3 373.4h1.4v1.4h-1.4zM417.4 336.5h1.5v1.5h-1.5zM463.8 304.1h1.0v1.0h-1.0zM467.2 335.3h1.1v1.1h-1.1zM454.2 278.7h1.2v1.2h-1.2zM433.5 264.8h0.9v0.9h-0.9zM458.7 361.5h1.3v1.3h-1.3zM415.7 378.9h1.5v1.5h-1.5zM477.2 277.6h1.3v1.3h-1.3zM477.7 306.6h0.8v0.8h-0.8zM472.8 375.5h0.6v0.6h-0.6zM477.9 305.0h1.0v1.0h-1.0zM423.4 286.5h1.2v1.2h-1.2zM448.9 374.8h0.7v0.7h-0.7zM428.6 379.4h0.9v0.9h-0.9zM478.7 381.1h0.7v0.7h-0.7zM401.1 287.4h1.2v1.2h-1.2zM427.2 250.7h1.5v1.5h-1.5zM475.1 296.0h1.2v1.2h-1.2zM440.2 280.9h0.9v0.9h-0.9zM461.4 346.7h0.8v0.8h-0.8zM475.4 344.8h0.9v0.9h-0.9zM488.7 298.7h1.0v1.0h-1.0zM466.5 307.2h0.9v0.9h-0.9zM464.4 374.0h1.4v1.4h-1.4zM448.5 258.4h0.8v0.8h-0.8zM421.2 320.5h1.0v1.0h-1.0zM421.3 271.2h1.1v1.1h-1.1zM481.3 316.0h1.2v1.2h-1.2zM410.0 314.6h1.0v1.0h-1.0zM423.4 322.3h0.9v0.9h-0.9zM419.5 363.0h0.8v0.8h-0.8zM462.7 336.6h1.4v1.4h-1.4zM430.0 321.5h0.9v0.9h-0.9zM471.4 373.3h0.7v0.7h-0.7zM408.7 313.2h0.7v0.7h-0.7zM464.0 319.0h1.1v1.1h-1.1zM476.9 383.8h0.6v0.6h-0.6zM430.5 250.7h1.3v1.3h-1.3zM426.8 256.8h0.9v0.9h-0.9zM458.2 266.0h1.4v1.4h-1.4zM463.9 337.9h1.0v1.0h-1.0zM439.3 321.8h1.0v1.0h-1.0zM407.8 273.8h0.8v0.8h-0.8zM476.4 325.9h1.0v1.0h-1.0zM458.1 295.2h1.5v1.5h-1.5zM439.8 350.4h1.3v1.3h-1.3zM426.2 263.6h1.4v1.4h-1.4zM415.3 282.8h1.0v1.0h-1.0zM441.2 385.8h1.4v1.4h-1.4zM475.8 304.5h1.4v1.4h-1.4zM400.2 300.1h0.7v0.7h-0.7zM463.6 294.4h1.2v1.2h-1.2zM407.0 374.7h1.0v1.0h-1.0zM441.8 311.9h1.1v1.1h-1.1zM444.8 279.1h1.2v1.2h-1.2zM460.2 293.2h0.7v0.7h-0.7zM429.6 346.2h1.4v1.4h-1.4zM456.6 283.2h0.8v0.8h-0.8zM418.4 377.0h1.1v1.1h-1.1zM428.2 339.1h1.0v1.0h-1.0zM414.1 323.8h1.0v1.0h-1.0zM468.7 295.5h1.5v1.5h-1.5zM422.1 327.4h0.6v0.6h-0.6zM445.7 360.1h0.8v0.8h-0.8zM427.7 392.6h1.4v1.4h-1.4zM465.4 388.8h1.0v1.0h-1.0zM473.3 310.3h1.3v1.3h-1.3zM441.7 292.5h0.9v0.9h-0.9zM498.8 303.1h1.5v1.5h-1.5zM450.5 368.8h1.2v1.2h-1.2zM449.1 284.5h1.1v1.1h-1.1zM455.3 313.7h1.3v1.3h-1.3zM398.1 363.1h1.2v1.2h-1.2zM443.0 246.7h1.3v1.3h-1.3zM412.6 322.9h1.1v1.1h-1.1zM451.7 256.9h0.7v0.7h-0.7zM456.4 375.0h0.8v0.8h-0.8zM430.3 289.9h0.6v0.6h-0.6zM439.1 346.2h1.0v1.0h-1.0zM416.0 354.8h0.8v0.8h-0.8zM432.7 322.7h1.2v1.2h-1.2zM486.0 316.6h0.7v0.7h-0.7zM462.4 268.6h0.8v0.8h-0.8zM414.2 377.6h0.7v0.7h-0.7zM430.8 350.9h0.8v0.8h-0.8zM477.0 381.7h1.0v1.0h-1.0zM412.1 312.7h0.9v0.9h-0.9zM449.4 260.5h1.1v1.1h-1.1zM482.2 356.3h1.4v1.4h-1.4zM417.2 275.0h0.7v0.7h-0.7zM440.9 332.0h0.7v0.7h-0.7zM441.7 298.1h1.1v1.1h-1.1zM449.1 320.6h1.4v1.4h-1.4zM408.2 388.2h1.3v1.3h-1.3zM433.2 332.9h1.2v1.2h-1.2zM457.0 369.1h1.2v1.2h-1.2zM448.7 257.8h0.9v0.9h-0.9zM483.7 368.2h0.7v0.7h-0.7zM487.2 350.7h1.3v1.3h-1.3zM454.3 267.8h1.5v1.5h-1.5zM439.4 321.8h1.5v1.5h-1.5zM447.5 376.2h0.8v0.8h-0.8zM414.8 308.8h0.9v0.9h-0.9zM430.2 306.3h1.4v1.4h-1.4zM492.6 356.6h0.7v0.7h-0.7zM473.6 323.4h1.1v1.1h-1.1zM414.3 285.2h1.1v1.1h-1.1zM405.1 362.5h1.3v1.3h-1.3zM464.0 286.4h1.1v1.1h-1.1zM469.9 323.2h0.7v0.7h-0.7zM419.1 359.4h0.9v0.9h-0.9zM394.2 359.1h0.8v0.8h-0.8zM433.8 348.9h1.1v1.1h-1.1zM424.4 268.9h1.1v1.1h-1.1zM457.9 305.6h1.3v1.3h-1.3zM416.8 345.0h1.2v1.2h-1.2zM473.2 308.8h0.6v0.6h-0.6zM415.6 323.5h1.1v1.1h-1.1zM471.3 279.8h1.3v1.3h-1.3zM420.9 327.9h1.2v1.2h-1.2zM419.4 344.2h1.0v1.0h-1.0zM473.5 292.7h1.3v1.3h-1.3zM415.7 332.2h1.3v1.3h-1.3zM486.2 312.7h1.3v1.3h-1.3zM460.6 278.4h0.7v0.7h-0.7zM454.4 371.7h0.8v0.8h-0.8zM422.0 324.0h0.6v0.6h-0.6zM472.9 391.2h0.9v0.9h-0.9zM410.1 304.4h1.2v1.2h-1.2zM450.5 270.2h1.3v1.3h-1.3zM420.1 254.8h1.1v1.1h-1.1zM477.7 291.1h0.7v0.7h-0.7zM460.7 366.5h1.2v1.2h-1.2zM479.7 354.7h1.5v1.5h-1.5zM448.2 388.6h0.8v0.8h-0.8zM433.7 337.6h1.0v1.0h-1.0zM456.0 295.9h1.2v1.2h-1.2zM402.0 336.3h0.8v0.8h-0.8zM408.5 339.5h1.3v1.3h-1.3zM455.4 274.6h1.1v1.1h-1.1zM408.3 391.8h1.4v1.4h-1.4zM443.0 308.8h1.1v1.1h-1.1zM448.2 353.1h1.5v1.5h-1.5zM455.7 347.0h0.9v0.9h-0.9zM473.1 248.4h1.3v1.3h-1.3zM494.5 260.5h1.0v1.0h-1.0zM433.8 349.6h0.7v0.7h-0.7zM412.2 364.2h0.6v0.6h-0.6zM444.7 319.8h1.0v1.0h-1.0zM441.9 386.7h0.7v0.7h-0.7zM476.1 338.5h1.5v1.5h-1.5zM449.4 323.7h0.9v0.9h-0.9zM414.7 365.5h1.5v1.5h-1.5zM468.9 305.5h0.6v0.6h-0.6zM399.1 244.1h0.9v0.9h-0.9zM412.1 367.3h1.3v1.3h-1.3zM466.6 272.3h0.9v0.9h-0.9zM428.8 291.7h0.7v0.7h-0.7zM390.1 304.9h1.2v1.2h-1.2zM464.2 311.4h1.3v1.3h-1.3zM402.9 349.0h1.3v1.3h-1.3zM438.5 362.9h1.0v1.0h-1.0zM447.3 377.7h0.7v0.7h-0.7zM457.0 348.4h0.7v0.7h-0.7zM454.5 363.0h0.9v0.9h-0.9zM499.8 303.0h1.4v1.4h-1.4zM432.7 331.8h1.1v1.1h-1.1zM463.6 382.4h1.1v1.1h-1.1zM414.8 303.2h1.1v1.1h-1.1zM457.2 387.0h0.7v0.7h-0.7zM473.2 286.2h0.8v0.8h-0.8zM463.2 338.2h0.9v0.9h-0.9zM407.4 314.1h1.2v1.2h-1.2zM449.0 313.6h1.0v1.0h-1.0zM417.4 379.7h0.6v0.6h-0.6zM466.9 251.7h1.4v1.4h-1.4zM484.3 284.2h1.1v1.1h-1.1zM428.4 387.9h1.0v1.0h-1.0zM452.1 383.8h0.7v0.7h-0.7zM425.1 275.4h1.4v1.4h-1.4zM464.8 291.9h1.3v1.3h-1.3zM462.9 265.0h1.2v1.2h-1.2zM401.2 341.9h1.2v1.2h-1.2zM419.5 271.0h0.8v0.8h-0.8zM414.6 292.0h1.3v1.3h-1.3zM443.8 371.9h1.4v1.4h-1.4zM413.1 353.7h0.7v0.7h-0.7zM436.0 275.8h1.3v1.3h-1.3zM445.1 320.0h0.8v0.8h-0.8zM464.3 336.1h1.0v1.0h-1.0zM442.8 264.1h1.5v1.5h-1.5zM477.0 306.2h0.9v0.9h-0.9zM450.2 389.1h1.3v1.3h-1.3zM461.7 290.8h1.1v1.1h-1.1zM461.1 292.8h1.3v1.3h-1.3zM449.3 248.3h1.0v1.0h-1.0zM469.9 297.9h1.2v1.2h-1.2zM473.3 304.6h1.4v1.4h-1.4zM441.3 304.0h1.4v1.4h-1.4zM467.7 327.0h0.9v0.9h-0.9zM433.6 346.0h1.4v1.4h-1.4zM455.5 384.4h1.1v1.1h-1.1zM415.8 317.6h1.3v1.3h-1.3zM480.8 391.3h1.0v1.0h-1.0zM439.5 324.6h1.4v1.4h-1.4zM430.8 340.9h1.0v1.0h-1.0zM424.9 308.8h1.4v1.4h-1.4zM431.8 245.8h1.4v1.4h-1.4zM415.5 252.5h0.8v0.8h-0.8zM458.2 267.2h1.3v1.3h-1.3zM390.7 393.9h0.9v0.9h-0.9zM457.9 348.8h0.7v0.7h-0.7zM471.5 383.3h1.0v1.0h-1.0zM414.7 264.7h1.3v1.3h-1.3zM482.3 258.9h1.0v1.0h-1.0zM450.2 261.9h0.9v0.9h-0.9zM484.6 388.0h1.4v1.4h-1.4zM456.4 298.8h1.1v1.1h-1.1zM485.0 377.6h1.4v1.4h-1.4zM455.6 324.6h1.2v1.2h-1.2zM459.4 337.5h1.1v1.1h-1.1zM468.8 255.8h1.0v1.0h-1.0zM441.4 298.4h0.8v0.8h-0.8zM427.3 322.1h0.8v0.8h-0.8zM469.5 370.7h0.9v0.9h-0.9zM458.0 334.4h1.4v1.4h-1.4zM452.4 353.8h0.8v0.8h-0.8zM462.3 284.4h1.3v1.3h-1.3zM415.0 246.8h0.6v0.6h-0.6zM423.2 379.7h0.9v0.9h-0.9zM422.5 263.6h1.3v1.3h-1.3zM451.2 255.6h1.1v1.1h-1.1zM464.0 343.6h0.8v0.8h-0.8zM443.8 278.5h1.5v1.5h-1.5zM410.9 249.6h0.8v0.8h-0.8zM409.2 283.3h0.9v0.9h-0.9zM450.2 284.6h0.7v0.7h-0.7zM428.8 368.2h1.5v1.5h-1.5zM433.3 371.1h0.9v0.9h-0.9zM394.0 383.9h1.2v1.2h-1.2zM402.6 307.7h1.1v1.1h-1.1zM464.7 243.6h1.2v1.2h-1.2zM452.9 287.0h1.4v1.4h-1.4zM489.1 279.2h1.3v1.3h-1.3zM459.0 319.7h1.2v1.2h-1.2zM427.7 336.8h0.9v0.9h-0.9zM420.0 366.1h1.1v1.1h-1.1zM469.1 331.9h0.8v0.8h-0.8zM456.4 288.8h0.8v0.8h-0.8zM467.1 266.0h1.0v1.0h-1.0zM469.5 355.6h1.4v1.4h-1.4zM457.1 381.4h0.6v0.6h-0.6zM407.2 334.0h1.0v1.0h-1.0zM480.0 344.2h1.3v1.3h-1.3zM427.0 249.6h0.7v0.7h-0.7zM433.1 266.9h1.1v1.1h-1.1zM443.6 291.9h1.3v1.3h-1.3zM453.2 306.3h1.2v1.2h-1.2zM466.1 365.6h0.6v0.6h-0.6zM445.0 246.2h1.5v1.5h-1.5zM456.5 342.4h0.7v0.7h-0.7zM468.0 307.9h0.8v0.8h-0.8zM438.3 309.5h0.8v0.8h-0.8zM450.0 303.0h1.3v1.3h-1.3zM450.9 349.6h1.1v1.1h-1.1zM452.4 307.6h1.5v1.5h-1.5zM408.7 324.4h1.1v1.1h-1.1zM426.7 339.2h0.6v0.6h-0.6zM452.5 341.6h1.3v1.3h-1.3zM488.0 246.4h1.0v1.0h-1.0zM425.3 272.3h0.7v0.7h-0.7zM478.5 285.7h0.9v0.9h-0.9zM469.4 372.1h1.3v1.3h-1.3zM449.3 252.4h1.4v1.4h-1.4zM433.8 384.0h1.2v1.2h-1.2zM483.5 317.7h0.9v0.9h-0.9zM443.4 257.7h0.7v0.7h-0.7zM474.2 349.1h1.0v1.0h-1.0zM410.2 335.4h1.1v1.1h-1.1zM453.2 305.1h0.8v0.8h-0.8zM431.0 321.5h0.7v0.7h-0.7zM454.8 322.5h1.0v1.0h-1.0zM437.3 294.1h1.4v1.4h-1.4zM438.3 249.8h0.7v0.7h-0.7zM444.9 280.0h1.1v1.1h-1.1zM405.8 293.2h1.0v1.0h-1.0zM405.1 258.9h1.5v1.5h-1.5zM462.3 302.9h1.0v1.0h-1.0zM391.5 300.4h1.3v1.3h-1.3zM446.2 335.8h0.6v0.6h-0.6zM423.2 295.7h0.9v0.9h-0.9zM416.3 296.3h1.0v1.0h-1.0zM410.8 286.2h1.4v1.4h-1.4zM479.8 363.6h1.1v1.1h-1.1zM426.8 336.3h1.3v1.3h-1.3zM470.1 341.5h0.9v0.9h-0.9zM426.0 301.7h1.4v1.4h-1.4zM455.8 364.3h0.7v0.7h-0.7zM406.6 345.6h1.4v1.4h-1.4zM421.1 283.6h1.2v1.2h-1.2zM445.1 260.0h0.6v0.6h-0.6zM432.6 342.3h1.4v1.4h-1.4zM453.8 287.6h0.8v0.8h-0.8zM474.0 364.1h1.0v1.0h-1.0zM412.4 388.3h0.7v0.7h-0.7zM407.5 319.3h1.4v1.4h-1.4zM483.5 368.8h1.5v1.5h-1.5zM410.7 323.0h1.3v1.3h-1.3zM464.2 335.0h0.8v0.8h-0.8zM435.7 386.2h1.1v1.1h-1.1zM402.2 279.9h0.8v0.8h-0.8zM434.1 346.6h1.1v1.1h-1.1zM471.1 246.4h1.4v1.4h-1.4zM427.3 253.7h0.9v0.9h-0.9zM402.4 369.7h1.1v1.1h-1.1zM443.0 390.7h0.8v0.8h-0.8zM476.4 246.5h0.7v0.7h-0.7zM424.5 369.5h1.2v1.2h-1.2zM487.2 250.8h0.7v0.7h-0.7zM468.1 345.8h1.0v1.0h-1.0zM435.6 326.4h0.8v0.8h-0.8zM490.8 264.8h1.2v1.2h-1.2zM495.1 326.4h1.3v1.3h-1.3zM430.7 284.8h1.3v1.3h-1.3zM442.9 354.5h1.5v1.5h-1.5zM414.3 267.9h0.6v0.6h-0.6zM430.7 294.5h1.1v1.1h-1.1zM459.3 267.9h1.4v1.4h-1.4zM429.7 277.7h0.8v0.8h-0.8zM427.9 307.3h0.8v0.8h-0.8zM475.8 274.0h0.8v0.8h-0.8zM465.8 381.0h1.4v1.4h-1.4zM430.6 369.4h1.0v1.0h-1.0zM491.2 328.5h0.7v0.7h-0.7zM396.4 242.4h0.7v0.7h-0.7zM458.6 291.6h1.4v1.4h-1.4zM425.0 313.5h1.1v1.1h-1.1zM444.0 376.5h1.3v1.3h-1.3zM467.1 275.5h1.2v1.2h-1.2zM415.5 258.9h0.6v0.6h-0.6zM466.3 337.8h1.1v1.1h-1.1zM482.6 387.7h1.3v1.3h-1.3zM403.1 315.7h1.4v1.4h-1.4zM455.1 272.3h0.6v0.6h-0.6zM425.1 263.6h1.1v1.1h-1.1zM458.2 280.6h0.7v0.7h-0.7zM470.5 382.9h0.7v0.7h-0.7zM478.4 264.8h1.1v1.1h-1.1zM483.6 384.7h1.5v1.5h-1.5zM431.2 300.1h1.2v1.2h-1.2zM448.1 371.9h1.4v1.4h-1.4zM477.7 308.8h0.6v0.6h-0.6zM442.2 339.5h0.7v0.7h-0.7zM393.0 392.2h0.9v0.9h-0.9zM498.0 313.2h0.9v0.9h-0.9zM435.6 325.9h0.7v0.7h-0.7zM441.6 274.4h0.6v0.6h-0.6zM490.9 276.1h0.7v0.7h-0.7zM452.6 358.4h0.8v0.8h-0.8zM452.2 315.1h1.4v1.4h-1.4zM417.3 279.4h1.1v1.1h-1.1zM438.6 260.5h0.6v0.6h-0.6zM420.2 384.7h0.7v0.7h-0.7zM426.7 327.7h0.9v0.9h-0.9zM474.3 295.9h0.7v0.7h-0.7zM404.2 327.9h0.9v0.9h-0.9zM470.7 339.5h1.1v1.1h-1.1zM464.3 358.7h1.2v1.2h-1.2zM476.5 249.5h1.1v1.1h-1.1zM450.5 295.3h1.4v1.4h-1.4zM425.3 314.9h0.9v0.9h-0.9zM476.3 309.1h1.0v1.0h-1.0zM421.7 311.2h0.6v0.6h-0.6zM441.8 242.6h0.7v0.7h-0.7zM501.7 356.1h1.5v1.5h-1.5zM460.3 295.6h0.9v0.9h-0.9zM487.5 350.5h0.7v0.7h-0.7zM436.6 309.0h0.8v0.8h-0.8zM404.4 256.3h0.8v0.8h-0.8zM455.3 265.2h1.2v1.2h-1.2zM452.8 266.8h0.6v0.6h-0.6zM428.8 285.8h0.7v0.7h-0.7zM436.8 264.8h0.7v0.7h-0.7zM439.0 317.8h0.9v0.9h-0.9zM470.5 335.0h1.4v1.4h-1.4zM469.0 347.5h1.3v1.3h-1.3zM491.7 314.0h1.3v1.3h-1.3zM410.9 308.2h1.1v1.1h-1.1zM416.8 357.0h0.7v0.7h-0.7zM433.3 285.9h1.5v1.5h-1.5zM424.8 303.4h1.2v1.2h-1.2zM489.6 301.3h1.3v1.3h-1.3zM482.7 317.8h1.5v1.5h-1.5zM465.2 324.1h0.8v0.8h-0.8zM439.6 267.2h1.3v1.3h-1.3zM441.5 242.7h0.7v0.7h-0.7zM404.0 260.9h1.3v1.3h-1.3zM454.4 271.7h0.8v0.8h-0.8zM463.7 266.8h0.9v0.9h-0.9zM441.5 348.3h1.3v1.3h-1.3zM395.8 368.6h0.6v0.6h-0.6zM462.4 381.6h0.7v0.7h-0.7zM400.9 381.5h1.4v1.4h-1.4zM410.4 374.2h0.7v0.7h-0.7zM432.0 254.5h1.3v1.3h-1.3zM426.8 317.2h1.2v1.2h-1.2zM488.7 356.3h0.8v0.8h-0.8zM443.4 330.9h1.2v1.2h-1.2zM435.7 345.4h1.1v1.1h-1.1zM467.3 366.4h0.7v0.7h-0.7zM421.1 254.2h1.0v1.0h-1.0zM429.4 250.8h1.0v1.0h-1.0zM464.7 343.3h0.6v0.6h-0.6zM457.3 269.0h0.7v0.7h-0.7zM420.4 330.6h1.3v1.3h-1.3zM472.6 242.9h1.0v1.0h-1.0zM450.7 362.6h0.6v0.6h-0.6zM419.0 305.7h0.7v0.7h-0.7zM424.1 307.1h1.4v1.4h-1.4zM477.3 345.1h1.5v1.5h-1.5zM414.1 350.8h1.2v1.2h-1.2zM493.2 371.4h0.9v0.9h-0.9zM418.4 282.4h0.7v0.7h-0.7zM458.2 292.3h0.8v0.8h-0.8zM432.8 254.0h0.6v0.6h-0.6zM446.0 314.8h0.6v0.6h-0.6zM429.1 279.5h0.7v0.7h-0.7zM432.3 267.0h0.8v0.8h-0.8zM465.9 351.6h1.2v1.2h-1.2zM458.2 285.1h0.9v0.9h-0.9zM461.3 392.8h1.1v1.1h-1.1zM437.6 251.5h1.4v1.4h-1.4zM471.7 290.3h1.4v1.4h-1.4zM429.0 377.1h0.9v0.9h-0.9zM451.6 323.4h1.0v1.0h-1.0zM471.5 291.0h0.8v0.8h-0.8zM426.3 359.1h1.0v1.0h-1.0zM464.9 251.0h0.7v0.7h-0.7zM452.5 361.4h0.7v0.7h-0.7zM480.5 302.0h1.0v1.0h-1.0zM422.4 386.8h1.4v1.4h-1.4zM459.8 249.2h1.2v1.2h-1.2zM470.8 304.4h1.3v1.3h-1.3zM434.3 252.9h0.8v0.8h-0.8zM421.0 365.9h1.0v1.0h-1.0zM467.0 356.8h1.0v1.0h-1.0zM440.8 343.8h1.0v1.0h-1.0zM449.4 387.9h1.1v1.1h-1.1zM481.6 266.0h1.3v1.3h-1.3zM478.1 392.8h1.2v1.2h-1.2zM473.6 263.3h0.7v0.7h-0.7zM419.2 349.1h1.2v1.2h-1.2zM469.9 294.1h1.2v1.2h-1.2zM473.7 387.5h1.3v1.3h-1.3zM393.4 280.6h1.4v1.4h-1.4zM404.8 250.1h1.4v1.4h-1.4zM480.6 351.7h0.7v0.7h-0.7zM486.4 355.4h1.3v1.3h-1.3zM449.8 261.5h0.6v0.6h-0.6zM420.2 339.0h0.8v0.8h-0.8zM426.0 316.6h0.9v0.9h-0.9zM451.3 368.1h1.1v1.1h-1.1zM455.7 357.8h1.3v1.3h-1.3zM393.3 313.9h1.4v1.4h-1.4zM423.4 259.1h0.7v0.7h-0.7zM455.1 294.0h1.1v1.1h-1.1zM486.8 245.4h1.1v1.1h-1.1zM494.9 354.4h0.8v0.8h-0.8zM489.7 323.6h1.0v1.0h-1.0zM458.6 289.1h0.8v0.8h-0.8zM401.9 242.1h0.8v0.8h-0.8zM419.6 329.5h0.7v0.7h-0.7zM432.8 261.6h0.7v0.7h-0.7zM464.9 375.5h1.0v1.0h-1.0zM437.9 319.0h0.9v0.9h-0.9zM485.9 290.2h0.7v0.7h-0.7zM424.7 243.6h0.8v0.8h-0.8zM452.3 376.4h0.8v0.8h-0.8zM422.2 301.7h1.3v1.3h-1.3zM466.1 360.0h1.3v1.3h-1.3zM400.8 259.5h1.1v1.1h-1.1zM447.6 244.8h1.3v1.3h-1.3zM440.0 360.8h0.7v0.7h-0.7zM457.5 365.7h0.8v0.8h-0.8zM426.9 323.9h0.9v0.9h-0.9zM436.6 369.6h1.2v1.2h-1.2zM488.2 368.0h1.3v1.3h-1.3zM421.0 247.7h1.1v1.1h-1.1zM417.3 311.2h0.9v0.9h-0.9zM453.9 381.8h1.2v1.2h-1.2zM400.9 378.5h1.1v1.1h-1.1zM421.8 272.9h1.0v1.0h-1.0zM481.6 296.4h0.6v0.6h-0.6zM464.2 267.9h1.0v1.0h-1.0zM489.3 338.1h0.9v0.9h-0.9zM409.0 381.2h1.1v1.1h-1.1zM456.6 277.0h1.2v1.2h-1.2zM400.1 334.1h1.1v1.1h-1.1zM441.1 379.3h1.1v1.1h-1.1zM461.0 350.4h1.3v1.3h-1.3zM413.5 260.5h1.2v1.2h-1.2zM467.0 381.3h0.8v0.8h-0.8zM403.8 243.2h1.5v1.5h-1.5zM485.4 271.8h1.2v1.2h-1.2zM491.6 334.4h1.0v1.0h-1.0zM475.6 373.0h1.2v1.2h-1.2zM472.6 292.0h1.4v1.4h-1.4zM408.7 363.8h1.3v1.3h-1.3zM424.9 302.4h0.7v0.7h-0.7zM412.1 314.3h1.1v1.1h-1.1zM400.3 305.3h0.6v0.6h-0.6zM426.0 249.7h1.2v1.2h-1.2zM459.5 303.5h1.1v1.1h-1.1zM440.6 276.2h0.8v0.8h-0.8zM412.4 324.5h1.4v1.4h-1.4zM440.1 359.0h1.3v1.3h-1.3zM440.0 300.9h1.4v1.4h-1.4zM489.7 309.2h1.4v1.4h-1.4zM466.0 270.6h1.3v1.3h-1.3zM421.1 358.3h1.4v1.4h-1.4z"/><path fill="#5a4522" d="M477.1 291.6h1.1v1.1h-1.1zM422.9 268.7h1.0v1.0h-1.0zM444.6 246.3h0.8v0.8h-0.8zM493.6 261.7h0.8v0.8h-0.8zM410.3 333.7h1.3v1.3h-1.3zM404.1 303.2h1.1v1.1h-1.1zM413.5 298.7h0.8v0.8h-0.8zM395.6 392.3h1.0v1.0h-1.0zM447.8 350.7h1.1v1.1h-1.1zM406.0 300.7h0.9v0.9h-0.9zM408.4 340.7h0.8v0.8h-0.8zM468.2 349.0h0.8v0.8h-0.8zM433.1 293.9h1.2v1.2h-1.2zM490.4 375.8h0.9v0.9h-0.9zM469.0 280.1h0.9v0.9h-0.9zM410.9 382.4h1.3v1.3h-1.3zM421.2 333.7h0.8v0.8h-0.8zM463.8 282.7h0.7v0.7h-0.7zM481.4 374.7h1.0v1.0h-1.0zM400.6 393.8h0.8v0.8h-0.8zM461.9 250.6h1.1v1.1h-1.1zM412.3 323.3h1.1v1.1h-1.1zM425.4 267.8h0.8v0.8h-0.8zM491.6 327.5h0.7v0.7h-0.7zM393.7 387.0h0.8v0.8h-0.8zM475.4 322.1h0.7v0.7h-0.7zM392.7 357.9h0.7v0.7h-0.7zM462.8 345.6h0.9v0.9h-0.9zM500.9 253.5h1.3v1.3h-1.3zM451.2 250.5h1.2v1.2h-1.2zM393.9 331.8h0.7v0.7h-0.7zM490.4 278.7h0.8v0.8h-0.8zM423.3 279.2h1.1v1.1h-1.1zM420.0 343.5h1.0v1.0h-1.0zM434.8 254.1h1.1v1.1h-1.1zM433.0 380.6h1.0v1.0h-1.0zM492.7 273.7h1.4v1.4h-1.4zM493.3 373.9h0.8v0.8h-0.8zM405.3 281.1h1.4v1.4h-1.4zM428.0 252.8h1.2v1.2h-1.2zM390.1 337.5h1.1v1.1h-1.1zM440.9 269.1h1.2v1.2h-1.2zM482.5 243.1h1.1v1.1h-1.1zM438.4 353.7h1.4v1.4h-1.4zM395.9 366.4h1.3v1.3h-1.3zM463.1 323.9h1.3v1.3h-1.3zM479.0 243.5h0.8v0.8h-0.8zM424.6 284.9h1.3v1.3h-1.3zM401.9 307.7h1.0v1.0h-1.0zM477.6 288.1h1.1v1.1h-1.1zM398.4 297.5h1.0v1.0h-1.0zM430.2 282.5h1.3v1.3h-1.3zM393.5 314.6h1.2v1.2h-1.2zM477.2 332.3h1.1v1.1h-1.1zM475.0 265.5h0.8v0.8h-0.8zM426.6 290.9h1.0v1.0h-1.0zM472.0 253.8h1.4v1.4h-1.4zM460.5 261.1h1.3v1.3h-1.3zM407.4 342.0h1.0v1.0h-1.0zM492.0 247.2h0.9v0.9h-0.9zM408.0 294.4h1.3v1.3h-1.3zM474.4 382.0h1.2v1.2h-1.2zM494.8 258.1h0.9v0.9h-0.9zM496.5 308.7h1.0v1.0h-1.0zM498.7 251.0h0.8v0.8h-0.8zM490.3 359.8h1.2v1.2h-1.2zM392.4 365.3h0.8v0.8h-0.8zM408.5 249.2h1.3v1.3h-1.3zM470.4 273.5h1.2v1.2h-1.2zM420.2 383.1h1.1v1.1h-1.1zM451.9 369.9h1.0v1.0h-1.0zM481.0 355.3h1.2v1.2h-1.2zM404.6 334.0h1.2v1.2h-1.2zM439.4 284.7h0.9v0.9h-0.9zM420.5 275.2h0.9v0.9h-0.9zM398.5 368.8h1.1v1.1h-1.1zM436.4 388.4h1.1v1.1h-1.1zM484.9 306.6h1.2v1.2h-1.2zM470.1 336.4h1.4v1.4h-1.4zM399.3 366.1h0.9v0.9h-0.9zM403.5 353.4h1.0v1.0h-1.0zM420.2 280.4h1.1v1.1h-1.1zM412.5 391.8h1.1v1.1h-1.1zM394.2 284.8h0.7v0.7h-0.7zM442.9 328.1h1.3v1.3h-1.3zM409.3 294.7h0.7v0.7h-0.7zM490.6 326.0h1.2v1.2h-1.2zM411.1 277.8h1.2v1.2h-1.2zM396.9 265.9h0.9v0.9h-0.9zM395.8 316.0h1.2v1.2h-1.2zM414.1 298.6h1.0v1.0h-1.0zM471.4 259.1h1.0v1.0h-1.0zM499.8 300.5h1.0v1.0h-1.0zM431.3 271.8h0.7v0.7h-0.7zM461.1 379.8h0.9v0.9h-0.9zM397.9 354.6h1.3v1.3h-1.3zM469.7 374.5h0.9v0.9h-0.9zM440.6 263.8h1.4v1.4h-1.4zM495.0 250.3h0.7v0.7h-0.7zM432.6 387.8h1.0v1.0h-1.0zM501.3 310.6h0.7v0.7h-0.7zM474.9 363.4h0.8v0.8h-0.8zM435.8 311.6h1.1v1.1h-1.1zM484.6 258.5h1.3v1.3h-1.3zM500.2 253.3h1.4v1.4h-1.4zM474.0 270.4h1.1v1.1h-1.1zM413.8 308.7h1.3v1.3h-1.3zM405.3 296.3h1.1v1.1h-1.1zM391.3 356.5h0.9v0.9h-0.9zM448.6 250.9h0.8v0.8h-0.8zM411.8 264.6h1.3v1.3h-1.3zM395.4 274.4h0.9v0.9h-0.9zM404.5 384.1h0.8v0.8h-0.8zM493.8 311.8h0.9v0.9h-0.9zM391.6 374.2h1.0v1.0h-1.0zM403.6 288.8h1.1v1.1h-1.1zM409.1 258.8h1.0v1.0h-1.0zM413.7 297.5h1.0v1.0h-1.0zM443.1 326.7h0.7v0.7h-0.7zM490.9 332.8h0.9v0.9h-0.9zM451.0 247.5h1.2v1.2h-1.2zM463.0 297.4h1.3v1.3h-1.3zM391.7 379.2h0.7v0.7h-0.7zM437.6 243.0h1.0v1.0h-1.0zM392.3 288.7h1.2v1.2h-1.2zM497.7 302.0h1.1v1.1h-1.1zM492.4 375.2h1.3v1.3h-1.3zM501.3 373.4h1.0v1.0h-1.0zM500.9 367.9h0.7v0.7h-0.7zM488.6 330.7h1.1v1.1h-1.1zM492.2 260.1h1.2v1.2h-1.2zM494.9 252.5h0.8v0.8h-0.8zM464.9 258.4h1.4v1.4h-1.4zM446.1 379.9h1.1v1.1h-1.1zM432.5 358.0h1.2v1.2h-1.2zM428.1 346.7h1.3v1.3h-1.3zM473.8 387.7h0.9v0.9h-0.9zM423.0 280.3h0.8v0.8h-0.8zM407.6 288.1h0.9v0.9h-0.9zM395.9 368.8h1.1v1.1h-1.1zM425.4 256.7h1.0v1.0h-1.0zM448.2 302.6h0.7v0.7h-0.7zM442.6 305.6h1.1v1.1h-1.1zM416.5 266.6h0.9v0.9h-0.9zM407.4 271.8h1.2v1.2h-1.2zM395.6 384.6h1.4v1.4h-1.4zM472.3 350.1h1.3v1.3h-1.3zM492.2 242.5h1.3v1.3h-1.3zM448.7 294.1h0.9v0.9h-0.9zM493.8 249.6h0.9v0.9h-0.9zM433.7 248.7h1.4v1.4h-1.4zM454.6 392.8h0.9v0.9h-0.9zM399.3 340.0h0.9v0.9h-0.9zM481.1 301.8h0.8v0.8h-0.8zM402.7 331.2h0.9v0.9h-0.9zM408.3 269.7h0.7v0.7h-0.7zM413.3 342.1h0.9v0.9h-0.9zM415.4 271.2h0.7v0.7h-0.7zM411.7 311.7h1.2v1.2h-1.2zM424.6 256.7h1.0v1.0h-1.0zM460.6 385.0h1.1v1.1h-1.1zM452.7 279.7h1.3v1.3h-1.3zM498.9 370.6h1.2v1.2h-1.2zM408.7 331.9h1.2v1.2h-1.2zM443.4 270.1h1.3v1.3h-1.3zM498.8 382.9h0.8v0.8h-0.8zM401.3 275.4h1.1v1.1h-1.1zM485.5 357.5h1.4v1.4h-1.4zM444.4 274.6h0.9v0.9h-0.9zM497.4 284.8h0.9v0.9h-0.9zM419.8 377.6h1.3v1.3h-1.3zM453.5 266.9h1.2v1.2h-1.2zM408.1 256.2h1.2v1.2h-1.2zM403.5 364.3h1.4v1.4h-1.4zM501.9 351.8h1.3v1.3h-1.3zM436.3 269.6h0.8v0.8h-0.8zM391.5 285.9h0.8v0.8h-0.8zM475.9 379.6h1.2v1.2h-1.2zM486.2 273.0h0.9v0.9h-0.9zM422.5 385.9h1.2v1.2h-1.2zM482.0 343.6h1.4v1.4h-1.4zM433.5 292.0h1.3v1.3h-1.3zM400.6 267.3h0.7v0.7h-0.7zM402.2 350.7h0.7v0.7h-0.7zM500.8 382.5h1.2v1.2h-1.2zM404.5 282.7h1.1v1.1h-1.1zM494.4 381.3h0.9v0.9h-0.9zM402.4 339.3h0.9v0.9h-0.9zM440.9 378.8h1.1v1.1h-1.1zM390.1 274.4h1.2v1.2h-1.2zM410.9 343.8h1.0v1.0h-1.0zM405.7 339.6h0.9v0.9h-0.9zM404.9 294.9h0.9v0.9h-0.9zM409.1 363.9h1.0v1.0h-1.0zM401.9 312.2h0.9v0.9h-0.9zM415.6 330.1h1.2v1.2h-1.2zM501.5 359.6h1.1v1.1h-1.1zM428.3 292.3h0.9v0.9h-0.9zM420.7 307.3h0.8v0.8h-0.8zM401.4 382.3h1.4v1.4h-1.4zM393.9 366.6h0.9v0.9h-0.9zM404.3 280.5h1.3v1.3h-1.3zM399.7 256.5h0.8v0.8h-0.8zM421.1 325.6h1.1v1.1h-1.1zM412.3 318.8h1.0v1.0h-1.0zM454.3 275.4h1.0v1.0h-1.0zM499.3 270.2h1.3v1.3h-1.3zM427.8 259.8h0.9v0.9h-0.9zM406.2 252.1h0.8v0.8h-0.8zM487.3 348.9h1.2v1.2h-1.2zM406.6 268.8h1.1v1.1h-1.1zM402.8 306.3h1.2v1.2h-1.2zM500.5 283.5h1.2v1.2h-1.2zM414.2 319.5h0.9v0.9h-0.9zM469.1 361.4h1.1v1.1h-1.1zM407.0 355.9h0.9v0.9h-0.9zM399.9 378.6h1.2v1.2h-1.2zM499.4 255.9h1.4v1.4h-1.4zM431.4 286.6h0.8v0.8h-0.8zM490.5 376.6h1.4v1.4h-1.4zM496.6 378.7h0.8v0.8h-0.8zM435.2 358.0h0.7v0.7h-0.7zM407.6 313.2h0.8v0.8h-0.8zM443.0 385.9h0.7v0.7h-0.7zM471.8 299.0h1.2v1.2h-1.2zM484.3 271.6h1.0v1.0h-1.0zM455.6 325.5h0.9v0.9h-0.9zM390.2 269.3h1.2v1.2h-1.2zM421.6 261.7h1.2v1.2h-1.2zM483.8 356.2h0.9v0.9h-0.9zM495.3 381.7h0.9v0.9h-0.9zM475.8 287.8h1.1v1.1h-1.1zM498.1 371.6h1.3v1.3h-1.3zM501.1 341.7h1.2v1.2h-1.2zM427.8 337.9h1.4v1.4h-1.4zM440.3 300.1h1.3v1.3h-1.3zM486.8 369.4h1.4v1.4h-1.4zM393.9 358.5h0.8v0.8h-0.8zM399.1 258.4h1.1v1.1h-1.1zM492.6 322.3h0.8v0.8h-0.8zM441.6 336.4h0.8v0.8h-0.8zM396.7 304.2h1.2v1.2h-1.2zM496.1 313.8h1.0v1.0h-1.0zM494.4 333.8h0.8v0.8h-0.8zM433.6 332.6h0.8v0.8h-0.8zM392.5 297.1h0.8v0.8h-0.8zM467.1 318.8h1.0v1.0h-1.0zM468.6 340.6h1.1v1.1h-1.1zM462.3 366.9h0.8v0.8h-0.8zM404.7 265.8h0.9v0.9h-0.9zM473.4 274.0h1.1v1.1h-1.1zM483.2 316.9h1.1v1.1h-1.1zM464.4 362.6h1.3v1.3h-1.3zM420.9 389.5h1.1v1.1h-1.1zM424.7 371.0h0.8v0.8h-0.8zM415.5 302.7h0.8v0.8h-0.8zM391.6 258.9h1.1v1.1h-1.1zM456.8 249.0h0.8v0.8h-0.8zM483.5 383.0h0.9v0.9h-0.9zM403.3 260.4h1.3v1.3h-1.3zM403.5 254.2h0.9v0.9h-0.9zM499.0 251.0h1.3v1.3h-1.3zM486.4 356.4h1.4v1.4h-1.4zM391.6 247.2h1.2v1.2h-1.2zM442.2 341.7h0.8v0.8h-0.8zM419.3 368.8h1.2v1.2h-1.2zM391.0 325.4h0.9v0.9h-0.9zM491.4 312.1h0.7v0.7h-0.7zM410.2 360.1h0.8v0.8h-0.8zM464.0 386.1h1.0v1.0h-1.0zM423.8 299.9h1.4v1.4h-1.4zM472.5 306.5h1.2v1.2h-1.2zM424.5 290.2h1.2v1.2h-1.2zM437.8 295.1h0.9v0.9h-0.9zM438.1 267.0h0.9v0.9h-0.9zM399.0 351.6h1.4v1.4h-1.4zM493.5 321.9h1.2v1.2h-1.2zM455.8 332.4h1.3v1.3h-1.3zM417.5 355.3h1.2v1.2h-1.2zM481.0 353.0h1.3v1.3h-1.3zM397.5 390.0h0.8v0.8h-0.8zM493.8 325.7h1.2v1.2h-1.2zM472.7 256.4h1.2v1.2h-1.2zM457.8 362.8h1.1v1.1h-1.1zM489.4 369.5h1.3v1.3h-1.3zM466.7 261.5h1.0v1.0h-1.0zM474.8 308.4h0.9v0.9h-0.9zM489.3 379.3h1.2v1.2h-1.2zM396.5 285.7h0.8v0.8h-0.8zM394.7 380.4h1.1v1.1h-1.1zM447.8 317.3h1.2v1.2h-1.2zM482.3 254.4h1.0v1.0h-1.0zM438.1 300.7h0.9v0.9h-0.9zM495.9 301.0h1.1v1.1h-1.1zM484.3 294.0h1.1v1.1h-1.1zM475.2 295.4h0.8v0.8h-0.8zM399.0 249.4h1.2v1.2h-1.2zM487.2 331.9h0.8v0.8h-0.8zM407.4 392.0h0.9v0.9h-0.9zM428.4 323.8h1.3v1.3h-1.3zM482.8 317.0h1.4v1.4h-1.4zM469.6 269.3h0.8v0.8h-0.8zM414.0 352.5h1.0v1.0h-1.0zM451.6 280.3h1.1v1.1h-1.1zM479.7 320.0h0.9v0.9h-0.9zM467.4 269.8h1.2v1.2h-1.2zM411.3 323.9h1.1v1.1h-1.1zM451.6 320.4h1.0v1.0h-1.0zM447.7 381.4h1.4v1.4h-1.4zM443.2 354.9h1.2v1.2h-1.2zM430.4 251.9h1.4v1.4h-1.4zM443.5 375.1h1.1v1.1h-1.1zM464.0 259.8h0.8v0.8h-0.8zM452.9 309.3h0.8v0.8h-0.8zM411.4 288.3h0.8v0.8h-0.8zM430.3 367.3h1.3v1.3h-1.3zM413.3 360.1h1.3v1.3h-1.3zM396.1 345.6h1.0v1.0h-1.0zM395.3 322.7h1.3v1.3h-1.3zM459.7 291.0h1.3v1.3h-1.3zM408.2 389.8h1.0v1.0h-1.0zM466.6 278.4h1.1v1.1h-1.1zM461.6 249.7h1.0v1.0h-1.0zM470.1 353.7h0.8v0.8h-0.8zM476.6 242.7h0.8v0.8h-0.8zM472.1 276.6h1.3v1.3h-1.3zM452.3 369.7h0.9v0.9h-0.9zM484.6 350.3h0.7v0.7h-0.7zM402.5 356.5h1.3v1.3h-1.3zM483.6 288.7h1.0v1.0h-1.0zM499.2 326.3h1.3v1.3h-1.3zM496.6 293.7h1.4v1.4h-1.4zM470.2 282.3h0.8v0.8h-0.8zM450.7 325.9h1.0v1.0h-1.0zM400.4 296.8h1.2v1.2h-1.2zM440.6 380.8h1.3v1.3h-1.3zM414.2 334.0h0.9v0.9h-0.9zM399.5 324.8h1.3v1.3h-1.3zM403.7 249.7h1.2v1.2h-1.2zM401.6 341.6h0.9v0.9h-0.9zM468.0 260.0h1.3v1.3h-1.3zM495.1 377.2h1.3v1.3h-1.3zM468.8 389.6h1.2v1.2h-1.2zM454.6 253.7h1.0v1.0h-1.0zM474.3 300.5h1.2v1.2h-1.2zM432.3 359.4h0.7v0.7h-0.7zM488.7 355.6h1.1v1.1h-1.1zM485.4 273.4h1.1v1.1h-1.1zM494.5 385.6h1.0v1.0h-1.0zM432.5 321.8h0.7v0.7h-0.7zM493.0 340.5h0.7v0.7h-0.7zM497.4 364.7h0.9v0.9h-0.9zM498.4 383.3h1.4v1.4h-1.4zM489.0 311.0h1.3v1.3h-1.3zM475.2 257.6h1.1v1.1h-1.1zM444.0 326.1h0.9v0.9h-0.9zM453.9 325.9h1.3v1.3h-1.3zM489.5 357.4h1.3v1.3h-1.3zM475.5 287.8h0.9v0.9h-0.9zM413.2 276.5h1.3v1.3h-1.3zM415.6 349.4h1.1v1.1h-1.1zM477.3 266.2h1.1v1.1h-1.1zM392.4 265.6h1.2v1.2h-1.2zM413.4 317.0h1.4v1.4h-1.4zM404.6 311.7h0.7v0.7h-0.7zM495.1 244.7h0.7v0.7h-0.7zM396.1 345.5h0.9v0.9h-0.9zM392.1 286.7h1.4v1.4h-1.4zM460.5 322.7h1.0v1.0h-1.0zM440.8 361.6h0.8v0.8h-0.8zM409.7 329.0h1.1v1.1h-1.1zM395.5 277.3h0.9v0.9h-0.9zM479.5 320.6h1.0v1.0h-1.0zM496.2 324.2h0.8v0.8h-0.8zM485.5 386.7h1.4v1.4h-1.4zM412.6 270.2h1.0v1.0h-1.0zM496.9 348.7h1.0v1.0h-1.0zM399.1 378.8h1.2v1.2h-1.2zM439.6 393.3h0.7v0.7h-0.7zM435.0 325.7h0.8v0.8h-0.8zM475.8 389.4h1.0v1.0h-1.0zM463.8 367.3h0.7v0.7h-0.7zM492.6 266.5h1.4v1.4h-1.4zM478.8 258.4h1.3v1.3h-1.3zM412.5 360.5h0.8v0.8h-0.8zM472.4 364.1h1.3v1.3h-1.3zM396.6 280.0h0.9v0.9h-0.9zM492.2 248.0h1.1v1.1h-1.1zM474.8 369.2h1.1v1.1h-1.1zM395.7 278.2h0.8v0.8h-0.8zM437.3 360.1h0.9v0.9h-0.9zM427.8 243.4h1.4v1.4h-1.4zM408.1 335.7h1.3v1.3h-1.3zM494.2 339.7h1.2v1.2h-1.2zM390.5 368.1h1.4v1.4h-1.4zM429.9 385.3h1.3v1.3h-1.3zM480.1 387.1h1.0v1.0h-1.0zM434.0 263.7h1.3v1.3h-1.3zM420.8 245.2h1.2v1.2h-1.2zM446.5 307.9h0.9v0.9h-0.9zM414.9 298.3h1.3v1.3h-1.3zM392.8 281.9h1.0v1.0h-1.0zM407.6 385.1h0.8v0.8h-0.8zM407.6 351.9h0.8v0.8h-0.8zM494.0 313.5h1.1v1.1h-1.1zM484.0 265.8h1.3v1.3h-1.3zM491.4 323.0h1.2v1.2h-1.2zM397.3 274.6h1.3v1.3h-1.3zM452.2 324.3h0.9v0.9h-0.9zM492.7 306.8h1.1v1.1h-1.1zM485.9 288.3h1.0v1.0h-1.0zM463.6 389.8h0.8v0.8h-0.8zM499.2 277.7h1.1v1.1h-1.1zM458.4 260.6h0.8v0.8h-0.8zM483.2 369.8h1.3v1.3h-1.3zM427.9 255.1h1.3v1.3h-1.3zM393.4 368.9h1.0v1.0h-1.0zM494.2 375.4h1.1v1.1h-1.1zM483.1 340.8h0.9v0.9h-0.9zM491.4 257.8h0.9v0.9h-0.9zM412.0 341.2h0.7v0.7h-0.7zM391.7 363.8h0.8v0.8h-0.8zM391.1 303.0h1.0v1.0h-1.0zM406.5 319.1h0.9v0.9h-0.9zM462.4 376.0h0.7v0.7h-0.7zM402.0 303.3h0.9v0.9h-0.9zM431.2 386.9h1.4v1.4h-1.4zM453.7 384.6h1.3v1.3h-1.3zM501.1 332.1h1.0v1.0h-1.0zM500.5 291.4h1.3v1.3h-1.3zM439.1 387.2h1.0v1.0h-1.0zM454.4 390.2h0.9v0.9h-0.9zM435.0 311.1h1.3v1.3h-1.3zM398.9 281.1h1.3v1.3h-1.3zM400.3 251.9h1.2v1.2h-1.2zM471.1 284.7h0.7v0.7h-0.7zM463.0 259.4h1.0v1.0h-1.0zM448.4 318.1h0.7v0.7h-0.7zM453.2 264.9h1.2v1.2h-1.2zM396.0 387.2h0.7v0.7h-0.7zM406.9 248.0h1.0v1.0h-1.0zM411.0 310.2h1.0v1.0h-1.0zM423.2 261.5h0.8v0.8h-0.8zM481.9 387.3h1.2v1.2h-1.2zM459.9 375.6h0.9v0.9h-0.9zM500.3 342.8h1.2v1.2h-1.2zM494.3 306.2h1.3v1.3h-1.3zM403.5 266.1h0.7v0.7h-0.7zM439.6 275.4h1.1v1.1h-1.1zM485.9 383.0h1.0v1.0h-1.0zM398.8 365.9h1.1v1.1h-1.1zM490.7 316.9h1.3v1.3h-1.3zM485.4 344.3h0.7v0.7h-0.7zM426.7 361.7h0.9v0.9h-0.9zM401.1 350.0h1.2v1.2h-1.2zM457.3 389.0h1.1v1.1h-1.1zM410.5 273.8h1.0v1.0h-1.0zM392.8 330.6h1.2v1.2h-1.2zM410.7 336.8h1.1v1.1h-1.1zM433.4 325.0h0.9v0.9h-0.9zM496.0 384.9h1.1v1.1h-1.1zM391.4 265.0h1.1v1.1h-1.1zM490.0 305.0h1.4v1.4h-1.4zM398.1 319.4h0.8v0.8h-0.8zM403.7 311.9h0.8v0.8h-0.8zM418.3 262.5h1.0v1.0h-1.0zM496.4 243.4h1.2v1.2h-1.2zM410.2 304.8h0.9v0.9h-0.9zM391.2 282.7h1.2v1.2h-1.2zM452.4 245.1h0.9v0.9h-0.9zM475.7 254.1h0.9v0.9h-0.9zM474.6 246.0h1.2v1.2h-1.2zM470.2 262.3h1.0v1.0h-1.0zM501.2 264.2h0.9v0.9h-0.9zM462.6 315.1h0.7v0.7h-0.7zM493.6 244.6h0.8v0.8h-0.8zM491.5 346.0h0.9v0.9h-0.9zM497.0 370.2h1.0v1.0h-1.0zM452.0 243.2h1.1v1.1h-1.1zM404.0 350.2h1.3v1.3h-1.3zM412.5 375.9h1.2v1.2h-1.2zM393.9 314.5h0.9v0.9h-0.9zM437.4 325.2h0.8v0.8h-0.8zM399.2 349.9h1.0v1.0h-1.0zM474.1 271.7h0.9v0.9h-0.9zM457.0 312.6h1.3v1.3h-1.3zM458.1 246.3h1.0v1.0h-1.0zM481.9 347.8h0.8v0.8h-0.8zM442.3 247.0h1.0v1.0h-1.0zM395.0 303.4h1.1v1.1h-1.1zM415.7 379.0h1.2v1.2h-1.2zM418.0 309.6h1.3v1.3h-1.3zM490.2 250.3h1.3v1.3h-1.3zM422.0 264.3h1.1v1.1h-1.1zM390.6 380.4h1.0v1.0h-1.0zM501.1 380.6h1.2v1.2h-1.2zM456.1 338.3h1.3v1.3h-1.3zM501.2 291.6h0.9v0.9h-0.9zM499.9 351.5h1.2v1.2h-1.2zM469.7 255.6h1.3v1.3h-1.3zM399.8 340.0h0.9v0.9h-0.9zM500.6 344.9h0.8v0.8h-0.8zM398.4 354.3h1.0v1.0h-1.0zM406.8 362.1h0.7v0.7h-0.7zM394.3 259.9h0.8v0.8h-0.8zM478.2 389.6h1.2v1.2h-1.2zM390.4 245.3h1.3v1.3h-1.3zM459.5 370.8h1.2v1.2h-1.2zM435.2 355.3h0.8v0.8h-0.8zM400.2 292.1h1.0v1.0h-1.0zM437.6 348.9h1.2v1.2h-1.2zM455.0 304.1h0.7v0.7h-0.7zM468.6 287.4h1.1v1.1h-1.1zM449.1 372.3h0.9v0.9h-0.9zM442.5 303.7h0.9v0.9h-0.9zM487.8 265.4h1.3v1.3h-1.3zM421.9 382.8h1.2v1.2h-1.2zM467.9 322.1h1.0v1.0h-1.0zM457.5 385.5h1.1v1.1h-1.1zM397.4 287.6h1.2v1.2h-1.2zM399.2 253.9h1.1v1.1h-1.1zM394.0 268.4h1.0v1.0h-1.0zM474.8 259.4h0.9v0.9h-0.9zM410.1 251.2h1.3v1.3h-1.3zM500.5 388.2h1.0v1.0h-1.0zM438.9 347.8h1.1v1.1h-1.1zM498.2 321.6h1.3v1.3h-1.3zM439.2 251.4h1.2v1.2h-1.2zM499.6 363.5h0.9v0.9h-0.9zM458.1 387.9h0.8v0.8h-0.8zM402.5 306.5h0.9v0.9h-0.9zM416.1 274.4h0.9v0.9h-0.9zM472.4 325.8h0.9v0.9h-0.9zM476.7 309.1h1.3v1.3h-1.3zM421.4 290.8h1.0v1.0h-1.0zM405.7 317.8h1.2v1.2h-1.2zM425.9 357.0h0.8v0.8h-0.8zM441.4 356.1h1.0v1.0h-1.0zM485.4 378.7h1.3v1.3h-1.3zM399.3 287.4h1.0v1.0h-1.0zM396.0 274.8h1.1v1.1h-1.1zM470.0 361.9h1.4v1.4h-1.4zM498.1 371.2h0.9v0.9h-0.9zM487.4 358.6h1.0v1.0h-1.0zM410.0 263.8h1.2v1.2h-1.2zM429.9 358.9h1.3v1.3h-1.3zM391.4 382.5h1.3v1.3h-1.3zM413.1 294.1h0.9v0.9h-0.9zM485.0 323.0h0.8v0.8h-0.8zM411.3 338.3h1.2v1.2h-1.2zM482.9 281.7h0.9v0.9h-0.9zM484.7 253.6h1.0v1.0h-1.0zM487.4 252.8h1.4v1.4h-1.4zM484.2 242.2h1.2v1.2h-1.2zM496.0 279.5h0.9v0.9h-0.9zM457.0 309.3h1.3v1.3h-1.3zM399.6 373.5h0.8v0.8h-0.8zM403.6 276.5h1.3v1.3h-1.3zM397.5 256.6h1.4v1.4h-1.4zM471.2 324.5h1.3v1.3h-1.3zM488.0 385.5h0.8v0.8h-0.8zM420.0 328.5h1.1v1.1h-1.1zM455.2 295.7h0.8v0.8h-0.8zM393.2 327.7h1.1v1.1h-1.1zM436.7 255.7h1.1v1.1h-1.1zM496.7 245.7h1.0v1.0h-1.0zM439.5 268.7h1.0v1.0h-1.0zM397.0 302.3h0.7v0.7h-0.7zM439.5 302.2h1.0v1.0h-1.0zM390.8 388.2h1.4v1.4h-1.4zM434.1 353.0h1.4v1.4h-1.4zM496.7 315.4h1.4v1.4h-1.4zM468.7 332.6h0.9v0.9h-0.9zM395.0 258.4h0.8v0.8h-0.8zM398.8 347.8h1.1v1.1h-1.1zM484.8 298.1h0.7v0.7h-0.7zM496.8 325.1h0.7v0.7h-0.7zM409.5 276.6h1.2v1.2h-1.2zM452.8 291.7h0.9v0.9h-0.9zM415.6 280.8h1.2v1.2h-1.2zM481.5 251.6h1.1v1.1h-1.1zM411.2 247.6h1.0v1.0h-1.0zM393.2 335.2h1.0v1.0h-1.0zM407.7 257.5h0.8v0.8h-0.8zM467.0 330.1h1.1v1.1h-1.1zM397.3 289.9h0.7v0.7h-0.7zM500.8 252.6h1.0v1.0h-1.0zM412.8 275.7h1.3v1.3h-1.3zM497.0 380.9h1.0v1.0h-1.0zM496.5 343.2h1.1v1.1h-1.1zM391.1 254.1h0.9v0.9h-0.9zM407.5 357.6h0.9v0.9h-0.9zM457.3 393.0h0.8v0.8h-0.8zM396.0 273.8h1.3v1.3h-1.3zM442.8 290.4h0.8v0.8h-0.8zM451.3 306.6h1.1v1.1h-1.1zM436.9 364.4h1.3v1.3h-1.3zM427.8 373.6h1.0v1.0h-1.0zM414.5 329.2h1.4v1.4h-1.4zM392.2 350.6h1.4v1.4h-1.4zM471.5 257.5h0.9v0.9h-0.9zM478.4 281.5h1.2v1.2h-1.2zM397.9 346.2h1.1v1.1h-1.1zM458.9 272.7h1.1v1.1h-1.1zM486.9 325.6h0.8v0.8h-0.8zM394.8 299.2h0.7v0.7h-0.7zM486.1 292.3h1.2v1.2h-1.2zM409.5 366.8h0.7v0.7h-0.7zM487.6 334.5h1.1v1.1h-1.1zM411.0 342.8h0.9v0.9h-0.9zM396.8 269.4h1.3v1.3h-1.3zM393.7 315.7h0.8v0.8h-0.8zM430.4 373.1h1.1v1.1h-1.1zM488.5 319.9h1.0v1.0h-1.0zM477.9 261.7h0.9v0.9h-0.9zM427.9 320.0h1.2v1.2h-1.2zM489.1 378.0h1.3v1.3h-1.3zM481.0 315.8h0.8v0.8h-0.8zM401.5 379.6h1.1v1.1h-1.1zM449.8 354.5h1.2v1.2h-1.2zM392.9 381.8h0.9v0.9h-0.9zM415.8 260.2h1.2v1.2h-1.2zM422.9 376.0h1.2v1.2h-1.2zM452.2 348.4h1.4v1.4h-1.4zM467.4 252.1h1.4v1.4h-1.4zM394.2 267.0h0.8v0.8h-0.8zM486.2 363.6h1.2v1.2h-1.2zM481.7 279.5h1.3v1.3h-1.3zM491.2 285.4h0.9v0.9h-0.9zM501.2 246.5h1.2v1.2h-1.2zM419.5 376.8h0.7v0.7h-0.7zM501.8 301.4h1.1v1.1h-1.1zM487.7 307.9h1.0v1.0h-1.0zM398.4 385.6h0.8v0.8h-0.8zM459.2 321.6h1.1v1.1h-1.1zM466.5 390.8h1.0v1.0h-1.0zM486.3 355.8h1.3v1.3h-1.3zM442.0 253.8h1.0v1.0h-1.0zM404.3 301.9h1.2v1.2h-1.2zM441.6 276.3h0.9v0.9h-0.9zM422.9 393.0h0.8v0.8h-0.8zM419.5 371.0h0.8v0.8h-0.8zM501.6 318.9h1.1v1.1h-1.1zM438.5 243.9h1.2v1.2h-1.2zM491.7 292.1h0.9v0.9h-0.9zM501.0 346.4h0.9v0.9h-0.9zM398.4 270.0h0.8v0.8h-0.8zM442.4 282.7h1.4v1.4h-1.4zM467.9 242.5h1.0v1.0h-1.0zM393.4 243.7h0.9v0.9h-0.9zM490.3 386.2h1.0v1.0h-1.0zM456.8 317.9h1.0v1.0h-1.0zM450.1 259.2h0.8v0.8h-0.8zM390.6 365.8h1.4v1.4h-1.4zM490.8 249.2h1.3v1.3h-1.3zM469.8 343.4h0.8v0.8h-0.8zM463.3 343.1h1.3v1.3h-1.3zM409.2 341.7h1.2v1.2h-1.2zM483.2 292.8h0.9v0.9h-0.9zM489.4 310.9h0.9v0.9h-0.9zM479.6 342.6h1.2v1.2h-1.2zM440.5 252.9h0.8v0.8h-0.8zM439.0 389.8h1.3v1.3h-1.3zM435.7 291.5h0.7v0.7h-0.7zM471.3 362.9h1.2v1.2h-1.2zM472.0 378.3h0.7v0.7h-0.7zM400.1 285.3h1.0v1.0h-1.0zM416.3 308.1h1.4v1.4h-1.4zM405.4 300.4h0.9v0.9h-0.9zM413.0 300.2h1.3v1.3h-1.3zM404.4 359.1h1.0v1.0h-1.0zM422.9 257.8h1.1v1.1h-1.1zM410.1 363.2h1.2v1.2h-1.2zM443.8 321.4h0.9v0.9h-0.9zM425.6 260.4h1.0v1.0h-1.0zM395.0 262.3h1.0v1.0h-1.0zM491.0 341.9h1.2v1.2h-1.2zM493.7 301.2h1.1v1.1h-1.1zM501.8 392.5h0.8v0.8h-0.8zM451.2 296.4h1.3v1.3h-1.3zM500.2 323.3h1.3v1.3h-1.3zM465.3 390.0h0.7v0.7h-0.7zM483.6 278.9h1.2v1.2h-1.2zM406.3 246.6h0.9v0.9h-0.9zM434.3 350.5h0.7v0.7h-0.7zM499.9 320.3h0.9v0.9h-0.9zM499.3 294.5h1.0v1.0h-1.0zM487.0 370.7h1.2v1.2h-1.2zM430.2 314.1h1.2v1.2h-1.2zM430.5 323.5h1.1v1.1h-1.1zM463.0 284.4h1.1v1.1h-1.1zM413.9 328.2h0.7v0.7h-0.7zM477.2 246.1h1.3v1.3h-1.3zM501.6 342.7h1.2v1.2h-1.2zM423.1 384.2h0.7v0.7h-0.7zM465.0 365.1h1.3v1.3h-1.3zM495.9 247.1h0.9v0.9h-0.9zM472.5 337.1h1.3v1.3h-1.3zM465.6 320.6h1.0v1.0h-1.0zM457.3 363.2h0.8v0.8h-0.8zM393.4 271.0h0.9v0.9h-0.9zM500.0 313.7h1.3v1.3h-1.3zM427.0 317.0h0.8v0.8h-0.8zM493.5 315.8h1.3v1.3h-1.3zM461.4 305.0h0.8v0.8h-0.8zM478.5 274.1h1.1v1.1h-1.1zM453.7 347.0h0.9v0.9h-0.9zM460.1 301.2h1.0v1.0h-1.0zM495.5 267.9h1.2v1.2h-1.2zM472.0 284.5h1.3v1.3h-1.3zM394.6 321.2h0.8v0.8h-0.8zM449.6 334.3h0.9v0.9h-0.9zM489.7 270.9h0.9v0.9h-0.9zM410.6 255.4h1.1v1.1h-1.1zM408.8 306.8h1.1v1.1h-1.1zM429.1 331.6h1.4v1.4h-1.4zM461.2 381.0h1.2v1.2h-1.2zM433.1 266.8h1.2v1.2h-1.2zM401.9 335.3h1.0v1.0h-1.0zM468.6 263.5h0.8v0.8h-0.8zM398.9 279.7h1.4v1.4h-1.4zM393.7 253.4h0.9v0.9h-0.9zM423.6 274.9h1.1v1.1h-1.1zM481.8 327.1h0.7v0.7h-0.7zM460.1 319.2h1.0v1.0h-1.0zM399.8 315.8h1.4v1.4h-1.4zM397.8 361.6h1.4v1.4h-1.4zM476.4 382.2h1.0v1.0h-1.0zM478.7 261.5h1.3v1.3h-1.3zM390.0 330.6h1.1v1.1h-1.1zM394.8 363.2h1.0v1.0h-1.0zM425.4 381.7h1.0v1.0h-1.0zM427.6 311.9h1.2v1.2h-1.2zM450.0 291.5h0.8v0.8h-0.8zM411.6 366.9h1.2v1.2h-1.2zM465.0 306.0h1.0v1.0h-1.0zM394.6 390.0h0.8v0.8h-0.8zM495.9 343.4h1.0v1.0h-1.0zM488.4 251.9h1.0v1.0h-1.0zM485.8 259.7h0.8v0.8h-0.8zM398.6 316.3h0.8v0.8h-0.8zM496.7 324.9h1.4v1.4h-1.4zM405.9 368.6h1.4v1.4h-1.4zM390.5 291.9h1.1v1.1h-1.1zM394.3 261.2h1.3v1.3h-1.3zM449.8 373.7h0.9v0.9h-0.9zM476.7 331.8h1.0v1.0h-1.0zM495.2 392.5h1.4v1.4h-1.4zM399.0 335.2h0.7v0.7h-0.7zM395.1 371.4h0.9v0.9h-0.9zM501.1 335.1h1.2v1.2h-1.2zM453.5 344.2h1.2v1.2h-1.2zM476.4 371.9h1.1v1.1h-1.1zM435.6 367.2h0.8v0.8h-0.8zM498.3 251.4h1.3v1.3h-1.3zM414.9 287.0h1.2v1.2h-1.2zM494.8 393.0h1.2v1.2h-1.2zM495.1 242.5h1.0v1.0h-1.0zM407.5 268.5h1.2v1.2h-1.2zM410.9 356.2h0.8v0.8h-0.8zM499.9 359.7h1.4v1.4h-1.4zM448.7 316.1h0.7v0.7h-0.7zM394.7 264.9h0.9v0.9h-0.9zM493.6 358.2h0.9v0.9h-0.9zM405.1 393.8h1.0v1.0h-1.0zM396.8 279.2h1.2v1.2h-1.2zM417.3 272.4h1.1v1.1h-1.1zM412.3 318.8h0.7v0.7h-0.7zM395.3 295.4h1.4v1.4h-1.4zM429.5 373.3h1.3v1.3h-1.3zM483.8 286.5h0.7v0.7h-0.7zM392.3 383.4h1.0v1.0h-1.0zM404.2 362.6h1.2v1.2h-1.2zM499.7 323.2h1.3v1.3h-1.3zM457.3 298.2h1.4v1.4h-1.4zM495.2 249.5h1.3v1.3h-1.3zM468.7 337.9h1.1v1.1h-1.1zM456.6 274.1h0.9v0.9h-0.9zM417.2 301.8h1.2v1.2h-1.2zM421.6 338.8h1.0v1.0h-1.0zM475.6 370.3h1.3v1.3h-1.3zM405.8 311.9h0.8v0.8h-0.8zM490.6 317.3h1.0v1.0h-1.0zM483.7 270.7h1.2v1.2h-1.2zM501.6 293.0h1.0v1.0h-1.0zM409.5 382.7h0.9v0.9h-0.9zM464.6 365.5h0.9v0.9h-0.9zM495.3 326.2h0.9v0.9h-0.9zM415.8 282.9h0.8v0.8h-0.8zM491.8 338.7h1.3v1.3h-1.3zM422.5 263.9h0.7v0.7h-0.7zM412.6 248.3h0.8v0.8h-0.8zM482.4 282.9h0.9v0.9h-0.9zM397.3 290.3h1.0v1.0h-1.0zM431.9 265.9h1.0v1.0h-1.0zM393.2 256.2h0.8v0.8h-0.8zM486.7 253.8h1.2v1.2h-1.2zM403.6 334.8h0.7v0.7h-0.7zM405.5 261.2h1.2v1.2h-1.2zM460.2 331.5h1.0v1.0h-1.0z"/><path fill="#6f5a32" d="M398.3 273.7h1.0v1.0h-1.0zM399.8 245.4h0.9v0.9h-0.9zM489.9 291.7h1.3v1.3h-1.3zM493.4 282.9h1.3v1.3h-1.3zM494.8 381.8h1.1v1.1h-1.1zM400.6 362.4h1.1v1.1h-1.1zM460.9 304.1h1.2v1.2h-1.2zM422.6 357.4h1.1v1.1h-1.1zM498.2 341.0h1.3v1.3h-1.3zM482.0 370.6h1.1v1.1h-1.1zM449.1 377.2h0.7v0.7h-0.7zM484.6 351.3h1.4v1.4h-1.4zM399.7 270.7h1.4v1.4h-1.4zM477.7 383.3h1.1v1.1h-1.1zM478.2 303.3h1.0v1.0h-1.0zM412.7 372.6h1.3v1.3h-1.3zM467.4 368.3h1.0v1.0h-1.0zM392.6 301.5h0.9v0.9h-0.9zM485.1 319.9h1.3v1.3h-1.3zM485.9 273.1h1.1v1.1h-1.1zM390.8 357.6h1.0v1.0h-1.0zM456.5 332.4h0.9v0.9h-0.9zM412.0 284.5h1.3v1.3h-1.3zM447.7 256.6h1.2v1.2h-1.2zM403.1 289.3h1.1v1.1h-1.1zM477.2 258.0h0.8v0.8h-0.8zM455.9 312.3h0.9v0.9h-0.9zM404.7 255.6h0.9v0.9h-0.9zM440.6 275.6h1.1v1.1h-1.1zM410.8 388.7h1.3v1.3h-1.3zM434.9 367.0h1.3v1.3h-1.3zM459.8 261.0h1.2v1.2h-1.2zM493.1 362.0h1.0v1.0h-1.0zM418.3 379.5h1.2v1.2h-1.2zM395.8 274.7h1.2v1.2h-1.2zM419.6 316.3h1.3v1.3h-1.3zM484.0 341.7h1.0v1.0h-1.0zM467.7 270.8h1.2v1.2h-1.2zM401.3 331.1h0.8v0.8h-0.8zM479.0 248.2h0.9v0.9h-0.9zM409.7 390.1h1.0v1.0h-1.0zM500.6 369.0h0.8v0.8h-0.8zM488.1 389.7h1.1v1.1h-1.1zM412.4 299.5h0.7v0.7h-0.7zM415.0 311.8h0.8v0.8h-0.8zM490.6 373.5h1.3v1.3h-1.3zM420.2 378.3h1.3v1.3h-1.3zM455.5 346.5h1.2v1.2h-1.2zM434.2 283.8h1.2v1.2h-1.2zM399.5 244.7h1.0v1.0h-1.0zM497.2 244.2h1.2v1.2h-1.2zM495.7 331.9h1.0v1.0h-1.0zM425.0 258.2h1.1v1.1h-1.1zM501.8 301.8h1.1v1.1h-1.1zM429.9 301.5h0.9v0.9h-0.9zM391.4 353.6h0.7v0.7h-0.7zM421.3 244.9h0.9v0.9h-0.9zM484.8 282.0h1.1v1.1h-1.1zM396.2 278.8h1.4v1.4h-1.4zM490.4 375.5h1.1v1.1h-1.1zM492.2 275.6h0.8v0.8h-0.8zM413.7 392.9h1.2v1.2h-1.2zM396.4 359.4h0.8v0.8h-0.8zM471.1 307.0h1.2v1.2h-1.2zM496.7 338.0h0.7v0.7h-0.7zM499.3 353.5h0.7v0.7h-0.7zM451.9 391.8h1.2v1.2h-1.2zM492.3 313.1h0.8v0.8h-0.8zM452.5 350.6h1.0v1.0h-1.0zM393.4 349.5h0.8v0.8h-0.8zM495.0 344.6h1.3v1.3h-1.3zM433.4 350.7h1.0v1.0h-1.0zM401.2 325.8h1.1v1.1h-1.1zM440.7 274.4h1.3v1.3h-1.3zM495.8 317.2h1.3v1.3h-1.3zM497.7 242.6h1.0v1.0h-1.0zM472.4 389.7h0.8v0.8h-0.8zM403.5 321.5h0.8v0.8h-0.8zM410.2 343.5h1.2v1.2h-1.2zM476.2 366.3h0.9v0.9h-0.9zM401.7 288.2h1.0v1.0h-1.0zM418.7 357.8h1.4v1.4h-1.4zM423.2 382.0h1.4v1.4h-1.4zM430.9 391.7h1.1v1.1h-1.1zM493.1 356.3h0.9v0.9h-0.9zM500.7 345.3h0.8v0.8h-0.8zM478.1 248.7h1.0v1.0h-1.0zM397.7 258.8h0.9v0.9h-0.9zM459.5 321.2h1.2v1.2h-1.2zM499.5 346.7h1.3v1.3h-1.3zM414.8 268.6h1.2v1.2h-1.2zM452.6 295.7h1.3v1.3h-1.3zM481.0 352.4h1.0v1.0h-1.0zM477.3 366.4h0.9v0.9h-0.9zM498.5 246.4h1.3v1.3h-1.3zM477.9 290.4h1.3v1.3h-1.3zM489.6 275.9h1.0v1.0h-1.0zM419.3 263.0h1.0v1.0h-1.0zM501.1 318.1h0.9v0.9h-0.9zM473.6 269.1h1.2v1.2h-1.2zM423.2 248.8h0.8v0.8h-0.8zM398.7 343.5h0.8v0.8h-0.8zM501.8 364.4h1.3v1.3h-1.3zM449.1 253.4h1.3v1.3h-1.3zM481.2 290.9h1.0v1.0h-1.0zM413.5 290.4h1.2v1.2h-1.2zM408.3 259.0h1.0v1.0h-1.0zM440.5 312.5h1.0v1.0h-1.0zM434.5 273.8h1.3v1.3h-1.3zM499.7 375.7h1.1v1.1h-1.1zM481.9 340.0h1.3v1.3h-1.3zM419.6 301.6h1.1v1.1h-1.1zM493.3 379.8h0.8v0.8h-0.8zM424.6 288.2h0.9v0.9h-0.9zM477.8 316.6h0.7v0.7h-0.7zM485.3 350.2h1.1v1.1h-1.1zM487.7 306.6h0.8v0.8h-0.8zM479.3 385.3h0.7v0.7h-0.7zM405.7 341.2h1.4v1.4h-1.4zM482.3 254.0h0.8v0.8h-0.8zM401.6 291.1h0.9v0.9h-0.9zM415.5 281.3h1.0v1.0h-1.0zM398.9 268.3h1.4v1.4h-1.4zM495.8 293.0h1.2v1.2h-1.2zM489.3 247.6h0.9v0.9h-0.9zM416.0 292.7h0.7v0.7h-0.7zM489.1 382.2h1.1v1.1h-1.1zM498.0 339.3h1.3v1.3h-1.3zM395.0 298.4h0.8v0.8h-0.8zM402.5 287.0h1.0v1.0h-1.0zM391.8 293.5h1.0v1.0h-1.0zM490.5 369.8h0.8v0.8h-0.8zM472.1 373.3h1.0v1.0h-1.0zM499.0 242.4h1.0v1.0h-1.0zM447.3 359.5h1.4v1.4h-1.4zM453.3 255.8h0.8v0.8h-0.8zM411.9 265.9h1.1v1.1h-1.1zM396.5 331.7h0.9v0.9h-0.9zM397.2 329.7h1.0v1.0h-1.0zM442.0 386.1h0.8v0.8h-0.8zM497.2 328.4h0.8v0.8h-0.8zM390.5 246.6h0.7v0.7h-0.7zM461.6 263.8h1.2v1.2h-1.2zM429.1 274.5h1.1v1.1h-1.1zM449.3 313.8h0.7v0.7h-0.7zM475.2 389.5h1.2v1.2h-1.2zM496.0 309.0h1.2v1.2h-1.2zM465.6 382.5h1.1v1.1h-1.1zM492.2 339.5h1.3v1.3h-1.3zM460.7 336.8h0.7v0.7h-0.7zM471.3 378.2h0.9v0.9h-0.9zM402.0 360.4h1.0v1.0h-1.0zM452.4 258.5h1.0v1.0h-1.0zM484.8 258.7h1.3v1.3h-1.3zM496.6 326.4h1.1v1.1h-1.1zM498.1 244.3h0.8v0.8h-0.8zM403.3 279.6h1.0v1.0h-1.0zM401.0 338.8h1.4v1.4h-1.4zM444.4 369.4h1.2v1.2h-1.2zM459.4 248.8h1.1v1.1h-1.1zM493.7 271.3h0.9v0.9h-0.9zM488.8 374.2h1.0v1.0h-1.0zM391.0 323.6h0.8v0.8h-0.8zM441.7 297.7h1.2v1.2h-1.2zM446.1 294.8h0.7v0.7h-0.7zM406.5 320.7h1.3v1.3h-1.3zM496.5 322.3h1.3v1.3h-1.3zM489.0 286.4h1.2v1.2h-1.2zM403.0 309.6h0.8v0.8h-0.8zM404.4 345.4h0.9v0.9h-0.9zM472.5 370.8h1.1v1.1h-1.1zM482.4 253.5h0.7v0.7h-0.7zM421.0 305.6h0.7v0.7h-0.7zM500.7 391.0h1.4v1.4h-1.4zM422.5 322.1h0.7v0.7h-0.7zM451.3 320.2h1.4v1.4h-1.4zM395.1 279.8h1.0v1.0h-1.0zM500.7 385.3h1.0v1.0h-1.0zM490.7 381.9h0.9v0.9h-0.9zM423.5 300.6h0.8v0.8h-0.8zM476.2 341.3h1.2v1.2h-1.2zM431.2 250.4h1.0v1.0h-1.0zM479.1 385.2h1.0v1.0h-1.0zM422.0 393.2h1.0v1.0h-1.0zM485.7 385.3h0.7v0.7h-0.7zM394.4 375.6h0.9v0.9h-0.9zM489.1 306.1h1.2v1.2h-1.2zM413.9 342.4h1.2v1.2h-1.2zM395.9 332.4h0.8v0.8h-0.8zM407.2 310.2h0.9v0.9h-0.9zM396.7 302.2h1.3v1.3h-1.3zM493.7 313.7h1.3v1.3h-1.3zM495.6 271.5h1.3v1.3h-1.3zM479.7 298.2h1.3v1.3h-1.3zM493.5 357.4h1.2v1.2h-1.2zM463.3 261.9h1.2v1.2h-1.2zM408.8 273.8h1.3v1.3h-1.3zM471.3 281.4h1.1v1.1h-1.1zM408.6 357.3h1.4v1.4h-1.4zM489.1 322.9h1.0v1.0h-1.0zM493.0 265.3h1.3v1.3h-1.3zM411.8 271.0h1.2v1.2h-1.2zM406.5 256.2h0.7v0.7h-0.7zM459.0 268.6h0.9v0.9h-0.9zM478.2 309.8h0.8v0.8h-0.8zM402.0 317.7h1.1v1.1h-1.1zM481.8 307.3h1.3v1.3h-1.3zM494.0 385.4h1.2v1.2h-1.2zM394.3 340.2h0.8v0.8h-0.8zM468.5 361.6h1.2v1.2h-1.2zM481.4 391.0h1.4v1.4h-1.4zM420.5 355.9h0.7v0.7h-0.7zM481.4 324.7h1.3v1.3h-1.3zM405.1 286.1h1.1v1.1h-1.1zM410.7 364.4h1.0v1.0h-1.0zM479.9 336.9h1.1v1.1h-1.1zM495.8 274.1h0.9v0.9h-0.9zM468.9 380.7h1.4v1.4h-1.4zM486.2 352.4h1.0v1.0h-1.0zM402.0 389.8h1.3v1.3h-1.3zM469.1 332.3h1.2v1.2h-1.2zM464.2 266.7h0.8v0.8h-0.8zM398.7 368.0h1.0v1.0h-1.0zM498.5 323.6h0.9v0.9h-0.9zM468.0 260.1h0.9v0.9h-0.9zM472.3 373.9h0.9v0.9h-0.9zM426.0 338.7h0.9v0.9h-0.9zM402.5 329.0h1.3v1.3h-1.3zM437.7 260.2h1.1v1.1h-1.1zM474.0 251.7h1.2v1.2h-1.2zM494.2 295.4h1.3v1.3h-1.3zM403.7 375.2h0.9v0.9h-0.9zM447.1 367.7h1.2v1.2h-1.2zM439.7 268.6h1.2v1.2h-1.2zM432.4 355.3h0.8v0.8h-0.8zM422.3 264.4h1.1v1.1h-1.1zM470.9 324.6h1.1v1.1h-1.1zM403.2 290.5h1.3v1.3h-1.3zM436.7 267.8h0.7v0.7h-0.7zM415.6 388.8h1.4v1.4h-1.4zM408.8 314.5h0.9v0.9h-0.9zM477.2 393.5h1.1v1.1h-1.1zM496.6 304.6h1.3v1.3h-1.3zM464.9 264.2h1.3v1.3h-1.3zM484.2 297.9h1.0v1.0h-1.0zM422.5 299.1h1.0v1.0h-1.0zM486.0 356.4h0.9v0.9h-0.9zM466.3 272.6h1.2v1.2h-1.2zM435.2 349.4h1.3v1.3h-1.3zM486.2 383.1h1.1v1.1h-1.1zM433.1 245.3h1.2v1.2h-1.2zM492.2 345.3h1.3v1.3h-1.3zM499.5 372.0h0.8v0.8h-0.8zM481.6 357.1h1.0v1.0h-1.0zM423.7 347.0h0.8v0.8h-0.8zM430.8 292.7h0.9v0.9h-0.9zM393.4 316.0h1.3v1.3h-1.3zM485.3 313.9h1.3v1.3h-1.3zM419.8 323.4h0.8v0.8h-0.8zM501.0 280.3h1.1v1.1h-1.1zM493.5 307.8h0.9v0.9h-0.9zM470.0 310.5h0.7v0.7h-0.7zM410.3 369.7h1.3v1.3h-1.3zM428.7 315.8h1.1v1.1h-1.1zM486.8 309.8h1.0v1.0h-1.0zM393.4 293.9h1.0v1.0h-1.0zM426.9 390.8h0.8v0.8h-0.8zM485.7 355.4h0.7v0.7h-0.7zM401.4 388.2h0.7v0.7h-0.7zM405.6 322.5h1.0v1.0h-1.0zM411.7 262.8h0.9v0.9h-0.9zM419.3 384.3h1.1v1.1h-1.1zM427.6 267.1h0.8v0.8h-0.8zM453.0 242.0h0.7v0.7h-0.7zM405.4 243.2h1.3v1.3h-1.3zM419.8 389.1h0.9v0.9h-0.9zM402.2 299.4h0.8v0.8h-0.8zM484.4 318.0h1.1v1.1h-1.1zM424.5 318.7h0.8v0.8h-0.8zM445.4 374.3h0.9v0.9h-0.9zM474.3 281.1h1.1v1.1h-1.1zM448.0 376.8h1.0v1.0h-1.0zM484.1 319.4h0.8v0.8h-0.8zM410.7 345.9h1.3v1.3h-1.3zM489.8 331.5h0.8v0.8h-0.8zM485.0 243.9h0.8v0.8h-0.8zM412.5 368.0h1.3v1.3h-1.3zM459.0 262.7h1.1v1.1h-1.1zM489.1 242.8h0.7v0.7h-0.7zM495.8 301.9h0.8v0.8h-0.8zM408.8 380.8h0.7v0.7h-0.7zM477.6 362.1h1.1v1.1h-1.1zM390.4 293.2h1.1v1.1h-1.1zM494.2 253.0h1.2v1.2h-1.2zM404.5 326.4h1.3v1.3h-1.3zM458.0 304.4h0.7v0.7h-0.7zM491.6 365.1h0.7v0.7h-0.7zM452.5 299.3h1.0v1.0h-1.0zM471.1 316.9h1.2v1.2h-1.2zM394.5 366.1h1.0v1.0h-1.0zM458.1 279.2h0.9v0.9h-0.9zM404.5 349.9h0.9v0.9h-0.9zM435.5 368.7h1.3v1.3h-1.3zM462.6 367.4h1.0v1.0h-1.0zM473.5 291.0h1.2v1.2h-1.2zM441.9 347.4h1.1v1.1h-1.1zM448.7 351.7h1.3v1.3h-1.3zM495.1 312.8h0.9v0.9h-0.9zM402.7 279.7h1.3v1.3h-1.3zM420.2 289.9h1.3v1.3h-1.3zM497.0 332.0h1.0v1.0h-1.0zM424.9 269.9h1.4v1.4h-1.4zM441.3 270.3h1.2v1.2h-1.2zM429.4 285.2h0.9v0.9h-0.9zM424.3 335.3h1.2v1.2h-1.2zM395.7 306.3h1.0v1.0h-1.0zM489.1 372.8h1.1v1.1h-1.1zM412.4 318.1h1.1v1.1h-1.1zM396.9 273.9h0.9v0.9h-0.9zM447.0 256.7h1.0v1.0h-1.0zM400.6 384.3h1.2v1.2h-1.2zM406.7 300.8h1.2v1.2h-1.2zM500.8 330.5h0.8v0.8h-0.8zM469.6 359.0h0.7v0.7h-0.7zM500.0 331.6h0.9v0.9h-0.9zM408.4 285.5h1.2v1.2h-1.2zM411.7 392.3h1.3v1.3h-1.3zM488.0 265.2h0.7v0.7h-0.7zM396.9 352.7h1.1v1.1h-1.1zM437.0 297.7h0.9v0.9h-0.9zM396.8 370.3h1.3v1.3h-1.3zM405.8 382.7h0.8v0.8h-0.8zM501.6 316.5h0.7v0.7h-0.7zM411.9 265.7h1.3v1.3h-1.3zM396.5 279.0h1.3v1.3h-1.3zM400.1 272.7h1.2v1.2h-1.2zM427.7 280.6h1.1v1.1h-1.1zM406.1 305.9h1.0v1.0h-1.0zM472.9 307.0h1.1v1.1h-1.1zM421.8 325.3h0.8v0.8h-0.8zM472.1 306.5h0.7v0.7h-0.7zM501.4 368.8h0.9v0.9h-0.9zM392.9 246.3h1.2v1.2h-1.2zM419.0 370.0h1.1v1.1h-1.1zM436.7 369.8h1.0v1.0h-1.0zM438.7 346.7h1.1v1.1h-1.1zM436.3 320.2h1.1v1.1h-1.1zM427.2 297.1h1.0v1.0h-1.0zM423.4 305.1h1.2v1.2h-1.2zM394.7 286.7h1.1v1.1h-1.1zM453.9 290.6h1.3v1.3h-1.3zM475.3 308.0h1.0v1.0h-1.0zM426.6 331.4h0.9v0.9h-0.9zM415.6 377.7h0.7v0.7h-0.7zM474.2 272.1h1.2v1.2h-1.2zM403.1 303.3h0.8v0.8h-0.8zM470.6 307.4h1.2v1.2h-1.2zM432.3 380.8h1.3v1.3h-1.3zM454.0 355.0h1.1v1.1h-1.1zM420.2 275.8h0.9v0.9h-0.9zM397.9 306.2h1.2v1.2h-1.2zM440.7 323.2h1.3v1.3h-1.3zM442.8 349.7h0.8v0.8h-0.8zM492.0 269.7h1.3v1.3h-1.3zM417.6 302.6h1.2v1.2h-1.2zM418.4 281.1h1.1v1.1h-1.1zM491.9 393.2h1.3v1.3h-1.3zM457.6 256.8h1.0v1.0h-1.0zM421.9 330.0h0.8v0.8h-0.8zM480.3 325.7h1.4v1.4h-1.4zM437.6 307.7h1.3v1.3h-1.3zM461.9 289.1h1.3v1.3h-1.3zM444.9 301.4h0.8v0.8h-0.8zM401.8 308.7h1.0v1.0h-1.0zM467.1 268.1h1.3v1.3h-1.3zM411.2 267.3h1.3v1.3h-1.3zM468.3 366.0h1.3v1.3h-1.3zM449.2 284.6h0.9v0.9h-0.9zM480.4 301.5h1.3v1.3h-1.3zM496.5 288.2h1.1v1.1h-1.1zM490.6 274.5h0.7v0.7h-0.7zM390.2 331.1h0.7v0.7h-0.7zM394.5 298.3h1.1v1.1h-1.1zM391.2 324.5h1.0v1.0h-1.0zM466.9 301.9h0.7v0.7h-0.7zM435.4 270.9h0.8v0.8h-0.8zM413.5 248.7h1.0v1.0h-1.0zM407.9 262.7h1.0v1.0h-1.0zM466.0 273.6h1.0v1.0h-1.0zM488.0 303.4h0.7v0.7h-0.7zM403.0 302.2h1.1v1.1h-1.1zM445.5 288.8h1.3v1.3h-1.3zM392.8 335.5h1.3v1.3h-1.3zM396.7 370.4h1.2v1.2h-1.2zM394.8 378.2h1.0v1.0h-1.0zM439.2 318.0h1.0v1.0h-1.0zM492.8 336.5h1.3v1.3h-1.3zM406.2 299.8h0.7v0.7h-0.7zM462.5 270.4h0.8v0.8h-0.8zM409.8 387.0h1.1v1.1h-1.1zM462.9 312.4h0.9v0.9h-0.9zM412.2 296.0h1.2v1.2h-1.2zM399.8 326.0h1.4v1.4h-1.4zM469.4 280.0h1.2v1.2h-1.2zM395.3 272.2h1.1v1.1h-1.1zM467.2 343.2h0.9v0.9h-0.9zM391.3 337.9h1.2v1.2h-1.2zM396.1 279.6h0.7v0.7h-0.7zM467.7 298.0h1.4v1.4h-1.4zM485.8 286.1h1.1v1.1h-1.1zM475.3 314.1h0.9v0.9h-0.9zM497.6 380.7h1.0v1.0h-1.0zM402.0 242.7h0.9v0.9h-0.9zM499.7 368.0h1.3v1.3h-1.3zM497.4 351.6h1.2v1.2h-1.2zM501.6 353.0h0.8v0.8h-0.8zM401.4 319.1h0.8v0.8h-0.8zM399.1 320.0h1.3v1.3h-1.3zM474.3 252.9h0.8v0.8h-0.8zM433.9 279.7h1.0v1.0h-1.0zM471.0 256.4h1.3v1.3h-1.3zM393.6 264.2h0.7v0.7h-0.7zM501.1 271.3h1.3v1.3h-1.3zM464.6 336.7h1.2v1.2h-1.2zM495.5 382.6h1.2v1.2h-1.2zM480.6 326.9h1.2v1.2h-1.2zM488.7 377.6h1.0v1.0h-1.0zM495.4 329.4h0.9v0.9h-0.9zM490.2 253.4h0.8v0.8h-0.8zM499.2 308.7h1.0v1.0h-1.0zM500.4 243.2h1.3v1.3h-1.3zM474.6 383.8h1.2v1.2h-1.2zM480.5 378.5h0.8v0.8h-0.8zM501.7 334.4h1.2v1.2h-1.2zM495.8 269.2h0.9v0.9h-0.9zM402.1 328.6h1.2v1.2h-1.2zM426.9 245.5h1.2v1.2h-1.2zM399.3 283.8h1.3v1.3h-1.3zM394.2 274.7h1.0v1.0h-1.0zM462.3 291.1h0.8v0.8h-0.8zM493.1 309.7h1.3v1.3h-1.3zM493.5 334.1h0.7v0.7h-0.7zM447.1 289.3h1.0v1.0h-1.0zM496.7 287.6h1.3v1.3h-1.3zM490.5 326.1h1.0v1.0h-1.0zM442.6 262.5h0.8v0.8h-0.8zM495.2 330.9h1.0v1.0h-1.0zM440.2 282.7h1.0v1.0h-1.0zM499.6 262.6h1.1v1.1h-1.1zM450.6 244.1h1.1v1.1h-1.1zM444.2 336.3h0.7v0.7h-0.7zM466.1 334.5h1.0v1.0h-1.0zM396.8 280.3h1.4v1.4h-1.4zM492.0 265.6h1.1v1.1h-1.1zM395.3 278.1h1.2v1.2h-1.2zM481.2 263.5h1.3v1.3h-1.3zM484.8 380.2h1.2v1.2h-1.2zM437.4 247.7h1.3v1.3h-1.3zM468.0 262.9h1.2v1.2h-1.2zM390.5 244.4h0.7v0.7h-0.7zM414.7 357.2h1.2v1.2h-1.2zM468.8 359.9h1.3v1.3h-1.3zM463.8 314.4h0.9v0.9h-0.9zM472.6 349.6h1.2v1.2h-1.2zM480.6 361.9h1.2v1.2h-1.2zM476.9 325.6h0.9v0.9h-0.9zM425.8 305.5h1.2v1.2h-1.2zM442.6 384.9h1.2v1.2h-1.2zM425.6 354.9h1.2v1.2h-1.2zM495.6 265.7h1.4v1.4h-1.4zM452.9 302.2h1.0v1.0h-1.0zM448.2 329.1h1.3v1.3h-1.3zM396.1 313.5h1.3v1.3h-1.3zM396.1 314.8h0.7v0.7h-0.7zM497.0 297.1h1.2v1.2h-1.2zM452.6 384.9h0.9v0.9h-0.9zM394.3 286.6h1.0v1.0h-1.0zM487.6 258.3h1.1v1.1h-1.1zM475.5 369.1h0.9v0.9h-0.9zM483.9 280.0h0.9v0.9h-0.9zM400.7 368.7h1.0v1.0h-1.0zM497.0 293.0h1.2v1.2h-1.2zM421.1 338.6h1.4v1.4h-1.4zM404.1 382.4h1.2v1.2h-1.2zM490.8 251.3h0.7v0.7h-0.7zM463.8 244.4h1.1v1.1h-1.1zM401.5 379.1h1.2v1.2h-1.2zM464.3 353.8h1.1v1.1h-1.1zM471.3 384.8h1.1v1.1h-1.1zM439.1 254.2h1.0v1.0h-1.0zM401.7 285.1h0.7v0.7h-0.7zM466.1 366.7h1.0v1.0h-1.0zM491.4 330.5h1.4v1.4h-1.4zM454.2 393.2h0.7v0.7h-0.7zM456.6 242.1h0.9v0.9h-0.9zM402.3 272.7h1.0v1.0h-1.0zM408.8 253.0h1.0v1.0h-1.0zM491.8 281.8h1.1v1.1h-1.1zM400.6 364.0h0.8v0.8h-0.8zM500.3 330.8h0.9v0.9h-0.9zM499.4 323.1h1.3v1.3h-1.3zM407.4 306.1h1.0v1.0h-1.0zM402.8 291.4h0.7v0.7h-0.7zM413.0 362.2h0.8v0.8h-0.8zM487.9 393.3h0.8v0.8h-0.8zM497.2 292.2h1.2v1.2h-1.2zM501.9 250.7h1.0v1.0h-1.0zM487.8 331.9h0.9v0.9h-0.9zM408.3 347.5h1.1v1.1h-1.1zM414.7 252.5h0.8v0.8h-0.8zM432.4 250.2h1.0v1.0h-1.0zM404.0 294.0h0.8v0.8h-0.8zM483.5 387.0h0.8v0.8h-0.8zM480.0 345.7h1.0v1.0h-1.0zM488.2 367.1h1.0v1.0h-1.0zM498.2 247.9h0.8v0.8h-0.8zM435.6 265.6h1.1v1.1h-1.1zM484.8 312.7h1.1v1.1h-1.1zM495.7 369.7h0.7v0.7h-0.7zM473.5 308.3h1.0v1.0h-1.0zM434.2 275.3h1.0v1.0h-1.0zM468.7 357.6h1.0v1.0h-1.0zM454.6 291.8h0.7v0.7h-0.7zM476.7 297.0h1.2v1.2h-1.2zM479.9 330.2h1.2v1.2h-1.2zM461.6 254.1h0.9v0.9h-0.9zM416.2 354.3h1.1v1.1h-1.1zM460.9 366.2h1.0v1.0h-1.0zM397.7 328.7h1.2v1.2h-1.2zM479.7 255.2h1.2v1.2h-1.2zM396.6 305.0h1.3v1.3h-1.3zM470.8 299.4h1.4v1.4h-1.4zM487.8 377.5h1.3v1.3h-1.3zM491.8 277.0h1.3v1.3h-1.3zM390.4 327.5h1.0v1.0h-1.0zM413.3 372.4h1.4v1.4h-1.4zM406.8 320.8h0.8v0.8h-0.8zM409.0 334.9h1.1v1.1h-1.1zM406.8 318.3h1.1v1.1h-1.1zM459.1 337.5h1.1v1.1h-1.1zM472.5 243.5h1.1v1.1h-1.1zM419.4 248.6h1.1v1.1h-1.1zM482.6 330.3h1.4v1.4h-1.4zM459.1 361.3h0.9v0.9h-0.9zM396.2 277.2h0.7v0.7h-0.7zM488.1 259.0h0.8v0.8h-0.8zM411.3 372.6h1.0v1.0h-1.0zM428.5 386.2h1.3v1.3h-1.3zM486.5 242.7h1.4v1.4h-1.4zM454.9 359.9h0.9v0.9h-0.9zM417.5 362.6h0.7v0.7h-0.7zM477.8 324.2h0.7v0.7h-0.7zM452.2 257.0h1.3v1.3h-1.3zM397.2 281.0h1.3v1.3h-1.3zM464.2 355.2h1.1v1.1h-1.1zM491.4 383.2h0.8v0.8h-0.8zM434.7 259.6h0.9v0.9h-0.9zM486.4 330.6h1.1v1.1h-1.1zM395.3 296.7h1.4v1.4h-1.4zM431.4 327.4h1.1v1.1h-1.1zM479.4 394.0h1.0v1.0h-1.0zM400.4 249.4h1.0v1.0h-1.0zM435.4 267.8h1.1v1.1h-1.1zM464.0 302.7h0.8v0.8h-0.8zM429.1 260.3h0.9v0.9h-0.9zM430.6 283.7h0.8v0.8h-0.8zM394.4 360.9h1.1v1.1h-1.1zM471.4 333.2h0.8v0.8h-0.8zM420.3 340.1h1.0v1.0h-1.0zM483.8 320.3h0.8v0.8h-0.8zM427.0 388.1h1.1v1.1h-1.1zM398.4 270.7h1.3v1.3h-1.3zM464.3 297.1h0.9v0.9h-0.9zM430.3 259.5h1.4v1.4h-1.4zM477.1 371.5h1.0v1.0h-1.0zM483.2 286.2h0.8v0.8h-0.8zM446.9 334.1h1.3v1.3h-1.3zM418.5 352.4h0.8v0.8h-0.8zM447.7 260.1h1.1v1.1h-1.1zM426.0 325.8h0.8v0.8h-0.8zM431.9 377.4h0.9v0.9h-0.9zM489.5 355.8h1.2v1.2h-1.2zM392.9 272.5h0.9v0.9h-0.9zM390.3 336.4h1.2v1.2h-1.2zM414.0 362.8h0.8v0.8h-0.8zM493.0 310.2h1.4v1.4h-1.4zM491.7 388.0h1.0v1.0h-1.0zM410.1 280.8h1.0v1.0h-1.0zM500.6 243.5h1.1v1.1h-1.1zM463.9 298.6h0.9v0.9h-0.9zM461.0 331.6h1.1v1.1h-1.1zM418.0 359.2h1.0v1.0h-1.0zM487.8 275.9h1.1v1.1h-1.1zM455.5 388.6h1.1v1.1h-1.1zM432.3 283.7h0.9v0.9h-0.9zM479.4 386.1h1.3v1.3h-1.3zM436.9 283.7h0.9v0.9h-0.9zM493.8 373.3h1.1v1.1h-1.1zM398.5 351.0h1.2v1.2h-1.2zM406.7 334.6h0.9v0.9h-0.9zM452.4 257.0h1.1v1.1h-1.1zM497.2 293.1h1.1v1.1h-1.1zM424.7 243.7h1.1v1.1h-1.1zM498.3 383.3h1.2v1.2h-1.2zM400.3 333.8h1.0v1.0h-1.0zM494.8 327.4h1.4v1.4h-1.4zM497.3 274.2h1.3v1.3h-1.3zM410.9 340.7h0.9v0.9h-0.9zM430.2 380.4h1.0v1.0h-1.0zM450.9 264.1h1.0v1.0h-1.0zM390.9 304.5h1.4v1.4h-1.4zM398.0 269.3h0.9v0.9h-0.9zM459.8 302.7h1.4v1.4h-1.4zM415.1 335.7h0.7v0.7h-0.7zM500.0 341.0h0.7v0.7h-0.7zM465.2 381.4h1.0v1.0h-1.0zM420.1 286.3h1.3v1.3h-1.3zM464.5 263.2h1.0v1.0h-1.0zM412.0 364.3h0.7v0.7h-0.7zM426.1 376.4h1.1v1.1h-1.1zM408.8 266.6h0.8v0.8h-0.8zM402.1 262.4h0.8v0.8h-0.8zM422.7 286.6h0.8v0.8h-0.8zM486.3 388.1h0.8v0.8h-0.8zM427.0 372.5h1.1v1.1h-1.1zM490.9 336.6h0.8v0.8h-0.8zM456.8 381.4h1.2v1.2h-1.2zM397.9 265.0h0.7v0.7h-0.7zM483.4 316.8h1.1v1.1h-1.1zM468.2 275.7h1.3v1.3h-1.3zM396.9 302.1h1.1v1.1h-1.1zM456.9 360.5h1.2v1.2h-1.2zM496.6 365.6h1.2v1.2h-1.2zM444.9 370.6h1.2v1.2h-1.2zM404.0 255.4h1.1v1.1h-1.1zM486.2 276.9h0.9v0.9h-0.9zM408.2 359.6h0.7v0.7h-0.7zM400.6 354.1h1.1v1.1h-1.1zM455.9 387.9h1.2v1.2h-1.2zM480.2 325.8h1.0v1.0h-1.0zM405.1 383.0h1.0v1.0h-1.0zM474.9 262.4h1.0v1.0h-1.0zM457.4 304.6h1.0v1.0h-1.0zM497.7 262.0h1.1v1.1h-1.1zM408.2 324.9h1.4v1.4h-1.4zM401.4 349.9h1.2v1.2h-1.2zM400.6 286.0h0.9v0.9h-0.9zM413.4 382.2h0.9v0.9h-0.9zM396.3 270.0h1.3v1.3h-1.3zM403.0 244.3h0.7v0.7h-0.7zM403.4 309.0h1.1v1.1h-1.1zM411.2 311.9h1.0v1.0h-1.0zM406.0 357.3h1.2v1.2h-1.2zM451.6 272.0h1.1v1.1h-1.1zM468.5 278.9h1.2v1.2h-1.2zM469.5 330.3h0.7v0.7h-0.7zM445.1 255.5h0.8v0.8h-0.8zM406.2 287.1h1.1v1.1h-1.1zM499.7 320.0h0.8v0.8h-0.8zM458.6 302.1h1.0v1.0h-1.0zM470.7 372.5h1.1v1.1h-1.1zM437.4 311.0h0.9v0.9h-0.9zM423.9 310.7h1.3v1.3h-1.3zM477.0 276.7h1.3v1.3h-1.3zM476.0 390.8h1.3v1.3h-1.3zM483.9 309.2h0.9v0.9h-0.9zM411.2 337.6h0.7v0.7h-0.7zM490.6 254.1h1.0v1.0h-1.0zM457.4 343.5h1.4v1.4h-1.4zM395.7 275.4h1.3v1.3h-1.3zM403.5 342.6h1.3v1.3h-1.3zM405.0 270.3h1.3v1.3h-1.3zM427.3 277.7h1.3v1.3h-1.3zM458.3 384.4h1.4v1.4h-1.4zM408.8 339.6h0.8v0.8h-0.8zM431.7 276.5h1.0v1.0h-1.0zM465.4 309.8h1.2v1.2h-1.2zM469.6 285.0h1.0v1.0h-1.0zM424.4 389.7h1.2v1.2h-1.2zM491.9 251.1h1.1v1.1h-1.1zM440.5 312.8h0.7v0.7h-0.7zM404.1 256.5h1.0v1.0h-1.0zM464.7 289.1h0.7v0.7h-0.7zM497.9 284.8h0.8v0.8h-0.8zM457.5 381.7h1.1v1.1h-1.1zM416.6 309.3h0.8v0.8h-0.8zM498.9 392.1h0.8v0.8h-0.8zM407.6 258.3h1.0v1.0h-1.0zM465.8 287.4h0.7v0.7h-0.7zM482.7 314.5h1.0v1.0h-1.0zM450.4 385.8h1.2v1.2h-1.2zM495.6 279.7h1.3v1.3h-1.3zM460.9 350.1h1.4v1.4h-1.4zM411.6 267.0h0.8v0.8h-0.8zM497.9 287.4h1.3v1.3h-1.3zM394.9 358.3h1.3v1.3h-1.3zM488.7 308.5h1.2v1.2h-1.2zM408.3 292.0h1.0v1.0h-1.0zM396.2 324.4h1.0v1.0h-1.0zM444.7 268.5h1.0v1.0h-1.0zM406.0 371.0h0.9v0.9h-0.9zM401.4 333.1h0.9v0.9h-0.9zM496.1 254.0h0.9v0.9h-0.9zM445.1 373.0h1.2v1.2h-1.2zM397.0 389.4h1.0v1.0h-1.0zM436.7 354.8h0.9v0.9h-0.9zM487.3 338.5h1.2v1.2h-1.2zM444.0 266.8h0.9v0.9h-0.9zM485.3 353.4h0.9v0.9h-0.9zM500.5 372.6h0.8v0.8h-0.8zM482.7 260.9h0.9v0.9h-0.9zM481.2 296.1h1.4v1.4h-1.4zM412.9 386.8h0.8v0.8h-0.8zM414.8 295.0h0.7v0.7h-0.7zM479.3 335.7h1.0v1.0h-1.0zM491.8 246.2h1.2v1.2h-1.2zM435.2 252.8h0.9v0.9h-0.9zM448.2 329.5h1.2v1.2h-1.2zM494.8 371.7h1.3v1.3h-1.3zM426.7 286.3h0.7v0.7h-0.7zM415.1 263.3h0.7v0.7h-0.7zM420.7 336.9h1.3v1.3h-1.3zM430.4 383.3h1.2v1.2h-1.2zM419.9 297.7h1.2v1.2h-1.2zM407.0 308.4h0.8v0.8h-0.8zM472.1 331.5h1.4v1.4h-1.4zM496.8 306.1h1.1v1.1h-1.1zM494.0 332.3h1.0v1.0h-1.0zM439.0 329.5h1.1v1.1h-1.1zM424.5 348.7h1.0v1.0h-1.0zM452.8 277.9h1.2v1.2h-1.2zM391.6 276.4h1.3v1.3h-1.3zM415.8 365.6h1.3v1.3h-1.3zM432.5 269.7h1.0v1.0h-1.0zM429.6 383.4h0.7v0.7h-0.7zM463.7 291.1h0.8v0.8h-0.8zM494.8 285.1h1.1v1.1h-1.1zM472.6 243.4h0.8v0.8h-0.8zM422.4 364.6h1.0v1.0h-1.0zM491.4 280.4h1.1v1.1h-1.1zM472.2 326.6h1.0v1.0h-1.0zM464.1 285.7h1.3v1.3h-1.3zM390.3 347.8h1.2v1.2h-1.2zM499.8 278.3h0.9v0.9h-0.9zM444.0 352.2h0.7v0.7h-0.7zM483.0 269.9h1.0v1.0h-1.0zM398.9 268.1h1.4v1.4h-1.4zM424.2 375.6h1.4v1.4h-1.4zM390.8 385.3h1.2v1.2h-1.2zM450.2 279.6h1.1v1.1h-1.1zM413.1 317.0h1.4v1.4h-1.4zM501.7 345.8h1.0v1.0h-1.0zM476.3 307.8h1.2v1.2h-1.2zM406.3 292.3h1.0v1.0h-1.0zM404.2 377.2h1.0v1.0h-1.0zM496.6 269.6h1.4v1.4h-1.4zM495.1 367.4h1.1v1.1h-1.1zM414.5 312.0h0.9v0.9h-0.9zM454.1 344.1h1.0v1.0h-1.0zM444.7 382.1h0.8v0.8h-0.8zM390.1 341.0h0.7v0.7h-0.7zM398.3 273.6h1.3v1.3h-1.3zM471.3 304.2h1.1v1.1h-1.1zM501.0 375.7h0.8v0.8h-0.8zM485.9 354.7h0.8v0.8h-0.8zM395.9 378.6h1.0v1.0h-1.0zM476.4 284.0h1.1v1.1h-1.1zM477.3 283.8h0.9v0.9h-0.9zM472.2 306.5h0.9v0.9h-0.9zM501.3 384.4h0.7v0.7h-0.7zM465.5 265.8h1.3v1.3h-1.3zM456.1 278.9h0.7v0.7h-0.7zM397.5 273.7h1.1v1.1h-1.1zM396.8 339.4h1.0v1.0h-1.0zM406.5 270.9h0.8v0.8h-0.8zM478.1 250.8h1.3v1.3h-1.3zM417.0 323.1h0.9v0.9h-0.9zM436.8 335.3h1.2v1.2h-1.2zM398.3 306.2h0.8v0.8h-0.8zM445.3 304.1h0.9v0.9h-0.9zM501.2 313.0h1.0v1.0h-1.0zM499.1 330.9h1.3v1.3h-1.3zM424.2 268.3h0.9v0.9h-0.9zM397.2 269.0h1.1v1.1h-1.1zM466.7 356.3h1.1v1.1h-1.1zM426.4 303.1h1.0v1.0h-1.0zM398.3 338.8h1.0v1.0h-1.0zM494.0 288.9h1.3v1.3h-1.3zM410.0 260.3h0.9v0.9h-0.9zM465.7 249.0h0.9v0.9h-0.9zM436.2 307.7h1.4v1.4h-1.4zM413.8 265.1h1.2v1.2h-1.2zM401.5 391.0h1.0v1.0h-1.0zM421.8 353.5h1.4v1.4h-1.4zM398.8 302.3h1.3v1.3h-1.3zM495.3 242.5h1.3v1.3h-1.3zM497.9 289.0h1.4v1.4h-1.4zM410.3 255.2h1.1v1.1h-1.1zM397.8 370.4h1.1v1.1h-1.1zM495.3 350.4h1.3v1.3h-1.3zM403.3 268.0h1.2v1.2h-1.2zM458.8 295.8h1.1v1.1h-1.1zM394.5 362.1h0.8v0.8h-0.8zM396.2 308.4h0.9v0.9h-0.9zM492.6 272.6h1.4v1.4h-1.4zM391.6 345.8h1.1v1.1h-1.1zM420.1 376.9h0.8v0.8h-0.8zM498.2 253.9h1.4v1.4h-1.4zM409.5 265.1h1.2v1.2h-1.2zM391.2 363.9h1.3v1.3h-1.3zM470.3 392.6h1.2v1.2h-1.2zM398.6 381.2h1.2v1.2h-1.2zM411.2 371.2h1.3v1.3h-1.3zM398.8 370.7h0.7v0.7h-0.7zM396.6 365.4h1.2v1.2h-1.2zM413.9 337.6h0.7v0.7h-0.7zM472.8 279.2h1.4v1.4h-1.4zM466.3 307.8h1.4v1.4h-1.4zM391.2 319.5h1.4v1.4h-1.4zM449.2 303.1h1.0v1.0h-1.0zM486.6 381.8h1.0v1.0h-1.0zM409.7 262.9h1.0v1.0h-1.0zM483.7 375.0h1.1v1.1h-1.1zM500.8 376.9h1.3v1.3h-1.3zM498.1 365.2h1.3v1.3h-1.3zM490.8 311.7h0.7v0.7h-0.7zM499.2 292.6h0.8v0.8h-0.8zM421.0 293.5h1.2v1.2h-1.2z"/></g><path d="M446,242.3 L480.3,242.3 Q482.9,242.3 482.9,244.8 Q482.6,247.6 478.3,250.4 L489.6,277.1 Q490.5,278.4 494.1,279.1 Q501.5,280.3 504.7,284.1 Q506.8,288 505.8,293.5 Q504.5,298.4 499.5,300.6 Q497,302 497.2,303.3 Q500.5,318 500.2,325 Q499.5,345 493.8,358.8 Q487.5,371 480,381.5 Q475.5,386 474.8,389 Q474.5,393.7 472.5,393.7 L419.5,393.7 Q417.5,393.7 417.2,389 Q416.5,386 412,381.5 Q404.5,371 398.2,358.8 Q392.5,345 392,325 Q391.5,318 394.1,303.3 Q394.5,301.5 392.1,300.2 Q387.4,298 385.9,292.5 Q385,287.5 387.6,284 Q391,280 395.1,279.1 Q399.8,278.6 401.7,277.6 L415,250.4 Q409.2,247.6 408.8,244.8 Q408.8,242.3 411.4,242.3 Z" fill="none" stroke="#111" stroke-width="1.35" stroke-linejoin="round"/><rect x="351.5" y="234.6" width="188.89999999999998" height="167.65" fill="none" stroke="#555" stroke-width="0.8"/><line x1="371.00" y1="402.25" x2="371.00" y2="404.75" stroke="#333" stroke-width="0.8"/><line x1="396.00" y1="402.25" x2="396.00" y2="404.75" stroke="#333" stroke-width="0.8"/><line x1="421.00" y1="402.25" x2="421.00" y2="404.75" stroke="#333" stroke-width="0.8"/><line x1="446.00" y1="402.25" x2="446.00" y2="404.75" stroke="#333" stroke-width="0.8"/><line x1="471.00" y1="402.25" x2="471.00" y2="404.75" stroke="#333" stroke-width="0.8"/><line x1="496.00" y1="402.25" x2="496.00" y2="404.75" stroke="#333" stroke-width="0.8"/><line x1="521.00" y1="402.25" x2="521.00" y2="404.75" stroke="#333" stroke-width="0.8"/><line x1="382.50" y1="234.6" x2="382.50" y2="232.1" stroke="#333" stroke-width="0.8"/><line x1="414.25" y1="234.6" x2="414.25" y2="232.1" stroke="#333" stroke-width="0.8"/><line x1="446.00" y1="234.6" x2="446.00" y2="232.1" stroke="#333" stroke-width="0.8"/><line x1="477.75" y1="234.6" x2="477.75" y2="232.1" stroke="#333" stroke-width="0.8"/><line x1="509.50" y1="234.6" x2="509.50" y2="232.1" stroke="#333" stroke-width="0.8"/><line x1="351.5" y1="394.00" x2="349.0" y2="394.00" stroke="#333" stroke-width="0.8"/><line x1="351.5" y1="368.92" x2="349.0" y2="368.92" stroke="#333" stroke-width="0.8"/><line x1="351.5" y1="343.84" x2="349.0" y2="343.84" stroke="#333" stroke-width="0.8"/><line x1="351.5" y1="318.76" x2="349.0" y2="318.76" stroke="#333" stroke-width="0.8"/><line x1="351.5" y1="293.68" x2="349.0" y2="293.68" stroke="#333" stroke-width="0.8"/><line x1="351.5" y1="268.60" x2="349.0" y2="268.60" stroke="#333" stroke-width="0.8"/><line x1="351.5" y1="243.52" x2="349.0" y2="243.52" stroke="#333" stroke-width="0.8"/><line x1="540.4" y1="394.00" x2="542.9" y2="394.00" stroke="#333" stroke-width="0.8"/><line x1="540.4" y1="362.15" x2="542.9" y2="362.15" stroke="#333" stroke-width="0.8"/><line x1="540.4" y1="330.30" x2="542.9" y2="330.30" stroke="#333" stroke-width="0.8"/><line x1="540.4" y1="298.45" x2="542.9" y2="298.45" stroke="#333" stroke-width="0.8"/><line x1="540.4" y1="266.59" x2="542.9" y2="266.59" stroke="#333" stroke-width="0.8"/><text x="371.00" y="411.00" font-size="6.5" text-anchor="middle" fill="#222" >−60</text><text x="396.00" y="411.00" font-size="6.5" text-anchor="middle" fill="#222" >−40</text><text x="421.00" y="411.00" font-size="6.5" text-anchor="middle" fill="#222" >−20</text><text x="446.00" y="411.00" font-size="6.5" text-anchor="middle" fill="#222" >0</text><text x="471.00" y="411.00" font-size="6.5" text-anchor="middle" fill="#222" >20</text><text x="496.00" y="411.00" font-size="6.5" text-anchor="middle" fill="#222" >40</text><text x="521.00" y="411.00" font-size="6.5" text-anchor="middle" fill="#222" >60</text><text x="382.50" y="229.70" font-size="6.5" text-anchor="middle" fill="#222" >−2</text><text x="414.25" y="229.70" font-size="6.5" text-anchor="middle" fill="#222" >−1</text><text x="446.00" y="229.70" font-size="6.5" text-anchor="middle" fill="#222" >0</text><text x="477.75" y="229.70" font-size="6.5" text-anchor="middle" fill="#222" >1</text><text x="509.50" y="229.70" font-size="6.5" text-anchor="middle" fill="#222" >2</text><text x="348.00" y="396.20" font-size="6.5" text-anchor="end" fill="#222" >0</text><text x="348.00" y="371.12" font-size="6.5" text-anchor="end" fill="#222" >20</text><text x="348.00" y="346.04" font-size="6.5" text-anchor="end" fill="#222" >40</text><text x="348.00" y="320.96" font-size="6.5" text-anchor="end" fill="#222" >60</text><text x="348.00" y="295.88" font-size="6.5" text-anchor="end" fill="#222" >80</text><text x="348.00" y="270.80" font-size="6.5" text-anchor="end" fill="#222" >100</text><text x="348.00" y="245.72" font-size="6.5" text-anchor="end" fill="#222" >120</text><text x="544.00" y="396.20" font-size="6.5" text-anchor="start" fill="#222" >0</text><text x="544.00" y="364.35" font-size="6.5" text-anchor="start" fill="#222" >1</text><text x="544.00" y="332.50" font-size="6.5" text-anchor="start" fill="#222" >2</text><text x="544.00" y="300.65" font-size="6.5" text-anchor="start" fill="#222" >3</text><text x="544.00" y="268.79" font-size="6.5" text-anchor="start" fill="#222" >4</text><text x="544.00" y="236.94" font-size="6.5" text-anchor="start" fill="#222" >5</text><text x="446.00" y="216.00" font-size="7.25" text-anchor="middle" fill="#222" >Vase Projection</text><text x="446.00" y="222.50" font-size="6.1" text-anchor="middle" fill="#222" >X (inch)</text><text x="446.00" y="417.60" font-size="6.1" text-anchor="middle" fill="#222" >X (mm)</text><text x="0" y="0" font-size="6.35" text-anchor="middle" fill="#222" transform="translate(333.6,319) rotate(-90)">Y (corresponding to Z (mm))</text><text x="0" y="0" font-size="6.35" text-anchor="middle" fill="#222" transform="translate(555,318.5) rotate(-90)">Y (corresponding to Z (inch))</text><text x="454.00" y="203.70" font-size="11.3" text-anchor="middle" fill="#222" font-weight="bold" fill="#000">OG_Vase_2_aligned_4_external</text><line x1="573.50" y1="234.5" x2="573.50" y2="402.25" stroke="#ececec" stroke-width="0.6"/><line x1="606.75" y1="234.5" x2="606.75" y2="402.25" stroke="#ececec" stroke-width="0.6"/><line x1="640.00" y1="234.5" x2="640.00" y2="402.25" stroke="#ececec" stroke-width="0.6"/><line x1="673.25" y1="234.5" x2="673.25" y2="402.25" stroke="#ececec" stroke-width="0.6"/><line x1="706.50" y1="234.5" x2="706.50" y2="402.25" stroke="#ececec" stroke-width="0.6"/><line x1="739.75" y1="234.5" x2="739.75" y2="402.25" stroke="#ececec" stroke-width="0.6"/><line x1="568.5" y1="394.00" x2="757.75" y2="394.00" stroke="#ececec" stroke-width="0.6"/><line x1="568.5" y1="368.92" x2="757.75" y2="368.92" stroke="#ececec" stroke-width="0.6"/><line x1="568.5" y1="343.84" x2="757.75" y2="343.84" stroke="#ececec" stroke-width="0.6"/><line x1="568.5" y1="318.76" x2="757.75" y2="318.76" stroke="#ececec" stroke-width="0.6"/><line x1="568.5" y1="293.68" x2="757.75" y2="293.68" stroke="#ececec" stroke-width="0.6"/><line x1="568.5" y1="268.60" x2="757.75" y2="268.60" stroke="#ececec" stroke-width="0.6"/><line x1="568.5" y1="243.52" x2="757.75" y2="243.52" stroke="#ececec" stroke-width="0.6"/><line x1="576.6" y1="234.5" x2="576.6" y2="402.25" stroke="#a9d3e8" stroke-width="1" stroke-dasharray="3,2"/><line x1="578.9" y1="234.5" x2="578.9" y2="402.25" stroke="#2a7a1a" stroke-width="1" stroke-dasharray="3,2"/><line x1="748.7" y1="234.5" x2="748.7" y2="402.25" stroke="#e8a838" stroke-width="1.1" stroke-dasharray="3,2"/><polyline points="579.4,250.5 579.3,251.0 579.1,253.5 578.9,256.0 579.7,258.5 578.7,261.0 579.3,263.5 579.8,266.0 578.8,268.5 579.4,271.0 581.4,275.9 594.8,277.9 608.2,278.6 623.6,279.1 600.2,279.5 592.1,281.5 588.1,284.2 585.4,289.6 589.4,293.6 588.1,299.0 585.4,301.6 582.7,304.3 580.1,307.0 578.7,309.7 579.0,311.0 578.6,314.0 578.9,317.0 579.1,320.0 578.9,323.0 579.1,326.0 578.7,329.0 578.7,332.0 578.6,335.0 579.0,338.0 579.3,341.0 579.0,344.0 579.2,347.0 578.9,350.0 579.1,353.0 578.6,356.0 578.8,359.0 579.1,362.0 579.1,365.0 578.9,368.0 578.6,371.0 578.8,374.0 578.7,377.0 578.8,380.0 579.2,383.0 578.7,386.0 579.2,388.8 673.0,393.0" fill="none" stroke="#c8201e" stroke-width="1.7" stroke-linejoin="round"/><polyline points="592.1,281.5 588.1,284.2 585.4,289.6 589.4,293.6 588.1,299 585.4,301.6 582.7,304.3" fill="none" stroke="#c8201e" stroke-width="2.6" stroke-linejoin="round"/><polyline points="608.2,278.8 623.6,279.1" fill="none" stroke="#3a3ad6" stroke-width="1.2"/><polyline points="583.75,394.25 673,393" fill="none" stroke="#3a3ad6" stroke-width="1.6"/><polyline points="673,393 640,392" fill="none" stroke="#c8201e" stroke-width="1"/><polyline points="590.8,242.3 730,242.4 748.7,244.8" fill="none" stroke="#3a3ad6" stroke-width="1.5"/><polyline points="579.4,249.6 600,249.2 743.5,246.4" fill="none" stroke="#3a3ad6" stroke-width="1.5"/><polyline points="579.4,249.4 600,248.9 743.5,246.2" fill="none" stroke="#c8201e" stroke-width="1.4" stroke-dasharray="1.6,4.5"/><polyline points="659.5,242.9 743.5,246 748.7,244.8 700,244.5 745,245.5" fill="none" stroke="#3a3ad6" stroke-width="1.3"/><polyline points="659.5,242.9 743.5,246 748.7,244.8 700,244.5 745,245.5" fill="none" stroke="#c8201e" stroke-width="1.3" stroke-dasharray="2.5,2"/><path d="M579.4,252 Q579.4,249.4 582,249.4" fill="none" stroke="#c8201e" stroke-width="1.7"/><rect x="568.5" y="234.5" width="189.25" height="167.75" fill="none" stroke="#555" stroke-width="0.8"/><line x1="573.50" y1="402.25" x2="573.50" y2="404.75" stroke="#333" stroke-width="0.8"/><line x1="606.75" y1="402.25" x2="606.75" y2="404.75" stroke="#333" stroke-width="0.8"/><line x1="640.00" y1="402.25" x2="640.00" y2="404.75" stroke="#333" stroke-width="0.8"/><line x1="673.25" y1="402.25" x2="673.25" y2="404.75" stroke="#333" stroke-width="0.8"/><line x1="706.50" y1="402.25" x2="706.50" y2="404.75" stroke="#333" stroke-width="0.8"/><line x1="739.75" y1="402.25" x2="739.75" y2="404.75" stroke="#333" stroke-width="0.8"/><line x1="573.50" y1="234.5" x2="573.50" y2="232.0" stroke="#333" stroke-width="0.8"/><line x1="594.61" y1="234.5" x2="594.61" y2="232.0" stroke="#333" stroke-width="0.8"/><line x1="615.73" y1="234.5" x2="615.73" y2="232.0" stroke="#333" stroke-width="0.8"/><line x1="636.84" y1="234.5" x2="636.84" y2="232.0" stroke="#333" stroke-width="0.8"/><line x1="657.96" y1="234.5" x2="657.96" y2="232.0" stroke="#333" stroke-width="0.8"/><line x1="679.07" y1="234.5" x2="679.07" y2="232.0" stroke="#333" stroke-width="0.8"/><line x1="700.18" y1="234.5" x2="700.18" y2="232.0" stroke="#333" stroke-width="0.8"/><line x1="721.30" y1="234.5" x2="721.30" y2="232.0" stroke="#333" stroke-width="0.8"/><line x1="742.41" y1="234.5" x2="742.41" y2="232.0" stroke="#333" stroke-width="0.8"/><line x1="568.5" y1="394.00" x2="566.0" y2="394.00" stroke="#333" stroke-width="0.8"/><line x1="568.5" y1="368.92" x2="566.0" y2="368.92" stroke="#333" stroke-width="0.8"/><line x1="568.5" y1="343.84" x2="566.0" y2="343.84" stroke="#333" stroke-width="0.8"/><line x1="568.5" y1="318.76" x2="566.0" y2="318.76" stroke="#333" stroke-width="0.8"/><line x1="568.5" y1="293.68" x2="566.0" y2="293.68" stroke="#333" stroke-width="0.8"/><line x1="568.5" y1="268.60" x2="566.0" y2="268.60" stroke="#333" stroke-width="0.8"/><line x1="568.5" y1="243.52" x2="566.0" y2="243.52" stroke="#333" stroke-width="0.8"/><text x="573.50" y="411.00" font-size="6.5" text-anchor="middle" fill="#222" >0.0</text><text x="606.75" y="411.00" font-size="6.5" text-anchor="middle" fill="#222" >0.1</text><text x="640.00" y="411.00" font-size="6.5" text-anchor="middle" fill="#222" >0.2</text><text x="673.25" y="411.00" font-size="6.5" text-anchor="middle" fill="#222" >0.3</text><text x="706.50" y="411.00" font-size="6.5" text-anchor="middle" fill="#222" >0.4</text><text x="739.75" y="411.00" font-size="6.5" text-anchor="middle" fill="#222" >0.5</text><text x="573.50" y="229.70" font-size="6.1" text-anchor="middle" fill="#222" >0.0000</text><text x="594.61" y="229.70" font-size="6.1" text-anchor="middle" fill="#222" >0.0025</text><text x="615.73" y="229.70" font-size="6.1" text-anchor="middle" fill="#222" >0.0050</text><text x="636.84" y="229.70" font-size="6.1" text-anchor="middle" fill="#222" >0.0075</text><text x="657.96" y="229.70" font-size="6.1" text-anchor="middle" fill="#222" >0.0100</text><text x="679.07" y="229.70" font-size="6.1" text-anchor="middle" fill="#222" >0.0125</text><text x="700.18" y="229.70" font-size="6.1" text-anchor="middle" fill="#222" >0.0150</text><text x="721.30" y="229.70" font-size="6.1" text-anchor="middle" fill="#222" >0.0175</text><text x="742.41" y="229.70" font-size="6.1" text-anchor="middle" fill="#222" >0.0200</text><text x="663.00" y="216.00" font-size="7.25" text-anchor="middle" fill="#222" >Circularity Metrics</text><text x="663.00" y="222.50" font-size="6.1" text-anchor="middle" fill="#222" >Slice RMSD (inch)</text><text x="663.00" y="417.60" font-size="6.1" text-anchor="middle" fill="#222" >Slice RMSD (mm)</text><line x1="697.5" y1="377.5" x2="710.5" y2="377.5" stroke="#2a7a1a" stroke-width="1.3" stroke-dasharray="4,3.5"/><text x="714.50" y="379.60" font-size="6.1" text-anchor="start" fill="#222" >Median RMSD</text><line x1="697.5" y1="385.7" x2="710.5" y2="385.7" stroke="#a9d3e8" stroke-width="1.3" stroke-dasharray="4,3.5"/><text x="714.50" y="387.80" font-size="6.1" text-anchor="start" fill="#222" >Min RMSD</text><line x1="697.5" y1="393.9" x2="710.5" y2="393.9" stroke="#e8a838" stroke-width="1.3" stroke-dasharray="4,3.5"/><text x="714.50" y="396.00" font-size="6.1" text-anchor="start" fill="#222" >Max RMSD</text><line x1="135.00" y1="450.0" x2="135.00" y2="561.5" stroke="#ececec" stroke-width="0.6"/><line x1="214.60" y1="450.0" x2="214.60" y2="561.5" stroke="#ececec" stroke-width="0.6"/><line x1="294.20" y1="450.0" x2="294.20" y2="561.5" stroke="#ececec" stroke-width="0.6"/><line x1="373.80" y1="450.0" x2="373.80" y2="561.5" stroke="#ececec" stroke-width="0.6"/><line x1="453.40" y1="450.0" x2="453.40" y2="561.5" stroke="#ececec" stroke-width="0.6"/><line x1="533.00" y1="450.0" x2="533.00" y2="561.5" stroke="#ececec" stroke-width="0.6"/><line x1="134.9" y1="556.50" x2="540.2" y2="556.50" stroke="#ececec" stroke-width="0.6"/><line x1="134.9" y1="536.30" x2="540.2" y2="536.30" stroke="#ececec" stroke-width="0.6"/><line x1="134.9" y1="516.10" x2="540.2" y2="516.10" stroke="#ececec" stroke-width="0.6"/><line x1="134.9" y1="495.90" x2="540.2" y2="495.90" stroke="#ececec" stroke-width="0.6"/><line x1="134.9" y1="475.70" x2="540.2" y2="475.70" stroke="#ececec" stroke-width="0.6"/><line x1="134.9" y1="455.50" x2="540.2" y2="455.50" stroke="#ececec" stroke-width="0.6"/><line x1="147.5" y1="450.0" x2="147.5" y2="561.5" stroke="#555" stroke-width="0.7" stroke-dasharray="1.6,1.2"/><line x1="180.4" y1="450.0" x2="180.4" y2="561.5" stroke="#555" stroke-width="0.7" stroke-dasharray="1.6,1.2"/><line x1="327.6" y1="450.0" x2="327.6" y2="561.5" stroke="#555" stroke-width="0.7" stroke-dasharray="1.6,1.2"/><polyline points="142.0,556.8 144.5,555.8 146.0,553.5 147.0,530.0 148.2,495.0 148.8,486.2 151.7,484.7 157.0,481.0 161.5,480.0 163.0,479.2 166.7,474.2 170.5,468.2 175.0,466.0 180.5,465.0 200.0,463.6 215.0,462.6" fill="none" stroke="#5a1a6e" stroke-width="1.9" stroke-linejoin="round"/><polyline points="215.0,462.6 260.0,461.2 300.0,460.0 340.0,459.0 380.0,458.0 440.0,457.0 500.0,456.0 540.0,455.2" fill="none" stroke="#5a1a6e" stroke-width="1.3" stroke-dasharray="4,1.3,1.3,1.3"/><rect x="134.9" y="450.0" width="405.30000000000007" height="111.5" fill="none" stroke="#555" stroke-width="0.8"/><line x1="135.00" y1="561.5" x2="135.00" y2="564.0" stroke="#333" stroke-width="0.8"/><line x1="214.60" y1="561.5" x2="214.60" y2="564.0" stroke="#333" stroke-width="0.8"/><line x1="294.20" y1="561.5" x2="294.20" y2="564.0" stroke="#333" stroke-width="0.8"/><line x1="373.80" y1="561.5" x2="373.80" y2="564.0" stroke="#333" stroke-width="0.8"/><line x1="453.40" y1="561.5" x2="453.40" y2="564.0" stroke="#333" stroke-width="0.8"/><line x1="533.00" y1="561.5" x2="533.00" y2="564.0" stroke="#333" stroke-width="0.8"/><line x1="135.00" y1="450.0" x2="135.00" y2="447.5" stroke="#333" stroke-width="0.8"/><line x1="185.55" y1="450.0" x2="185.55" y2="447.5" stroke="#333" stroke-width="0.8"/><line x1="236.09" y1="450.0" x2="236.09" y2="447.5" stroke="#333" stroke-width="0.8"/><line x1="286.64" y1="450.0" x2="286.64" y2="447.5" stroke="#333" stroke-width="0.8"/><line x1="337.18" y1="450.0" x2="337.18" y2="447.5" stroke="#333" stroke-width="0.8"/><line x1="387.73" y1="450.0" x2="387.73" y2="447.5" stroke="#333" stroke-width="0.8"/><line x1="438.28" y1="450.0" x2="438.28" y2="447.5" stroke="#333" stroke-width="0.8"/><line x1="488.82" y1="450.0" x2="488.82" y2="447.5" stroke="#333" stroke-width="0.8"/><line x1="539.37" y1="450.0" x2="539.37" y2="447.5" stroke="#333" stroke-width="0.8"/><line x1="134.9" y1="556.50" x2="132.4" y2="556.50" stroke="#333" stroke-width="0.8"/><line x1="134.9" y1="536.30" x2="132.4" y2="536.30" stroke="#333" stroke-width="0.8"/><line x1="134.9" y1="516.10" x2="132.4" y2="516.10" stroke="#333" stroke-width="0.8"/><line x1="134.9" y1="495.90" x2="132.4" y2="495.90" stroke="#333" stroke-width="0.8"/><line x1="134.9" y1="475.70" x2="132.4" y2="475.70" stroke="#333" stroke-width="0.8"/><line x1="134.9" y1="455.50" x2="132.4" y2="455.50" stroke="#333" stroke-width="0.8"/><text x="135.00" y="570.30" font-size="6.5" text-anchor="middle" fill="#222" >0.0</text><text x="214.60" y="570.30" font-size="6.5" text-anchor="middle" fill="#222" >0.1</text><text x="294.20" y="570.30" font-size="6.5" text-anchor="middle" fill="#222" >0.2</text><text x="373.80" y="570.30" font-size="6.5" text-anchor="middle" fill="#222" >0.3</text><text x="453.40" y="570.30" font-size="6.5" text-anchor="middle" fill="#222" >0.4</text><text x="533.00" y="570.30" font-size="6.5" text-anchor="middle" fill="#222" >0.5</text><text x="135.00" y="445.00" font-size="6.3" text-anchor="middle" fill="#222" >0.0000</text><text x="185.55" y="445.00" font-size="6.3" text-anchor="middle" fill="#222" >0.0025</text><text x="236.09" y="445.00" font-size="6.3" text-anchor="middle" fill="#222" >0.0050</text><text x="286.64" y="445.00" font-size="6.3" text-anchor="middle" fill="#222" >0.0075</text><text x="337.18" y="445.00" font-size="6.3" text-anchor="middle" fill="#222" >0.0100</text><text x="387.73" y="445.00" font-size="6.3" text-anchor="middle" fill="#222" >0.0125</text><text x="438.28" y="445.00" font-size="6.3" text-anchor="middle" fill="#222" >0.0150</text><text x="488.82" y="445.00" font-size="6.3" text-anchor="middle" fill="#222" >0.0175</text><text x="539.37" y="445.00" font-size="6.3" text-anchor="middle" fill="#222" >0.0200</text><text x="131.00" y="558.70" font-size="6.5" text-anchor="end" fill="#222" >0.0</text><text x="131.00" y="538.50" font-size="6.5" text-anchor="end" fill="#222" >0.2</text><text x="131.00" y="518.30" font-size="6.5" text-anchor="end" fill="#222" >0.4</text><text x="131.00" y="498.10" font-size="6.5" text-anchor="end" fill="#222" >0.6</text><text x="131.00" y="477.90" font-size="6.5" text-anchor="end" fill="#222" >0.8</text><text x="131.00" y="457.70" font-size="6.5" text-anchor="end" fill="#222" >1.0</text><text x="338.00" y="431.00" font-size="7.25" text-anchor="middle" fill="#222" >Circularity RMSD Distribution</text><text x="338.00" y="438.60" font-size="6.1" text-anchor="middle" fill="#222" >Distance (inches)</text><text x="338.00" y="577.20" font-size="6.1" text-anchor="middle" fill="#222" >Distance (mm)</text><text x="0" y="0" font-size="6.8" text-anchor="middle" fill="#222" transform="translate(118.6,505.8) rotate(-90)">Fraction ≤ d</text><text x="118.00" y="505.00" font-size="5.2" text-anchor="start" fill="#222" >50%</text><path d="M128.6,503.3 h3.2 m-1.1,-1 l1.1,1 l-1.1,1" fill="none" stroke="#222" stroke-width="0.5"/><text x="133.80" y="505.00" font-size="5.2" text-anchor="start" fill="#222" >0.016</text><text x="151.00" y="464.40" font-size="5.2" text-anchor="start" fill="#222" >90%</text><path d="M161.6,462.7 h3.2 m-1.1,-1 l1.1,1 l-1.1,1" fill="none" stroke="#222" stroke-width="0.5"/><text x="166.80" y="464.40" font-size="5.2" text-anchor="start" fill="#222" >0.057</text><text x="298.00" y="459.00" font-size="5.2" text-anchor="start" fill="#222" >95%</text><path d="M308.6,457.3 h3.2 m-1.1,-1 l1.1,1 l-1.1,1" fill="none" stroke="#222" stroke-width="0.5"/><text x="313.80" y="459.00" font-size="5.2" text-anchor="start" fill="#222" >0.242</text><path d="M447.4,280.5 L545,280.5 L545,284.5 L447.4,284.5 Z" fill="#ee1290"/><path d="M574.5,282.5 L537,276.3 Q520,275 507.5,274.7 Q520,277 530,279 L545,281 L545,284 L530,286 Q520,288 507.5,290.3 Q520,290 537,288.7 Z" fill="#ee1290"/><text x="568.7" y="455.60" font-size="6.62" font-family="Liberation Mono, monospace" fill="#111" xml:space="preserve" style="white-space:pre">Circularity Statistics:</text><text x="568.7" y="462.98" font-size="6.62" font-family="Liberation Mono, monospace" fill="#111" xml:space="preserve" style="white-space:pre">  • Median RMSD = 0.0162 mm (0.0006 in)</text><text x="568.7" y="470.36" font-size="6.62" font-family="Liberation Mono, monospace" fill="#111" xml:space="preserve" style="white-space:pre">  • Min RMSD    = 0.0094 mm (0.0004 in)</text><text x="568.7" y="477.74" font-size="6.62" font-family="Liberation Mono, monospace" fill="#111" xml:space="preserve" style="white-space:pre">  • Max RMSD    = 0.5269 mm (0.0207 in)</text><text x="568.7" y="485.12" font-size="6.62" font-family="Liberation Mono, monospace" fill="#111" xml:space="preserve" style="white-space:pre">  • Mean RMSD   = 0.0429 mm (0.0017 in)</text><text x="568.7" y="492.50" font-size="6.62" font-family="Liberation Mono, monospace" fill="#111" xml:space="preserve" style="white-space:pre">  • Std RMSD    = 0.0815 mm (0.0032 in)</text><text x="568.7" y="499.88" font-size="6.62" font-family="Liberation Mono, monospace" fill="#111" xml:space="preserve" style="white-space:pre">  • Slice thickness = 0.0200 mm (0.0008 in)</text><text x="568.7" y="507.26" font-size="6.62" font-family="Liberation Mono, monospace" fill="#111" xml:space="preserve" style="white-space:pre">  • Analyzed slices = 6020</text><text x="568.7" y="514.64" font-size="6.62" font-family="Liberation Mono, monospace" fill="#111" xml:space="preserve" style="white-space:pre">  • Number of vertices = 15792373</text><text x="568.7" y="522.02" font-size="6.62" font-family="Liberation Mono, monospace" fill="#111" xml:space="preserve" style="white-space:pre">  • Median vertex spacing = 0.0200 mm (0.0008 in)</text></svg>
</body></html>
